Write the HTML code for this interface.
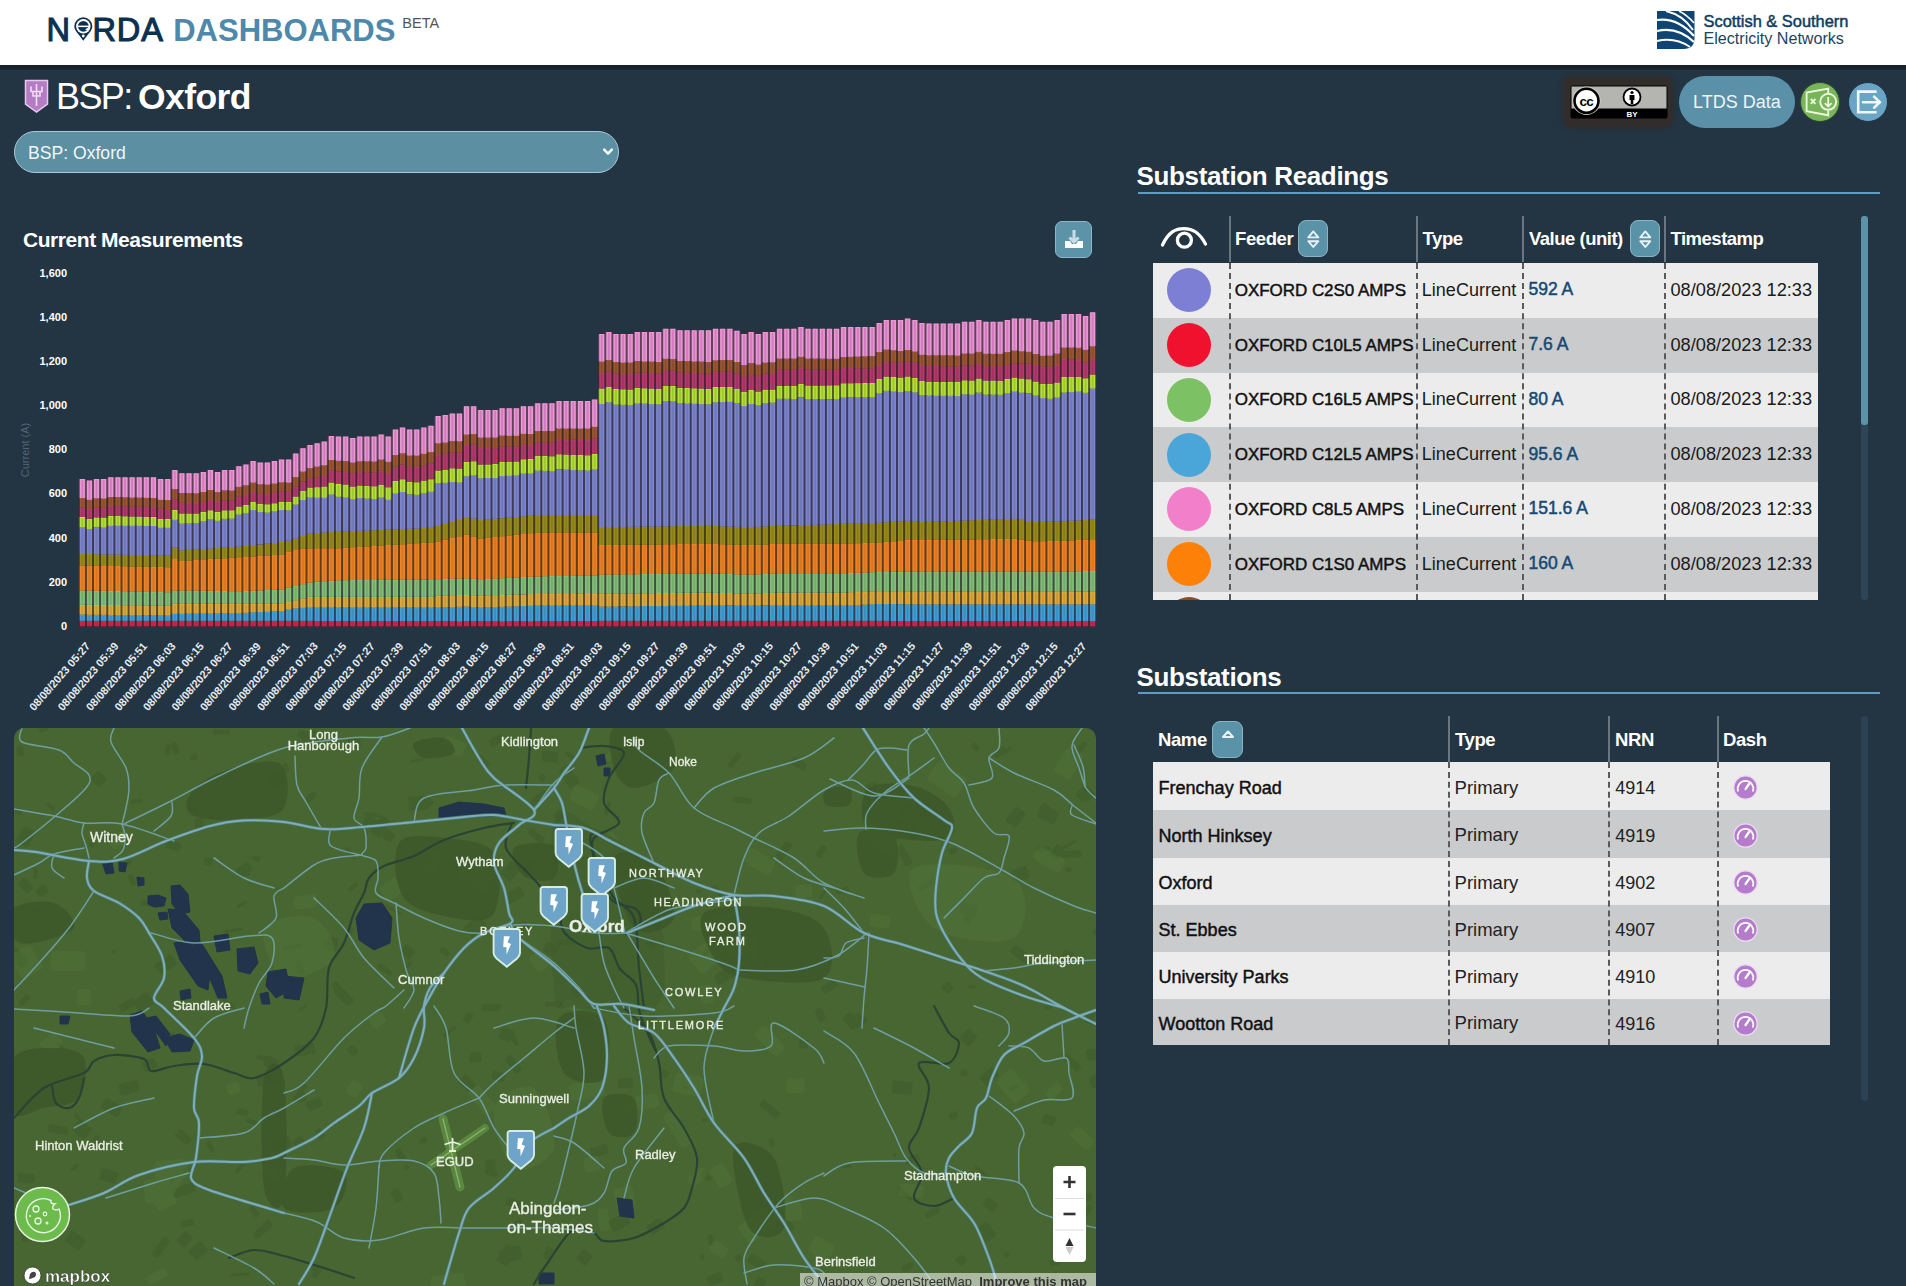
<!DOCTYPE html>
<html><head><meta charset="utf-8"><title>BSP: Oxford</title>
<style>
*{box-sizing:border-box;margin:0;padding:0}
html,body{width:1906px;height:1286px;overflow:hidden}
body{background:#233442;font-family:"Liberation Sans",sans-serif;position:relative;color:#fff}
.abs{position:absolute}
#hdr{left:0;top:0;width:1906px;height:65px;background:#fff}
#hdrline{left:0;top:65px;width:1906px;height:4px;background:#18222d}
#hdrline2{left:0;top:69px;width:1906px;height:1px;background:#1f2c3a}
.logo{left:47px;top:12px;font-size:32px;font-weight:bold;letter-spacing:0px;white-space:nowrap;line-height:36px}
.logo .n{color:#0f3a5c}.logo .d{color:#5190b3}
.beta{left:403px;top:14px;font-size:15px;color:#555;font-weight:normal;letter-spacing:0.5px}
.ssen{left:1703px;top:12px;line-height:17px;color:#0e3a5f;white-space:nowrap}
.ssen .a{font-size:16px;font-weight:bold;letter-spacing:-0.2px}
.ssen .b{font-size:16px;letter-spacing:-0.2px}
.title{left:58px;top:76px;font-size:38px;white-space:nowrap;line-height:42px;color:#fff}
.title b{font-weight:bold}
.select{left:14px;top:131px;width:605px;height:42px;border-radius:21px;background:#5b8fa1;border:1px solid #a6cad9}
.select span{position:absolute;left:13px;top:10.5px;font-size:17.6px;color:#f2f6f8}
.select i{position:absolute;right:9px;top:13px;width:8px;height:8px;border-right:2px solid #fff;border-bottom:2px solid #fff;transform:rotate(45deg)}
.ctitle{left:23px;top:228px;font-size:21px;font-weight:bold;white-space:nowrap;letter-spacing:-0.45px}
.dl{left:1055px;top:221px;width:37px;height:37px;border-radius:7px;background:#5c93a8;border:1px solid #8ab8ca}
.chart{position:absolute;left:0;top:0}
.yl{font:bold 11px "Liberation Sans",sans-serif;fill:#fff}
.xl{font:bold 11px "Liberation Sans",sans-serif;fill:#e4eaf0}
.yt{font:11px "Liberation Sans",sans-serif;fill:#566472}
.ml{font-family:"Liberation Sans",sans-serif;fill:#e9eee4;stroke:#e9eee4;stroke-width:0.35px}
.ml2{font-family:"Liberation Sans",sans-serif}
.map{left:14px;top:728px;width:1082px;height:558px;border-radius:10px 10px 0 0;overflow:hidden}
.sec{font-size:26px;font-weight:bold;white-space:nowrap;letter-spacing:-0.3px}
.uline{height:2px;background:#5b9ec2}
table{border-collapse:collapse;color:#111}
.rt{left:1153px;top:216px;width:665px}
.rt th{height:47px;color:#fff;font-size:18px;font-weight:bold;text-align:left;vertical-align:middle;padding-left:7px;border-left:2px solid #7d8a96;letter-spacing:-0.3px;white-space:nowrap}
.rt th:first-child{border-left:none}
.rt td{height:54.7px;font-size:17px;vertical-align:middle;white-space:nowrap;border-left:2px dashed #555;padding-left:6px}
.rt td:first-child{border-left:none}
.c0{width:76px;padding-left:14px!important}
.c1{width:188px;font-weight:bold;letter-spacing:-0.3px}
.c2{width:106px;letter-spacing:-0.1px}
.c3{width:142px;font-weight:bold;color:#1a4c72}
.c4{width:153px}
.dot{display:inline-block;width:44px;height:44px;border-radius:50%;vertical-align:middle}
.sort{display:inline-block;width:29px;height:37px;border-radius:7px;background:#5c93a8;border:1px solid #8ab8ca;vertical-align:middle;margin-left:5px;position:relative}
.clip{left:1153px;top:216px;width:670px;height:384px;overflow:hidden}
.st{left:1153px;top:716px;width:677px}
.st th{height:47px;color:#fff;font-size:18px;font-weight:bold;text-align:left;vertical-align:middle;padding-left:7px;border-left:2px solid #7d8a96;letter-spacing:-0.3px}
.st th:first-child{border-left:none;padding-left:5px}
.st td{height:47px;font-size:18px;vertical-align:middle;white-space:nowrap;border-left:2px dashed #555;padding-left:7px}
.st td:first-child{border-left:none;padding-left:5px}
.s1{width:295px;font-weight:bold;letter-spacing:-0.3px}
.s2{width:160px}
.s3{width:110px}
.s4{width:112px;padding-left:15px!important}
.gauge{display:inline-block;width:25px;height:25px;vertical-align:middle}
.gauge svg{display:block}
.scr{background:#2e4557;border-radius:3px}
.tx{white-space:nowrap}
.sbtn{border-radius:8px;background:#5a93a8;border:1px solid #88b6c7}
</style></head><body>
<div id="hdr" class="abs"></div>
<div id="hdrline" class="abs"></div>
<div id="hdrline2" class="abs"></div>
<svg class="abs" style="left:0;top:0" width="1906" height="65" viewBox="0 0 1906 65">
 <g font-family="Liberation Sans, sans-serif">
 <text x="46.6" y="40.6" font-size="32.5" fill="#0c3150" stroke="#0c3150" stroke-width="1.1">N</text>
 <path d="M74.3 26.3 A9 9 0 1 1 92.3 26.3 Q92.3 30 88 34.5 L83.3 40.8 L78.6 34.5 Q74.3 30 74.3 26.3 Z" fill="#0c3150"/>
 <circle cx="83.3" cy="26.3" r="7.2" fill="#fff"/>
 <circle cx="83.3" cy="26.3" r="5.4" fill="#0c3150"/>
 <rect x="77.5" y="25.6" width="11.6" height="1.5" fill="#fff"/>
 <path d="M88.9 27.1 L88.9 30.5 L85 29.5 Z" fill="#fff"/>
 <circle cx="83.3" cy="36" r="1.4" fill="#fff"/>
 <text x="92.6" y="40.6" font-size="32.5" fill="#0c3150" stroke="#0c3150" stroke-width="1.1" letter-spacing="0.8">RDA</text>
 <text x="173.2" y="40.6" font-size="31" font-weight="bold" fill="#4e88ab">DASHBOARDS</text>
 <text x="402.3" y="28.3" font-size="14.5" fill="#555">BETA</text>
 <text x="1703.5" y="27" font-size="16.4" fill="#0f3d5f" stroke="#0f3d5f" stroke-width="0.5">Scottish &amp; Southern</text>
 <text x="1703.5" y="43.6" font-size="16.1" fill="#1d4462">Electricity Networks</text>
 </g>
 <g transform="translate(1657 11)">
  <path d="M0 0 H37.5 V27 Q37.5 38 26.5 38 H0 Z" fill="#0f4572"/>
  <path d="M0 9 Q20 6 37 25" stroke="#fff" stroke-width="2.2" fill="none"/>
  <path d="M0 20 Q20 15 37 31" stroke="#fff" stroke-width="2.2" fill="none"/>
  <path d="M0 30 Q18 26 33 36" stroke="#fff" stroke-width="2" fill="none"/>
  <path d="M9 0 Q26 4 36 19" stroke="#fff" stroke-width="2" fill="none"/>
  <path d="M22 0 Q30 4 37 12" stroke="#fff" stroke-width="1.5" fill="none"/>
 </g>
</svg>
<svg class="abs" style="left:24px;top:79px" width="25" height="35" viewBox="0 0 25 35">
 <path d="M1.5 1.5 H23.5 V25 L12.5 33 L1.5 25 Z" fill="#b47cc2" stroke="#e8c8f0" stroke-width="1.5"/>
 <path d="M12.5 5 V27 M7 7.5 V12.5 H18 V7.5 M9 13 V17 H16 V13" stroke="#f3def7" stroke-width="1.6" fill="none"/>
</svg>
<div class="abs" style="left:56px;top:78.5px;font-size:36px;line-height:36px;white-space:nowrap;letter-spacing:-1.6px">BSP:</div>
<div class="abs" style="left:138px;top:78.5px;font-size:35.5px;line-height:36px;white-space:nowrap;font-weight:bold;letter-spacing:-0.6px">Oxford</div>

<div class="abs select"><span>BSP: Oxford</span></div>
<svg class="abs" style="left:601px;top:146px" width="14" height="12" viewBox="0 0 14 12"><path d="M3.2 3.6 L7 7.6 L10.8 3.6" fill="none" stroke="#f4fafc" stroke-width="2.6" stroke-linecap="round" stroke-linejoin="round"/></svg>

<div class="abs" style="left:1565px;top:78px;width:106px;height:48px;background:#322d2b;border-radius:6px;box-shadow:0 0 4px 2px #322d2b"></div>
<svg class="abs" style="left:1570px;top:85px" width="98" height="34" viewBox="0 0 98 34">
 <rect x="0.5" y="0.5" width="97" height="33" rx="2" fill="#000"/>
 <rect x="1.5" y="1.5" width="95" height="22" fill="#b4b5b0"/>
 <circle cx="16.5" cy="15.8" r="14.2" fill="#c9cac6"/>
 <circle cx="16.5" cy="15.8" r="12" fill="#fff" stroke="#000" stroke-width="2.6"/>
 <text x="16.3" y="20.6" text-anchor="middle" font-family="Liberation Sans" font-weight="bold" font-size="13.5" letter-spacing="-0.8" fill="#000">cc</text>
 <circle cx="62" cy="12" r="8.5" fill="#fff" stroke="#000" stroke-width="1.8"/>
 <circle cx="62" cy="7.5" r="1.6" fill="#000"/>
 <path d="M59.5 10 H64.5 V15 H63.3 V19 H60.7 V15 H59.5 Z" fill="#000"/>
 <text x="62" y="32" text-anchor="middle" font-family="Liberation Sans" font-weight="bold" font-size="8" fill="#fff">BY</text>
</svg>
<div class="abs" style="left:1679px;top:76px;width:116px;height:52px;border-radius:26px;background:#5b91a8"></div>
<div class="abs" style="left:1693px;top:92px;font-size:18px;color:#eef5f8;white-space:nowrap">LTDS Data</div>
<svg class="abs" style="left:1800px;top:82px" width="40" height="40" viewBox="0 0 40 40">
 <circle cx="20" cy="20" r="19.5" fill="#78b45a" stroke="#2c4a2e" stroke-width="1"/>
 <path d="M28.2 11.1 V6.6 L6.6 10.6 V29.2 L28.2 33.3 V28.7" fill="none" stroke="#ecf8dc" stroke-width="1.9" stroke-linejoin="miter"/>
 <path d="M10.8 16.8 L15.4 21.8 M15.4 16.8 L10.8 21.8" stroke="#ecf8dc" stroke-width="1.9"/>
 <circle cx="28.2" cy="19.8" r="8" fill="#78b45a" stroke="#ecf8dc" stroke-width="1.9"/>
 <path d="M28.2 15 V24.6 M24.8 21.2 L28.2 24.6 L31.6 21.2" fill="none" stroke="#ecf8dc" stroke-width="1.8"/>
</svg>
<svg class="abs" style="left:1848px;top:82px" width="40" height="40" viewBox="0 0 40 40">
 <circle cx="20" cy="20" r="19.5" fill="#6ba5c6" stroke="#1d3446" stroke-width="1"/>
 <path d="M28.6 9.6 H10.2 V30.3 H28.6" fill="none" stroke="#f0f8fc" stroke-width="2.6"/>
 <path d="M15 20.2 H32 M26.1 14.6 L31.8 20.2 L26.1 25.7" fill="none" stroke="#f0f8fc" stroke-width="2.6" stroke-linecap="round"/>
</svg>

<div class="abs ctitle">Current Measurements</div>
<div class="abs dl"><svg width="36" height="36" viewBox="0 0 36 36"><path d="M18 8 V20 M13.5 15.5 L18 20 L22.5 15.5" stroke="#c8dde6" stroke-width="3" fill="none"/><path d="M9 19 H14 L16 22 H20 L22 19 H27 V26 H9 Z" fill="#fff"/></svg></div>
<svg class="chart" width="1110" height="720" viewBox="0 0 1110 720"><text x="67" y="629.8" text-anchor="end" class="yl">0</text><text x="67" y="585.6" text-anchor="end" class="yl">200</text><text x="67" y="541.5" text-anchor="end" class="yl">400</text><text x="67" y="497.3" text-anchor="end" class="yl">600</text><text x="67" y="453.1" text-anchor="end" class="yl">800</text><text x="67" y="409.0" text-anchor="end" class="yl">1,000</text><text x="67" y="364.8" text-anchor="end" class="yl">1,200</text><text x="67" y="320.7" text-anchor="end" class="yl">1,400</text><text x="67" y="276.5" text-anchor="end" class="yl">1,600</text><path fill="#56192d" d="M78.8 620.8 L85.9 620.8 L85.9 620.8 L93.0 620.8 L93.0 620.8 L100.1 620.8 L100.1 620.8 L107.3 620.8 L107.3 620.8 L114.4 620.8 L114.4 620.8 L121.5 620.8 L121.5 620.8 L128.6 620.8 L128.6 620.8 L135.7 620.8 L135.7 620.8 L142.8 620.8 L142.8 620.8 L149.9 620.8 L149.9 620.8 L157.1 620.8 L157.1 620.8 L164.2 620.8 L164.2 620.8 L171.3 620.8 L171.3 620.8 L178.4 620.8 L178.4 620.8 L185.5 620.8 L185.5 620.8 L192.6 620.8 L192.6 620.8 L199.8 620.8 L199.8 620.8 L206.9 620.8 L206.9 620.8 L214.0 620.8 L214.0 620.8 L221.1 620.8 L221.1 620.8 L228.2 620.8 L228.2 620.8 L235.3 620.8 L235.3 620.8 L242.4 620.8 L242.4 620.8 L249.6 620.8 L249.6 620.8 L256.7 620.8 L256.7 620.8 L263.8 620.8 L263.8 620.8 L270.9 620.8 L270.9 620.8 L278.0 620.8 L278.0 620.8 L285.1 620.8 L285.1 620.8 L292.2 620.8 L292.2 620.8 L299.4 620.8 L299.4 620.8 L306.5 620.8 L306.5 620.8 L313.6 620.8 L313.6 620.9 L320.7 620.9 L320.7 621.0 L327.8 621.0 L327.8 621.0 L334.9 621.0 L334.9 621.1 L342.1 621.1 L342.1 621.1 L349.2 621.1 L349.2 621.1 L356.3 621.1 L356.3 621.1 L363.4 621.1 L363.4 621.1 L370.5 621.1 L370.5 621.1 L377.6 621.1 L377.6 621.1 L384.7 621.1 L384.7 621.1 L391.9 621.1 L391.9 621.1 L399.0 621.1 L399.0 621.1 L406.1 621.1 L406.1 621.1 L413.2 621.1 L413.2 621.1 L420.3 621.1 L420.3 621.1 L427.4 621.1 L427.4 621.1 L434.6 621.1 L434.6 621.1 L441.7 621.1 L441.7 621.1 L448.8 621.1 L448.8 621.1 L455.9 621.1 L455.9 621.1 L463.0 621.1 L463.0 621.1 L470.1 621.1 L470.1 621.1 L477.2 621.1 L477.2 621.1 L484.4 621.1 L484.4 621.1 L491.5 621.1 L491.5 621.1 L498.6 621.1 L498.6 621.1 L505.7 621.1 L505.7 621.1 L512.8 621.1 L512.8 621.1 L519.9 621.1 L519.9 621.1 L527.0 621.1 L527.0 621.1 L534.2 621.1 L534.2 621.1 L541.3 621.1 L541.3 621.1 L548.4 621.1 L548.4 621.1 L555.5 621.1 L555.5 621.1 L562.6 621.1 L562.6 621.1 L569.7 621.1 L569.7 621.1 L576.9 621.1 L576.9 621.1 L584.0 621.1 L584.0 621.1 L591.1 621.1 L591.1 621.1 L598.2 621.1 L598.2 620.8 L605.3 620.8 L605.3 620.8 L612.4 620.8 L612.4 620.8 L619.5 620.8 L619.5 620.8 L626.7 620.8 L626.7 620.8 L633.8 620.8 L633.8 620.8 L640.9 620.8 L640.9 620.8 L648.0 620.8 L648.0 620.8 L655.1 620.8 L655.1 620.8 L662.2 620.8 L662.2 620.8 L669.3 620.8 L669.3 620.8 L676.5 620.8 L676.5 620.8 L683.6 620.8 L683.6 620.8 L690.7 620.8 L690.7 620.8 L697.8 620.8 L697.8 620.8 L704.9 620.8 L704.9 620.8 L712.0 620.8 L712.0 620.8 L719.1 620.8 L719.1 620.8 L726.3 620.8 L726.3 620.8 L733.4 620.8 L733.4 620.8 L740.5 620.8 L740.5 620.8 L747.6 620.8 L747.6 620.8 L754.7 620.8 L754.7 620.8 L761.8 620.8 L761.8 620.8 L769.0 620.8 L769.0 620.8 L776.1 620.8 L776.1 620.8 L783.2 620.8 L783.2 620.8 L790.3 620.8 L790.3 620.8 L797.4 620.8 L797.4 620.8 L804.5 620.8 L804.5 620.8 L811.6 620.8 L811.6 620.8 L818.8 620.8 L818.8 620.8 L825.9 620.8 L825.9 620.8 L833.0 620.8 L833.0 620.8 L840.1 620.8 L840.1 620.8 L847.2 620.8 L847.2 620.8 L854.3 620.8 L854.3 620.8 L861.4 620.8 L861.4 620.8 L868.6 620.8 L868.6 620.8 L875.7 620.8 L875.7 620.8 L882.8 620.8 L882.8 620.8 L889.9 620.8 L889.9 620.9 L897.0 620.9 L897.0 621.0 L904.1 621.0 L904.1 621.0 L911.3 621.0 L911.3 621.0 L918.4 621.0 L918.4 621.0 L925.5 621.0 L925.5 621.0 L932.6 621.0 L932.6 621.0 L939.7 621.0 L939.7 621.0 L946.8 621.0 L946.8 621.0 L953.9 621.0 L953.9 621.0 L961.1 621.0 L961.1 621.0 L968.2 621.0 L968.2 621.0 L975.3 621.0 L975.3 621.0 L982.4 621.0 L982.4 621.0 L989.5 621.0 L989.5 621.0 L996.6 621.0 L996.6 621.0 L1003.8 621.0 L1003.8 621.0 L1010.9 621.0 L1010.9 621.0 L1018.0 621.0 L1018.0 621.0 L1025.1 621.0 L1025.1 621.0 L1032.2 621.0 L1032.2 621.0 L1039.3 621.0 L1039.3 621.0 L1046.4 621.0 L1046.4 621.0 L1053.6 621.0 L1053.6 621.0 L1060.7 621.0 L1060.7 621.0 L1067.8 621.0 L1067.8 621.0 L1074.9 621.0 L1074.9 621.0 L1082.0 621.0 L1082.0 620.9 L1089.1 620.9 L1089.1 620.9 L1096.2 620.9 L1096.2 626.3 L1089.1 626.3 L1089.1 626.3 L1082.0 626.3 L1082.0 626.3 L1074.9 626.3 L1074.9 626.3 L1067.8 626.3 L1067.8 626.3 L1060.7 626.3 L1060.7 626.3 L1053.6 626.3 L1053.6 626.3 L1046.4 626.3 L1046.4 626.3 L1039.3 626.3 L1039.3 626.3 L1032.2 626.3 L1032.2 626.3 L1025.1 626.3 L1025.1 626.3 L1018.0 626.3 L1018.0 626.3 L1010.9 626.3 L1010.9 626.3 L1003.8 626.3 L1003.8 626.3 L996.6 626.3 L996.6 626.3 L989.5 626.3 L989.5 626.3 L982.4 626.3 L982.4 626.3 L975.3 626.3 L975.3 626.3 L968.2 626.3 L968.2 626.3 L961.1 626.3 L961.1 626.3 L953.9 626.3 L953.9 626.3 L946.8 626.3 L946.8 626.3 L939.7 626.3 L939.7 626.3 L932.6 626.3 L932.6 626.3 L925.5 626.3 L925.5 626.3 L918.4 626.3 L918.4 626.3 L911.3 626.3 L911.3 626.3 L904.1 626.3 L904.1 626.3 L897.0 626.3 L897.0 626.3 L889.9 626.3 L889.9 626.3 L882.8 626.3 L882.8 626.3 L875.7 626.3 L875.7 626.3 L868.6 626.3 L868.6 626.3 L861.4 626.3 L861.4 626.3 L854.3 626.3 L854.3 626.3 L847.2 626.3 L847.2 626.3 L840.1 626.3 L840.1 626.3 L833.0 626.3 L833.0 626.3 L825.9 626.3 L825.9 626.3 L818.8 626.3 L818.8 626.3 L811.6 626.3 L811.6 626.3 L804.5 626.3 L804.5 626.3 L797.4 626.3 L797.4 626.3 L790.3 626.3 L790.3 626.3 L783.2 626.3 L783.2 626.3 L776.1 626.3 L776.1 626.3 L769.0 626.3 L769.0 626.3 L761.8 626.3 L761.8 626.3 L754.7 626.3 L754.7 626.3 L747.6 626.3 L747.6 626.3 L740.5 626.3 L740.5 626.3 L733.4 626.3 L733.4 626.3 L726.3 626.3 L726.3 626.3 L719.1 626.3 L719.1 626.3 L712.0 626.3 L712.0 626.3 L704.9 626.3 L704.9 626.3 L697.8 626.3 L697.8 626.3 L690.7 626.3 L690.7 626.3 L683.6 626.3 L683.6 626.3 L676.5 626.3 L676.5 626.3 L669.3 626.3 L669.3 626.3 L662.2 626.3 L662.2 626.3 L655.1 626.3 L655.1 626.3 L648.0 626.3 L648.0 626.3 L640.9 626.3 L640.9 626.3 L633.8 626.3 L633.8 626.3 L626.7 626.3 L626.7 626.3 L619.5 626.3 L619.5 626.3 L612.4 626.3 L612.4 626.3 L605.3 626.3 L605.3 626.3 L598.2 626.3 L598.2 626.3 L591.1 626.3 L591.1 626.3 L584.0 626.3 L584.0 626.3 L576.9 626.3 L576.9 626.3 L569.7 626.3 L569.7 626.3 L562.6 626.3 L562.6 626.3 L555.5 626.3 L555.5 626.3 L548.4 626.3 L548.4 626.3 L541.3 626.3 L541.3 626.3 L534.2 626.3 L534.2 626.3 L527.0 626.3 L527.0 626.3 L519.9 626.3 L519.9 626.3 L512.8 626.3 L512.8 626.3 L505.7 626.3 L505.7 626.3 L498.6 626.3 L498.6 626.3 L491.5 626.3 L491.5 626.3 L484.4 626.3 L484.4 626.3 L477.2 626.3 L477.2 626.3 L470.1 626.3 L470.1 626.3 L463.0 626.3 L463.0 626.3 L455.9 626.3 L455.9 626.3 L448.8 626.3 L448.8 626.3 L441.7 626.3 L441.7 626.3 L434.6 626.3 L434.6 626.3 L427.4 626.3 L427.4 626.3 L420.3 626.3 L420.3 626.3 L413.2 626.3 L413.2 626.3 L406.1 626.3 L406.1 626.3 L399.0 626.3 L399.0 626.3 L391.9 626.3 L391.9 626.3 L384.7 626.3 L384.7 626.3 L377.6 626.3 L377.6 626.3 L370.5 626.3 L370.5 626.3 L363.4 626.3 L363.4 626.3 L356.3 626.3 L356.3 626.3 L349.2 626.3 L349.2 626.3 L342.1 626.3 L342.1 626.3 L334.9 626.3 L334.9 626.3 L327.8 626.3 L327.8 626.3 L320.7 626.3 L320.7 626.3 L313.6 626.3 L313.6 626.3 L306.5 626.3 L306.5 626.3 L299.4 626.3 L299.4 626.3 L292.2 626.3 L292.2 626.3 L285.1 626.3 L285.1 626.3 L278.0 626.3 L278.0 626.3 L270.9 626.3 L270.9 626.3 L263.8 626.3 L263.8 626.3 L256.7 626.3 L256.7 626.3 L249.6 626.3 L249.6 626.3 L242.4 626.3 L242.4 626.3 L235.3 626.3 L235.3 626.3 L228.2 626.3 L228.2 626.3 L221.1 626.3 L221.1 626.3 L214.0 626.3 L214.0 626.3 L206.9 626.3 L206.9 626.3 L199.8 626.3 L199.8 626.3 L192.6 626.3 L192.6 626.3 L185.5 626.3 L185.5 626.3 L178.4 626.3 L178.4 626.3 L171.3 626.3 L171.3 626.3 L164.2 626.3 L164.2 626.3 L157.1 626.3 L157.1 626.3 L149.9 626.3 L149.9 626.3 L142.8 626.3 L142.8 626.3 L135.7 626.3 L135.7 626.3 L128.6 626.3 L128.6 626.3 L121.5 626.3 L121.5 626.3 L114.4 626.3 L114.4 626.3 L107.3 626.3 L107.3 626.3 L100.1 626.3 L100.1 626.3 L93.0 626.3 L93.0 626.3 L85.9 626.3 L85.9 626.3 L78.8 626.3Z"/><path fill="#27455c" d="M78.8 614.6 L85.9 614.6 L85.9 614.7 L93.0 614.7 L93.0 614.7 L100.1 614.7 L100.1 614.8 L107.3 614.8 L107.3 614.9 L114.4 614.9 L114.4 614.9 L121.5 614.9 L121.5 615.0 L128.6 615.0 L128.6 615.1 L135.7 615.1 L135.7 615.1 L142.8 615.1 L142.8 615.2 L149.9 615.2 L149.9 615.3 L157.1 615.3 L157.1 615.3 L164.2 615.3 L164.2 615.4 L171.3 615.4 L171.3 613.7 L178.4 613.7 L178.4 613.7 L185.5 613.7 L185.5 613.6 L192.6 613.6 L192.6 613.5 L199.8 613.5 L199.8 613.4 L206.9 613.4 L206.9 613.4 L214.0 613.4 L214.0 613.3 L221.1 613.3 L221.1 613.2 L228.2 613.2 L228.2 613.1 L235.3 613.1 L235.3 613.0 L242.4 613.0 L242.4 612.7 L249.6 612.7 L249.6 612.3 L256.7 612.3 L256.7 612.0 L263.8 612.0 L263.8 611.7 L270.9 611.7 L270.9 611.3 L278.0 611.3 L278.0 611.0 L285.1 611.0 L285.1 609.6 L292.2 609.6 L292.2 608.3 L299.4 608.3 L299.4 607.8 L306.5 607.8 L306.5 607.4 L313.6 607.4 L313.6 607.4 L320.7 607.4 L320.7 607.5 L327.8 607.5 L327.8 607.5 L334.9 607.5 L334.9 607.5 L342.1 607.5 L342.1 607.5 L349.2 607.5 L349.2 607.5 L356.3 607.5 L356.3 607.5 L363.4 607.5 L363.4 607.5 L370.5 607.5 L370.5 607.5 L377.6 607.5 L377.6 607.5 L384.7 607.5 L384.7 607.5 L391.9 607.5 L391.9 607.5 L399.0 607.5 L399.0 607.5 L406.1 607.5 L406.1 607.5 L413.2 607.5 L413.2 607.5 L420.3 607.5 L420.3 607.5 L427.4 607.5 L427.4 607.5 L434.6 607.5 L434.6 607.5 L441.7 607.5 L441.7 607.2 L448.8 607.2 L448.8 607.0 L455.9 607.0 L455.9 606.8 L463.0 606.8 L463.0 606.5 L470.1 606.5 L470.1 607.0 L477.2 607.0 L477.2 607.5 L484.4 607.5 L484.4 607.2 L491.5 607.2 L491.5 607.0 L498.6 607.0 L498.6 606.8 L505.7 606.8 L505.7 606.5 L512.8 606.5 L512.8 606.2 L519.9 606.2 L519.9 606.0 L527.0 606.0 L527.0 605.8 L534.2 605.8 L534.2 605.5 L541.3 605.5 L541.3 605.5 L548.4 605.5 L548.4 605.5 L555.5 605.5 L555.5 605.5 L562.6 605.5 L562.6 605.5 L569.7 605.5 L569.7 605.5 L576.9 605.5 L576.9 605.5 L584.0 605.5 L584.0 605.5 L591.1 605.5 L591.1 605.5 L598.2 605.5 L598.2 606.6 L605.3 606.6 L605.3 606.5 L612.4 606.5 L612.4 606.4 L619.5 606.4 L619.5 606.4 L626.7 606.4 L626.7 606.3 L633.8 606.3 L633.8 606.2 L640.9 606.2 L640.9 606.1 L648.0 606.1 L648.0 606.0 L655.1 606.0 L655.1 606.0 L662.2 606.0 L662.2 605.9 L669.3 605.9 L669.3 605.8 L676.5 605.8 L676.5 605.7 L683.6 605.7 L683.6 605.6 L690.7 605.6 L690.7 605.6 L697.8 605.6 L697.8 605.5 L704.9 605.5 L704.9 605.4 L712.0 605.4 L712.0 605.4 L719.1 605.4 L719.1 605.4 L726.3 605.4 L726.3 605.4 L733.4 605.4 L733.4 605.4 L740.5 605.4 L740.5 605.4 L747.6 605.4 L747.6 605.4 L754.7 605.4 L754.7 605.4 L761.8 605.4 L761.8 605.4 L769.0 605.4 L769.0 605.4 L776.1 605.4 L776.1 605.4 L783.2 605.4 L783.2 605.4 L790.3 605.4 L790.3 605.4 L797.4 605.4 L797.4 605.4 L804.5 605.4 L804.5 605.4 L811.6 605.4 L811.6 605.4 L818.8 605.4 L818.8 605.4 L825.9 605.4 L825.9 605.4 L833.0 605.4 L833.0 605.4 L840.1 605.4 L840.1 605.4 L847.2 605.4 L847.2 605.1 L854.3 605.1 L854.3 604.8 L861.4 604.8 L861.4 604.6 L868.6 604.6 L868.6 604.3 L875.7 604.3 L875.7 604.0 L882.8 604.0 L882.8 604.0 L889.9 604.0 L889.9 604.1 L897.0 604.1 L897.0 604.2 L904.1 604.2 L904.1 604.2 L911.3 604.2 L911.3 604.2 L918.4 604.2 L918.4 604.2 L925.5 604.2 L925.5 604.2 L932.6 604.2 L932.6 604.2 L939.7 604.2 L939.7 604.2 L946.8 604.2 L946.8 604.2 L953.9 604.2 L953.9 604.2 L961.1 604.2 L961.1 604.2 L968.2 604.2 L968.2 604.2 L975.3 604.2 L975.3 604.2 L982.4 604.2 L982.4 604.2 L989.5 604.2 L989.5 604.2 L996.6 604.2 L996.6 604.2 L1003.8 604.2 L1003.8 604.2 L1010.9 604.2 L1010.9 604.2 L1018.0 604.2 L1018.0 604.2 L1025.1 604.2 L1025.1 604.2 L1032.2 604.2 L1032.2 604.2 L1039.3 604.2 L1039.3 604.2 L1046.4 604.2 L1046.4 604.2 L1053.6 604.2 L1053.6 604.2 L1060.7 604.2 L1060.7 604.2 L1067.8 604.2 L1067.8 604.2 L1074.9 604.2 L1074.9 604.2 L1082.0 604.2 L1082.0 604.2 L1089.1 604.2 L1089.1 604.2 L1096.2 604.2 L1096.2 620.9 L1089.1 620.9 L1089.1 620.9 L1082.0 620.9 L1082.0 621.0 L1074.9 621.0 L1074.9 621.0 L1067.8 621.0 L1067.8 621.0 L1060.7 621.0 L1060.7 621.0 L1053.6 621.0 L1053.6 621.0 L1046.4 621.0 L1046.4 621.0 L1039.3 621.0 L1039.3 621.0 L1032.2 621.0 L1032.2 621.0 L1025.1 621.0 L1025.1 621.0 L1018.0 621.0 L1018.0 621.0 L1010.9 621.0 L1010.9 621.0 L1003.8 621.0 L1003.8 621.0 L996.6 621.0 L996.6 621.0 L989.5 621.0 L989.5 621.0 L982.4 621.0 L982.4 621.0 L975.3 621.0 L975.3 621.0 L968.2 621.0 L968.2 621.0 L961.1 621.0 L961.1 621.0 L953.9 621.0 L953.9 621.0 L946.8 621.0 L946.8 621.0 L939.7 621.0 L939.7 621.0 L932.6 621.0 L932.6 621.0 L925.5 621.0 L925.5 621.0 L918.4 621.0 L918.4 621.0 L911.3 621.0 L911.3 621.0 L904.1 621.0 L904.1 621.0 L897.0 621.0 L897.0 620.9 L889.9 620.9 L889.9 620.8 L882.8 620.8 L882.8 620.8 L875.7 620.8 L875.7 620.8 L868.6 620.8 L868.6 620.8 L861.4 620.8 L861.4 620.8 L854.3 620.8 L854.3 620.8 L847.2 620.8 L847.2 620.8 L840.1 620.8 L840.1 620.8 L833.0 620.8 L833.0 620.8 L825.9 620.8 L825.9 620.8 L818.8 620.8 L818.8 620.8 L811.6 620.8 L811.6 620.8 L804.5 620.8 L804.5 620.8 L797.4 620.8 L797.4 620.8 L790.3 620.8 L790.3 620.8 L783.2 620.8 L783.2 620.8 L776.1 620.8 L776.1 620.8 L769.0 620.8 L769.0 620.8 L761.8 620.8 L761.8 620.8 L754.7 620.8 L754.7 620.8 L747.6 620.8 L747.6 620.8 L740.5 620.8 L740.5 620.8 L733.4 620.8 L733.4 620.8 L726.3 620.8 L726.3 620.8 L719.1 620.8 L719.1 620.8 L712.0 620.8 L712.0 620.8 L704.9 620.8 L704.9 620.8 L697.8 620.8 L697.8 620.8 L690.7 620.8 L690.7 620.8 L683.6 620.8 L683.6 620.8 L676.5 620.8 L676.5 620.8 L669.3 620.8 L669.3 620.8 L662.2 620.8 L662.2 620.8 L655.1 620.8 L655.1 620.8 L648.0 620.8 L648.0 620.8 L640.9 620.8 L640.9 620.8 L633.8 620.8 L633.8 620.8 L626.7 620.8 L626.7 620.8 L619.5 620.8 L619.5 620.8 L612.4 620.8 L612.4 620.8 L605.3 620.8 L605.3 620.8 L598.2 620.8 L598.2 621.1 L591.1 621.1 L591.1 621.1 L584.0 621.1 L584.0 621.1 L576.9 621.1 L576.9 621.1 L569.7 621.1 L569.7 621.1 L562.6 621.1 L562.6 621.1 L555.5 621.1 L555.5 621.1 L548.4 621.1 L548.4 621.1 L541.3 621.1 L541.3 621.1 L534.2 621.1 L534.2 621.1 L527.0 621.1 L527.0 621.1 L519.9 621.1 L519.9 621.1 L512.8 621.1 L512.8 621.1 L505.7 621.1 L505.7 621.1 L498.6 621.1 L498.6 621.1 L491.5 621.1 L491.5 621.1 L484.4 621.1 L484.4 621.1 L477.2 621.1 L477.2 621.1 L470.1 621.1 L470.1 621.1 L463.0 621.1 L463.0 621.1 L455.9 621.1 L455.9 621.1 L448.8 621.1 L448.8 621.1 L441.7 621.1 L441.7 621.1 L434.6 621.1 L434.6 621.1 L427.4 621.1 L427.4 621.1 L420.3 621.1 L420.3 621.1 L413.2 621.1 L413.2 621.1 L406.1 621.1 L406.1 621.1 L399.0 621.1 L399.0 621.1 L391.9 621.1 L391.9 621.1 L384.7 621.1 L384.7 621.1 L377.6 621.1 L377.6 621.1 L370.5 621.1 L370.5 621.1 L363.4 621.1 L363.4 621.1 L356.3 621.1 L356.3 621.1 L349.2 621.1 L349.2 621.1 L342.1 621.1 L342.1 621.1 L334.9 621.1 L334.9 621.0 L327.8 621.0 L327.8 621.0 L320.7 621.0 L320.7 620.9 L313.6 620.9 L313.6 620.8 L306.5 620.8 L306.5 620.8 L299.4 620.8 L299.4 620.8 L292.2 620.8 L292.2 620.8 L285.1 620.8 L285.1 620.8 L278.0 620.8 L278.0 620.8 L270.9 620.8 L270.9 620.8 L263.8 620.8 L263.8 620.8 L256.7 620.8 L256.7 620.8 L249.6 620.8 L249.6 620.8 L242.4 620.8 L242.4 620.8 L235.3 620.8 L235.3 620.8 L228.2 620.8 L228.2 620.8 L221.1 620.8 L221.1 620.8 L214.0 620.8 L214.0 620.8 L206.9 620.8 L206.9 620.8 L199.8 620.8 L199.8 620.8 L192.6 620.8 L192.6 620.8 L185.5 620.8 L185.5 620.8 L178.4 620.8 L178.4 620.8 L171.3 620.8 L171.3 620.8 L164.2 620.8 L164.2 620.8 L157.1 620.8 L157.1 620.8 L149.9 620.8 L149.9 620.8 L142.8 620.8 L142.8 620.8 L135.7 620.8 L135.7 620.8 L128.6 620.8 L128.6 620.8 L121.5 620.8 L121.5 620.8 L114.4 620.8 L114.4 620.8 L107.3 620.8 L107.3 620.8 L100.1 620.8 L100.1 620.8 L93.0 620.8 L93.0 620.8 L85.9 620.8 L85.9 620.8 L78.8 620.8Z"/><path fill="#5e4926" d="M78.8 604.7 L85.9 604.7 L85.9 604.8 L93.0 604.8 L93.0 604.9 L100.1 604.9 L100.1 604.9 L107.3 604.9 L107.3 605.0 L114.4 605.0 L114.4 605.1 L121.5 605.1 L121.5 605.2 L128.6 605.2 L128.6 605.2 L135.7 605.2 L135.7 605.3 L142.8 605.3 L142.8 605.4 L149.9 605.4 L149.9 605.5 L157.1 605.5 L157.1 605.5 L164.2 605.5 L164.2 605.6 L171.3 605.6 L171.3 603.8 L178.4 603.8 L178.4 603.8 L185.5 603.8 L185.5 603.8 L192.6 603.8 L192.6 603.8 L199.8 603.8 L199.8 603.8 L206.9 603.8 L206.9 603.8 L214.0 603.8 L214.0 603.8 L221.1 603.8 L221.1 603.8 L228.2 603.8 L228.2 603.8 L235.3 603.8 L235.3 603.8 L242.4 603.8 L242.4 603.8 L249.6 603.8 L249.6 603.8 L256.7 603.8 L256.7 603.8 L263.8 603.8 L263.8 603.8 L270.9 603.8 L270.9 603.8 L278.0 603.8 L278.0 603.8 L285.1 603.8 L285.1 602.0 L292.2 602.0 L292.2 600.3 L299.4 600.3 L299.4 598.5 L306.5 598.5 L306.5 596.7 L313.6 596.7 L313.6 596.7 L320.7 596.7 L320.7 596.8 L327.8 596.8 L327.8 596.8 L334.9 596.8 L334.9 596.8 L342.1 596.8 L342.1 596.8 L349.2 596.8 L349.2 596.8 L356.3 596.8 L356.3 596.8 L363.4 596.8 L363.4 596.8 L370.5 596.8 L370.5 596.8 L377.6 596.8 L377.6 596.8 L384.7 596.8 L384.7 596.8 L391.9 596.8 L391.9 596.8 L399.0 596.8 L399.0 596.8 L406.1 596.8 L406.1 596.8 L413.2 596.8 L413.2 596.8 L420.3 596.8 L420.3 596.8 L427.4 596.8 L427.4 596.8 L434.6 596.8 L434.6 595.8 L441.7 595.8 L441.7 595.6 L448.8 595.6 L448.8 595.3 L455.9 595.3 L455.9 595.1 L463.0 595.1 L463.0 594.9 L470.1 594.9 L470.1 595.3 L477.2 595.3 L477.2 595.8 L484.4 595.8 L484.4 595.6 L491.5 595.6 L491.5 595.3 L498.6 595.3 L498.6 595.1 L505.7 595.1 L505.7 594.8 L512.8 594.8 L512.8 594.6 L519.9 594.6 L519.9 594.4 L527.0 594.4 L527.0 594.1 L534.2 594.1 L534.2 593.9 L541.3 593.9 L541.3 593.9 L548.4 593.9 L548.4 593.9 L555.5 593.9 L555.5 593.9 L562.6 593.9 L562.6 593.9 L569.7 593.9 L569.7 593.9 L576.9 593.9 L576.9 593.9 L584.0 593.9 L584.0 593.9 L591.1 593.9 L591.1 593.9 L598.2 593.9 L598.2 593.8 L605.3 593.8 L605.3 593.7 L612.4 593.7 L612.4 593.6 L619.5 593.6 L619.5 593.5 L626.7 593.5 L626.7 593.5 L633.8 593.5 L633.8 593.4 L640.9 593.4 L640.9 593.3 L648.0 593.3 L648.0 593.2 L655.1 593.2 L655.1 593.1 L662.2 593.1 L662.2 593.0 L669.3 593.0 L669.3 592.9 L676.5 592.9 L676.5 592.8 L683.6 592.8 L683.6 592.8 L690.7 592.8 L690.7 592.7 L697.8 592.7 L697.8 592.6 L704.9 592.6 L704.9 592.5 L712.0 592.5 L712.0 592.7 L719.1 592.7 L719.1 592.9 L726.3 592.9 L726.3 593.1 L733.4 593.1 L733.4 593.4 L740.5 593.4 L740.5 593.6 L747.6 593.6 L747.6 593.8 L754.7 593.8 L754.7 593.5 L761.8 593.5 L761.8 593.1 L769.0 593.1 L769.0 592.8 L776.1 592.8 L776.1 592.5 L783.2 592.5 L783.2 592.5 L790.3 592.5 L790.3 592.5 L797.4 592.5 L797.4 592.5 L804.5 592.5 L804.5 592.5 L811.6 592.5 L811.6 592.5 L818.8 592.5 L818.8 592.5 L825.9 592.5 L825.9 592.5 L833.0 592.5 L833.0 592.5 L840.1 592.5 L840.1 592.5 L847.2 592.5 L847.2 592.2 L854.3 592.2 L854.3 592.0 L861.4 592.0 L861.4 591.7 L868.6 591.7 L868.6 591.5 L875.7 591.5 L875.7 591.2 L882.8 591.2 L882.8 591.2 L889.9 591.2 L889.9 591.3 L897.0 591.3 L897.0 591.3 L904.1 591.3 L904.1 591.4 L911.3 591.4 L911.3 591.4 L918.4 591.4 L918.4 591.4 L925.5 591.4 L925.5 591.4 L932.6 591.4 L932.6 591.4 L939.7 591.4 L939.7 591.4 L946.8 591.4 L946.8 591.4 L953.9 591.4 L953.9 591.4 L961.1 591.4 L961.1 591.4 L968.2 591.4 L968.2 591.4 L975.3 591.4 L975.3 591.4 L982.4 591.4 L982.4 591.4 L989.5 591.4 L989.5 591.4 L996.6 591.4 L996.6 591.4 L1003.8 591.4 L1003.8 591.4 L1010.9 591.4 L1010.9 591.4 L1018.0 591.4 L1018.0 591.4 L1025.1 591.4 L1025.1 591.4 L1032.2 591.4 L1032.2 591.4 L1039.3 591.4 L1039.3 591.4 L1046.4 591.4 L1046.4 591.4 L1053.6 591.4 L1053.6 591.4 L1060.7 591.4 L1060.7 591.4 L1067.8 591.4 L1067.8 591.4 L1074.9 591.4 L1074.9 591.4 L1082.0 591.4 L1082.0 591.4 L1089.1 591.4 L1089.1 591.4 L1096.2 591.4 L1096.2 604.2 L1089.1 604.2 L1089.1 604.2 L1082.0 604.2 L1082.0 604.2 L1074.9 604.2 L1074.9 604.2 L1067.8 604.2 L1067.8 604.2 L1060.7 604.2 L1060.7 604.2 L1053.6 604.2 L1053.6 604.2 L1046.4 604.2 L1046.4 604.2 L1039.3 604.2 L1039.3 604.2 L1032.2 604.2 L1032.2 604.2 L1025.1 604.2 L1025.1 604.2 L1018.0 604.2 L1018.0 604.2 L1010.9 604.2 L1010.9 604.2 L1003.8 604.2 L1003.8 604.2 L996.6 604.2 L996.6 604.2 L989.5 604.2 L989.5 604.2 L982.4 604.2 L982.4 604.2 L975.3 604.2 L975.3 604.2 L968.2 604.2 L968.2 604.2 L961.1 604.2 L961.1 604.2 L953.9 604.2 L953.9 604.2 L946.8 604.2 L946.8 604.2 L939.7 604.2 L939.7 604.2 L932.6 604.2 L932.6 604.2 L925.5 604.2 L925.5 604.2 L918.4 604.2 L918.4 604.2 L911.3 604.2 L911.3 604.2 L904.1 604.2 L904.1 604.2 L897.0 604.2 L897.0 604.1 L889.9 604.1 L889.9 604.0 L882.8 604.0 L882.8 604.0 L875.7 604.0 L875.7 604.3 L868.6 604.3 L868.6 604.6 L861.4 604.6 L861.4 604.8 L854.3 604.8 L854.3 605.1 L847.2 605.1 L847.2 605.4 L840.1 605.4 L840.1 605.4 L833.0 605.4 L833.0 605.4 L825.9 605.4 L825.9 605.4 L818.8 605.4 L818.8 605.4 L811.6 605.4 L811.6 605.4 L804.5 605.4 L804.5 605.4 L797.4 605.4 L797.4 605.4 L790.3 605.4 L790.3 605.4 L783.2 605.4 L783.2 605.4 L776.1 605.4 L776.1 605.4 L769.0 605.4 L769.0 605.4 L761.8 605.4 L761.8 605.4 L754.7 605.4 L754.7 605.4 L747.6 605.4 L747.6 605.4 L740.5 605.4 L740.5 605.4 L733.4 605.4 L733.4 605.4 L726.3 605.4 L726.3 605.4 L719.1 605.4 L719.1 605.4 L712.0 605.4 L712.0 605.4 L704.9 605.4 L704.9 605.5 L697.8 605.5 L697.8 605.6 L690.7 605.6 L690.7 605.6 L683.6 605.6 L683.6 605.7 L676.5 605.7 L676.5 605.8 L669.3 605.8 L669.3 605.9 L662.2 605.9 L662.2 606.0 L655.1 606.0 L655.1 606.0 L648.0 606.0 L648.0 606.1 L640.9 606.1 L640.9 606.2 L633.8 606.2 L633.8 606.3 L626.7 606.3 L626.7 606.4 L619.5 606.4 L619.5 606.4 L612.4 606.4 L612.4 606.5 L605.3 606.5 L605.3 606.6 L598.2 606.6 L598.2 605.5 L591.1 605.5 L591.1 605.5 L584.0 605.5 L584.0 605.5 L576.9 605.5 L576.9 605.5 L569.7 605.5 L569.7 605.5 L562.6 605.5 L562.6 605.5 L555.5 605.5 L555.5 605.5 L548.4 605.5 L548.4 605.5 L541.3 605.5 L541.3 605.5 L534.2 605.5 L534.2 605.8 L527.0 605.8 L527.0 606.0 L519.9 606.0 L519.9 606.2 L512.8 606.2 L512.8 606.5 L505.7 606.5 L505.7 606.8 L498.6 606.8 L498.6 607.0 L491.5 607.0 L491.5 607.2 L484.4 607.2 L484.4 607.5 L477.2 607.5 L477.2 607.0 L470.1 607.0 L470.1 606.5 L463.0 606.5 L463.0 606.8 L455.9 606.8 L455.9 607.0 L448.8 607.0 L448.8 607.2 L441.7 607.2 L441.7 607.5 L434.6 607.5 L434.6 607.5 L427.4 607.5 L427.4 607.5 L420.3 607.5 L420.3 607.5 L413.2 607.5 L413.2 607.5 L406.1 607.5 L406.1 607.5 L399.0 607.5 L399.0 607.5 L391.9 607.5 L391.9 607.5 L384.7 607.5 L384.7 607.5 L377.6 607.5 L377.6 607.5 L370.5 607.5 L370.5 607.5 L363.4 607.5 L363.4 607.5 L356.3 607.5 L356.3 607.5 L349.2 607.5 L349.2 607.5 L342.1 607.5 L342.1 607.5 L334.9 607.5 L334.9 607.5 L327.8 607.5 L327.8 607.5 L320.7 607.5 L320.7 607.4 L313.6 607.4 L313.6 607.4 L306.5 607.4 L306.5 607.8 L299.4 607.8 L299.4 608.3 L292.2 608.3 L292.2 609.6 L285.1 609.6 L285.1 611.0 L278.0 611.0 L278.0 611.3 L270.9 611.3 L270.9 611.7 L263.8 611.7 L263.8 612.0 L256.7 612.0 L256.7 612.3 L249.6 612.3 L249.6 612.7 L242.4 612.7 L242.4 613.0 L235.3 613.0 L235.3 613.1 L228.2 613.1 L228.2 613.2 L221.1 613.2 L221.1 613.3 L214.0 613.3 L214.0 613.4 L206.9 613.4 L206.9 613.4 L199.8 613.4 L199.8 613.5 L192.6 613.5 L192.6 613.6 L185.5 613.6 L185.5 613.7 L178.4 613.7 L178.4 613.7 L171.3 613.7 L171.3 615.4 L164.2 615.4 L164.2 615.3 L157.1 615.3 L157.1 615.3 L149.9 615.3 L149.9 615.2 L142.8 615.2 L142.8 615.1 L135.7 615.1 L135.7 615.1 L128.6 615.1 L128.6 615.0 L121.5 615.0 L121.5 614.9 L114.4 614.9 L114.4 614.9 L107.3 614.9 L107.3 614.8 L100.1 614.8 L100.1 614.7 L93.0 614.7 L93.0 614.7 L85.9 614.7 L85.9 614.6 L78.8 614.6Z"/><path fill="#3e503d" d="M78.8 590.4 L85.9 590.4 L85.9 590.5 L93.0 590.5 L93.0 590.7 L100.1 590.7 L100.1 590.8 L107.3 590.8 L107.3 591.0 L114.4 591.0 L114.4 591.1 L121.5 591.1 L121.5 591.3 L128.6 591.3 L128.6 591.5 L135.7 591.5 L135.7 591.6 L142.8 591.6 L142.8 591.8 L149.9 591.8 L149.9 591.9 L157.1 591.9 L157.1 592.1 L164.2 592.1 L164.2 592.2 L171.3 592.2 L171.3 590.4 L178.4 590.4 L178.4 590.4 L185.5 590.4 L185.5 590.5 L192.6 590.5 L192.6 590.6 L199.8 590.6 L199.8 590.7 L206.9 590.7 L206.9 590.8 L214.0 590.8 L214.0 591.0 L221.1 591.0 L221.1 591.1 L228.2 591.1 L228.2 591.2 L235.3 591.2 L235.3 591.3 L242.4 591.3 L242.4 591.0 L249.6 591.0 L249.6 590.7 L256.7 590.7 L256.7 590.4 L263.8 590.4 L263.8 590.1 L270.9 590.1 L270.9 589.8 L278.0 589.8 L278.0 589.5 L285.1 589.5 L285.1 587.8 L292.2 587.8 L292.2 586.0 L299.4 586.0 L299.4 584.2 L306.5 584.2 L306.5 582.4 L313.6 582.4 L313.6 581.9 L320.7 581.9 L320.7 581.3 L327.8 581.3 L327.8 580.8 L334.9 580.8 L334.9 580.3 L342.1 580.3 L342.1 580.2 L349.2 580.2 L349.2 580.1 L356.3 580.1 L356.3 580.1 L363.4 580.1 L363.4 580.0 L370.5 580.0 L370.5 579.9 L377.6 579.9 L377.6 579.8 L384.7 579.8 L384.7 579.8 L391.9 579.8 L391.9 579.7 L399.0 579.7 L399.0 579.6 L406.1 579.6 L406.1 579.5 L413.2 579.5 L413.2 579.5 L420.3 579.5 L420.3 579.4 L427.4 579.4 L427.4 579.3 L434.6 579.3 L434.6 579.3 L441.7 579.3 L441.7 579.0 L448.8 579.0 L448.8 578.8 L455.9 578.8 L455.9 578.5 L463.0 578.5 L463.0 578.3 L470.1 578.3 L470.1 578.8 L477.2 578.8 L477.2 579.3 L484.4 579.3 L484.4 578.9 L491.5 578.9 L491.5 578.6 L498.6 578.6 L498.6 578.2 L505.7 578.2 L505.7 577.8 L512.8 577.8 L512.8 577.5 L519.9 577.5 L519.9 577.1 L527.0 577.1 L527.0 576.8 L534.2 576.8 L534.2 576.4 L541.3 576.4 L541.3 576.3 L548.4 576.3 L548.4 576.1 L555.5 576.1 L555.5 576.0 L562.6 576.0 L562.6 575.9 L569.7 575.9 L569.7 575.8 L576.9 575.8 L576.9 575.6 L584.0 575.6 L584.0 575.5 L591.1 575.5 L591.1 575.4 L598.2 575.4 L598.2 574.6 L605.3 574.6 L605.3 574.5 L612.4 574.5 L612.4 574.4 L619.5 574.4 L619.5 574.3 L626.7 574.3 L626.7 574.3 L633.8 574.3 L633.8 574.2 L640.9 574.2 L640.9 574.1 L648.0 574.1 L648.0 574.0 L655.1 574.0 L655.1 573.9 L662.2 573.9 L662.2 573.8 L669.3 573.8 L669.3 573.7 L676.5 573.7 L676.5 573.6 L683.6 573.6 L683.6 573.6 L690.7 573.6 L690.7 573.5 L697.8 573.5 L697.8 573.4 L704.9 573.4 L704.9 573.3 L712.0 573.3 L712.0 573.5 L719.1 573.5 L719.1 573.7 L726.3 573.7 L726.3 574.0 L733.4 574.0 L733.4 574.2 L740.5 574.2 L740.5 574.4 L747.6 574.4 L747.6 574.6 L754.7 574.6 L754.7 574.3 L761.8 574.3 L761.8 574.0 L769.0 574.0 L769.0 573.6 L776.1 573.6 L776.1 573.3 L783.2 573.3 L783.2 573.3 L790.3 573.3 L790.3 573.3 L797.4 573.3 L797.4 573.3 L804.5 573.3 L804.5 573.3 L811.6 573.3 L811.6 573.3 L818.8 573.3 L818.8 573.3 L825.9 573.3 L825.9 573.3 L833.0 573.3 L833.0 573.3 L840.1 573.3 L840.1 573.3 L847.2 573.3 L847.2 573.0 L854.3 573.0 L854.3 572.8 L861.4 572.8 L861.4 572.5 L868.6 572.5 L868.6 572.3 L875.7 572.3 L875.7 572.0 L882.8 572.0 L882.8 571.9 L889.9 571.9 L889.9 571.8 L897.0 571.8 L897.0 571.7 L904.1 571.7 L904.1 571.6 L911.3 571.6 L911.3 571.6 L918.4 571.6 L918.4 571.6 L925.5 571.6 L925.5 571.6 L932.6 571.6 L932.6 571.6 L939.7 571.6 L939.7 571.6 L946.8 571.6 L946.8 571.6 L953.9 571.6 L953.9 571.6 L961.1 571.6 L961.1 571.6 L968.2 571.6 L968.2 571.6 L975.3 571.6 L975.3 571.6 L982.4 571.6 L982.4 571.6 L989.5 571.6 L989.5 571.6 L996.6 571.6 L996.6 571.6 L1003.8 571.6 L1003.8 571.6 L1010.9 571.6 L1010.9 571.6 L1018.0 571.6 L1018.0 571.6 L1025.1 571.6 L1025.1 571.6 L1032.2 571.6 L1032.2 571.6 L1039.3 571.6 L1039.3 571.6 L1046.4 571.6 L1046.4 571.6 L1053.6 571.6 L1053.6 571.6 L1060.7 571.6 L1060.7 571.6 L1067.8 571.6 L1067.8 571.4 L1074.9 571.4 L1074.9 571.2 L1082.0 571.2 L1082.0 571.1 L1089.1 571.1 L1089.1 570.9 L1096.2 570.9 L1096.2 591.4 L1089.1 591.4 L1089.1 591.4 L1082.0 591.4 L1082.0 591.4 L1074.9 591.4 L1074.9 591.4 L1067.8 591.4 L1067.8 591.4 L1060.7 591.4 L1060.7 591.4 L1053.6 591.4 L1053.6 591.4 L1046.4 591.4 L1046.4 591.4 L1039.3 591.4 L1039.3 591.4 L1032.2 591.4 L1032.2 591.4 L1025.1 591.4 L1025.1 591.4 L1018.0 591.4 L1018.0 591.4 L1010.9 591.4 L1010.9 591.4 L1003.8 591.4 L1003.8 591.4 L996.6 591.4 L996.6 591.4 L989.5 591.4 L989.5 591.4 L982.4 591.4 L982.4 591.4 L975.3 591.4 L975.3 591.4 L968.2 591.4 L968.2 591.4 L961.1 591.4 L961.1 591.4 L953.9 591.4 L953.9 591.4 L946.8 591.4 L946.8 591.4 L939.7 591.4 L939.7 591.4 L932.6 591.4 L932.6 591.4 L925.5 591.4 L925.5 591.4 L918.4 591.4 L918.4 591.4 L911.3 591.4 L911.3 591.4 L904.1 591.4 L904.1 591.3 L897.0 591.3 L897.0 591.3 L889.9 591.3 L889.9 591.2 L882.8 591.2 L882.8 591.2 L875.7 591.2 L875.7 591.5 L868.6 591.5 L868.6 591.7 L861.4 591.7 L861.4 592.0 L854.3 592.0 L854.3 592.2 L847.2 592.2 L847.2 592.5 L840.1 592.5 L840.1 592.5 L833.0 592.5 L833.0 592.5 L825.9 592.5 L825.9 592.5 L818.8 592.5 L818.8 592.5 L811.6 592.5 L811.6 592.5 L804.5 592.5 L804.5 592.5 L797.4 592.5 L797.4 592.5 L790.3 592.5 L790.3 592.5 L783.2 592.5 L783.2 592.5 L776.1 592.5 L776.1 592.8 L769.0 592.8 L769.0 593.1 L761.8 593.1 L761.8 593.5 L754.7 593.5 L754.7 593.8 L747.6 593.8 L747.6 593.6 L740.5 593.6 L740.5 593.4 L733.4 593.4 L733.4 593.1 L726.3 593.1 L726.3 592.9 L719.1 592.9 L719.1 592.7 L712.0 592.7 L712.0 592.5 L704.9 592.5 L704.9 592.6 L697.8 592.6 L697.8 592.7 L690.7 592.7 L690.7 592.8 L683.6 592.8 L683.6 592.8 L676.5 592.8 L676.5 592.9 L669.3 592.9 L669.3 593.0 L662.2 593.0 L662.2 593.1 L655.1 593.1 L655.1 593.2 L648.0 593.2 L648.0 593.3 L640.9 593.3 L640.9 593.4 L633.8 593.4 L633.8 593.5 L626.7 593.5 L626.7 593.5 L619.5 593.5 L619.5 593.6 L612.4 593.6 L612.4 593.7 L605.3 593.7 L605.3 593.8 L598.2 593.8 L598.2 593.9 L591.1 593.9 L591.1 593.9 L584.0 593.9 L584.0 593.9 L576.9 593.9 L576.9 593.9 L569.7 593.9 L569.7 593.9 L562.6 593.9 L562.6 593.9 L555.5 593.9 L555.5 593.9 L548.4 593.9 L548.4 593.9 L541.3 593.9 L541.3 593.9 L534.2 593.9 L534.2 594.1 L527.0 594.1 L527.0 594.4 L519.9 594.4 L519.9 594.6 L512.8 594.6 L512.8 594.8 L505.7 594.8 L505.7 595.1 L498.6 595.1 L498.6 595.3 L491.5 595.3 L491.5 595.6 L484.4 595.6 L484.4 595.8 L477.2 595.8 L477.2 595.3 L470.1 595.3 L470.1 594.9 L463.0 594.9 L463.0 595.1 L455.9 595.1 L455.9 595.3 L448.8 595.3 L448.8 595.6 L441.7 595.6 L441.7 595.8 L434.6 595.8 L434.6 596.8 L427.4 596.8 L427.4 596.8 L420.3 596.8 L420.3 596.8 L413.2 596.8 L413.2 596.8 L406.1 596.8 L406.1 596.8 L399.0 596.8 L399.0 596.8 L391.9 596.8 L391.9 596.8 L384.7 596.8 L384.7 596.8 L377.6 596.8 L377.6 596.8 L370.5 596.8 L370.5 596.8 L363.4 596.8 L363.4 596.8 L356.3 596.8 L356.3 596.8 L349.2 596.8 L349.2 596.8 L342.1 596.8 L342.1 596.8 L334.9 596.8 L334.9 596.8 L327.8 596.8 L327.8 596.8 L320.7 596.8 L320.7 596.7 L313.6 596.7 L313.6 596.7 L306.5 596.7 L306.5 598.5 L299.4 598.5 L299.4 600.3 L292.2 600.3 L292.2 602.0 L285.1 602.0 L285.1 603.8 L278.0 603.8 L278.0 603.8 L270.9 603.8 L270.9 603.8 L263.8 603.8 L263.8 603.8 L256.7 603.8 L256.7 603.8 L249.6 603.8 L249.6 603.8 L242.4 603.8 L242.4 603.8 L235.3 603.8 L235.3 603.8 L228.2 603.8 L228.2 603.8 L221.1 603.8 L221.1 603.8 L214.0 603.8 L214.0 603.8 L206.9 603.8 L206.9 603.8 L199.8 603.8 L199.8 603.8 L192.6 603.8 L192.6 603.8 L185.5 603.8 L185.5 603.8 L178.4 603.8 L178.4 603.8 L171.3 603.8 L171.3 605.6 L164.2 605.6 L164.2 605.5 L157.1 605.5 L157.1 605.5 L149.9 605.5 L149.9 605.4 L142.8 605.4 L142.8 605.3 L135.7 605.3 L135.7 605.2 L128.6 605.2 L128.6 605.2 L121.5 605.2 L121.5 605.1 L114.4 605.1 L114.4 605.0 L107.3 605.0 L107.3 604.9 L100.1 604.9 L100.1 604.9 L93.0 604.9 L93.0 604.8 L85.9 604.8 L85.9 604.7 L78.8 604.7Z"/><path fill="#633b1d" d="M78.8 565.4 L85.9 565.4 L85.9 565.5 L93.0 565.5 L93.0 565.7 L100.1 565.7 L100.1 565.8 L107.3 565.8 L107.3 566.0 L114.4 566.0 L114.4 566.1 L121.5 566.1 L121.5 566.3 L128.6 566.3 L128.6 566.5 L135.7 566.5 L135.7 566.6 L142.8 566.6 L142.8 566.8 L149.9 566.8 L149.9 566.9 L157.1 566.9 L157.1 567.1 L164.2 567.1 L164.2 567.2 L171.3 567.2 L171.3 558.2 L178.4 558.2 L178.4 561.0 L185.5 561.0 L185.5 560.5 L192.6 560.5 L192.6 560.1 L199.8 560.1 L199.8 559.6 L206.9 559.6 L206.9 559.1 L214.0 559.1 L214.0 558.7 L221.1 558.7 L221.1 558.2 L228.2 558.2 L228.2 557.8 L235.3 557.8 L235.3 557.3 L242.4 557.3 L242.4 556.9 L249.6 556.9 L249.6 556.4 L256.7 556.4 L256.7 556.0 L263.8 556.0 L263.8 555.6 L270.9 555.6 L270.9 555.1 L278.0 555.1 L278.0 554.7 L285.1 554.7 L285.1 552.0 L292.2 552.0 L292.2 549.3 L299.4 549.3 L299.4 548.8 L306.5 548.8 L306.5 548.4 L313.6 548.4 L313.6 548.3 L320.7 548.3 L320.7 548.3 L327.8 548.3 L327.8 548.2 L334.9 548.2 L334.9 548.2 L342.1 548.2 L342.1 547.8 L349.2 547.8 L349.2 547.3 L356.3 547.3 L356.3 546.9 L363.4 546.9 L363.4 546.4 L370.5 546.4 L370.5 546.0 L377.6 546.0 L377.6 545.5 L384.7 545.5 L384.7 545.1 L391.9 545.1 L391.9 544.6 L399.0 544.6 L399.0 544.2 L406.1 544.2 L406.1 543.7 L413.2 543.7 L413.2 543.3 L420.3 543.3 L420.3 542.8 L427.4 542.8 L427.4 542.4 L434.6 542.4 L434.6 541.4 L441.7 541.4 L441.7 539.7 L448.8 539.7 L448.8 538.0 L455.9 538.0 L455.9 536.3 L463.0 536.3 L463.0 534.6 L470.1 534.6 L470.1 536.5 L477.2 536.5 L477.2 538.5 L484.4 538.5 L484.4 537.8 L491.5 537.8 L491.5 537.0 L498.6 537.0 L498.6 536.3 L505.7 536.3 L505.7 535.5 L512.8 535.5 L512.8 534.8 L519.9 534.8 L519.9 534.1 L527.0 534.1 L527.0 533.3 L534.2 533.3 L534.2 532.6 L541.3 532.6 L541.3 532.6 L548.4 532.6 L548.4 532.6 L555.5 532.6 L555.5 532.6 L562.6 532.6 L562.6 532.6 L569.7 532.6 L569.7 532.6 L576.9 532.6 L576.9 532.6 L584.0 532.6 L584.0 532.6 L591.1 532.6 L591.1 532.6 L598.2 532.6 L598.2 545.1 L605.3 545.1 L605.3 545.0 L612.4 545.0 L612.4 544.9 L619.5 544.9 L619.5 544.8 L626.7 544.8 L626.7 544.8 L633.8 544.8 L633.8 544.7 L640.9 544.7 L640.9 544.6 L648.0 544.6 L648.0 544.5 L655.1 544.5 L655.1 544.4 L662.2 544.4 L662.2 544.3 L669.3 544.3 L669.3 544.2 L676.5 544.2 L676.5 544.1 L683.6 544.1 L683.6 544.1 L690.7 544.1 L690.7 544.0 L697.8 544.0 L697.8 543.9 L704.9 543.9 L704.9 543.8 L712.0 543.8 L712.0 544.0 L719.1 544.0 L719.1 544.2 L726.3 544.2 L726.3 544.5 L733.4 544.5 L733.4 544.7 L740.5 544.7 L740.5 544.9 L747.6 544.9 L747.6 545.1 L754.7 545.1 L754.7 544.8 L761.8 544.8 L761.8 544.5 L769.0 544.5 L769.0 544.1 L776.1 544.1 L776.1 543.8 L783.2 543.8 L783.2 543.8 L790.3 543.8 L790.3 543.8 L797.4 543.8 L797.4 543.8 L804.5 543.8 L804.5 543.8 L811.6 543.8 L811.6 543.8 L818.8 543.8 L818.8 543.8 L825.9 543.8 L825.9 543.8 L833.0 543.8 L833.0 543.8 L840.1 543.8 L840.1 543.8 L847.2 543.8 L847.2 543.5 L854.3 543.5 L854.3 543.3 L861.4 543.3 L861.4 543.0 L868.6 543.0 L868.6 542.8 L875.7 542.8 L875.7 542.5 L882.8 542.5 L882.8 541.9 L889.9 541.9 L889.9 541.2 L897.0 541.2 L897.0 540.6 L904.1 540.6 L904.1 540.0 L911.3 540.0 L911.3 540.0 L918.4 540.0 L918.4 540.0 L925.5 540.0 L925.5 539.9 L932.6 539.9 L932.6 539.8 L939.7 539.8 L939.7 539.7 L946.8 539.7 L946.8 539.6 L953.9 539.6 L953.9 539.5 L961.1 539.5 L961.1 539.4 L968.2 539.4 L968.2 539.4 L975.3 539.4 L975.3 539.3 L982.4 539.3 L982.4 539.2 L989.5 539.2 L989.5 539.1 L996.6 539.1 L996.6 539.0 L1003.8 539.0 L1003.8 538.9 L1010.9 538.9 L1010.9 538.8 L1018.0 538.8 L1018.0 539.6 L1025.1 539.6 L1025.1 540.5 L1032.2 540.5 L1032.2 541.3 L1039.3 541.3 L1039.3 541.2 L1046.4 541.2 L1046.4 541.0 L1053.6 541.0 L1053.6 540.9 L1060.7 540.9 L1060.7 540.8 L1067.8 540.8 L1067.8 540.4 L1074.9 540.4 L1074.9 540.0 L1082.0 540.0 L1082.0 539.7 L1089.1 539.7 L1089.1 539.3 L1096.2 539.3 L1096.2 570.9 L1089.1 570.9 L1089.1 571.1 L1082.0 571.1 L1082.0 571.2 L1074.9 571.2 L1074.9 571.4 L1067.8 571.4 L1067.8 571.6 L1060.7 571.6 L1060.7 571.6 L1053.6 571.6 L1053.6 571.6 L1046.4 571.6 L1046.4 571.6 L1039.3 571.6 L1039.3 571.6 L1032.2 571.6 L1032.2 571.6 L1025.1 571.6 L1025.1 571.6 L1018.0 571.6 L1018.0 571.6 L1010.9 571.6 L1010.9 571.6 L1003.8 571.6 L1003.8 571.6 L996.6 571.6 L996.6 571.6 L989.5 571.6 L989.5 571.6 L982.4 571.6 L982.4 571.6 L975.3 571.6 L975.3 571.6 L968.2 571.6 L968.2 571.6 L961.1 571.6 L961.1 571.6 L953.9 571.6 L953.9 571.6 L946.8 571.6 L946.8 571.6 L939.7 571.6 L939.7 571.6 L932.6 571.6 L932.6 571.6 L925.5 571.6 L925.5 571.6 L918.4 571.6 L918.4 571.6 L911.3 571.6 L911.3 571.6 L904.1 571.6 L904.1 571.7 L897.0 571.7 L897.0 571.8 L889.9 571.8 L889.9 571.9 L882.8 571.9 L882.8 572.0 L875.7 572.0 L875.7 572.3 L868.6 572.3 L868.6 572.5 L861.4 572.5 L861.4 572.8 L854.3 572.8 L854.3 573.0 L847.2 573.0 L847.2 573.3 L840.1 573.3 L840.1 573.3 L833.0 573.3 L833.0 573.3 L825.9 573.3 L825.9 573.3 L818.8 573.3 L818.8 573.3 L811.6 573.3 L811.6 573.3 L804.5 573.3 L804.5 573.3 L797.4 573.3 L797.4 573.3 L790.3 573.3 L790.3 573.3 L783.2 573.3 L783.2 573.3 L776.1 573.3 L776.1 573.6 L769.0 573.6 L769.0 574.0 L761.8 574.0 L761.8 574.3 L754.7 574.3 L754.7 574.6 L747.6 574.6 L747.6 574.4 L740.5 574.4 L740.5 574.2 L733.4 574.2 L733.4 574.0 L726.3 574.0 L726.3 573.7 L719.1 573.7 L719.1 573.5 L712.0 573.5 L712.0 573.3 L704.9 573.3 L704.9 573.4 L697.8 573.4 L697.8 573.5 L690.7 573.5 L690.7 573.6 L683.6 573.6 L683.6 573.6 L676.5 573.6 L676.5 573.7 L669.3 573.7 L669.3 573.8 L662.2 573.8 L662.2 573.9 L655.1 573.9 L655.1 574.0 L648.0 574.0 L648.0 574.1 L640.9 574.1 L640.9 574.2 L633.8 574.2 L633.8 574.3 L626.7 574.3 L626.7 574.3 L619.5 574.3 L619.5 574.4 L612.4 574.4 L612.4 574.5 L605.3 574.5 L605.3 574.6 L598.2 574.6 L598.2 575.4 L591.1 575.4 L591.1 575.5 L584.0 575.5 L584.0 575.6 L576.9 575.6 L576.9 575.8 L569.7 575.8 L569.7 575.9 L562.6 575.9 L562.6 576.0 L555.5 576.0 L555.5 576.1 L548.4 576.1 L548.4 576.3 L541.3 576.3 L541.3 576.4 L534.2 576.4 L534.2 576.8 L527.0 576.8 L527.0 577.1 L519.9 577.1 L519.9 577.5 L512.8 577.5 L512.8 577.8 L505.7 577.8 L505.7 578.2 L498.6 578.2 L498.6 578.6 L491.5 578.6 L491.5 578.9 L484.4 578.9 L484.4 579.3 L477.2 579.3 L477.2 578.8 L470.1 578.8 L470.1 578.3 L463.0 578.3 L463.0 578.5 L455.9 578.5 L455.9 578.8 L448.8 578.8 L448.8 579.0 L441.7 579.0 L441.7 579.3 L434.6 579.3 L434.6 579.3 L427.4 579.3 L427.4 579.4 L420.3 579.4 L420.3 579.5 L413.2 579.5 L413.2 579.5 L406.1 579.5 L406.1 579.6 L399.0 579.6 L399.0 579.7 L391.9 579.7 L391.9 579.8 L384.7 579.8 L384.7 579.8 L377.6 579.8 L377.6 579.9 L370.5 579.9 L370.5 580.0 L363.4 580.0 L363.4 580.1 L356.3 580.1 L356.3 580.1 L349.2 580.1 L349.2 580.2 L342.1 580.2 L342.1 580.3 L334.9 580.3 L334.9 580.8 L327.8 580.8 L327.8 581.3 L320.7 581.3 L320.7 581.9 L313.6 581.9 L313.6 582.4 L306.5 582.4 L306.5 584.2 L299.4 584.2 L299.4 586.0 L292.2 586.0 L292.2 587.8 L285.1 587.8 L285.1 589.5 L278.0 589.5 L278.0 589.8 L270.9 589.8 L270.9 590.1 L263.8 590.1 L263.8 590.4 L256.7 590.4 L256.7 590.7 L249.6 590.7 L249.6 591.0 L242.4 591.0 L242.4 591.3 L235.3 591.3 L235.3 591.2 L228.2 591.2 L228.2 591.1 L221.1 591.1 L221.1 591.0 L214.0 591.0 L214.0 590.8 L206.9 590.8 L206.9 590.7 L199.8 590.7 L199.8 590.6 L192.6 590.6 L192.6 590.5 L185.5 590.5 L185.5 590.4 L178.4 590.4 L178.4 590.4 L171.3 590.4 L171.3 592.2 L164.2 592.2 L164.2 592.1 L157.1 592.1 L157.1 591.9 L149.9 591.9 L149.9 591.8 L142.8 591.8 L142.8 591.6 L135.7 591.6 L135.7 591.5 L128.6 591.5 L128.6 591.3 L121.5 591.3 L121.5 591.1 L114.4 591.1 L114.4 591.0 L107.3 591.0 L107.3 590.8 L100.1 590.8 L100.1 590.7 L93.0 590.7 L93.0 590.5 L85.9 590.5 L85.9 590.4 L78.8 590.4Z"/><path fill="#453d1a" d="M78.8 554.0 L85.9 554.0 L85.9 554.1 L93.0 554.1 L93.0 554.2 L100.1 554.2 L100.1 554.4 L107.3 554.4 L107.3 554.5 L114.4 554.5 L114.4 554.6 L121.5 554.6 L121.5 554.8 L128.6 554.8 L128.6 554.9 L135.7 554.9 L135.7 555.0 L142.8 555.0 L142.8 555.1 L149.9 555.1 L149.9 555.2 L157.1 555.2 L157.1 555.4 L164.2 555.4 L164.2 555.5 L171.3 555.5 L171.3 547.5 L178.4 547.5 L178.4 550.2 L185.5 550.2 L185.5 549.8 L192.6 549.8 L192.6 549.3 L199.8 549.3 L199.8 548.9 L206.9 548.9 L206.9 548.4 L214.0 548.4 L214.0 548.0 L221.1 548.0 L221.1 547.5 L228.2 547.5 L228.2 547.1 L235.3 547.1 L235.3 546.6 L242.4 546.6 L242.4 545.9 L249.6 545.9 L249.6 545.1 L256.7 545.1 L256.7 544.4 L263.8 544.4 L263.8 543.6 L270.9 543.6 L270.9 542.9 L278.0 542.9 L278.0 542.1 L285.1 542.1 L285.1 540.4 L292.2 540.4 L292.2 538.6 L299.4 538.6 L299.4 535.9 L306.5 535.9 L306.5 533.2 L313.6 533.2 L313.6 532.8 L320.7 532.8 L320.7 532.5 L327.8 532.5 L327.8 532.1 L334.9 532.1 L334.9 531.7 L342.1 531.7 L342.1 531.4 L349.2 531.4 L349.2 531.1 L356.3 531.1 L356.3 530.8 L363.4 530.8 L363.4 530.5 L370.5 530.5 L370.5 530.2 L377.6 530.2 L377.6 529.9 L384.7 529.9 L384.7 529.6 L391.9 529.6 L391.9 529.3 L399.0 529.3 L399.0 529.0 L406.1 529.0 L406.1 528.7 L413.2 528.7 L413.2 528.4 L420.3 528.4 L420.3 528.1 L427.4 528.1 L427.4 527.8 L434.6 527.8 L434.6 524.9 L441.7 524.9 L441.7 522.9 L448.8 522.9 L448.8 521.0 L455.9 521.0 L455.9 519.1 L463.0 519.1 L463.0 517.1 L470.1 517.1 L470.1 518.5 L477.2 518.5 L477.2 520.0 L484.4 520.0 L484.4 519.4 L491.5 519.4 L491.5 518.8 L498.6 518.8 L498.6 518.2 L505.7 518.2 L505.7 517.5 L512.8 517.5 L512.8 516.9 L519.9 516.9 L519.9 516.3 L527.0 516.3 L527.0 515.7 L534.2 515.7 L534.2 515.1 L541.3 515.1 L541.3 515.1 L548.4 515.1 L548.4 515.1 L555.5 515.1 L555.5 515.1 L562.6 515.1 L562.6 515.1 L569.7 515.1 L569.7 515.1 L576.9 515.1 L576.9 515.1 L584.0 515.1 L584.0 515.1 L591.1 515.1 L591.1 515.1 L598.2 515.1 L598.2 527.1 L605.3 527.1 L605.3 527.0 L612.4 527.0 L612.4 526.9 L619.5 526.9 L619.5 526.8 L626.7 526.8 L626.7 526.8 L633.8 526.8 L633.8 526.7 L640.9 526.7 L640.9 526.6 L648.0 526.6 L648.0 526.5 L655.1 526.5 L655.1 526.4 L662.2 526.4 L662.2 526.3 L669.3 526.3 L669.3 526.2 L676.5 526.2 L676.5 526.1 L683.6 526.1 L683.6 526.1 L690.7 526.1 L690.7 526.0 L697.8 526.0 L697.8 525.9 L704.9 525.9 L704.9 525.8 L712.0 525.8 L712.0 526.0 L719.1 526.0 L719.1 526.2 L726.3 526.2 L726.3 526.5 L733.4 526.5 L733.4 526.7 L740.5 526.7 L740.5 526.9 L747.6 526.9 L747.6 527.1 L754.7 527.1 L754.7 526.8 L761.8 526.8 L761.8 526.5 L769.0 526.5 L769.0 526.1 L776.1 526.1 L776.1 525.8 L783.2 525.8 L783.2 525.6 L790.3 525.6 L790.3 525.4 L797.4 525.4 L797.4 525.1 L804.5 525.1 L804.5 524.9 L811.6 524.9 L811.6 524.7 L818.8 524.7 L818.8 524.5 L825.9 524.5 L825.9 524.2 L833.0 524.2 L833.0 524.0 L840.1 524.0 L840.1 523.8 L847.2 523.8 L847.2 523.6 L854.3 523.6 L854.3 523.4 L861.4 523.4 L861.4 523.1 L868.6 523.1 L868.6 522.9 L875.7 522.9 L875.7 522.7 L882.8 522.7 L882.8 522.2 L889.9 522.2 L889.9 521.8 L897.0 521.8 L897.0 521.3 L904.1 521.3 L904.1 520.8 L911.3 520.8 L911.3 521.4 L918.4 521.4 L918.4 522.0 L925.5 522.0 L925.5 521.7 L932.6 521.7 L932.6 521.5 L939.7 521.5 L939.7 521.2 L946.8 521.2 L946.8 521.0 L953.9 521.0 L953.9 520.7 L961.1 520.7 L961.1 520.5 L968.2 520.5 L968.2 520.2 L975.3 520.2 L975.3 520.0 L982.4 520.0 L982.4 519.7 L989.5 519.7 L989.5 519.5 L996.6 519.5 L996.6 519.2 L1003.8 519.2 L1003.8 519.0 L1010.9 519.0 L1010.9 518.7 L1018.0 518.7 L1018.0 519.8 L1025.1 519.8 L1025.1 520.9 L1032.2 520.9 L1032.2 522.0 L1039.3 522.0 L1039.3 521.8 L1046.4 521.8 L1046.4 521.6 L1053.6 521.6 L1053.6 521.5 L1060.7 521.5 L1060.7 521.3 L1067.8 521.3 L1067.8 520.8 L1074.9 520.8 L1074.9 520.4 L1082.0 520.4 L1082.0 520.0 L1089.1 520.0 L1089.1 519.5 L1096.2 519.5 L1096.2 539.3 L1089.1 539.3 L1089.1 539.7 L1082.0 539.7 L1082.0 540.0 L1074.9 540.0 L1074.9 540.4 L1067.8 540.4 L1067.8 540.8 L1060.7 540.8 L1060.7 540.9 L1053.6 540.9 L1053.6 541.0 L1046.4 541.0 L1046.4 541.2 L1039.3 541.2 L1039.3 541.3 L1032.2 541.3 L1032.2 540.5 L1025.1 540.5 L1025.1 539.6 L1018.0 539.6 L1018.0 538.8 L1010.9 538.8 L1010.9 538.9 L1003.8 538.9 L1003.8 539.0 L996.6 539.0 L996.6 539.1 L989.5 539.1 L989.5 539.2 L982.4 539.2 L982.4 539.3 L975.3 539.3 L975.3 539.4 L968.2 539.4 L968.2 539.4 L961.1 539.4 L961.1 539.5 L953.9 539.5 L953.9 539.6 L946.8 539.6 L946.8 539.7 L939.7 539.7 L939.7 539.8 L932.6 539.8 L932.6 539.9 L925.5 539.9 L925.5 540.0 L918.4 540.0 L918.4 540.0 L911.3 540.0 L911.3 540.0 L904.1 540.0 L904.1 540.6 L897.0 540.6 L897.0 541.2 L889.9 541.2 L889.9 541.9 L882.8 541.9 L882.8 542.5 L875.7 542.5 L875.7 542.8 L868.6 542.8 L868.6 543.0 L861.4 543.0 L861.4 543.3 L854.3 543.3 L854.3 543.5 L847.2 543.5 L847.2 543.8 L840.1 543.8 L840.1 543.8 L833.0 543.8 L833.0 543.8 L825.9 543.8 L825.9 543.8 L818.8 543.8 L818.8 543.8 L811.6 543.8 L811.6 543.8 L804.5 543.8 L804.5 543.8 L797.4 543.8 L797.4 543.8 L790.3 543.8 L790.3 543.8 L783.2 543.8 L783.2 543.8 L776.1 543.8 L776.1 544.1 L769.0 544.1 L769.0 544.5 L761.8 544.5 L761.8 544.8 L754.7 544.8 L754.7 545.1 L747.6 545.1 L747.6 544.9 L740.5 544.9 L740.5 544.7 L733.4 544.7 L733.4 544.5 L726.3 544.5 L726.3 544.2 L719.1 544.2 L719.1 544.0 L712.0 544.0 L712.0 543.8 L704.9 543.8 L704.9 543.9 L697.8 543.9 L697.8 544.0 L690.7 544.0 L690.7 544.1 L683.6 544.1 L683.6 544.1 L676.5 544.1 L676.5 544.2 L669.3 544.2 L669.3 544.3 L662.2 544.3 L662.2 544.4 L655.1 544.4 L655.1 544.5 L648.0 544.5 L648.0 544.6 L640.9 544.6 L640.9 544.7 L633.8 544.7 L633.8 544.8 L626.7 544.8 L626.7 544.8 L619.5 544.8 L619.5 544.9 L612.4 544.9 L612.4 545.0 L605.3 545.0 L605.3 545.1 L598.2 545.1 L598.2 532.6 L591.1 532.6 L591.1 532.6 L584.0 532.6 L584.0 532.6 L576.9 532.6 L576.9 532.6 L569.7 532.6 L569.7 532.6 L562.6 532.6 L562.6 532.6 L555.5 532.6 L555.5 532.6 L548.4 532.6 L548.4 532.6 L541.3 532.6 L541.3 532.6 L534.2 532.6 L534.2 533.3 L527.0 533.3 L527.0 534.1 L519.9 534.1 L519.9 534.8 L512.8 534.8 L512.8 535.5 L505.7 535.5 L505.7 536.3 L498.6 536.3 L498.6 537.0 L491.5 537.0 L491.5 537.8 L484.4 537.8 L484.4 538.5 L477.2 538.5 L477.2 536.5 L470.1 536.5 L470.1 534.6 L463.0 534.6 L463.0 536.3 L455.9 536.3 L455.9 538.0 L448.8 538.0 L448.8 539.7 L441.7 539.7 L441.7 541.4 L434.6 541.4 L434.6 542.4 L427.4 542.4 L427.4 542.8 L420.3 542.8 L420.3 543.3 L413.2 543.3 L413.2 543.7 L406.1 543.7 L406.1 544.2 L399.0 544.2 L399.0 544.6 L391.9 544.6 L391.9 545.1 L384.7 545.1 L384.7 545.5 L377.6 545.5 L377.6 546.0 L370.5 546.0 L370.5 546.4 L363.4 546.4 L363.4 546.9 L356.3 546.9 L356.3 547.3 L349.2 547.3 L349.2 547.8 L342.1 547.8 L342.1 548.2 L334.9 548.2 L334.9 548.2 L327.8 548.2 L327.8 548.3 L320.7 548.3 L320.7 548.3 L313.6 548.3 L313.6 548.4 L306.5 548.4 L306.5 548.8 L299.4 548.8 L299.4 549.3 L292.2 549.3 L292.2 552.0 L285.1 552.0 L285.1 554.7 L278.0 554.7 L278.0 555.1 L270.9 555.1 L270.9 555.6 L263.8 555.6 L263.8 556.0 L256.7 556.0 L256.7 556.4 L249.6 556.4 L249.6 556.9 L242.4 556.9 L242.4 557.3 L235.3 557.3 L235.3 557.8 L228.2 557.8 L228.2 558.2 L221.1 558.2 L221.1 558.7 L214.0 558.7 L214.0 559.1 L206.9 559.1 L206.9 559.6 L199.8 559.6 L199.8 560.1 L192.6 560.1 L192.6 560.5 L185.5 560.5 L185.5 561.0 L178.4 561.0 L178.4 558.2 L171.3 558.2 L171.3 567.2 L164.2 567.2 L164.2 567.1 L157.1 567.1 L157.1 566.9 L149.9 566.9 L149.9 566.8 L142.8 566.8 L142.8 566.6 L135.7 566.6 L135.7 566.5 L128.6 566.5 L128.6 566.3 L121.5 566.3 L121.5 566.1 L114.4 566.1 L114.4 566.0 L107.3 566.0 L107.3 565.8 L100.1 565.8 L100.1 565.7 L93.0 565.7 L93.0 565.5 L85.9 565.5 L85.9 565.4 L78.8 565.4Z"/><path fill="#3b3b5a" d="M78.8 527.3 L85.9 527.3 L85.9 528.8 L93.0 528.8 L93.0 527.4 L100.1 527.4 L100.1 527.4 L107.3 527.4 L107.3 525.7 L114.4 525.7 L114.4 525.7 L121.5 525.7 L121.5 525.8 L128.6 525.8 L128.6 525.8 L135.7 525.8 L135.7 525.8 L142.8 525.8 L142.8 525.9 L149.9 525.9 L149.9 525.9 L157.1 525.9 L157.1 527.8 L164.2 527.8 L164.2 527.8 L171.3 527.8 L171.3 519.8 L178.4 519.8 L178.4 523.4 L185.5 523.4 L185.5 523.2 L192.6 523.2 L192.6 522.9 L199.8 522.9 L199.8 521.3 L206.9 521.3 L206.9 519.1 L214.0 519.1 L214.0 520.8 L221.1 520.8 L221.1 518.7 L228.2 518.7 L228.2 518.4 L235.3 518.4 L235.3 514.4 L242.4 514.4 L242.4 513.0 L249.6 513.0 L249.6 510.1 L256.7 510.1 L256.7 512.0 L263.8 512.0 L263.8 512.4 L270.9 512.4 L270.9 511.3 L278.0 511.3 L278.0 510.0 L285.1 510.0 L285.1 510.2 L292.2 510.2 L292.2 504.6 L299.4 504.6 L299.4 500.0 L306.5 500.0 L306.5 497.4 L313.6 497.4 L313.6 497.7 L320.7 497.7 L320.7 497.8 L327.8 497.8 L327.8 494.4 L334.9 494.4 L334.9 496.7 L342.1 496.7 L342.1 497.1 L349.2 497.1 L349.2 499.2 L356.3 499.2 L356.3 498.0 L363.4 498.0 L363.4 498.5 L370.5 498.5 L370.5 498.9 L377.6 498.9 L377.6 497.4 L384.7 497.4 L384.7 499.8 L391.9 499.8 L391.9 493.5 L399.0 493.5 L399.0 491.9 L406.1 491.9 L406.1 494.4 L413.2 494.4 L413.2 494.8 L420.3 494.8 L420.3 493.3 L427.4 493.3 L427.4 491.8 L434.6 491.8 L434.6 483.0 L441.7 483.0 L441.7 482.8 L448.8 482.8 L448.8 481.9 L455.9 481.9 L455.9 482.6 L463.0 482.6 L463.0 476.2 L470.1 476.2 L470.1 475.2 L477.2 475.2 L477.2 478.2 L484.4 478.2 L484.4 478.1 L491.5 478.1 L491.5 477.9 L498.6 477.9 L498.6 475.9 L505.7 475.9 L505.7 475.8 L512.8 475.8 L512.8 475.7 L519.9 475.7 L519.9 473.5 L527.0 473.5 L527.0 473.4 L534.2 473.4 L534.2 470.4 L541.3 470.4 L541.3 470.8 L548.4 470.8 L548.4 471.1 L555.5 471.1 L555.5 469.2 L562.6 469.2 L562.6 469.5 L569.7 469.5 L569.7 469.9 L576.9 469.9 L576.9 470.3 L584.0 470.3 L584.0 470.6 L591.1 470.6 L591.1 469.4 L598.2 469.4 L598.2 403.9 L605.3 403.9 L605.3 402.3 L612.4 402.3 L612.4 404.4 L619.5 404.4 L619.5 404.7 L626.7 404.7 L626.7 404.9 L633.8 404.9 L633.8 403.4 L640.9 403.4 L640.9 403.6 L648.0 403.6 L648.0 403.9 L655.1 403.9 L655.1 404.2 L662.2 404.2 L662.2 401.1 L669.3 401.1 L669.3 401.3 L676.5 401.3 L676.5 403.1 L683.6 403.1 L683.6 403.4 L690.7 403.4 L690.7 403.7 L697.8 403.7 L697.8 403.9 L704.9 403.9 L704.9 404.2 L712.0 404.2 L712.0 402.3 L719.1 402.3 L719.1 402.0 L726.3 402.0 L726.3 401.6 L733.4 401.6 L733.4 403.4 L740.5 403.4 L740.5 406.1 L747.6 406.1 L747.6 404.0 L754.7 404.0 L754.7 405.3 L761.8 405.3 L761.8 403.1 L769.0 403.1 L769.0 402.6 L776.1 402.6 L776.1 398.8 L783.2 398.8 L783.2 398.9 L790.3 398.9 L790.3 398.9 L797.4 398.9 L797.4 397.2 L804.5 397.2 L804.5 399.0 L811.6 399.0 L811.6 399.1 L818.8 399.1 L818.8 399.1 L825.9 399.1 L825.9 399.2 L833.0 399.2 L833.0 399.2 L840.1 399.2 L840.1 397.4 L847.2 397.4 L847.2 397.4 L854.3 397.4 L854.3 397.3 L861.4 397.3 L861.4 397.2 L868.6 397.2 L868.6 397.1 L875.7 397.1 L875.7 393.2 L882.8 393.2 L882.8 390.7 L889.9 390.7 L889.9 391.4 L897.0 391.4 L897.0 392.0 L904.1 392.0 L904.1 391.1 L911.3 391.1 L911.3 392.3 L918.4 392.3 L918.4 395.0 L925.5 395.0 L925.5 395.6 L932.6 395.6 L932.6 395.7 L939.7 395.7 L939.7 395.8 L946.8 395.8 L946.8 395.9 L953.9 395.9 L953.9 395.9 L961.1 395.9 L961.1 394.2 L968.2 394.2 L968.2 394.3 L975.3 394.3 L975.3 392.6 L982.4 392.6 L982.4 394.5 L989.5 394.5 L989.5 394.6 L996.6 394.6 L996.6 394.7 L1003.8 394.7 L1003.8 392.9 L1010.9 392.9 L1010.9 391.5 L1018.0 391.5 L1018.0 392.3 L1025.1 392.3 L1025.1 393.2 L1032.2 393.2 L1032.2 395.5 L1039.3 395.5 L1039.3 398.0 L1046.4 398.0 L1046.4 398.7 L1053.6 398.7 L1053.6 397.6 L1060.7 397.6 L1060.7 392.4 L1067.8 392.4 L1067.8 391.9 L1074.9 391.9 L1074.9 391.4 L1082.0 391.4 L1082.0 392.7 L1089.1 392.7 L1089.1 388.6 L1096.2 388.6 L1096.2 519.5 L1089.1 519.5 L1089.1 520.0 L1082.0 520.0 L1082.0 520.4 L1074.9 520.4 L1074.9 520.8 L1067.8 520.8 L1067.8 521.3 L1060.7 521.3 L1060.7 521.5 L1053.6 521.5 L1053.6 521.6 L1046.4 521.6 L1046.4 521.8 L1039.3 521.8 L1039.3 522.0 L1032.2 522.0 L1032.2 520.9 L1025.1 520.9 L1025.1 519.8 L1018.0 519.8 L1018.0 518.7 L1010.9 518.7 L1010.9 519.0 L1003.8 519.0 L1003.8 519.2 L996.6 519.2 L996.6 519.5 L989.5 519.5 L989.5 519.7 L982.4 519.7 L982.4 520.0 L975.3 520.0 L975.3 520.2 L968.2 520.2 L968.2 520.5 L961.1 520.5 L961.1 520.7 L953.9 520.7 L953.9 521.0 L946.8 521.0 L946.8 521.2 L939.7 521.2 L939.7 521.5 L932.6 521.5 L932.6 521.7 L925.5 521.7 L925.5 522.0 L918.4 522.0 L918.4 521.4 L911.3 521.4 L911.3 520.8 L904.1 520.8 L904.1 521.3 L897.0 521.3 L897.0 521.8 L889.9 521.8 L889.9 522.2 L882.8 522.2 L882.8 522.7 L875.7 522.7 L875.7 522.9 L868.6 522.9 L868.6 523.1 L861.4 523.1 L861.4 523.4 L854.3 523.4 L854.3 523.6 L847.2 523.6 L847.2 523.8 L840.1 523.8 L840.1 524.0 L833.0 524.0 L833.0 524.2 L825.9 524.2 L825.9 524.5 L818.8 524.5 L818.8 524.7 L811.6 524.7 L811.6 524.9 L804.5 524.9 L804.5 525.1 L797.4 525.1 L797.4 525.4 L790.3 525.4 L790.3 525.6 L783.2 525.6 L783.2 525.8 L776.1 525.8 L776.1 526.1 L769.0 526.1 L769.0 526.5 L761.8 526.5 L761.8 526.8 L754.7 526.8 L754.7 527.1 L747.6 527.1 L747.6 526.9 L740.5 526.9 L740.5 526.7 L733.4 526.7 L733.4 526.5 L726.3 526.5 L726.3 526.2 L719.1 526.2 L719.1 526.0 L712.0 526.0 L712.0 525.8 L704.9 525.8 L704.9 525.9 L697.8 525.9 L697.8 526.0 L690.7 526.0 L690.7 526.1 L683.6 526.1 L683.6 526.1 L676.5 526.1 L676.5 526.2 L669.3 526.2 L669.3 526.3 L662.2 526.3 L662.2 526.4 L655.1 526.4 L655.1 526.5 L648.0 526.5 L648.0 526.6 L640.9 526.6 L640.9 526.7 L633.8 526.7 L633.8 526.8 L626.7 526.8 L626.7 526.8 L619.5 526.8 L619.5 526.9 L612.4 526.9 L612.4 527.0 L605.3 527.0 L605.3 527.1 L598.2 527.1 L598.2 515.1 L591.1 515.1 L591.1 515.1 L584.0 515.1 L584.0 515.1 L576.9 515.1 L576.9 515.1 L569.7 515.1 L569.7 515.1 L562.6 515.1 L562.6 515.1 L555.5 515.1 L555.5 515.1 L548.4 515.1 L548.4 515.1 L541.3 515.1 L541.3 515.1 L534.2 515.1 L534.2 515.7 L527.0 515.7 L527.0 516.3 L519.9 516.3 L519.9 516.9 L512.8 516.9 L512.8 517.5 L505.7 517.5 L505.7 518.2 L498.6 518.2 L498.6 518.8 L491.5 518.8 L491.5 519.4 L484.4 519.4 L484.4 520.0 L477.2 520.0 L477.2 518.5 L470.1 518.5 L470.1 517.1 L463.0 517.1 L463.0 519.1 L455.9 519.1 L455.9 521.0 L448.8 521.0 L448.8 522.9 L441.7 522.9 L441.7 524.9 L434.6 524.9 L434.6 527.8 L427.4 527.8 L427.4 528.1 L420.3 528.1 L420.3 528.4 L413.2 528.4 L413.2 528.7 L406.1 528.7 L406.1 529.0 L399.0 529.0 L399.0 529.3 L391.9 529.3 L391.9 529.6 L384.7 529.6 L384.7 529.9 L377.6 529.9 L377.6 530.2 L370.5 530.2 L370.5 530.5 L363.4 530.5 L363.4 530.8 L356.3 530.8 L356.3 531.1 L349.2 531.1 L349.2 531.4 L342.1 531.4 L342.1 531.7 L334.9 531.7 L334.9 532.1 L327.8 532.1 L327.8 532.5 L320.7 532.5 L320.7 532.8 L313.6 532.8 L313.6 533.2 L306.5 533.2 L306.5 535.9 L299.4 535.9 L299.4 538.6 L292.2 538.6 L292.2 540.4 L285.1 540.4 L285.1 542.1 L278.0 542.1 L278.0 542.9 L270.9 542.9 L270.9 543.6 L263.8 543.6 L263.8 544.4 L256.7 544.4 L256.7 545.1 L249.6 545.1 L249.6 545.9 L242.4 545.9 L242.4 546.6 L235.3 546.6 L235.3 547.1 L228.2 547.1 L228.2 547.5 L221.1 547.5 L221.1 548.0 L214.0 548.0 L214.0 548.4 L206.9 548.4 L206.9 548.9 L199.8 548.9 L199.8 549.3 L192.6 549.3 L192.6 549.8 L185.5 549.8 L185.5 550.2 L178.4 550.2 L178.4 547.5 L171.3 547.5 L171.3 555.5 L164.2 555.5 L164.2 555.4 L157.1 555.4 L157.1 555.2 L149.9 555.2 L149.9 555.1 L142.8 555.1 L142.8 555.0 L135.7 555.0 L135.7 554.9 L128.6 554.9 L128.6 554.8 L121.5 554.8 L121.5 554.6 L114.4 554.6 L114.4 554.5 L107.3 554.5 L107.3 554.4 L100.1 554.4 L100.1 554.2 L93.0 554.2 L93.0 554.1 L85.9 554.1 L85.9 554.0 L78.8 554.0Z"/><path fill="#505c25" d="M78.8 517.0 L85.9 517.0 L85.9 518.7 L93.0 518.7 L93.0 517.3 L100.1 517.3 L100.1 517.5 L107.3 517.5 L107.3 515.9 L114.4 515.9 L114.4 516.0 L121.5 516.0 L121.5 516.2 L128.6 516.2 L128.6 516.4 L135.7 516.4 L135.7 516.5 L142.8 516.5 L142.8 516.7 L149.9 516.7 L149.9 516.9 L157.1 516.9 L157.1 518.8 L164.2 518.8 L164.2 519.0 L171.3 519.0 L171.3 510.0 L178.4 510.0 L178.4 513.5 L185.5 513.5 L185.5 513.5 L192.6 513.5 L192.6 513.5 L199.8 513.5 L199.8 512.1 L206.9 512.1 L206.9 510.2 L214.0 510.2 L214.0 512.1 L221.1 512.1 L221.1 510.2 L228.2 510.2 L228.2 510.2 L235.3 510.2 L235.3 506.4 L242.4 506.4 L242.4 505.0 L249.6 505.0 L249.6 502.1 L256.7 502.1 L256.7 504.0 L263.8 504.0 L263.8 504.3 L270.9 504.3 L270.9 503.2 L278.0 503.2 L278.0 501.9 L285.1 501.9 L285.1 502.1 L292.2 502.1 L292.2 496.6 L299.4 496.6 L299.4 491.1 L306.5 491.1 L306.5 487.6 L313.6 487.6 L313.6 487.2 L320.7 487.2 L320.7 486.6 L327.8 486.6 L327.8 482.5 L334.9 482.5 L334.9 484.0 L342.1 484.0 L342.1 484.5 L349.2 484.5 L349.2 486.5 L356.3 486.5 L356.3 485.4 L363.4 485.4 L363.4 485.8 L370.5 485.8 L370.5 486.3 L377.6 486.3 L377.6 484.7 L384.7 484.7 L384.7 487.2 L391.9 487.2 L391.9 480.8 L399.0 480.8 L399.0 479.3 L406.1 479.3 L406.1 481.7 L413.2 481.7 L413.2 482.2 L420.3 482.2 L420.3 480.6 L427.4 480.6 L427.4 479.2 L434.6 479.2 L434.6 470.4 L441.7 470.4 L441.7 469.7 L448.8 469.7 L448.8 468.3 L455.9 468.3 L455.9 468.6 L463.0 468.6 L463.0 461.7 L470.1 461.7 L470.1 461.2 L477.2 461.2 L477.2 464.6 L484.4 464.6 L484.4 464.4 L491.5 464.4 L491.5 464.1 L498.6 464.1 L498.6 461.9 L505.7 461.9 L505.7 461.7 L512.8 461.7 L512.8 461.4 L519.9 461.4 L519.9 459.2 L527.0 459.2 L527.0 458.9 L534.2 458.9 L534.2 455.8 L541.3 455.8 L541.3 456.1 L548.4 456.1 L548.4 456.3 L555.5 456.3 L555.5 454.2 L562.6 454.2 L562.6 454.5 L569.7 454.5 L569.7 454.8 L576.9 454.8 L576.9 455.0 L584.0 455.0 L584.0 455.2 L591.1 455.2 L591.1 453.9 L598.2 453.9 L598.2 388.5 L605.3 388.5 L605.3 386.9 L612.4 386.9 L612.4 389.0 L619.5 389.0 L619.5 389.3 L626.7 389.3 L626.7 389.5 L633.8 389.5 L633.8 388.0 L640.9 388.0 L640.9 388.2 L648.0 388.2 L648.0 388.5 L655.1 388.5 L655.1 388.8 L662.2 388.8 L662.2 385.7 L669.3 385.7 L669.3 385.9 L676.5 385.9 L676.5 387.7 L683.6 387.7 L683.6 388.0 L690.7 388.0 L690.7 388.3 L697.8 388.3 L697.8 388.5 L704.9 388.5 L704.9 388.8 L712.0 388.8 L712.0 387.1 L719.1 387.1 L719.1 387.0 L726.3 387.0 L726.3 386.9 L733.4 386.9 L733.4 388.8 L740.5 388.8 L740.5 391.8 L747.6 391.8 L747.6 389.9 L754.7 389.9 L754.7 391.5 L761.8 391.5 L761.8 389.6 L769.0 389.6 L769.0 389.5 L776.1 389.5 L776.1 386.0 L783.2 386.0 L783.2 385.9 L790.3 385.9 L790.3 385.8 L797.4 385.8 L797.4 383.9 L804.5 383.9 L804.5 385.6 L811.6 385.6 L811.6 385.5 L818.8 385.5 L818.8 385.4 L825.9 385.4 L825.9 385.3 L833.0 385.3 L833.0 385.2 L840.1 385.2 L840.1 383.3 L847.2 383.3 L847.2 383.2 L854.3 383.2 L854.3 383.1 L861.4 383.1 L861.4 383.0 L868.6 383.0 L868.6 382.9 L875.7 382.9 L875.7 379.0 L882.8 379.0 L882.8 376.4 L889.9 376.4 L889.9 377.0 L897.0 377.0 L897.0 377.5 L904.1 377.5 L904.1 376.5 L911.3 376.5 L911.3 378.0 L918.4 378.0 L918.4 381.1 L925.5 381.1 L925.5 381.7 L932.6 381.7 L932.6 381.8 L939.7 381.8 L939.7 381.9 L946.8 381.9 L946.8 381.9 L953.9 381.9 L953.9 382.0 L961.1 382.0 L961.1 380.3 L968.2 380.3 L968.2 380.4 L975.3 380.4 L975.3 378.6 L982.4 378.6 L982.4 380.5 L989.5 380.5 L989.5 380.6 L996.6 380.6 L996.6 380.7 L1003.8 380.7 L1003.8 378.9 L1010.9 378.9 L1010.9 377.5 L1018.0 377.5 L1018.0 378.4 L1025.1 378.4 L1025.1 379.2 L1032.2 379.2 L1032.2 381.6 L1039.3 381.6 L1039.3 383.7 L1046.4 383.7 L1046.4 384.1 L1053.6 384.1 L1053.6 382.6 L1060.7 382.6 L1060.7 377.0 L1067.8 377.0 L1067.8 376.8 L1074.9 376.8 L1074.9 376.7 L1082.0 376.7 L1082.0 378.3 L1089.1 378.3 L1089.1 374.5 L1096.2 374.5 L1096.2 388.6 L1089.1 388.6 L1089.1 392.7 L1082.0 392.7 L1082.0 391.4 L1074.9 391.4 L1074.9 391.9 L1067.8 391.9 L1067.8 392.4 L1060.7 392.4 L1060.7 397.6 L1053.6 397.6 L1053.6 398.7 L1046.4 398.7 L1046.4 398.0 L1039.3 398.0 L1039.3 395.5 L1032.2 395.5 L1032.2 393.2 L1025.1 393.2 L1025.1 392.3 L1018.0 392.3 L1018.0 391.5 L1010.9 391.5 L1010.9 392.9 L1003.8 392.9 L1003.8 394.7 L996.6 394.7 L996.6 394.6 L989.5 394.6 L989.5 394.5 L982.4 394.5 L982.4 392.6 L975.3 392.6 L975.3 394.3 L968.2 394.3 L968.2 394.2 L961.1 394.2 L961.1 395.9 L953.9 395.9 L953.9 395.9 L946.8 395.9 L946.8 395.8 L939.7 395.8 L939.7 395.7 L932.6 395.7 L932.6 395.6 L925.5 395.6 L925.5 395.0 L918.4 395.0 L918.4 392.3 L911.3 392.3 L911.3 391.1 L904.1 391.1 L904.1 392.0 L897.0 392.0 L897.0 391.4 L889.9 391.4 L889.9 390.7 L882.8 390.7 L882.8 393.2 L875.7 393.2 L875.7 397.1 L868.6 397.1 L868.6 397.2 L861.4 397.2 L861.4 397.3 L854.3 397.3 L854.3 397.4 L847.2 397.4 L847.2 397.4 L840.1 397.4 L840.1 399.2 L833.0 399.2 L833.0 399.2 L825.9 399.2 L825.9 399.1 L818.8 399.1 L818.8 399.1 L811.6 399.1 L811.6 399.0 L804.5 399.0 L804.5 397.2 L797.4 397.2 L797.4 398.9 L790.3 398.9 L790.3 398.9 L783.2 398.9 L783.2 398.8 L776.1 398.8 L776.1 402.6 L769.0 402.6 L769.0 403.1 L761.8 403.1 L761.8 405.3 L754.7 405.3 L754.7 404.0 L747.6 404.0 L747.6 406.1 L740.5 406.1 L740.5 403.4 L733.4 403.4 L733.4 401.6 L726.3 401.6 L726.3 402.0 L719.1 402.0 L719.1 402.3 L712.0 402.3 L712.0 404.2 L704.9 404.2 L704.9 403.9 L697.8 403.9 L697.8 403.7 L690.7 403.7 L690.7 403.4 L683.6 403.4 L683.6 403.1 L676.5 403.1 L676.5 401.3 L669.3 401.3 L669.3 401.1 L662.2 401.1 L662.2 404.2 L655.1 404.2 L655.1 403.9 L648.0 403.9 L648.0 403.6 L640.9 403.6 L640.9 403.4 L633.8 403.4 L633.8 404.9 L626.7 404.9 L626.7 404.7 L619.5 404.7 L619.5 404.4 L612.4 404.4 L612.4 402.3 L605.3 402.3 L605.3 403.9 L598.2 403.9 L598.2 469.4 L591.1 469.4 L591.1 470.6 L584.0 470.6 L584.0 470.3 L576.9 470.3 L576.9 469.9 L569.7 469.9 L569.7 469.5 L562.6 469.5 L562.6 469.2 L555.5 469.2 L555.5 471.1 L548.4 471.1 L548.4 470.8 L541.3 470.8 L541.3 470.4 L534.2 470.4 L534.2 473.4 L527.0 473.4 L527.0 473.5 L519.9 473.5 L519.9 475.7 L512.8 475.7 L512.8 475.8 L505.7 475.8 L505.7 475.9 L498.6 475.9 L498.6 477.9 L491.5 477.9 L491.5 478.1 L484.4 478.1 L484.4 478.2 L477.2 478.2 L477.2 475.2 L470.1 475.2 L470.1 476.2 L463.0 476.2 L463.0 482.6 L455.9 482.6 L455.9 481.9 L448.8 481.9 L448.8 482.8 L441.7 482.8 L441.7 483.0 L434.6 483.0 L434.6 491.8 L427.4 491.8 L427.4 493.3 L420.3 493.3 L420.3 494.8 L413.2 494.8 L413.2 494.4 L406.1 494.4 L406.1 491.9 L399.0 491.9 L399.0 493.5 L391.9 493.5 L391.9 499.8 L384.7 499.8 L384.7 497.4 L377.6 497.4 L377.6 498.9 L370.5 498.9 L370.5 498.5 L363.4 498.5 L363.4 498.0 L356.3 498.0 L356.3 499.2 L349.2 499.2 L349.2 497.1 L342.1 497.1 L342.1 496.7 L334.9 496.7 L334.9 494.4 L327.8 494.4 L327.8 497.8 L320.7 497.8 L320.7 497.7 L313.6 497.7 L313.6 497.4 L306.5 497.4 L306.5 500.0 L299.4 500.0 L299.4 504.6 L292.2 504.6 L292.2 510.2 L285.1 510.2 L285.1 510.0 L278.0 510.0 L278.0 511.3 L270.9 511.3 L270.9 512.4 L263.8 512.4 L263.8 512.0 L256.7 512.0 L256.7 510.1 L249.6 510.1 L249.6 513.0 L242.4 513.0 L242.4 514.4 L235.3 514.4 L235.3 518.4 L228.2 518.4 L228.2 518.7 L221.1 518.7 L221.1 520.8 L214.0 520.8 L214.0 519.1 L206.9 519.1 L206.9 521.3 L199.8 521.3 L199.8 522.9 L192.6 522.9 L192.6 523.2 L185.5 523.2 L185.5 523.4 L178.4 523.4 L178.4 519.8 L171.3 519.8 L171.3 527.8 L164.2 527.8 L164.2 527.8 L157.1 527.8 L157.1 525.9 L149.9 525.9 L149.9 525.9 L142.8 525.9 L142.8 525.8 L135.7 525.8 L135.7 525.8 L128.6 525.8 L128.6 525.8 L121.5 525.8 L121.5 525.7 L114.4 525.7 L114.4 525.7 L107.3 525.7 L107.3 527.4 L100.1 527.4 L100.1 527.4 L93.0 527.4 L93.0 528.8 L85.9 528.8 L85.9 527.3 L78.8 527.3Z"/><path fill="#4e2137" d="M78.8 507.3 L85.9 507.3 L85.9 508.9 L93.0 508.9 L93.0 507.6 L100.1 507.6 L100.1 507.7 L107.3 507.7 L107.3 506.1 L114.4 506.1 L114.4 506.2 L121.5 506.2 L121.5 506.3 L128.6 506.3 L128.6 506.5 L135.7 506.5 L135.7 506.6 L142.8 506.6 L142.8 506.8 L149.9 506.8 L149.9 506.9 L157.1 506.9 L157.1 508.9 L164.2 508.9 L164.2 509.0 L171.3 509.0 L171.3 499.2 L178.4 499.2 L178.4 502.8 L185.5 502.8 L185.5 502.9 L192.6 502.9 L192.6 503.0 L199.8 503.0 L199.8 501.7 L206.9 501.7 L206.9 500.0 L214.0 500.0 L214.0 502.0 L221.1 502.0 L221.1 500.2 L228.2 500.2 L228.2 500.3 L235.3 500.3 L235.3 496.6 L242.4 496.6 L242.4 495.0 L249.6 495.0 L249.6 492.0 L256.7 492.0 L256.7 493.7 L263.8 493.7 L263.8 493.9 L270.9 493.9 L270.9 492.7 L278.0 492.7 L278.0 491.2 L285.1 491.2 L285.1 491.8 L292.2 491.8 L292.2 486.7 L299.4 486.7 L299.4 481.7 L306.5 481.7 L306.5 478.7 L313.6 478.7 L313.6 477.3 L320.7 477.3 L320.7 475.8 L327.8 475.8 L327.8 470.8 L334.9 470.8 L334.9 471.4 L342.1 471.4 L342.1 471.6 L349.2 471.6 L349.2 473.4 L356.3 473.4 L356.3 472.1 L363.4 472.1 L363.4 472.3 L370.5 472.3 L370.5 472.5 L377.6 472.5 L377.6 470.7 L384.7 470.7 L384.7 473.0 L391.9 473.0 L391.9 466.4 L399.0 466.4 L399.0 464.6 L406.1 464.6 L406.1 466.8 L413.2 466.8 L413.2 467.1 L420.3 467.1 L420.3 465.3 L427.4 465.3 L427.4 463.6 L434.6 463.6 L434.6 454.9 L441.7 454.9 L441.7 453.9 L448.8 453.9 L448.8 452.3 L455.9 452.3 L455.9 452.3 L463.0 452.3 L463.0 445.1 L470.1 445.1 L470.1 444.6 L477.2 444.6 L477.2 448.0 L484.4 448.0 L484.4 448.1 L491.5 448.1 L491.5 448.2 L498.6 448.2 L498.6 446.5 L505.7 446.5 L505.7 446.6 L512.8 446.6 L512.8 446.7 L519.9 446.7 L519.9 444.8 L527.0 444.8 L527.0 445.0 L534.2 445.0 L534.2 442.2 L541.3 442.2 L541.3 442.2 L548.4 442.2 L548.4 442.2 L555.5 442.2 L555.5 439.9 L562.6 439.9 L562.6 439.9 L569.7 439.9 L569.7 439.9 L576.9 439.9 L576.9 439.9 L584.0 439.9 L584.0 439.9 L591.1 439.9 L591.1 438.3 L598.2 438.3 L598.2 373.1 L605.3 373.1 L605.3 371.5 L612.4 371.5 L612.4 373.6 L619.5 373.6 L619.5 373.9 L626.7 373.9 L626.7 374.1 L633.8 374.1 L633.8 372.6 L640.9 372.6 L640.9 372.9 L648.0 372.9 L648.0 373.1 L655.1 373.1 L655.1 373.4 L662.2 373.4 L662.2 370.3 L669.3 370.3 L669.3 370.6 L676.5 370.6 L676.5 372.4 L683.6 372.4 L683.6 372.7 L690.7 372.7 L690.7 372.9 L697.8 372.9 L697.8 373.2 L704.9 373.2 L704.9 373.5 L712.0 373.5 L712.0 371.8 L719.1 371.8 L719.1 371.7 L726.3 371.7 L726.3 371.5 L733.4 371.5 L733.4 373.5 L740.5 373.5 L740.5 376.4 L747.6 376.4 L747.6 374.5 L754.7 374.5 L754.7 375.8 L761.8 375.8 L761.8 373.6 L769.0 373.6 L769.0 373.1 L776.1 373.1 L776.1 369.3 L783.2 369.3 L783.2 369.4 L790.3 369.4 L790.3 369.4 L797.4 369.4 L797.4 367.7 L804.5 367.7 L804.5 369.5 L811.6 369.5 L811.6 369.6 L818.8 369.6 L818.8 369.6 L825.9 369.6 L825.9 369.7 L833.0 369.7 L833.0 369.7 L840.1 369.7 L840.1 367.9 L847.2 367.9 L847.2 368.1 L854.3 368.1 L854.3 368.3 L861.4 368.3 L861.4 368.4 L868.6 368.4 L868.6 368.6 L875.7 368.6 L875.7 364.9 L882.8 364.9 L882.8 362.1 L889.9 362.1 L889.9 362.5 L897.0 362.5 L897.0 362.8 L904.1 362.8 L904.1 361.6 L911.3 361.6 L911.3 362.5 L918.4 362.5 L918.4 365.0 L925.5 365.0 L925.5 365.8 L932.6 365.8 L932.6 366.0 L939.7 366.0 L939.7 366.2 L946.8 366.2 L946.8 366.5 L953.9 366.5 L953.9 366.7 L961.1 366.7 L961.1 365.2 L968.2 365.2 L968.2 365.4 L975.3 365.4 L975.3 363.8 L982.4 363.8 L982.4 365.9 L989.5 365.9 L989.5 366.1 L996.6 366.1 L996.6 366.3 L1003.8 366.3 L1003.8 364.8 L1010.9 364.8 L1010.9 363.5 L1018.0 363.5 L1018.0 363.5 L1025.1 363.5 L1025.1 363.5 L1032.2 363.5 L1032.2 365.0 L1039.3 365.0 L1039.3 366.8 L1046.4 366.8 L1046.4 366.8 L1053.6 366.8 L1053.6 365.0 L1060.7 365.0 L1060.7 359.0 L1067.8 359.0 L1067.8 359.5 L1074.9 359.5 L1074.9 359.9 L1082.0 359.9 L1082.0 362.2 L1089.1 362.2 L1089.1 359.0 L1096.2 359.0 L1096.2 374.5 L1089.1 374.5 L1089.1 378.3 L1082.0 378.3 L1082.0 376.7 L1074.9 376.7 L1074.9 376.8 L1067.8 376.8 L1067.8 377.0 L1060.7 377.0 L1060.7 382.6 L1053.6 382.6 L1053.6 384.1 L1046.4 384.1 L1046.4 383.7 L1039.3 383.7 L1039.3 381.6 L1032.2 381.6 L1032.2 379.2 L1025.1 379.2 L1025.1 378.4 L1018.0 378.4 L1018.0 377.5 L1010.9 377.5 L1010.9 378.9 L1003.8 378.9 L1003.8 380.7 L996.6 380.7 L996.6 380.6 L989.5 380.6 L989.5 380.5 L982.4 380.5 L982.4 378.6 L975.3 378.6 L975.3 380.4 L968.2 380.4 L968.2 380.3 L961.1 380.3 L961.1 382.0 L953.9 382.0 L953.9 381.9 L946.8 381.9 L946.8 381.9 L939.7 381.9 L939.7 381.8 L932.6 381.8 L932.6 381.7 L925.5 381.7 L925.5 381.1 L918.4 381.1 L918.4 378.0 L911.3 378.0 L911.3 376.5 L904.1 376.5 L904.1 377.5 L897.0 377.5 L897.0 377.0 L889.9 377.0 L889.9 376.4 L882.8 376.4 L882.8 379.0 L875.7 379.0 L875.7 382.9 L868.6 382.9 L868.6 383.0 L861.4 383.0 L861.4 383.1 L854.3 383.1 L854.3 383.2 L847.2 383.2 L847.2 383.3 L840.1 383.3 L840.1 385.2 L833.0 385.2 L833.0 385.3 L825.9 385.3 L825.9 385.4 L818.8 385.4 L818.8 385.5 L811.6 385.5 L811.6 385.6 L804.5 385.6 L804.5 383.9 L797.4 383.9 L797.4 385.8 L790.3 385.8 L790.3 385.9 L783.2 385.9 L783.2 386.0 L776.1 386.0 L776.1 389.5 L769.0 389.5 L769.0 389.6 L761.8 389.6 L761.8 391.5 L754.7 391.5 L754.7 389.9 L747.6 389.9 L747.6 391.8 L740.5 391.8 L740.5 388.8 L733.4 388.8 L733.4 386.9 L726.3 386.9 L726.3 387.0 L719.1 387.0 L719.1 387.1 L712.0 387.1 L712.0 388.8 L704.9 388.8 L704.9 388.5 L697.8 388.5 L697.8 388.3 L690.7 388.3 L690.7 388.0 L683.6 388.0 L683.6 387.7 L676.5 387.7 L676.5 385.9 L669.3 385.9 L669.3 385.7 L662.2 385.7 L662.2 388.8 L655.1 388.8 L655.1 388.5 L648.0 388.5 L648.0 388.2 L640.9 388.2 L640.9 388.0 L633.8 388.0 L633.8 389.5 L626.7 389.5 L626.7 389.3 L619.5 389.3 L619.5 389.0 L612.4 389.0 L612.4 386.9 L605.3 386.9 L605.3 388.5 L598.2 388.5 L598.2 453.9 L591.1 453.9 L591.1 455.2 L584.0 455.2 L584.0 455.0 L576.9 455.0 L576.9 454.8 L569.7 454.8 L569.7 454.5 L562.6 454.5 L562.6 454.2 L555.5 454.2 L555.5 456.3 L548.4 456.3 L548.4 456.1 L541.3 456.1 L541.3 455.8 L534.2 455.8 L534.2 458.9 L527.0 458.9 L527.0 459.2 L519.9 459.2 L519.9 461.4 L512.8 461.4 L512.8 461.7 L505.7 461.7 L505.7 461.9 L498.6 461.9 L498.6 464.1 L491.5 464.1 L491.5 464.4 L484.4 464.4 L484.4 464.6 L477.2 464.6 L477.2 461.2 L470.1 461.2 L470.1 461.7 L463.0 461.7 L463.0 468.6 L455.9 468.6 L455.9 468.3 L448.8 468.3 L448.8 469.7 L441.7 469.7 L441.7 470.4 L434.6 470.4 L434.6 479.2 L427.4 479.2 L427.4 480.6 L420.3 480.6 L420.3 482.2 L413.2 482.2 L413.2 481.7 L406.1 481.7 L406.1 479.3 L399.0 479.3 L399.0 480.8 L391.9 480.8 L391.9 487.2 L384.7 487.2 L384.7 484.7 L377.6 484.7 L377.6 486.3 L370.5 486.3 L370.5 485.8 L363.4 485.8 L363.4 485.4 L356.3 485.4 L356.3 486.5 L349.2 486.5 L349.2 484.5 L342.1 484.5 L342.1 484.0 L334.9 484.0 L334.9 482.5 L327.8 482.5 L327.8 486.6 L320.7 486.6 L320.7 487.2 L313.6 487.2 L313.6 487.6 L306.5 487.6 L306.5 491.1 L299.4 491.1 L299.4 496.6 L292.2 496.6 L292.2 502.1 L285.1 502.1 L285.1 501.9 L278.0 501.9 L278.0 503.2 L270.9 503.2 L270.9 504.3 L263.8 504.3 L263.8 504.0 L256.7 504.0 L256.7 502.1 L249.6 502.1 L249.6 505.0 L242.4 505.0 L242.4 506.4 L235.3 506.4 L235.3 510.2 L228.2 510.2 L228.2 510.2 L221.1 510.2 L221.1 512.1 L214.0 512.1 L214.0 510.2 L206.9 510.2 L206.9 512.1 L199.8 512.1 L199.8 513.5 L192.6 513.5 L192.6 513.5 L185.5 513.5 L185.5 513.5 L178.4 513.5 L178.4 510.0 L171.3 510.0 L171.3 519.0 L164.2 519.0 L164.2 518.8 L157.1 518.8 L157.1 516.9 L149.9 516.9 L149.9 516.7 L142.8 516.7 L142.8 516.5 L135.7 516.5 L135.7 516.4 L128.6 516.4 L128.6 516.2 L121.5 516.2 L121.5 516.0 L114.4 516.0 L114.4 515.9 L107.3 515.9 L107.3 517.5 L100.1 517.5 L100.1 517.3 L93.0 517.3 L93.0 518.7 L85.9 518.7 L85.9 517.0 L78.8 517.0Z"/><path fill="#462b23" d="M78.8 498.0 L85.9 498.0 L85.9 499.7 L93.0 499.7 L93.0 498.3 L100.1 498.3 L100.1 498.5 L107.3 498.5 L107.3 496.9 L114.4 496.9 L114.4 497.0 L121.5 497.0 L121.5 497.2 L128.6 497.2 L128.6 497.4 L135.7 497.4 L135.7 497.5 L142.8 497.5 L142.8 497.7 L149.9 497.7 L149.9 497.9 L157.1 497.9 L157.1 499.8 L164.2 499.8 L164.2 500.0 L171.3 500.0 L171.3 489.0 L178.4 489.0 L178.4 493.0 L185.5 493.0 L185.5 493.1 L192.6 493.1 L192.6 493.2 L199.8 493.2 L199.8 491.9 L206.9 491.9 L206.9 490.1 L214.0 490.1 L214.0 492.1 L221.1 492.1 L221.1 490.3 L228.2 490.3 L228.2 490.4 L235.3 490.4 L235.3 486.7 L242.4 486.7 L242.4 485.3 L249.6 485.3 L249.6 482.4 L256.7 482.4 L256.7 484.3 L263.8 484.3 L263.8 484.6 L270.9 484.6 L270.9 483.5 L278.0 483.5 L278.0 482.2 L285.1 482.2 L285.1 482.4 L292.2 482.4 L292.2 476.9 L299.4 476.9 L299.4 471.4 L306.5 471.4 L306.5 468.0 L313.6 468.0 L313.6 466.6 L320.7 466.6 L320.7 465.2 L327.8 465.2 L327.8 460.1 L334.9 460.1 L334.9 460.7 L342.1 460.7 L342.1 460.9 L349.2 460.9 L349.2 462.6 L356.3 462.6 L356.3 461.2 L363.4 461.2 L363.4 461.3 L370.5 461.3 L370.5 461.5 L377.6 461.5 L377.6 459.6 L384.7 459.6 L384.7 461.8 L391.9 461.8 L391.9 455.1 L399.0 455.1 L399.0 453.3 L406.1 453.3 L406.1 455.4 L413.2 455.4 L413.2 455.6 L420.3 455.6 L420.3 453.7 L427.4 453.7 L427.4 452.0 L434.6 452.0 L434.6 443.2 L441.7 443.2 L441.7 442.4 L448.8 442.4 L448.8 441.1 L455.9 441.1 L455.9 441.3 L463.0 441.3 L463.0 434.4 L470.1 434.4 L470.1 433.9 L477.2 433.9 L477.2 437.4 L484.4 437.4 L484.4 437.4 L491.5 437.4 L491.5 437.5 L498.6 437.5 L498.6 435.6 L505.7 435.6 L505.7 435.7 L512.8 435.7 L512.8 435.7 L519.9 435.7 L519.9 433.8 L527.0 433.8 L527.0 433.9 L534.2 433.9 L534.2 431.0 L541.3 431.0 L541.3 430.9 L548.4 430.9 L548.4 430.9 L555.5 430.9 L555.5 428.6 L562.6 428.6 L562.6 428.5 L569.7 428.5 L569.7 428.4 L576.9 428.4 L576.9 428.4 L584.0 428.4 L584.0 428.4 L591.1 428.4 L591.1 426.7 L598.2 426.7 L598.2 361.6 L605.3 361.6 L605.3 360.0 L612.4 360.0 L612.4 362.1 L619.5 362.1 L619.5 362.4 L626.7 362.4 L626.7 362.6 L633.8 362.6 L633.8 361.1 L640.9 361.1 L640.9 361.3 L648.0 361.3 L648.0 361.6 L655.1 361.6 L655.1 361.9 L662.2 361.9 L662.2 358.8 L669.3 358.8 L669.3 359.0 L676.5 359.0 L676.5 360.8 L683.6 360.8 L683.6 361.1 L690.7 361.1 L690.7 361.4 L697.8 361.4 L697.8 361.6 L704.9 361.6 L704.9 361.9 L712.0 361.9 L712.0 360.2 L719.1 360.2 L719.1 360.1 L726.3 360.1 L726.3 360.0 L733.4 360.0 L733.4 361.9 L740.5 361.9 L740.5 364.9 L747.6 364.9 L747.6 363.0 L754.7 363.0 L754.7 364.5 L761.8 364.5 L761.8 362.4 L769.0 362.4 L769.0 362.2 L776.1 362.2 L776.1 358.5 L783.2 358.5 L783.2 358.6 L790.3 358.6 L790.3 358.6 L797.4 358.6 L797.4 356.8 L804.5 356.8 L804.5 358.6 L811.6 358.6 L811.6 358.7 L818.8 358.7 L818.8 358.7 L825.9 358.7 L825.9 358.7 L833.0 358.7 L833.0 358.7 L840.1 358.7 L840.1 356.9 L847.2 356.9 L847.2 356.7 L854.3 356.7 L854.3 356.5 L861.4 356.5 L861.4 356.3 L868.6 356.3 L868.6 356.1 L875.7 356.1 L875.7 352.1 L882.8 352.1 L882.8 349.6 L889.9 349.6 L889.9 350.3 L897.0 350.3 L897.0 350.9 L904.1 350.9 L904.1 350.0 L911.3 350.0 L911.3 351.6 L918.4 351.6 L918.4 354.7 L925.5 354.7 L925.5 355.3 L932.6 355.3 L932.6 355.3 L939.7 355.3 L939.7 355.3 L946.8 355.3 L946.8 355.3 L953.9 355.3 L953.9 355.4 L961.1 355.4 L961.1 353.6 L968.2 353.6 L968.2 353.6 L975.3 353.6 L975.3 351.9 L982.4 351.9 L982.4 353.7 L989.5 353.7 L989.5 353.7 L996.6 353.7 L996.6 353.8 L1003.8 353.8 L1003.8 352.0 L1010.9 352.0 L1010.9 350.5 L1018.0 350.5 L1018.0 351.2 L1025.1 351.2 L1025.1 351.8 L1032.2 351.8 L1032.2 354.0 L1039.3 354.0 L1039.3 355.7 L1046.4 355.7 L1046.4 355.5 L1053.6 355.5 L1053.6 353.6 L1060.7 353.6 L1060.7 347.5 L1067.8 347.5 L1067.8 347.6 L1074.9 347.6 L1074.9 347.8 L1082.0 347.8 L1082.0 349.7 L1089.1 349.7 L1089.1 346.2 L1096.2 346.2 L1096.2 359.0 L1089.1 359.0 L1089.1 362.2 L1082.0 362.2 L1082.0 359.9 L1074.9 359.9 L1074.9 359.5 L1067.8 359.5 L1067.8 359.0 L1060.7 359.0 L1060.7 365.0 L1053.6 365.0 L1053.6 366.8 L1046.4 366.8 L1046.4 366.8 L1039.3 366.8 L1039.3 365.0 L1032.2 365.0 L1032.2 363.5 L1025.1 363.5 L1025.1 363.5 L1018.0 363.5 L1018.0 363.5 L1010.9 363.5 L1010.9 364.8 L1003.8 364.8 L1003.8 366.3 L996.6 366.3 L996.6 366.1 L989.5 366.1 L989.5 365.9 L982.4 365.9 L982.4 363.8 L975.3 363.8 L975.3 365.4 L968.2 365.4 L968.2 365.2 L961.1 365.2 L961.1 366.7 L953.9 366.7 L953.9 366.5 L946.8 366.5 L946.8 366.2 L939.7 366.2 L939.7 366.0 L932.6 366.0 L932.6 365.8 L925.5 365.8 L925.5 365.0 L918.4 365.0 L918.4 362.5 L911.3 362.5 L911.3 361.6 L904.1 361.6 L904.1 362.8 L897.0 362.8 L897.0 362.5 L889.9 362.5 L889.9 362.1 L882.8 362.1 L882.8 364.9 L875.7 364.9 L875.7 368.6 L868.6 368.6 L868.6 368.4 L861.4 368.4 L861.4 368.3 L854.3 368.3 L854.3 368.1 L847.2 368.1 L847.2 367.9 L840.1 367.9 L840.1 369.7 L833.0 369.7 L833.0 369.7 L825.9 369.7 L825.9 369.6 L818.8 369.6 L818.8 369.6 L811.6 369.6 L811.6 369.5 L804.5 369.5 L804.5 367.7 L797.4 367.7 L797.4 369.4 L790.3 369.4 L790.3 369.4 L783.2 369.4 L783.2 369.3 L776.1 369.3 L776.1 373.1 L769.0 373.1 L769.0 373.6 L761.8 373.6 L761.8 375.8 L754.7 375.8 L754.7 374.5 L747.6 374.5 L747.6 376.4 L740.5 376.4 L740.5 373.5 L733.4 373.5 L733.4 371.5 L726.3 371.5 L726.3 371.7 L719.1 371.7 L719.1 371.8 L712.0 371.8 L712.0 373.5 L704.9 373.5 L704.9 373.2 L697.8 373.2 L697.8 372.9 L690.7 372.9 L690.7 372.7 L683.6 372.7 L683.6 372.4 L676.5 372.4 L676.5 370.6 L669.3 370.6 L669.3 370.3 L662.2 370.3 L662.2 373.4 L655.1 373.4 L655.1 373.1 L648.0 373.1 L648.0 372.9 L640.9 372.9 L640.9 372.6 L633.8 372.6 L633.8 374.1 L626.7 374.1 L626.7 373.9 L619.5 373.9 L619.5 373.6 L612.4 373.6 L612.4 371.5 L605.3 371.5 L605.3 373.1 L598.2 373.1 L598.2 438.3 L591.1 438.3 L591.1 439.9 L584.0 439.9 L584.0 439.9 L576.9 439.9 L576.9 439.9 L569.7 439.9 L569.7 439.9 L562.6 439.9 L562.6 439.9 L555.5 439.9 L555.5 442.2 L548.4 442.2 L548.4 442.2 L541.3 442.2 L541.3 442.2 L534.2 442.2 L534.2 445.0 L527.0 445.0 L527.0 444.8 L519.9 444.8 L519.9 446.7 L512.8 446.7 L512.8 446.6 L505.7 446.6 L505.7 446.5 L498.6 446.5 L498.6 448.2 L491.5 448.2 L491.5 448.1 L484.4 448.1 L484.4 448.0 L477.2 448.0 L477.2 444.6 L470.1 444.6 L470.1 445.1 L463.0 445.1 L463.0 452.3 L455.9 452.3 L455.9 452.3 L448.8 452.3 L448.8 453.9 L441.7 453.9 L441.7 454.9 L434.6 454.9 L434.6 463.6 L427.4 463.6 L427.4 465.3 L420.3 465.3 L420.3 467.1 L413.2 467.1 L413.2 466.8 L406.1 466.8 L406.1 464.6 L399.0 464.6 L399.0 466.4 L391.9 466.4 L391.9 473.0 L384.7 473.0 L384.7 470.7 L377.6 470.7 L377.6 472.5 L370.5 472.5 L370.5 472.3 L363.4 472.3 L363.4 472.1 L356.3 472.1 L356.3 473.4 L349.2 473.4 L349.2 471.6 L342.1 471.6 L342.1 471.4 L334.9 471.4 L334.9 470.8 L327.8 470.8 L327.8 475.8 L320.7 475.8 L320.7 477.3 L313.6 477.3 L313.6 478.7 L306.5 478.7 L306.5 481.7 L299.4 481.7 L299.4 486.7 L292.2 486.7 L292.2 491.8 L285.1 491.8 L285.1 491.2 L278.0 491.2 L278.0 492.7 L270.9 492.7 L270.9 493.9 L263.8 493.9 L263.8 493.7 L256.7 493.7 L256.7 492.0 L249.6 492.0 L249.6 495.0 L242.4 495.0 L242.4 496.6 L235.3 496.6 L235.3 500.3 L228.2 500.3 L228.2 500.2 L221.1 500.2 L221.1 502.0 L214.0 502.0 L214.0 500.0 L206.9 500.0 L206.9 501.7 L199.8 501.7 L199.8 503.0 L192.6 503.0 L192.6 502.9 L185.5 502.9 L185.5 502.8 L178.4 502.8 L178.4 499.2 L171.3 499.2 L171.3 509.0 L164.2 509.0 L164.2 508.9 L157.1 508.9 L157.1 506.9 L149.9 506.9 L149.9 506.8 L142.8 506.8 L142.8 506.6 L135.7 506.6 L135.7 506.5 L128.6 506.5 L128.6 506.3 L121.5 506.3 L121.5 506.2 L114.4 506.2 L114.4 506.1 L107.3 506.1 L107.3 507.7 L100.1 507.7 L100.1 507.6 L93.0 507.6 L93.0 508.9 L85.9 508.9 L85.9 507.3 L78.8 507.3Z"/><path fill="#61425c" d="M78.8 479.0 L85.9 479.0 L85.9 480.5 L93.0 480.5 L93.0 479.0 L100.1 479.0 L100.1 479.0 L107.3 479.0 L107.3 477.2 L114.4 477.2 L114.4 477.2 L121.5 477.2 L121.5 477.2 L128.6 477.2 L128.6 477.2 L135.7 477.2 L135.7 477.2 L142.8 477.2 L142.8 477.2 L149.9 477.2 L149.9 477.2 L157.1 477.2 L157.1 479.0 L164.2 479.0 L164.2 479.0 L171.3 479.0 L171.3 470.0 L178.4 470.0 L178.4 473.3 L185.5 473.3 L185.5 473.3 L192.6 473.3 L192.6 473.3 L199.8 473.3 L199.8 471.9 L206.9 471.9 L206.9 470.0 L214.0 470.0 L214.0 471.9 L221.1 471.9 L221.1 470.0 L228.2 470.0 L228.2 470.0 L235.3 470.0 L235.3 466.2 L242.4 466.2 L242.4 464.4 L249.6 464.4 L249.6 461.1 L256.7 461.1 L256.7 462.6 L263.8 462.6 L263.8 462.6 L270.9 462.6 L270.9 461.1 L278.0 461.1 L278.0 459.4 L285.1 459.4 L285.1 459.4 L292.2 459.4 L292.2 453.6 L299.4 453.6 L299.4 448.3 L306.5 448.3 L306.5 445.0 L313.6 445.0 L313.6 443.3 L320.7 443.3 L320.7 441.5 L327.8 441.5 L327.8 436.1 L334.9 436.1 L334.9 436.4 L342.1 436.4 L342.1 436.4 L349.2 436.4 L349.2 438.0 L356.3 438.0 L356.3 436.4 L363.4 436.4 L363.4 436.4 L370.5 436.4 L370.5 436.4 L377.6 436.4 L377.6 434.4 L384.7 434.4 L384.7 436.4 L391.9 436.4 L391.9 429.6 L399.0 429.6 L399.0 427.6 L406.1 427.6 L406.1 429.6 L413.2 429.6 L413.2 429.6 L420.3 429.6 L420.3 427.6 L427.4 427.6 L427.4 425.7 L434.6 425.7 L434.6 416.0 L441.7 416.0 L441.7 415.0 L448.8 415.0 L448.8 413.4 L455.9 413.4 L455.9 413.4 L463.0 413.4 L463.0 406.2 L470.1 406.2 L470.1 406.2 L477.2 406.2 L477.2 410.1 L484.4 410.1 L484.4 410.1 L491.5 410.1 L491.5 410.1 L498.6 410.1 L498.6 408.2 L505.7 408.2 L505.7 408.2 L512.8 408.2 L512.8 408.2 L519.9 408.2 L519.9 406.2 L527.0 406.2 L527.0 406.2 L534.2 406.2 L534.2 403.3 L541.3 403.3 L541.3 403.3 L548.4 403.3 L548.4 403.3 L555.5 403.3 L555.5 401.0 L562.6 401.0 L562.6 401.0 L569.7 401.0 L569.7 401.0 L576.9 401.0 L576.9 401.0 L584.0 401.0 L584.0 401.0 L591.1 401.0 L591.1 399.4 L598.2 399.4 L598.2 333.9 L605.3 333.9 L605.3 332.1 L612.4 332.1 L612.4 333.9 L619.5 333.9 L619.5 333.9 L626.7 333.9 L626.7 333.9 L633.8 333.9 L633.8 332.1 L640.9 332.1 L640.9 332.1 L648.0 332.1 L648.0 332.1 L655.1 332.1 L655.1 332.1 L662.2 332.1 L662.2 328.7 L669.3 328.7 L669.3 328.7 L676.5 328.7 L676.5 330.3 L683.6 330.3 L683.6 330.3 L690.7 330.3 L690.7 330.3 L697.8 330.3 L697.8 330.3 L704.9 330.3 L704.9 330.3 L712.0 330.3 L712.0 328.7 L719.1 328.7 L719.1 328.7 L726.3 328.7 L726.3 328.7 L733.4 328.7 L733.4 330.8 L740.5 330.8 L740.5 333.9 L747.6 333.9 L747.6 332.1 L754.7 332.1 L754.7 333.9 L761.8 333.9 L761.8 332.1 L769.0 332.1 L769.0 332.1 L776.1 332.1 L776.1 328.7 L783.2 328.7 L783.2 328.7 L790.3 328.7 L790.3 328.7 L797.4 328.7 L797.4 326.9 L804.5 326.9 L804.5 328.7 L811.6 328.7 L811.6 328.7 L818.8 328.7 L818.8 328.7 L825.9 328.7 L825.9 328.7 L833.0 328.7 L833.0 328.7 L840.1 328.7 L840.1 326.9 L847.2 326.9 L847.2 326.9 L854.3 326.9 L854.3 326.9 L861.4 326.9 L861.4 326.9 L868.6 326.9 L868.6 326.9 L875.7 326.9 L875.7 323.1 L882.8 323.1 L882.8 320.0 L889.9 320.0 L889.9 320.0 L897.0 320.0 L897.0 320.0 L904.1 320.0 L904.1 318.5 L911.3 318.5 L911.3 320.0 L918.4 320.0 L918.4 323.1 L925.5 323.1 L925.5 323.6 L932.6 323.6 L932.6 323.6 L939.7 323.6 L939.7 323.6 L946.8 323.6 L946.8 323.6 L953.9 323.6 L953.9 323.6 L961.1 323.6 L961.1 321.8 L968.2 321.8 L968.2 321.8 L975.3 321.8 L975.3 320.0 L982.4 320.0 L982.4 321.8 L989.5 321.8 L989.5 321.8 L996.6 321.8 L996.6 321.8 L1003.8 321.8 L1003.8 320.0 L1010.9 320.0 L1010.9 318.5 L1018.0 318.5 L1018.0 318.5 L1025.1 318.5 L1025.1 318.5 L1032.2 318.5 L1032.2 320.0 L1039.3 320.0 L1039.3 321.8 L1046.4 321.8 L1046.4 321.8 L1053.6 321.8 L1053.6 320.0 L1060.7 320.0 L1060.7 314.1 L1067.8 314.1 L1067.8 314.1 L1074.9 314.1 L1074.9 314.1 L1082.0 314.1 L1082.0 315.9 L1089.1 315.9 L1089.1 312.3 L1096.2 312.3 L1096.2 346.2 L1089.1 346.2 L1089.1 349.7 L1082.0 349.7 L1082.0 347.8 L1074.9 347.8 L1074.9 347.6 L1067.8 347.6 L1067.8 347.5 L1060.7 347.5 L1060.7 353.6 L1053.6 353.6 L1053.6 355.5 L1046.4 355.5 L1046.4 355.7 L1039.3 355.7 L1039.3 354.0 L1032.2 354.0 L1032.2 351.8 L1025.1 351.8 L1025.1 351.2 L1018.0 351.2 L1018.0 350.5 L1010.9 350.5 L1010.9 352.0 L1003.8 352.0 L1003.8 353.8 L996.6 353.8 L996.6 353.7 L989.5 353.7 L989.5 353.7 L982.4 353.7 L982.4 351.9 L975.3 351.9 L975.3 353.6 L968.2 353.6 L968.2 353.6 L961.1 353.6 L961.1 355.4 L953.9 355.4 L953.9 355.3 L946.8 355.3 L946.8 355.3 L939.7 355.3 L939.7 355.3 L932.6 355.3 L932.6 355.3 L925.5 355.3 L925.5 354.7 L918.4 354.7 L918.4 351.6 L911.3 351.6 L911.3 350.0 L904.1 350.0 L904.1 350.9 L897.0 350.9 L897.0 350.3 L889.9 350.3 L889.9 349.6 L882.8 349.6 L882.8 352.1 L875.7 352.1 L875.7 356.1 L868.6 356.1 L868.6 356.3 L861.4 356.3 L861.4 356.5 L854.3 356.5 L854.3 356.7 L847.2 356.7 L847.2 356.9 L840.1 356.9 L840.1 358.7 L833.0 358.7 L833.0 358.7 L825.9 358.7 L825.9 358.7 L818.8 358.7 L818.8 358.7 L811.6 358.7 L811.6 358.6 L804.5 358.6 L804.5 356.8 L797.4 356.8 L797.4 358.6 L790.3 358.6 L790.3 358.6 L783.2 358.6 L783.2 358.5 L776.1 358.5 L776.1 362.2 L769.0 362.2 L769.0 362.4 L761.8 362.4 L761.8 364.5 L754.7 364.5 L754.7 363.0 L747.6 363.0 L747.6 364.9 L740.5 364.9 L740.5 361.9 L733.4 361.9 L733.4 360.0 L726.3 360.0 L726.3 360.1 L719.1 360.1 L719.1 360.2 L712.0 360.2 L712.0 361.9 L704.9 361.9 L704.9 361.6 L697.8 361.6 L697.8 361.4 L690.7 361.4 L690.7 361.1 L683.6 361.1 L683.6 360.8 L676.5 360.8 L676.5 359.0 L669.3 359.0 L669.3 358.8 L662.2 358.8 L662.2 361.9 L655.1 361.9 L655.1 361.6 L648.0 361.6 L648.0 361.3 L640.9 361.3 L640.9 361.1 L633.8 361.1 L633.8 362.6 L626.7 362.6 L626.7 362.4 L619.5 362.4 L619.5 362.1 L612.4 362.1 L612.4 360.0 L605.3 360.0 L605.3 361.6 L598.2 361.6 L598.2 426.7 L591.1 426.7 L591.1 428.4 L584.0 428.4 L584.0 428.4 L576.9 428.4 L576.9 428.4 L569.7 428.4 L569.7 428.5 L562.6 428.5 L562.6 428.6 L555.5 428.6 L555.5 430.9 L548.4 430.9 L548.4 430.9 L541.3 430.9 L541.3 431.0 L534.2 431.0 L534.2 433.9 L527.0 433.9 L527.0 433.8 L519.9 433.8 L519.9 435.7 L512.8 435.7 L512.8 435.7 L505.7 435.7 L505.7 435.6 L498.6 435.6 L498.6 437.5 L491.5 437.5 L491.5 437.4 L484.4 437.4 L484.4 437.4 L477.2 437.4 L477.2 433.9 L470.1 433.9 L470.1 434.4 L463.0 434.4 L463.0 441.3 L455.9 441.3 L455.9 441.1 L448.8 441.1 L448.8 442.4 L441.7 442.4 L441.7 443.2 L434.6 443.2 L434.6 452.0 L427.4 452.0 L427.4 453.7 L420.3 453.7 L420.3 455.6 L413.2 455.6 L413.2 455.4 L406.1 455.4 L406.1 453.3 L399.0 453.3 L399.0 455.1 L391.9 455.1 L391.9 461.8 L384.7 461.8 L384.7 459.6 L377.6 459.6 L377.6 461.5 L370.5 461.5 L370.5 461.3 L363.4 461.3 L363.4 461.2 L356.3 461.2 L356.3 462.6 L349.2 462.6 L349.2 460.9 L342.1 460.9 L342.1 460.7 L334.9 460.7 L334.9 460.1 L327.8 460.1 L327.8 465.2 L320.7 465.2 L320.7 466.6 L313.6 466.6 L313.6 468.0 L306.5 468.0 L306.5 471.4 L299.4 471.4 L299.4 476.9 L292.2 476.9 L292.2 482.4 L285.1 482.4 L285.1 482.2 L278.0 482.2 L278.0 483.5 L270.9 483.5 L270.9 484.6 L263.8 484.6 L263.8 484.3 L256.7 484.3 L256.7 482.4 L249.6 482.4 L249.6 485.3 L242.4 485.3 L242.4 486.7 L235.3 486.7 L235.3 490.4 L228.2 490.4 L228.2 490.3 L221.1 490.3 L221.1 492.1 L214.0 492.1 L214.0 490.1 L206.9 490.1 L206.9 491.9 L199.8 491.9 L199.8 493.2 L192.6 493.2 L192.6 493.1 L185.5 493.1 L185.5 493.0 L178.4 493.0 L178.4 489.0 L171.3 489.0 L171.3 500.0 L164.2 500.0 L164.2 499.8 L157.1 499.8 L157.1 497.9 L149.9 497.9 L149.9 497.7 L142.8 497.7 L142.8 497.5 L135.7 497.5 L135.7 497.4 L128.6 497.4 L128.6 497.2 L121.5 497.2 L121.5 497.0 L114.4 497.0 L114.4 496.9 L107.3 496.9 L107.3 498.5 L100.1 498.5 L100.1 498.3 L93.0 498.3 L93.0 499.7 L85.9 499.7 L85.9 498.0 L78.8 498.0Z"/><path fill="#c8284f" d="M79.8 620.8h5.1v5.5h-5.1zM86.9 620.8h5.1v5.5h-5.1zM94.0 620.8h5.1v5.5h-5.1zM101.1 620.8h5.1v5.5h-5.1zM108.3 620.8h5.1v5.5h-5.1zM115.4 620.8h5.1v5.5h-5.1zM122.5 620.8h5.1v5.5h-5.1zM129.6 620.8h5.1v5.5h-5.1zM136.7 620.8h5.1v5.5h-5.1zM143.8 620.8h5.1v5.5h-5.1zM150.9 620.8h5.1v5.5h-5.1zM158.1 620.8h5.1v5.5h-5.1zM165.2 620.8h5.1v5.5h-5.1zM172.3 620.8h5.1v5.5h-5.1zM179.4 620.8h5.1v5.5h-5.1zM186.5 620.8h5.1v5.5h-5.1zM193.6 620.8h5.1v5.5h-5.1zM200.8 620.8h5.1v5.5h-5.1zM207.9 620.8h5.1v5.5h-5.1zM215.0 620.8h5.1v5.5h-5.1zM222.1 620.8h5.1v5.5h-5.1zM229.2 620.8h5.1v5.5h-5.1zM236.3 620.8h5.1v5.5h-5.1zM243.4 620.8h5.1v5.5h-5.1zM250.6 620.8h5.1v5.5h-5.1zM257.7 620.8h5.1v5.5h-5.1zM264.8 620.8h5.1v5.5h-5.1zM271.9 620.8h5.1v5.5h-5.1zM279.0 620.8h5.1v5.5h-5.1zM286.1 620.8h5.1v5.5h-5.1zM293.2 620.8h5.1v5.5h-5.1zM300.4 620.8h5.1v5.5h-5.1zM307.5 620.8h5.1v5.5h-5.1zM314.6 620.9h5.1v5.4h-5.1zM321.7 621.0h5.1v5.3h-5.1zM328.8 621.0h5.1v5.3h-5.1zM335.9 621.1h5.1v5.2h-5.1zM343.1 621.1h5.1v5.2h-5.1zM350.2 621.1h5.1v5.2h-5.1zM357.3 621.1h5.1v5.2h-5.1zM364.4 621.1h5.1v5.2h-5.1zM371.5 621.1h5.1v5.2h-5.1zM378.6 621.1h5.1v5.2h-5.1zM385.7 621.1h5.1v5.2h-5.1zM392.9 621.1h5.1v5.2h-5.1zM400.0 621.1h5.1v5.2h-5.1zM407.1 621.1h5.1v5.2h-5.1zM414.2 621.1h5.1v5.2h-5.1zM421.3 621.1h5.1v5.2h-5.1zM428.4 621.1h5.1v5.2h-5.1zM435.6 621.1h5.1v5.2h-5.1zM442.7 621.1h5.1v5.2h-5.1zM449.8 621.1h5.1v5.2h-5.1zM456.9 621.1h5.1v5.2h-5.1zM464.0 621.1h5.1v5.2h-5.1zM471.1 621.1h5.1v5.2h-5.1zM478.2 621.1h5.1v5.2h-5.1zM485.4 621.1h5.1v5.2h-5.1zM492.5 621.1h5.1v5.2h-5.1zM499.6 621.1h5.1v5.2h-5.1zM506.7 621.1h5.1v5.2h-5.1zM513.8 621.1h5.1v5.2h-5.1zM520.9 621.1h5.1v5.2h-5.1zM528.0 621.1h5.1v5.2h-5.1zM535.2 621.1h5.1v5.2h-5.1zM542.3 621.1h5.1v5.2h-5.1zM549.4 621.1h5.1v5.2h-5.1zM556.5 621.1h5.1v5.2h-5.1zM563.6 621.1h5.1v5.2h-5.1zM570.7 621.1h5.1v5.2h-5.1zM577.9 621.1h5.1v5.2h-5.1zM585.0 621.1h5.1v5.2h-5.1zM592.1 621.1h5.1v5.2h-5.1zM599.2 620.8h5.1v5.5h-5.1zM606.3 620.8h5.1v5.5h-5.1zM613.4 620.8h5.1v5.5h-5.1zM620.5 620.8h5.1v5.5h-5.1zM627.7 620.8h5.1v5.5h-5.1zM634.8 620.8h5.1v5.5h-5.1zM641.9 620.8h5.1v5.5h-5.1zM649.0 620.8h5.1v5.5h-5.1zM656.1 620.8h5.1v5.5h-5.1zM663.2 620.8h5.1v5.5h-5.1zM670.3 620.8h5.1v5.5h-5.1zM677.5 620.8h5.1v5.5h-5.1zM684.6 620.8h5.1v5.5h-5.1zM691.7 620.8h5.1v5.5h-5.1zM698.8 620.8h5.1v5.5h-5.1zM705.9 620.8h5.1v5.5h-5.1zM713.0 620.8h5.1v5.5h-5.1zM720.1 620.8h5.1v5.5h-5.1zM727.3 620.8h5.1v5.5h-5.1zM734.4 620.8h5.1v5.5h-5.1zM741.5 620.8h5.1v5.5h-5.1zM748.6 620.8h5.1v5.5h-5.1zM755.7 620.8h5.1v5.5h-5.1zM762.8 620.8h5.1v5.5h-5.1zM770.0 620.8h5.1v5.5h-5.1zM777.1 620.8h5.1v5.5h-5.1zM784.2 620.8h5.1v5.5h-5.1zM791.3 620.8h5.1v5.5h-5.1zM798.4 620.8h5.1v5.5h-5.1zM805.5 620.8h5.1v5.5h-5.1zM812.6 620.8h5.1v5.5h-5.1zM819.8 620.8h5.1v5.5h-5.1zM826.9 620.8h5.1v5.5h-5.1zM834.0 620.8h5.1v5.5h-5.1zM841.1 620.8h5.1v5.5h-5.1zM848.2 620.8h5.1v5.5h-5.1zM855.3 620.8h5.1v5.5h-5.1zM862.4 620.8h5.1v5.5h-5.1zM869.6 620.8h5.1v5.5h-5.1zM876.7 620.8h5.1v5.5h-5.1zM883.8 620.8h5.1v5.5h-5.1zM890.9 620.9h5.1v5.4h-5.1zM898.0 621.0h5.1v5.3h-5.1zM905.1 621.0h5.1v5.3h-5.1zM912.3 621.0h5.1v5.3h-5.1zM919.4 621.0h5.1v5.3h-5.1zM926.5 621.0h5.1v5.3h-5.1zM933.6 621.0h5.1v5.3h-5.1zM940.7 621.0h5.1v5.3h-5.1zM947.8 621.0h5.1v5.3h-5.1zM954.9 621.0h5.1v5.3h-5.1zM962.1 621.0h5.1v5.3h-5.1zM969.2 621.0h5.1v5.3h-5.1zM976.3 621.0h5.1v5.3h-5.1zM983.4 621.0h5.1v5.3h-5.1zM990.5 621.0h5.1v5.3h-5.1zM997.6 621.0h5.1v5.3h-5.1zM1004.8 621.0h5.1v5.3h-5.1zM1011.9 621.0h5.1v5.3h-5.1zM1019.0 621.0h5.1v5.3h-5.1zM1026.1 621.0h5.1v5.3h-5.1zM1033.2 621.0h5.1v5.3h-5.1zM1040.3 621.0h5.1v5.3h-5.1zM1047.4 621.0h5.1v5.3h-5.1zM1054.6 621.0h5.1v5.3h-5.1zM1061.7 621.0h5.1v5.3h-5.1zM1068.8 621.0h5.1v5.3h-5.1zM1075.9 621.0h5.1v5.3h-5.1zM1083.0 620.9h5.1v5.4h-5.1zM1090.1 620.9h5.1v5.4h-5.1z"/><path fill="#b82548" d="M81.4 621.8h1.9v4.5h-1.9zM88.5 621.8h1.9v4.5h-1.9zM95.6 621.8h1.9v4.5h-1.9zM102.7 621.8h1.9v4.5h-1.9zM109.9 621.8h1.9v4.5h-1.9zM117.0 621.8h1.9v4.5h-1.9zM124.1 621.8h1.9v4.5h-1.9zM131.2 621.8h1.9v4.5h-1.9zM138.3 621.8h1.9v4.5h-1.9zM145.4 621.8h1.9v4.5h-1.9zM152.5 621.8h1.9v4.5h-1.9zM159.7 621.8h1.9v4.5h-1.9zM166.8 621.8h1.9v4.5h-1.9zM173.9 621.8h1.9v4.5h-1.9zM181.0 621.8h1.9v4.5h-1.9zM188.1 621.8h1.9v4.5h-1.9zM195.2 621.8h1.9v4.5h-1.9zM202.4 621.8h1.9v4.5h-1.9zM209.5 621.8h1.9v4.5h-1.9zM216.6 621.8h1.9v4.5h-1.9zM223.7 621.8h1.9v4.5h-1.9zM230.8 621.8h1.9v4.5h-1.9zM237.9 621.8h1.9v4.5h-1.9zM245.0 621.8h1.9v4.5h-1.9zM252.2 621.8h1.9v4.5h-1.9zM259.3 621.8h1.9v4.5h-1.9zM266.4 621.8h1.9v4.5h-1.9zM273.5 621.8h1.9v4.5h-1.9zM280.6 621.8h1.9v4.5h-1.9zM287.7 621.8h1.9v4.5h-1.9zM294.9 621.8h1.9v4.5h-1.9zM302.0 621.8h1.9v4.5h-1.9zM309.1 621.8h1.9v4.5h-1.9zM316.2 621.9h1.9v4.4h-1.9zM323.3 622.0h1.9v4.3h-1.9zM330.4 622.0h1.9v4.3h-1.9zM337.5 622.1h1.9v4.2h-1.9zM344.7 622.1h1.9v4.2h-1.9zM351.8 622.1h1.9v4.2h-1.9zM358.9 622.1h1.9v4.2h-1.9zM366.0 622.1h1.9v4.2h-1.9zM373.1 622.1h1.9v4.2h-1.9zM380.2 622.1h1.9v4.2h-1.9zM387.3 622.1h1.9v4.2h-1.9zM394.5 622.1h1.9v4.2h-1.9zM401.6 622.1h1.9v4.2h-1.9zM408.7 622.1h1.9v4.2h-1.9zM415.8 622.1h1.9v4.2h-1.9zM422.9 622.1h1.9v4.2h-1.9zM430.0 622.1h1.9v4.2h-1.9zM437.2 622.1h1.9v4.2h-1.9zM444.3 622.1h1.9v4.2h-1.9zM451.4 622.1h1.9v4.2h-1.9zM458.5 622.1h1.9v4.2h-1.9zM465.6 622.1h1.9v4.2h-1.9zM472.7 622.1h1.9v4.2h-1.9zM479.8 622.1h1.9v4.2h-1.9zM487.0 622.1h1.9v4.2h-1.9zM494.1 622.1h1.9v4.2h-1.9zM501.2 622.1h1.9v4.2h-1.9zM508.3 622.1h1.9v4.2h-1.9zM515.4 622.1h1.9v4.2h-1.9zM522.5 622.1h1.9v4.2h-1.9zM529.6 622.1h1.9v4.2h-1.9zM536.8 622.1h1.9v4.2h-1.9zM543.9 622.1h1.9v4.2h-1.9zM551.0 622.1h1.9v4.2h-1.9zM558.1 622.1h1.9v4.2h-1.9zM565.2 622.1h1.9v4.2h-1.9zM572.3 622.1h1.9v4.2h-1.9zM579.5 622.1h1.9v4.2h-1.9zM586.6 622.1h1.9v4.2h-1.9zM593.7 622.1h1.9v4.2h-1.9zM600.8 621.8h1.9v4.5h-1.9zM607.9 621.8h1.9v4.5h-1.9zM615.0 621.8h1.9v4.5h-1.9zM622.1 621.8h1.9v4.5h-1.9zM629.3 621.8h1.9v4.5h-1.9zM636.4 621.8h1.9v4.5h-1.9zM643.5 621.8h1.9v4.5h-1.9zM650.6 621.8h1.9v4.5h-1.9zM657.7 621.8h1.9v4.5h-1.9zM664.8 621.8h1.9v4.5h-1.9zM671.9 621.8h1.9v4.5h-1.9zM679.1 621.8h1.9v4.5h-1.9zM686.2 621.8h1.9v4.5h-1.9zM693.3 621.8h1.9v4.5h-1.9zM700.4 621.8h1.9v4.5h-1.9zM707.5 621.8h1.9v4.5h-1.9zM714.6 621.8h1.9v4.5h-1.9zM721.8 621.8h1.9v4.5h-1.9zM728.9 621.8h1.9v4.5h-1.9zM736.0 621.8h1.9v4.5h-1.9zM743.1 621.8h1.9v4.5h-1.9zM750.2 621.8h1.9v4.5h-1.9zM757.3 621.8h1.9v4.5h-1.9zM764.4 621.8h1.9v4.5h-1.9zM771.6 621.8h1.9v4.5h-1.9zM778.7 621.8h1.9v4.5h-1.9zM785.8 621.8h1.9v4.5h-1.9zM792.9 621.8h1.9v4.5h-1.9zM800.0 621.8h1.9v4.5h-1.9zM807.1 621.8h1.9v4.5h-1.9zM814.2 621.8h1.9v4.5h-1.9zM821.4 621.8h1.9v4.5h-1.9zM828.5 621.8h1.9v4.5h-1.9zM835.6 621.8h1.9v4.5h-1.9zM842.7 621.8h1.9v4.5h-1.9zM849.8 621.8h1.9v4.5h-1.9zM856.9 621.8h1.9v4.5h-1.9zM864.0 621.8h1.9v4.5h-1.9zM871.2 621.8h1.9v4.5h-1.9zM878.3 621.8h1.9v4.5h-1.9zM885.4 621.8h1.9v4.5h-1.9zM892.5 621.9h1.9v4.4h-1.9zM899.6 622.0h1.9v4.3h-1.9zM906.7 622.0h1.9v4.3h-1.9zM913.9 622.0h1.9v4.3h-1.9zM921.0 622.0h1.9v4.3h-1.9zM928.1 622.0h1.9v4.3h-1.9zM935.2 622.0h1.9v4.3h-1.9zM942.3 622.0h1.9v4.3h-1.9zM949.4 622.0h1.9v4.3h-1.9zM956.5 622.0h1.9v4.3h-1.9zM963.7 622.0h1.9v4.3h-1.9zM970.8 622.0h1.9v4.3h-1.9zM977.9 622.0h1.9v4.3h-1.9zM985.0 622.0h1.9v4.3h-1.9zM992.1 622.0h1.9v4.3h-1.9zM999.2 622.0h1.9v4.3h-1.9zM1006.4 622.0h1.9v4.3h-1.9zM1013.5 622.0h1.9v4.3h-1.9zM1020.6 622.0h1.9v4.3h-1.9zM1027.7 622.0h1.9v4.3h-1.9zM1034.8 622.0h1.9v4.3h-1.9zM1041.9 622.0h1.9v4.3h-1.9zM1049.0 622.0h1.9v4.3h-1.9zM1056.2 622.0h1.9v4.3h-1.9zM1063.3 622.0h1.9v4.3h-1.9zM1070.4 622.0h1.9v4.3h-1.9zM1077.5 622.0h1.9v4.3h-1.9zM1084.6 621.9h1.9v4.4h-1.9zM1091.7 621.9h1.9v4.4h-1.9z"/><path fill="#46a0d4" d="M79.8 614.6h5.1v6.2h-5.1zM86.9 614.7h5.1v6.1h-5.1zM94.0 614.7h5.1v6.1h-5.1zM101.1 614.8h5.1v6.0h-5.1zM108.3 614.9h5.1v5.9h-5.1zM115.4 614.9h5.1v5.9h-5.1zM122.5 615.0h5.1v5.8h-5.1zM129.6 615.1h5.1v5.7h-5.1zM136.7 615.1h5.1v5.7h-5.1zM143.8 615.2h5.1v5.6h-5.1zM150.9 615.3h5.1v5.5h-5.1zM158.1 615.3h5.1v5.5h-5.1zM165.2 615.4h5.1v5.4h-5.1zM172.3 613.7h5.1v7.1h-5.1zM179.4 613.7h5.1v7.1h-5.1zM186.5 613.6h5.1v7.2h-5.1zM193.6 613.5h5.1v7.3h-5.1zM200.8 613.4h5.1v7.4h-5.1zM207.9 613.4h5.1v7.4h-5.1zM215.0 613.3h5.1v7.5h-5.1zM222.1 613.2h5.1v7.6h-5.1zM229.2 613.1h5.1v7.7h-5.1zM236.3 613.0h5.1v7.8h-5.1zM243.4 612.7h5.1v8.1h-5.1zM250.6 612.3h5.1v8.5h-5.1zM257.7 612.0h5.1v8.8h-5.1zM264.8 611.7h5.1v9.1h-5.1zM271.9 611.3h5.1v9.5h-5.1zM279.0 611.0h5.1v9.8h-5.1zM286.1 609.6h5.1v11.1h-5.1zM293.2 608.3h5.1v12.5h-5.1zM300.4 607.8h5.1v13.0h-5.1zM307.5 607.4h5.1v13.4h-5.1zM314.6 607.4h5.1v13.5h-5.1zM321.7 607.5h5.1v13.5h-5.1zM328.8 607.5h5.1v13.6h-5.1zM335.9 607.5h5.1v13.6h-5.1zM343.1 607.5h5.1v13.6h-5.1zM350.2 607.5h5.1v13.6h-5.1zM357.3 607.5h5.1v13.6h-5.1zM364.4 607.5h5.1v13.6h-5.1zM371.5 607.5h5.1v13.6h-5.1zM378.6 607.5h5.1v13.6h-5.1zM385.7 607.5h5.1v13.6h-5.1zM392.9 607.5h5.1v13.6h-5.1zM400.0 607.5h5.1v13.6h-5.1zM407.1 607.5h5.1v13.6h-5.1zM414.2 607.5h5.1v13.6h-5.1zM421.3 607.5h5.1v13.6h-5.1zM428.4 607.5h5.1v13.6h-5.1zM435.6 607.5h5.1v13.6h-5.1zM442.7 607.2h5.1v13.9h-5.1zM449.8 607.0h5.1v14.1h-5.1zM456.9 606.8h5.1v14.4h-5.1zM464.0 606.5h5.1v14.6h-5.1zM471.1 607.0h5.1v14.1h-5.1zM478.2 607.5h5.1v13.6h-5.1zM485.4 607.2h5.1v13.9h-5.1zM492.5 607.0h5.1v14.1h-5.1zM499.6 606.8h5.1v14.4h-5.1zM506.7 606.5h5.1v14.6h-5.1zM513.8 606.2h5.1v14.9h-5.1zM520.9 606.0h5.1v15.1h-5.1zM528.0 605.8h5.1v15.4h-5.1zM535.2 605.5h5.1v15.6h-5.1zM542.3 605.5h5.1v15.6h-5.1zM549.4 605.5h5.1v15.6h-5.1zM556.5 605.5h5.1v15.6h-5.1zM563.6 605.5h5.1v15.6h-5.1zM570.7 605.5h5.1v15.6h-5.1zM577.9 605.5h5.1v15.6h-5.1zM585.0 605.5h5.1v15.6h-5.1zM592.1 605.5h5.1v15.6h-5.1zM599.2 606.6h5.1v14.2h-5.1zM606.3 606.5h5.1v14.3h-5.1zM613.4 606.4h5.1v14.4h-5.1zM620.5 606.4h5.1v14.4h-5.1zM627.7 606.3h5.1v14.5h-5.1zM634.8 606.2h5.1v14.6h-5.1zM641.9 606.1h5.1v14.7h-5.1zM649.0 606.0h5.1v14.8h-5.1zM656.1 606.0h5.1v14.8h-5.1zM663.2 605.9h5.1v14.9h-5.1zM670.3 605.8h5.1v15.0h-5.1zM677.5 605.7h5.1v15.1h-5.1zM684.6 605.6h5.1v15.2h-5.1zM691.7 605.6h5.1v15.2h-5.1zM698.8 605.5h5.1v15.3h-5.1zM705.9 605.4h5.1v15.4h-5.1zM713.0 605.4h5.1v15.4h-5.1zM720.1 605.4h5.1v15.4h-5.1zM727.3 605.4h5.1v15.4h-5.1zM734.4 605.4h5.1v15.4h-5.1zM741.5 605.4h5.1v15.4h-5.1zM748.6 605.4h5.1v15.4h-5.1zM755.7 605.4h5.1v15.4h-5.1zM762.8 605.4h5.1v15.4h-5.1zM770.0 605.4h5.1v15.4h-5.1zM777.1 605.4h5.1v15.4h-5.1zM784.2 605.4h5.1v15.4h-5.1zM791.3 605.4h5.1v15.4h-5.1zM798.4 605.4h5.1v15.4h-5.1zM805.5 605.4h5.1v15.4h-5.1zM812.6 605.4h5.1v15.4h-5.1zM819.8 605.4h5.1v15.4h-5.1zM826.9 605.4h5.1v15.4h-5.1zM834.0 605.4h5.1v15.4h-5.1zM841.1 605.4h5.1v15.4h-5.1zM848.2 605.1h5.1v15.7h-5.1zM855.3 604.8h5.1v16.0h-5.1zM862.4 604.6h5.1v16.2h-5.1zM869.6 604.3h5.1v16.5h-5.1zM876.7 604.0h5.1v16.8h-5.1zM883.8 604.0h5.1v16.8h-5.1zM890.9 604.1h5.1v16.8h-5.1zM898.0 604.2h5.1v16.8h-5.1zM905.1 604.2h5.1v16.8h-5.1zM912.3 604.2h5.1v16.8h-5.1zM919.4 604.2h5.1v16.8h-5.1zM926.5 604.2h5.1v16.8h-5.1zM933.6 604.2h5.1v16.8h-5.1zM940.7 604.2h5.1v16.8h-5.1zM947.8 604.2h5.1v16.8h-5.1zM954.9 604.2h5.1v16.8h-5.1zM962.1 604.2h5.1v16.8h-5.1zM969.2 604.2h5.1v16.8h-5.1zM976.3 604.2h5.1v16.8h-5.1zM983.4 604.2h5.1v16.8h-5.1zM990.5 604.2h5.1v16.8h-5.1zM997.6 604.2h5.1v16.8h-5.1zM1004.8 604.2h5.1v16.8h-5.1zM1011.9 604.2h5.1v16.8h-5.1zM1019.0 604.2h5.1v16.8h-5.1zM1026.1 604.2h5.1v16.8h-5.1zM1033.2 604.2h5.1v16.8h-5.1zM1040.3 604.2h5.1v16.8h-5.1zM1047.4 604.2h5.1v16.8h-5.1zM1054.6 604.2h5.1v16.8h-5.1zM1061.7 604.2h5.1v16.8h-5.1zM1068.8 604.2h5.1v16.8h-5.1zM1075.9 604.2h5.1v16.8h-5.1zM1083.0 604.2h5.1v16.7h-5.1zM1090.1 604.2h5.1v16.7h-5.1z"/><path fill="#3a8fc0" d="M81.4 615.6h1.9v5.2h-1.9zM88.5 615.7h1.9v5.1h-1.9zM95.6 615.7h1.9v5.1h-1.9zM102.7 615.8h1.9v5.0h-1.9zM109.9 615.9h1.9v4.9h-1.9zM117.0 615.9h1.9v4.9h-1.9zM124.1 616.0h1.9v4.8h-1.9zM131.2 616.1h1.9v4.7h-1.9zM138.3 616.1h1.9v4.7h-1.9zM145.4 616.2h1.9v4.6h-1.9zM152.5 616.3h1.9v4.5h-1.9zM159.7 616.3h1.9v4.5h-1.9zM166.8 616.4h1.9v4.4h-1.9zM173.9 614.7h1.9v6.1h-1.9zM181.0 614.7h1.9v6.1h-1.9zM188.1 614.6h1.9v6.2h-1.9zM195.2 614.5h1.9v6.3h-1.9zM202.4 614.4h1.9v6.4h-1.9zM209.5 614.4h1.9v6.4h-1.9zM216.6 614.3h1.9v6.5h-1.9zM223.7 614.2h1.9v6.6h-1.9zM230.8 614.1h1.9v6.7h-1.9zM237.9 614.0h1.9v6.8h-1.9zM245.0 613.7h1.9v7.1h-1.9zM252.2 613.3h1.9v7.5h-1.9zM259.3 613.0h1.9v7.8h-1.9zM266.4 612.7h1.9v8.1h-1.9zM273.5 612.3h1.9v8.5h-1.9zM280.6 612.0h1.9v8.8h-1.9zM287.7 610.6h1.9v10.1h-1.9zM294.9 609.3h1.9v11.5h-1.9zM302.0 608.8h1.9v12.0h-1.9zM309.1 608.4h1.9v12.4h-1.9zM316.2 608.4h1.9v12.5h-1.9zM323.3 608.5h1.9v12.5h-1.9zM330.4 608.5h1.9v12.6h-1.9zM337.5 608.5h1.9v12.6h-1.9zM344.7 608.5h1.9v12.6h-1.9zM351.8 608.5h1.9v12.6h-1.9zM358.9 608.5h1.9v12.6h-1.9zM366.0 608.5h1.9v12.6h-1.9zM373.1 608.5h1.9v12.6h-1.9zM380.2 608.5h1.9v12.6h-1.9zM387.3 608.5h1.9v12.6h-1.9zM394.5 608.5h1.9v12.6h-1.9zM401.6 608.5h1.9v12.6h-1.9zM408.7 608.5h1.9v12.6h-1.9zM415.8 608.5h1.9v12.6h-1.9zM422.9 608.5h1.9v12.6h-1.9zM430.0 608.5h1.9v12.6h-1.9zM437.2 608.5h1.9v12.6h-1.9zM444.3 608.2h1.9v12.9h-1.9zM451.4 608.0h1.9v13.1h-1.9zM458.5 607.8h1.9v13.4h-1.9zM465.6 607.5h1.9v13.6h-1.9zM472.7 608.0h1.9v13.1h-1.9zM479.8 608.5h1.9v12.6h-1.9zM487.0 608.2h1.9v12.9h-1.9zM494.1 608.0h1.9v13.1h-1.9zM501.2 607.8h1.9v13.4h-1.9zM508.3 607.5h1.9v13.6h-1.9zM515.4 607.2h1.9v13.9h-1.9zM522.5 607.0h1.9v14.1h-1.9zM529.6 606.8h1.9v14.4h-1.9zM536.8 606.5h1.9v14.6h-1.9zM543.9 606.5h1.9v14.6h-1.9zM551.0 606.5h1.9v14.6h-1.9zM558.1 606.5h1.9v14.6h-1.9zM565.2 606.5h1.9v14.6h-1.9zM572.3 606.5h1.9v14.6h-1.9zM579.5 606.5h1.9v14.6h-1.9zM586.6 606.5h1.9v14.6h-1.9zM593.7 606.5h1.9v14.6h-1.9zM600.8 607.6h1.9v13.2h-1.9zM607.9 607.5h1.9v13.3h-1.9zM615.0 607.4h1.9v13.4h-1.9zM622.1 607.4h1.9v13.4h-1.9zM629.3 607.3h1.9v13.5h-1.9zM636.4 607.2h1.9v13.6h-1.9zM643.5 607.1h1.9v13.7h-1.9zM650.6 607.0h1.9v13.8h-1.9zM657.7 607.0h1.9v13.8h-1.9zM664.8 606.9h1.9v13.9h-1.9zM671.9 606.8h1.9v14.0h-1.9zM679.1 606.7h1.9v14.1h-1.9zM686.2 606.6h1.9v14.2h-1.9zM693.3 606.6h1.9v14.2h-1.9zM700.4 606.5h1.9v14.3h-1.9zM707.5 606.4h1.9v14.4h-1.9zM714.6 606.4h1.9v14.4h-1.9zM721.8 606.4h1.9v14.4h-1.9zM728.9 606.4h1.9v14.4h-1.9zM736.0 606.4h1.9v14.4h-1.9zM743.1 606.4h1.9v14.4h-1.9zM750.2 606.4h1.9v14.4h-1.9zM757.3 606.4h1.9v14.4h-1.9zM764.4 606.4h1.9v14.4h-1.9zM771.6 606.4h1.9v14.4h-1.9zM778.7 606.4h1.9v14.4h-1.9zM785.8 606.4h1.9v14.4h-1.9zM792.9 606.4h1.9v14.4h-1.9zM800.0 606.4h1.9v14.4h-1.9zM807.1 606.4h1.9v14.4h-1.9zM814.2 606.4h1.9v14.4h-1.9zM821.4 606.4h1.9v14.4h-1.9zM828.5 606.4h1.9v14.4h-1.9zM835.6 606.4h1.9v14.4h-1.9zM842.7 606.4h1.9v14.4h-1.9zM849.8 606.1h1.9v14.7h-1.9zM856.9 605.8h1.9v15.0h-1.9zM864.0 605.6h1.9v15.2h-1.9zM871.2 605.3h1.9v15.5h-1.9zM878.3 605.0h1.9v15.8h-1.9zM885.4 605.0h1.9v15.8h-1.9zM892.5 605.1h1.9v15.8h-1.9zM899.6 605.2h1.9v15.8h-1.9zM906.7 605.2h1.9v15.8h-1.9zM913.9 605.2h1.9v15.8h-1.9zM921.0 605.2h1.9v15.8h-1.9zM928.1 605.2h1.9v15.8h-1.9zM935.2 605.2h1.9v15.8h-1.9zM942.3 605.2h1.9v15.8h-1.9zM949.4 605.2h1.9v15.8h-1.9zM956.5 605.2h1.9v15.8h-1.9zM963.7 605.2h1.9v15.8h-1.9zM970.8 605.2h1.9v15.8h-1.9zM977.9 605.2h1.9v15.8h-1.9zM985.0 605.2h1.9v15.8h-1.9zM992.1 605.2h1.9v15.8h-1.9zM999.2 605.2h1.9v15.8h-1.9zM1006.4 605.2h1.9v15.8h-1.9zM1013.5 605.2h1.9v15.8h-1.9zM1020.6 605.2h1.9v15.8h-1.9zM1027.7 605.2h1.9v15.8h-1.9zM1034.8 605.2h1.9v15.8h-1.9zM1041.9 605.2h1.9v15.8h-1.9zM1049.0 605.2h1.9v15.8h-1.9zM1056.2 605.2h1.9v15.8h-1.9zM1063.3 605.2h1.9v15.8h-1.9zM1070.4 605.2h1.9v15.8h-1.9zM1077.5 605.2h1.9v15.8h-1.9zM1084.6 605.2h1.9v15.7h-1.9zM1091.7 605.2h1.9v15.7h-1.9z"/><path fill="#deac3e" d="M79.8 604.7h5.1v9.9h-5.1zM86.9 604.8h5.1v9.9h-5.1zM94.0 604.9h5.1v9.9h-5.1zM101.1 604.9h5.1v9.9h-5.1zM108.3 605.0h5.1v9.9h-5.1zM115.4 605.1h5.1v9.9h-5.1zM122.5 605.2h5.1v9.8h-5.1zM129.6 605.2h5.1v9.8h-5.1zM136.7 605.3h5.1v9.8h-5.1zM143.8 605.4h5.1v9.8h-5.1zM150.9 605.5h5.1v9.8h-5.1zM158.1 605.5h5.1v9.8h-5.1zM165.2 605.6h5.1v9.8h-5.1zM172.3 603.8h5.1v9.9h-5.1zM179.4 603.8h5.1v9.9h-5.1zM186.5 603.8h5.1v9.8h-5.1zM193.6 603.8h5.1v9.7h-5.1zM200.8 603.8h5.1v9.6h-5.1zM207.9 603.8h5.1v9.6h-5.1zM215.0 603.8h5.1v9.5h-5.1zM222.1 603.8h5.1v9.4h-5.1zM229.2 603.8h5.1v9.3h-5.1zM236.3 603.8h5.1v9.2h-5.1zM243.4 603.8h5.1v8.9h-5.1zM250.6 603.8h5.1v8.5h-5.1zM257.7 603.8h5.1v8.2h-5.1zM264.8 603.8h5.1v7.9h-5.1zM271.9 603.8h5.1v7.5h-5.1zM279.0 603.8h5.1v7.2h-5.1zM286.1 602.0h5.1v7.6h-5.1zM293.2 600.3h5.1v8.0h-5.1zM300.4 598.5h5.1v9.3h-5.1zM307.5 596.7h5.1v10.7h-5.1zM314.6 596.7h5.1v10.7h-5.1zM321.7 596.8h5.1v10.7h-5.1zM328.8 596.8h5.1v10.7h-5.1zM335.9 596.8h5.1v10.7h-5.1zM343.1 596.8h5.1v10.7h-5.1zM350.2 596.8h5.1v10.7h-5.1zM357.3 596.8h5.1v10.7h-5.1zM364.4 596.8h5.1v10.7h-5.1zM371.5 596.8h5.1v10.7h-5.1zM378.6 596.8h5.1v10.7h-5.1zM385.7 596.8h5.1v10.7h-5.1zM392.9 596.8h5.1v10.7h-5.1zM400.0 596.8h5.1v10.7h-5.1zM407.1 596.8h5.1v10.7h-5.1zM414.2 596.8h5.1v10.7h-5.1zM421.3 596.8h5.1v10.7h-5.1zM428.4 596.8h5.1v10.7h-5.1zM435.6 595.8h5.1v11.7h-5.1zM442.7 595.6h5.1v11.7h-5.1zM449.8 595.3h5.1v11.7h-5.1zM456.9 595.1h5.1v11.6h-5.1zM464.0 594.9h5.1v11.6h-5.1zM471.1 595.3h5.1v11.7h-5.1zM478.2 595.8h5.1v11.7h-5.1zM485.4 595.6h5.1v11.7h-5.1zM492.5 595.3h5.1v11.7h-5.1zM499.6 595.1h5.1v11.7h-5.1zM506.7 594.8h5.1v11.7h-5.1zM513.8 594.6h5.1v11.6h-5.1zM520.9 594.4h5.1v11.6h-5.1zM528.0 594.1h5.1v11.6h-5.1zM535.2 593.9h5.1v11.6h-5.1zM542.3 593.9h5.1v11.6h-5.1zM549.4 593.9h5.1v11.6h-5.1zM556.5 593.9h5.1v11.6h-5.1zM563.6 593.9h5.1v11.6h-5.1zM570.7 593.9h5.1v11.6h-5.1zM577.9 593.9h5.1v11.6h-5.1zM585.0 593.9h5.1v11.6h-5.1zM592.1 593.9h5.1v11.6h-5.1zM599.2 593.8h5.1v12.8h-5.1zM606.3 593.7h5.1v12.8h-5.1zM613.4 593.6h5.1v12.8h-5.1zM620.5 593.5h5.1v12.8h-5.1zM627.7 593.5h5.1v12.8h-5.1zM634.8 593.4h5.1v12.8h-5.1zM641.9 593.3h5.1v12.8h-5.1zM649.0 593.2h5.1v12.8h-5.1zM656.1 593.1h5.1v12.9h-5.1zM663.2 593.0h5.1v12.9h-5.1zM670.3 592.9h5.1v12.9h-5.1zM677.5 592.8h5.1v12.9h-5.1zM684.6 592.8h5.1v12.9h-5.1zM691.7 592.7h5.1v12.9h-5.1zM698.8 592.6h5.1v12.9h-5.1zM705.9 592.5h5.1v12.9h-5.1zM713.0 592.7h5.1v12.7h-5.1zM720.1 592.9h5.1v12.5h-5.1zM727.3 593.1h5.1v12.2h-5.1zM734.4 593.4h5.1v12.0h-5.1zM741.5 593.6h5.1v11.8h-5.1zM748.6 593.8h5.1v11.6h-5.1zM755.7 593.5h5.1v11.9h-5.1zM762.8 593.1h5.1v12.2h-5.1zM770.0 592.8h5.1v12.6h-5.1zM777.1 592.5h5.1v12.9h-5.1zM784.2 592.5h5.1v12.9h-5.1zM791.3 592.5h5.1v12.9h-5.1zM798.4 592.5h5.1v12.9h-5.1zM805.5 592.5h5.1v12.9h-5.1zM812.6 592.5h5.1v12.9h-5.1zM819.8 592.5h5.1v12.9h-5.1zM826.9 592.5h5.1v12.9h-5.1zM834.0 592.5h5.1v12.9h-5.1zM841.1 592.5h5.1v12.9h-5.1zM848.2 592.2h5.1v12.9h-5.1zM855.3 592.0h5.1v12.9h-5.1zM862.4 591.7h5.1v12.8h-5.1zM869.6 591.5h5.1v12.8h-5.1zM876.7 591.2h5.1v12.8h-5.1zM883.8 591.2h5.1v12.8h-5.1zM890.9 591.3h5.1v12.8h-5.1zM898.0 591.3h5.1v12.8h-5.1zM905.1 591.4h5.1v12.8h-5.1zM912.3 591.4h5.1v12.8h-5.1zM919.4 591.4h5.1v12.8h-5.1zM926.5 591.4h5.1v12.8h-5.1zM933.6 591.4h5.1v12.8h-5.1zM940.7 591.4h5.1v12.8h-5.1zM947.8 591.4h5.1v12.8h-5.1zM954.9 591.4h5.1v12.8h-5.1zM962.1 591.4h5.1v12.8h-5.1zM969.2 591.4h5.1v12.8h-5.1zM976.3 591.4h5.1v12.8h-5.1zM983.4 591.4h5.1v12.8h-5.1zM990.5 591.4h5.1v12.8h-5.1zM997.6 591.4h5.1v12.8h-5.1zM1004.8 591.4h5.1v12.8h-5.1zM1011.9 591.4h5.1v12.8h-5.1zM1019.0 591.4h5.1v12.8h-5.1zM1026.1 591.4h5.1v12.8h-5.1zM1033.2 591.4h5.1v12.8h-5.1zM1040.3 591.4h5.1v12.8h-5.1zM1047.4 591.4h5.1v12.8h-5.1zM1054.6 591.4h5.1v12.8h-5.1zM1061.7 591.4h5.1v12.8h-5.1zM1068.8 591.4h5.1v12.8h-5.1zM1075.9 591.4h5.1v12.8h-5.1zM1083.0 591.4h5.1v12.8h-5.1zM1090.1 591.4h5.1v12.8h-5.1z"/><path fill="#c99a35" d="M81.4 605.7h1.9v8.9h-1.9zM88.5 605.8h1.9v8.9h-1.9zM95.6 605.9h1.9v8.9h-1.9zM102.7 605.9h1.9v8.9h-1.9zM109.9 606.0h1.9v8.9h-1.9zM117.0 606.1h1.9v8.9h-1.9zM124.1 606.2h1.9v8.8h-1.9zM131.2 606.2h1.9v8.8h-1.9zM138.3 606.3h1.9v8.8h-1.9zM145.4 606.4h1.9v8.8h-1.9zM152.5 606.5h1.9v8.8h-1.9zM159.7 606.5h1.9v8.8h-1.9zM166.8 606.6h1.9v8.8h-1.9zM173.9 604.8h1.9v8.9h-1.9zM181.0 604.8h1.9v8.9h-1.9zM188.1 604.8h1.9v8.8h-1.9zM195.2 604.8h1.9v8.7h-1.9zM202.4 604.8h1.9v8.6h-1.9zM209.5 604.8h1.9v8.6h-1.9zM216.6 604.8h1.9v8.5h-1.9zM223.7 604.8h1.9v8.4h-1.9zM230.8 604.8h1.9v8.3h-1.9zM237.9 604.8h1.9v8.2h-1.9zM245.0 604.8h1.9v7.9h-1.9zM252.2 604.8h1.9v7.5h-1.9zM259.3 604.8h1.9v7.2h-1.9zM266.4 604.8h1.9v6.9h-1.9zM273.5 604.8h1.9v6.5h-1.9zM280.6 604.8h1.9v6.2h-1.9zM287.7 603.0h1.9v6.6h-1.9zM294.9 601.3h1.9v7.0h-1.9zM302.0 599.5h1.9v8.3h-1.9zM309.1 597.7h1.9v9.7h-1.9zM316.2 597.7h1.9v9.7h-1.9zM323.3 597.8h1.9v9.7h-1.9zM330.4 597.8h1.9v9.7h-1.9zM337.5 597.8h1.9v9.7h-1.9zM344.7 597.8h1.9v9.7h-1.9zM351.8 597.8h1.9v9.7h-1.9zM358.9 597.8h1.9v9.7h-1.9zM366.0 597.8h1.9v9.7h-1.9zM373.1 597.8h1.9v9.7h-1.9zM380.2 597.8h1.9v9.7h-1.9zM387.3 597.8h1.9v9.7h-1.9zM394.5 597.8h1.9v9.7h-1.9zM401.6 597.8h1.9v9.7h-1.9zM408.7 597.8h1.9v9.7h-1.9zM415.8 597.8h1.9v9.7h-1.9zM422.9 597.8h1.9v9.7h-1.9zM430.0 597.8h1.9v9.7h-1.9zM437.2 596.8h1.9v10.7h-1.9zM444.3 596.6h1.9v10.7h-1.9zM451.4 596.3h1.9v10.7h-1.9zM458.5 596.1h1.9v10.6h-1.9zM465.6 595.9h1.9v10.6h-1.9zM472.7 596.3h1.9v10.7h-1.9zM479.8 596.8h1.9v10.7h-1.9zM487.0 596.6h1.9v10.7h-1.9zM494.1 596.3h1.9v10.7h-1.9zM501.2 596.1h1.9v10.7h-1.9zM508.3 595.8h1.9v10.7h-1.9zM515.4 595.6h1.9v10.6h-1.9zM522.5 595.4h1.9v10.6h-1.9zM529.6 595.1h1.9v10.6h-1.9zM536.8 594.9h1.9v10.6h-1.9zM543.9 594.9h1.9v10.6h-1.9zM551.0 594.9h1.9v10.6h-1.9zM558.1 594.9h1.9v10.6h-1.9zM565.2 594.9h1.9v10.6h-1.9zM572.3 594.9h1.9v10.6h-1.9zM579.5 594.9h1.9v10.6h-1.9zM586.6 594.9h1.9v10.6h-1.9zM593.7 594.9h1.9v10.6h-1.9zM600.8 594.8h1.9v11.8h-1.9zM607.9 594.7h1.9v11.8h-1.9zM615.0 594.6h1.9v11.8h-1.9zM622.1 594.5h1.9v11.8h-1.9zM629.3 594.5h1.9v11.8h-1.9zM636.4 594.4h1.9v11.8h-1.9zM643.5 594.3h1.9v11.8h-1.9zM650.6 594.2h1.9v11.8h-1.9zM657.7 594.1h1.9v11.9h-1.9zM664.8 594.0h1.9v11.9h-1.9zM671.9 593.9h1.9v11.9h-1.9zM679.1 593.8h1.9v11.9h-1.9zM686.2 593.8h1.9v11.9h-1.9zM693.3 593.7h1.9v11.9h-1.9zM700.4 593.6h1.9v11.9h-1.9zM707.5 593.5h1.9v11.9h-1.9zM714.6 593.7h1.9v11.7h-1.9zM721.8 593.9h1.9v11.5h-1.9zM728.9 594.1h1.9v11.2h-1.9zM736.0 594.4h1.9v11.0h-1.9zM743.1 594.6h1.9v10.8h-1.9zM750.2 594.8h1.9v10.6h-1.9zM757.3 594.5h1.9v10.9h-1.9zM764.4 594.1h1.9v11.2h-1.9zM771.6 593.8h1.9v11.6h-1.9zM778.7 593.5h1.9v11.9h-1.9zM785.8 593.5h1.9v11.9h-1.9zM792.9 593.5h1.9v11.9h-1.9zM800.0 593.5h1.9v11.9h-1.9zM807.1 593.5h1.9v11.9h-1.9zM814.2 593.5h1.9v11.9h-1.9zM821.4 593.5h1.9v11.9h-1.9zM828.5 593.5h1.9v11.9h-1.9zM835.6 593.5h1.9v11.9h-1.9zM842.7 593.5h1.9v11.9h-1.9zM849.8 593.2h1.9v11.9h-1.9zM856.9 593.0h1.9v11.9h-1.9zM864.0 592.7h1.9v11.8h-1.9zM871.2 592.5h1.9v11.8h-1.9zM878.3 592.2h1.9v11.8h-1.9zM885.4 592.2h1.9v11.8h-1.9zM892.5 592.3h1.9v11.8h-1.9zM899.6 592.3h1.9v11.8h-1.9zM906.7 592.4h1.9v11.8h-1.9zM913.9 592.4h1.9v11.8h-1.9zM921.0 592.4h1.9v11.8h-1.9zM928.1 592.4h1.9v11.8h-1.9zM935.2 592.4h1.9v11.8h-1.9zM942.3 592.4h1.9v11.8h-1.9zM949.4 592.4h1.9v11.8h-1.9zM956.5 592.4h1.9v11.8h-1.9zM963.7 592.4h1.9v11.8h-1.9zM970.8 592.4h1.9v11.8h-1.9zM977.9 592.4h1.9v11.8h-1.9zM985.0 592.4h1.9v11.8h-1.9zM992.1 592.4h1.9v11.8h-1.9zM999.2 592.4h1.9v11.8h-1.9zM1006.4 592.4h1.9v11.8h-1.9zM1013.5 592.4h1.9v11.8h-1.9zM1020.6 592.4h1.9v11.8h-1.9zM1027.7 592.4h1.9v11.8h-1.9zM1034.8 592.4h1.9v11.8h-1.9zM1041.9 592.4h1.9v11.8h-1.9zM1049.0 592.4h1.9v11.8h-1.9zM1056.2 592.4h1.9v11.8h-1.9zM1063.3 592.4h1.9v11.8h-1.9zM1070.4 592.4h1.9v11.8h-1.9zM1077.5 592.4h1.9v11.8h-1.9zM1084.6 592.4h1.9v11.8h-1.9zM1091.7 592.4h1.9v11.8h-1.9z"/><path fill="#86c07c" d="M79.8 590.4h5.1v14.3h-5.1zM86.9 590.5h5.1v14.2h-5.1zM94.0 590.7h5.1v14.2h-5.1zM101.1 590.8h5.1v14.1h-5.1zM108.3 591.0h5.1v14.0h-5.1zM115.4 591.1h5.1v13.9h-5.1zM122.5 591.3h5.1v13.9h-5.1zM129.6 591.5h5.1v13.8h-5.1zM136.7 591.6h5.1v13.7h-5.1zM143.8 591.8h5.1v13.6h-5.1zM150.9 591.9h5.1v13.5h-5.1zM158.1 592.1h5.1v13.5h-5.1zM165.2 592.2h5.1v13.4h-5.1zM172.3 590.4h5.1v13.4h-5.1zM179.4 590.4h5.1v13.4h-5.1zM186.5 590.5h5.1v13.3h-5.1zM193.6 590.6h5.1v13.2h-5.1zM200.8 590.7h5.1v13.1h-5.1zM207.9 590.8h5.1v13.0h-5.1zM215.0 591.0h5.1v12.8h-5.1zM222.1 591.1h5.1v12.7h-5.1zM229.2 591.2h5.1v12.6h-5.1zM236.3 591.3h5.1v12.5h-5.1zM243.4 591.0h5.1v12.8h-5.1zM250.6 590.7h5.1v13.1h-5.1zM257.7 590.4h5.1v13.4h-5.1zM264.8 590.1h5.1v13.7h-5.1zM271.9 589.8h5.1v14.0h-5.1zM279.0 589.5h5.1v14.3h-5.1zM286.1 587.8h5.1v14.3h-5.1zM293.2 586.0h5.1v14.3h-5.1zM300.4 584.2h5.1v14.3h-5.1zM307.5 582.4h5.1v14.3h-5.1zM314.6 581.9h5.1v14.9h-5.1zM321.7 581.3h5.1v15.4h-5.1zM328.8 580.8h5.1v16.0h-5.1zM335.9 580.3h5.1v16.5h-5.1zM343.1 580.2h5.1v16.6h-5.1zM350.2 580.1h5.1v16.7h-5.1zM357.3 580.1h5.1v16.7h-5.1zM364.4 580.0h5.1v16.8h-5.1zM371.5 579.9h5.1v16.9h-5.1zM378.6 579.8h5.1v17.0h-5.1zM385.7 579.8h5.1v17.0h-5.1zM392.9 579.7h5.1v17.1h-5.1zM400.0 579.6h5.1v17.2h-5.1zM407.1 579.5h5.1v17.3h-5.1zM414.2 579.5h5.1v17.3h-5.1zM421.3 579.4h5.1v17.4h-5.1zM428.4 579.3h5.1v17.5h-5.1zM435.6 579.3h5.1v16.5h-5.1zM442.7 579.0h5.1v16.5h-5.1zM449.8 578.8h5.1v16.5h-5.1zM456.9 578.5h5.1v16.6h-5.1zM464.0 578.3h5.1v16.6h-5.1zM471.1 578.8h5.1v16.5h-5.1zM478.2 579.3h5.1v16.5h-5.1zM485.4 578.9h5.1v16.6h-5.1zM492.5 578.6h5.1v16.8h-5.1zM499.6 578.2h5.1v16.9h-5.1zM506.7 577.8h5.1v17.0h-5.1zM513.8 577.5h5.1v17.1h-5.1zM520.9 577.1h5.1v17.2h-5.1zM528.0 576.8h5.1v17.4h-5.1zM535.2 576.4h5.1v17.5h-5.1zM542.3 576.3h5.1v17.6h-5.1zM549.4 576.1h5.1v17.8h-5.1zM556.5 576.0h5.1v17.9h-5.1zM563.6 575.9h5.1v18.0h-5.1zM570.7 575.8h5.1v18.1h-5.1zM577.9 575.6h5.1v18.2h-5.1zM585.0 575.5h5.1v18.4h-5.1zM592.1 575.4h5.1v18.5h-5.1zM599.2 574.6h5.1v19.2h-5.1zM606.3 574.5h5.1v19.2h-5.1zM613.4 574.4h5.1v19.2h-5.1zM620.5 574.3h5.1v19.2h-5.1zM627.7 574.3h5.1v19.2h-5.1zM634.8 574.2h5.1v19.2h-5.1zM641.9 574.1h5.1v19.2h-5.1zM649.0 574.0h5.1v19.2h-5.1zM656.1 573.9h5.1v19.2h-5.1zM663.2 573.8h5.1v19.2h-5.1zM670.3 573.7h5.1v19.2h-5.1zM677.5 573.6h5.1v19.2h-5.1zM684.6 573.6h5.1v19.2h-5.1zM691.7 573.5h5.1v19.2h-5.1zM698.8 573.4h5.1v19.2h-5.1zM705.9 573.3h5.1v19.2h-5.1zM713.0 573.5h5.1v19.2h-5.1zM720.1 573.7h5.1v19.2h-5.1zM727.3 574.0h5.1v19.2h-5.1zM734.4 574.2h5.1v19.2h-5.1zM741.5 574.4h5.1v19.2h-5.1zM748.6 574.6h5.1v19.2h-5.1zM755.7 574.3h5.1v19.2h-5.1zM762.8 574.0h5.1v19.2h-5.1zM770.0 573.6h5.1v19.2h-5.1zM777.1 573.3h5.1v19.2h-5.1zM784.2 573.3h5.1v19.2h-5.1zM791.3 573.3h5.1v19.2h-5.1zM798.4 573.3h5.1v19.2h-5.1zM805.5 573.3h5.1v19.2h-5.1zM812.6 573.3h5.1v19.2h-5.1zM819.8 573.3h5.1v19.2h-5.1zM826.9 573.3h5.1v19.2h-5.1zM834.0 573.3h5.1v19.2h-5.1zM841.1 573.3h5.1v19.2h-5.1zM848.2 573.0h5.1v19.2h-5.1zM855.3 572.8h5.1v19.2h-5.1zM862.4 572.5h5.1v19.2h-5.1zM869.6 572.3h5.1v19.2h-5.1zM876.7 572.0h5.1v19.2h-5.1zM883.8 571.9h5.1v19.4h-5.1zM890.9 571.8h5.1v19.5h-5.1zM898.0 571.7h5.1v19.6h-5.1zM905.1 571.6h5.1v19.8h-5.1zM912.3 571.6h5.1v19.8h-5.1zM919.4 571.6h5.1v19.8h-5.1zM926.5 571.6h5.1v19.8h-5.1zM933.6 571.6h5.1v19.8h-5.1zM940.7 571.6h5.1v19.8h-5.1zM947.8 571.6h5.1v19.8h-5.1zM954.9 571.6h5.1v19.8h-5.1zM962.1 571.6h5.1v19.8h-5.1zM969.2 571.6h5.1v19.8h-5.1zM976.3 571.6h5.1v19.8h-5.1zM983.4 571.6h5.1v19.8h-5.1zM990.5 571.6h5.1v19.8h-5.1zM997.6 571.6h5.1v19.8h-5.1zM1004.8 571.6h5.1v19.8h-5.1zM1011.9 571.6h5.1v19.8h-5.1zM1019.0 571.6h5.1v19.8h-5.1zM1026.1 571.6h5.1v19.8h-5.1zM1033.2 571.6h5.1v19.8h-5.1zM1040.3 571.6h5.1v19.8h-5.1zM1047.4 571.6h5.1v19.8h-5.1zM1054.6 571.6h5.1v19.8h-5.1zM1061.7 571.6h5.1v19.8h-5.1zM1068.8 571.4h5.1v20.0h-5.1zM1075.9 571.2h5.1v20.1h-5.1zM1083.0 571.1h5.1v20.3h-5.1zM1090.1 570.9h5.1v20.5h-5.1z"/><path fill="#74ad6a" d="M81.4 591.4h1.9v13.3h-1.9zM88.5 591.5h1.9v13.2h-1.9zM95.6 591.7h1.9v13.2h-1.9zM102.7 591.8h1.9v13.1h-1.9zM109.9 592.0h1.9v13.0h-1.9zM117.0 592.1h1.9v12.9h-1.9zM124.1 592.3h1.9v12.9h-1.9zM131.2 592.5h1.9v12.8h-1.9zM138.3 592.6h1.9v12.7h-1.9zM145.4 592.8h1.9v12.6h-1.9zM152.5 592.9h1.9v12.5h-1.9zM159.7 593.1h1.9v12.5h-1.9zM166.8 593.2h1.9v12.4h-1.9zM173.9 591.4h1.9v12.4h-1.9zM181.0 591.4h1.9v12.4h-1.9zM188.1 591.5h1.9v12.3h-1.9zM195.2 591.6h1.9v12.2h-1.9zM202.4 591.7h1.9v12.1h-1.9zM209.5 591.8h1.9v12.0h-1.9zM216.6 592.0h1.9v11.8h-1.9zM223.7 592.1h1.9v11.7h-1.9zM230.8 592.2h1.9v11.6h-1.9zM237.9 592.3h1.9v11.5h-1.9zM245.0 592.0h1.9v11.8h-1.9zM252.2 591.7h1.9v12.1h-1.9zM259.3 591.4h1.9v12.4h-1.9zM266.4 591.1h1.9v12.7h-1.9zM273.5 590.8h1.9v13.0h-1.9zM280.6 590.5h1.9v13.3h-1.9zM287.7 588.8h1.9v13.3h-1.9zM294.9 587.0h1.9v13.3h-1.9zM302.0 585.2h1.9v13.3h-1.9zM309.1 583.4h1.9v13.3h-1.9zM316.2 582.9h1.9v13.9h-1.9zM323.3 582.3h1.9v14.4h-1.9zM330.4 581.8h1.9v15.0h-1.9zM337.5 581.3h1.9v15.5h-1.9zM344.7 581.2h1.9v15.6h-1.9zM351.8 581.1h1.9v15.7h-1.9zM358.9 581.1h1.9v15.7h-1.9zM366.0 581.0h1.9v15.8h-1.9zM373.1 580.9h1.9v15.9h-1.9zM380.2 580.8h1.9v16.0h-1.9zM387.3 580.8h1.9v16.0h-1.9zM394.5 580.7h1.9v16.1h-1.9zM401.6 580.6h1.9v16.2h-1.9zM408.7 580.5h1.9v16.3h-1.9zM415.8 580.5h1.9v16.3h-1.9zM422.9 580.4h1.9v16.4h-1.9zM430.0 580.3h1.9v16.5h-1.9zM437.2 580.3h1.9v15.5h-1.9zM444.3 580.0h1.9v15.5h-1.9zM451.4 579.8h1.9v15.5h-1.9zM458.5 579.5h1.9v15.6h-1.9zM465.6 579.3h1.9v15.6h-1.9zM472.7 579.8h1.9v15.5h-1.9zM479.8 580.3h1.9v15.5h-1.9zM487.0 579.9h1.9v15.6h-1.9zM494.1 579.6h1.9v15.8h-1.9zM501.2 579.2h1.9v15.9h-1.9zM508.3 578.8h1.9v16.0h-1.9zM515.4 578.5h1.9v16.1h-1.9zM522.5 578.1h1.9v16.2h-1.9zM529.6 577.8h1.9v16.4h-1.9zM536.8 577.4h1.9v16.5h-1.9zM543.9 577.3h1.9v16.6h-1.9zM551.0 577.1h1.9v16.8h-1.9zM558.1 577.0h1.9v16.9h-1.9zM565.2 576.9h1.9v17.0h-1.9zM572.3 576.8h1.9v17.1h-1.9zM579.5 576.6h1.9v17.2h-1.9zM586.6 576.5h1.9v17.4h-1.9zM593.7 576.4h1.9v17.5h-1.9zM600.8 575.6h1.9v18.2h-1.9zM607.9 575.5h1.9v18.2h-1.9zM615.0 575.4h1.9v18.2h-1.9zM622.1 575.3h1.9v18.2h-1.9zM629.3 575.3h1.9v18.2h-1.9zM636.4 575.2h1.9v18.2h-1.9zM643.5 575.1h1.9v18.2h-1.9zM650.6 575.0h1.9v18.2h-1.9zM657.7 574.9h1.9v18.2h-1.9zM664.8 574.8h1.9v18.2h-1.9zM671.9 574.7h1.9v18.2h-1.9zM679.1 574.6h1.9v18.2h-1.9zM686.2 574.6h1.9v18.2h-1.9zM693.3 574.5h1.9v18.2h-1.9zM700.4 574.4h1.9v18.2h-1.9zM707.5 574.3h1.9v18.2h-1.9zM714.6 574.5h1.9v18.2h-1.9zM721.8 574.7h1.9v18.2h-1.9zM728.9 575.0h1.9v18.2h-1.9zM736.0 575.2h1.9v18.2h-1.9zM743.1 575.4h1.9v18.2h-1.9zM750.2 575.6h1.9v18.2h-1.9zM757.3 575.3h1.9v18.2h-1.9zM764.4 575.0h1.9v18.2h-1.9zM771.6 574.6h1.9v18.2h-1.9zM778.7 574.3h1.9v18.2h-1.9zM785.8 574.3h1.9v18.2h-1.9zM792.9 574.3h1.9v18.2h-1.9zM800.0 574.3h1.9v18.2h-1.9zM807.1 574.3h1.9v18.2h-1.9zM814.2 574.3h1.9v18.2h-1.9zM821.4 574.3h1.9v18.2h-1.9zM828.5 574.3h1.9v18.2h-1.9zM835.6 574.3h1.9v18.2h-1.9zM842.7 574.3h1.9v18.2h-1.9zM849.8 574.0h1.9v18.2h-1.9zM856.9 573.8h1.9v18.2h-1.9zM864.0 573.5h1.9v18.2h-1.9zM871.2 573.3h1.9v18.2h-1.9zM878.3 573.0h1.9v18.2h-1.9zM885.4 572.9h1.9v18.4h-1.9zM892.5 572.8h1.9v18.5h-1.9zM899.6 572.7h1.9v18.6h-1.9zM906.7 572.6h1.9v18.8h-1.9zM913.9 572.6h1.9v18.8h-1.9zM921.0 572.6h1.9v18.8h-1.9zM928.1 572.6h1.9v18.8h-1.9zM935.2 572.6h1.9v18.8h-1.9zM942.3 572.6h1.9v18.8h-1.9zM949.4 572.6h1.9v18.8h-1.9zM956.5 572.6h1.9v18.8h-1.9zM963.7 572.6h1.9v18.8h-1.9zM970.8 572.6h1.9v18.8h-1.9zM977.9 572.6h1.9v18.8h-1.9zM985.0 572.6h1.9v18.8h-1.9zM992.1 572.6h1.9v18.8h-1.9zM999.2 572.6h1.9v18.8h-1.9zM1006.4 572.6h1.9v18.8h-1.9zM1013.5 572.6h1.9v18.8h-1.9zM1020.6 572.6h1.9v18.8h-1.9zM1027.7 572.6h1.9v18.8h-1.9zM1034.8 572.6h1.9v18.8h-1.9zM1041.9 572.6h1.9v18.8h-1.9zM1049.0 572.6h1.9v18.8h-1.9zM1056.2 572.6h1.9v18.8h-1.9zM1063.3 572.6h1.9v18.8h-1.9zM1070.4 572.4h1.9v19.0h-1.9zM1077.5 572.2h1.9v19.1h-1.9zM1084.6 572.1h1.9v19.3h-1.9zM1091.7 571.9h1.9v19.5h-1.9z"/><path fill="#ec8424" d="M79.8 565.4h5.1v25.0h-5.1zM86.9 565.5h5.1v25.0h-5.1zM94.0 565.7h5.1v25.0h-5.1zM101.1 565.8h5.1v25.0h-5.1zM108.3 566.0h5.1v25.0h-5.1zM115.4 566.1h5.1v25.0h-5.1zM122.5 566.3h5.1v25.0h-5.1zM129.6 566.5h5.1v25.0h-5.1zM136.7 566.6h5.1v25.0h-5.1zM143.8 566.8h5.1v25.0h-5.1zM150.9 566.9h5.1v25.0h-5.1zM158.1 567.1h5.1v25.0h-5.1zM165.2 567.2h5.1v25.0h-5.1zM172.3 558.2h5.1v32.2h-5.1zM179.4 561.0h5.1v29.4h-5.1zM186.5 560.5h5.1v30.0h-5.1zM193.6 560.1h5.1v30.5h-5.1zM200.8 559.6h5.1v31.1h-5.1zM207.9 559.1h5.1v31.7h-5.1zM215.0 558.7h5.1v32.3h-5.1zM222.1 558.2h5.1v32.9h-5.1zM229.2 557.8h5.1v33.4h-5.1zM236.3 557.3h5.1v34.0h-5.1zM243.4 556.9h5.1v34.1h-5.1zM250.6 556.4h5.1v34.3h-5.1zM257.7 556.0h5.1v34.4h-5.1zM264.8 555.6h5.1v34.5h-5.1zM271.9 555.1h5.1v34.7h-5.1zM279.0 554.7h5.1v34.8h-5.1zM286.1 552.0h5.1v35.8h-5.1zM293.2 549.3h5.1v36.7h-5.1zM300.4 548.8h5.1v35.4h-5.1zM307.5 548.4h5.1v34.0h-5.1zM314.6 548.3h5.1v33.5h-5.1zM321.7 548.3h5.1v33.0h-5.1zM328.8 548.2h5.1v32.6h-5.1zM335.9 548.2h5.1v32.1h-5.1zM343.1 547.8h5.1v32.5h-5.1zM350.2 547.3h5.1v32.8h-5.1zM357.3 546.9h5.1v33.2h-5.1zM364.4 546.4h5.1v33.6h-5.1zM371.5 546.0h5.1v33.9h-5.1zM378.6 545.5h5.1v34.3h-5.1zM385.7 545.1h5.1v34.7h-5.1zM392.9 544.6h5.1v35.1h-5.1zM400.0 544.2h5.1v35.4h-5.1zM407.1 543.7h5.1v35.8h-5.1zM414.2 543.3h5.1v36.2h-5.1zM421.3 542.8h5.1v36.5h-5.1zM428.4 542.4h5.1v36.9h-5.1zM435.6 541.4h5.1v37.9h-5.1zM442.7 539.7h5.1v39.4h-5.1zM449.8 538.0h5.1v40.8h-5.1zM456.9 536.3h5.1v42.2h-5.1zM464.0 534.6h5.1v43.7h-5.1zM471.1 536.5h5.1v42.2h-5.1zM478.2 538.5h5.1v40.8h-5.1zM485.4 537.8h5.1v41.2h-5.1zM492.5 537.0h5.1v41.5h-5.1zM499.6 536.3h5.1v41.9h-5.1zM506.7 535.5h5.1v42.3h-5.1zM513.8 534.8h5.1v42.7h-5.1zM520.9 534.1h5.1v43.0h-5.1zM528.0 533.3h5.1v43.4h-5.1zM535.2 532.6h5.1v43.8h-5.1zM542.3 532.6h5.1v43.7h-5.1zM549.4 532.6h5.1v43.5h-5.1zM556.5 532.6h5.1v43.4h-5.1zM563.6 532.6h5.1v43.3h-5.1zM570.7 532.6h5.1v43.2h-5.1zM577.9 532.6h5.1v43.0h-5.1zM585.0 532.6h5.1v42.9h-5.1zM592.1 532.6h5.1v42.8h-5.1zM599.2 545.1h5.1v29.5h-5.1zM606.3 545.0h5.1v29.5h-5.1zM613.4 544.9h5.1v29.5h-5.1zM620.5 544.8h5.1v29.5h-5.1zM627.7 544.8h5.1v29.5h-5.1zM634.8 544.7h5.1v29.5h-5.1zM641.9 544.6h5.1v29.5h-5.1zM649.0 544.5h5.1v29.5h-5.1zM656.1 544.4h5.1v29.5h-5.1zM663.2 544.3h5.1v29.5h-5.1zM670.3 544.2h5.1v29.5h-5.1zM677.5 544.1h5.1v29.5h-5.1zM684.6 544.1h5.1v29.5h-5.1zM691.7 544.0h5.1v29.5h-5.1zM698.8 543.9h5.1v29.5h-5.1zM705.9 543.8h5.1v29.5h-5.1zM713.0 544.0h5.1v29.5h-5.1zM720.1 544.2h5.1v29.5h-5.1zM727.3 544.5h5.1v29.5h-5.1zM734.4 544.7h5.1v29.5h-5.1zM741.5 544.9h5.1v29.5h-5.1zM748.6 545.1h5.1v29.5h-5.1zM755.7 544.8h5.1v29.5h-5.1zM762.8 544.5h5.1v29.5h-5.1zM770.0 544.1h5.1v29.5h-5.1zM777.1 543.8h5.1v29.5h-5.1zM784.2 543.8h5.1v29.5h-5.1zM791.3 543.8h5.1v29.5h-5.1zM798.4 543.8h5.1v29.5h-5.1zM805.5 543.8h5.1v29.5h-5.1zM812.6 543.8h5.1v29.5h-5.1zM819.8 543.8h5.1v29.5h-5.1zM826.9 543.8h5.1v29.5h-5.1zM834.0 543.8h5.1v29.5h-5.1zM841.1 543.8h5.1v29.5h-5.1zM848.2 543.5h5.1v29.5h-5.1zM855.3 543.3h5.1v29.5h-5.1zM862.4 543.0h5.1v29.5h-5.1zM869.6 542.8h5.1v29.5h-5.1zM876.7 542.5h5.1v29.5h-5.1zM883.8 541.9h5.1v30.0h-5.1zM890.9 541.2h5.1v30.5h-5.1zM898.0 540.6h5.1v31.1h-5.1zM905.1 540.0h5.1v31.6h-5.1zM912.3 540.0h5.1v31.6h-5.1zM919.4 540.0h5.1v31.6h-5.1zM926.5 539.9h5.1v31.7h-5.1zM933.6 539.8h5.1v31.8h-5.1zM940.7 539.7h5.1v31.9h-5.1zM947.8 539.6h5.1v32.0h-5.1zM954.9 539.5h5.1v32.1h-5.1zM962.1 539.4h5.1v32.2h-5.1zM969.2 539.4h5.1v32.2h-5.1zM976.3 539.3h5.1v32.3h-5.1zM983.4 539.2h5.1v32.4h-5.1zM990.5 539.1h5.1v32.5h-5.1zM997.6 539.0h5.1v32.6h-5.1zM1004.8 538.9h5.1v32.7h-5.1zM1011.9 538.8h5.1v32.8h-5.1zM1019.0 539.6h5.1v32.0h-5.1zM1026.1 540.5h5.1v31.1h-5.1zM1033.2 541.3h5.1v30.3h-5.1zM1040.3 541.2h5.1v30.4h-5.1zM1047.4 541.0h5.1v30.6h-5.1zM1054.6 540.9h5.1v30.7h-5.1zM1061.7 540.8h5.1v30.8h-5.1zM1068.8 540.4h5.1v31.0h-5.1zM1075.9 540.0h5.1v31.2h-5.1zM1083.0 539.7h5.1v31.4h-5.1zM1090.1 539.3h5.1v31.6h-5.1z"/><path fill="#dc7620" d="M81.4 566.4h1.9v24.0h-1.9zM88.5 566.5h1.9v24.0h-1.9zM95.6 566.7h1.9v24.0h-1.9zM102.7 566.8h1.9v24.0h-1.9zM109.9 567.0h1.9v24.0h-1.9zM117.0 567.1h1.9v24.0h-1.9zM124.1 567.3h1.9v24.0h-1.9zM131.2 567.5h1.9v24.0h-1.9zM138.3 567.6h1.9v24.0h-1.9zM145.4 567.8h1.9v24.0h-1.9zM152.5 567.9h1.9v24.0h-1.9zM159.7 568.1h1.9v24.0h-1.9zM166.8 568.2h1.9v24.0h-1.9zM173.9 559.2h1.9v31.2h-1.9zM181.0 562.0h1.9v28.4h-1.9zM188.1 561.5h1.9v29.0h-1.9zM195.2 561.1h1.9v29.5h-1.9zM202.4 560.6h1.9v30.1h-1.9zM209.5 560.1h1.9v30.7h-1.9zM216.6 559.7h1.9v31.3h-1.9zM223.7 559.2h1.9v31.9h-1.9zM230.8 558.8h1.9v32.4h-1.9zM237.9 558.3h1.9v33.0h-1.9zM245.0 557.9h1.9v33.1h-1.9zM252.2 557.4h1.9v33.3h-1.9zM259.3 557.0h1.9v33.4h-1.9zM266.4 556.6h1.9v33.5h-1.9zM273.5 556.1h1.9v33.7h-1.9zM280.6 555.7h1.9v33.8h-1.9zM287.7 553.0h1.9v34.8h-1.9zM294.9 550.3h1.9v35.7h-1.9zM302.0 549.8h1.9v34.4h-1.9zM309.1 549.4h1.9v33.0h-1.9zM316.2 549.3h1.9v32.5h-1.9zM323.3 549.3h1.9v32.0h-1.9zM330.4 549.2h1.9v31.6h-1.9zM337.5 549.2h1.9v31.1h-1.9zM344.7 548.8h1.9v31.5h-1.9zM351.8 548.3h1.9v31.8h-1.9zM358.9 547.9h1.9v32.2h-1.9zM366.0 547.4h1.9v32.6h-1.9zM373.1 547.0h1.9v32.9h-1.9zM380.2 546.5h1.9v33.3h-1.9zM387.3 546.1h1.9v33.7h-1.9zM394.5 545.6h1.9v34.1h-1.9zM401.6 545.2h1.9v34.4h-1.9zM408.7 544.7h1.9v34.8h-1.9zM415.8 544.3h1.9v35.2h-1.9zM422.9 543.8h1.9v35.5h-1.9zM430.0 543.4h1.9v35.9h-1.9zM437.2 542.4h1.9v36.9h-1.9zM444.3 540.7h1.9v38.4h-1.9zM451.4 539.0h1.9v39.8h-1.9zM458.5 537.3h1.9v41.2h-1.9zM465.6 535.6h1.9v42.7h-1.9zM472.7 537.5h1.9v41.2h-1.9zM479.8 539.5h1.9v39.8h-1.9zM487.0 538.8h1.9v40.2h-1.9zM494.1 538.0h1.9v40.5h-1.9zM501.2 537.3h1.9v40.9h-1.9zM508.3 536.5h1.9v41.3h-1.9zM515.4 535.8h1.9v41.7h-1.9zM522.5 535.1h1.9v42.0h-1.9zM529.6 534.3h1.9v42.4h-1.9zM536.8 533.6h1.9v42.8h-1.9zM543.9 533.6h1.9v42.7h-1.9zM551.0 533.6h1.9v42.5h-1.9zM558.1 533.6h1.9v42.4h-1.9zM565.2 533.6h1.9v42.3h-1.9zM572.3 533.6h1.9v42.2h-1.9zM579.5 533.6h1.9v42.0h-1.9zM586.6 533.6h1.9v41.9h-1.9zM593.7 533.6h1.9v41.8h-1.9zM600.8 546.1h1.9v28.5h-1.9zM607.9 546.0h1.9v28.5h-1.9zM615.0 545.9h1.9v28.5h-1.9zM622.1 545.8h1.9v28.5h-1.9zM629.3 545.8h1.9v28.5h-1.9zM636.4 545.7h1.9v28.5h-1.9zM643.5 545.6h1.9v28.5h-1.9zM650.6 545.5h1.9v28.5h-1.9zM657.7 545.4h1.9v28.5h-1.9zM664.8 545.3h1.9v28.5h-1.9zM671.9 545.2h1.9v28.5h-1.9zM679.1 545.1h1.9v28.5h-1.9zM686.2 545.1h1.9v28.5h-1.9zM693.3 545.0h1.9v28.5h-1.9zM700.4 544.9h1.9v28.5h-1.9zM707.5 544.8h1.9v28.5h-1.9zM714.6 545.0h1.9v28.5h-1.9zM721.8 545.2h1.9v28.5h-1.9zM728.9 545.5h1.9v28.5h-1.9zM736.0 545.7h1.9v28.5h-1.9zM743.1 545.9h1.9v28.5h-1.9zM750.2 546.1h1.9v28.5h-1.9zM757.3 545.8h1.9v28.5h-1.9zM764.4 545.5h1.9v28.5h-1.9zM771.6 545.1h1.9v28.5h-1.9zM778.7 544.8h1.9v28.5h-1.9zM785.8 544.8h1.9v28.5h-1.9zM792.9 544.8h1.9v28.5h-1.9zM800.0 544.8h1.9v28.5h-1.9zM807.1 544.8h1.9v28.5h-1.9zM814.2 544.8h1.9v28.5h-1.9zM821.4 544.8h1.9v28.5h-1.9zM828.5 544.8h1.9v28.5h-1.9zM835.6 544.8h1.9v28.5h-1.9zM842.7 544.8h1.9v28.5h-1.9zM849.8 544.5h1.9v28.5h-1.9zM856.9 544.3h1.9v28.5h-1.9zM864.0 544.0h1.9v28.5h-1.9zM871.2 543.8h1.9v28.5h-1.9zM878.3 543.5h1.9v28.5h-1.9zM885.4 542.9h1.9v29.0h-1.9zM892.5 542.2h1.9v29.5h-1.9zM899.6 541.6h1.9v30.1h-1.9zM906.7 541.0h1.9v30.6h-1.9zM913.9 541.0h1.9v30.6h-1.9zM921.0 541.0h1.9v30.6h-1.9zM928.1 540.9h1.9v30.7h-1.9zM935.2 540.8h1.9v30.8h-1.9zM942.3 540.7h1.9v30.9h-1.9zM949.4 540.6h1.9v31.0h-1.9zM956.5 540.5h1.9v31.1h-1.9zM963.7 540.4h1.9v31.2h-1.9zM970.8 540.4h1.9v31.2h-1.9zM977.9 540.3h1.9v31.3h-1.9zM985.0 540.2h1.9v31.4h-1.9zM992.1 540.1h1.9v31.5h-1.9zM999.2 540.0h1.9v31.6h-1.9zM1006.4 539.9h1.9v31.7h-1.9zM1013.5 539.8h1.9v31.8h-1.9zM1020.6 540.6h1.9v31.0h-1.9zM1027.7 541.5h1.9v30.1h-1.9zM1034.8 542.3h1.9v29.3h-1.9zM1041.9 542.2h1.9v29.4h-1.9zM1049.0 542.0h1.9v29.6h-1.9zM1056.2 541.9h1.9v29.7h-1.9zM1063.3 541.8h1.9v29.8h-1.9zM1070.4 541.4h1.9v30.0h-1.9zM1077.5 541.0h1.9v30.2h-1.9zM1084.6 540.7h1.9v30.4h-1.9zM1091.7 540.3h1.9v30.6h-1.9z"/><path fill="#9a8c1c" d="M79.8 554.0h5.1v11.4h-5.1zM86.9 554.1h5.1v11.4h-5.1zM94.0 554.2h5.1v11.5h-5.1zM101.1 554.4h5.1v11.5h-5.1zM108.3 554.5h5.1v11.5h-5.1zM115.4 554.6h5.1v11.5h-5.1zM122.5 554.8h5.1v11.5h-5.1zM129.6 554.9h5.1v11.6h-5.1zM136.7 555.0h5.1v11.6h-5.1zM143.8 555.1h5.1v11.6h-5.1zM150.9 555.2h5.1v11.7h-5.1zM158.1 555.4h5.1v11.7h-5.1zM165.2 555.5h5.1v11.7h-5.1zM172.3 547.5h5.1v10.7h-5.1zM179.4 550.2h5.1v10.8h-5.1zM186.5 549.8h5.1v10.8h-5.1zM193.6 549.3h5.1v10.8h-5.1zM200.8 548.9h5.1v10.8h-5.1zM207.9 548.4h5.1v10.7h-5.1zM215.0 548.0h5.1v10.7h-5.1zM222.1 547.5h5.1v10.7h-5.1zM229.2 547.1h5.1v10.7h-5.1zM236.3 546.6h5.1v10.7h-5.1zM243.4 545.9h5.1v11.0h-5.1zM250.6 545.1h5.1v11.3h-5.1zM257.7 544.4h5.1v11.6h-5.1zM264.8 543.6h5.1v12.0h-5.1zM271.9 542.9h5.1v12.3h-5.1zM279.0 542.1h5.1v12.6h-5.1zM286.1 540.4h5.1v11.6h-5.1zM293.2 538.6h5.1v10.7h-5.1zM300.4 535.9h5.1v12.9h-5.1zM307.5 533.2h5.1v15.2h-5.1zM314.6 532.8h5.1v15.5h-5.1zM321.7 532.5h5.1v15.8h-5.1zM328.8 532.1h5.1v16.2h-5.1zM335.9 531.7h5.1v16.5h-5.1zM343.1 531.4h5.1v16.4h-5.1zM350.2 531.1h5.1v16.2h-5.1zM357.3 530.8h5.1v16.1h-5.1zM364.4 530.5h5.1v15.9h-5.1zM371.5 530.2h5.1v15.8h-5.1zM378.6 529.9h5.1v15.6h-5.1zM385.7 529.6h5.1v15.5h-5.1zM392.9 529.3h5.1v15.3h-5.1zM400.0 529.0h5.1v15.2h-5.1zM407.1 528.7h5.1v15.0h-5.1zM414.2 528.4h5.1v14.9h-5.1zM421.3 528.1h5.1v14.7h-5.1zM428.4 527.8h5.1v14.6h-5.1zM435.6 524.9h5.1v16.5h-5.1zM442.7 522.9h5.1v16.8h-5.1zM449.8 521.0h5.1v17.0h-5.1zM456.9 519.1h5.1v17.2h-5.1zM464.0 517.1h5.1v17.5h-5.1zM471.1 518.5h5.1v18.0h-5.1zM478.2 520.0h5.1v18.5h-5.1zM485.4 519.4h5.1v18.4h-5.1zM492.5 518.8h5.1v18.2h-5.1zM499.6 518.2h5.1v18.1h-5.1zM506.7 517.5h5.1v18.0h-5.1zM513.8 516.9h5.1v17.9h-5.1zM520.9 516.3h5.1v17.8h-5.1zM528.0 515.7h5.1v17.6h-5.1zM535.2 515.1h5.1v17.5h-5.1zM542.3 515.1h5.1v17.5h-5.1zM549.4 515.1h5.1v17.5h-5.1zM556.5 515.1h5.1v17.5h-5.1zM563.6 515.1h5.1v17.5h-5.1zM570.7 515.1h5.1v17.5h-5.1zM577.9 515.1h5.1v17.5h-5.1zM585.0 515.1h5.1v17.5h-5.1zM592.1 515.1h5.1v17.5h-5.1zM599.2 527.1h5.1v18.0h-5.1zM606.3 527.0h5.1v18.0h-5.1zM613.4 526.9h5.1v18.0h-5.1zM620.5 526.8h5.1v18.0h-5.1zM627.7 526.8h5.1v18.0h-5.1zM634.8 526.7h5.1v18.0h-5.1zM641.9 526.6h5.1v18.0h-5.1zM649.0 526.5h5.1v18.0h-5.1zM656.1 526.4h5.1v18.0h-5.1zM663.2 526.3h5.1v18.0h-5.1zM670.3 526.2h5.1v18.0h-5.1zM677.5 526.1h5.1v18.0h-5.1zM684.6 526.1h5.1v18.0h-5.1zM691.7 526.0h5.1v18.0h-5.1zM698.8 525.9h5.1v18.0h-5.1zM705.9 525.8h5.1v18.0h-5.1zM713.0 526.0h5.1v18.0h-5.1zM720.1 526.2h5.1v18.0h-5.1zM727.3 526.5h5.1v18.0h-5.1zM734.4 526.7h5.1v18.0h-5.1zM741.5 526.9h5.1v18.0h-5.1zM748.6 527.1h5.1v18.0h-5.1zM755.7 526.8h5.1v18.0h-5.1zM762.8 526.5h5.1v18.0h-5.1zM770.0 526.1h5.1v18.0h-5.1zM777.1 525.8h5.1v18.0h-5.1zM784.2 525.6h5.1v18.2h-5.1zM791.3 525.4h5.1v18.4h-5.1zM798.4 525.1h5.1v18.7h-5.1zM805.5 524.9h5.1v18.9h-5.1zM812.6 524.7h5.1v19.1h-5.1zM819.8 524.5h5.1v19.3h-5.1zM826.9 524.2h5.1v19.6h-5.1zM834.0 524.0h5.1v19.8h-5.1zM841.1 523.8h5.1v20.0h-5.1zM848.2 523.6h5.1v20.0h-5.1zM855.3 523.4h5.1v19.9h-5.1zM862.4 523.1h5.1v19.9h-5.1zM869.6 522.9h5.1v19.8h-5.1zM876.7 522.7h5.1v19.8h-5.1zM883.8 522.2h5.1v19.6h-5.1zM890.9 521.8h5.1v19.5h-5.1zM898.0 521.3h5.1v19.4h-5.1zM905.1 520.8h5.1v19.2h-5.1zM912.3 521.4h5.1v18.6h-5.1zM919.4 522.0h5.1v18.0h-5.1zM926.5 521.7h5.1v18.2h-5.1zM933.6 521.5h5.1v18.3h-5.1zM940.7 521.2h5.1v18.5h-5.1zM947.8 521.0h5.1v18.6h-5.1zM954.9 520.7h5.1v18.8h-5.1zM962.1 520.5h5.1v19.0h-5.1zM969.2 520.2h5.1v19.1h-5.1zM976.3 520.0h5.1v19.3h-5.1zM983.4 519.7h5.1v19.5h-5.1zM990.5 519.5h5.1v19.6h-5.1zM997.6 519.2h5.1v19.8h-5.1zM1004.8 519.0h5.1v19.9h-5.1zM1011.9 518.7h5.1v20.1h-5.1zM1019.0 519.8h5.1v19.8h-5.1zM1026.1 520.9h5.1v19.6h-5.1zM1033.2 522.0h5.1v19.3h-5.1zM1040.3 521.8h5.1v19.3h-5.1zM1047.4 521.6h5.1v19.4h-5.1zM1054.6 521.5h5.1v19.5h-5.1zM1061.7 521.3h5.1v19.5h-5.1zM1068.8 520.8h5.1v19.6h-5.1zM1075.9 520.4h5.1v19.6h-5.1zM1083.0 520.0h5.1v19.7h-5.1zM1090.1 519.5h5.1v19.8h-5.1z"/><path fill="#8a7e18" d="M81.4 555.0h1.9v10.4h-1.9zM88.5 555.1h1.9v10.4h-1.9zM95.6 555.2h1.9v10.5h-1.9zM102.7 555.4h1.9v10.5h-1.9zM109.9 555.5h1.9v10.5h-1.9zM117.0 555.6h1.9v10.5h-1.9zM124.1 555.8h1.9v10.5h-1.9zM131.2 555.9h1.9v10.6h-1.9zM138.3 556.0h1.9v10.6h-1.9zM145.4 556.1h1.9v10.6h-1.9zM152.5 556.2h1.9v10.7h-1.9zM159.7 556.4h1.9v10.7h-1.9zM166.8 556.5h1.9v10.7h-1.9zM173.9 548.5h1.9v9.7h-1.9zM181.0 551.2h1.9v9.8h-1.9zM188.1 550.8h1.9v9.8h-1.9zM195.2 550.3h1.9v9.8h-1.9zM202.4 549.9h1.9v9.8h-1.9zM209.5 549.4h1.9v9.7h-1.9zM216.6 549.0h1.9v9.7h-1.9zM223.7 548.5h1.9v9.7h-1.9zM230.8 548.1h1.9v9.7h-1.9zM237.9 547.6h1.9v9.7h-1.9zM245.0 546.9h1.9v10.0h-1.9zM252.2 546.1h1.9v10.3h-1.9zM259.3 545.4h1.9v10.6h-1.9zM266.4 544.6h1.9v11.0h-1.9zM273.5 543.9h1.9v11.3h-1.9zM280.6 543.1h1.9v11.6h-1.9zM287.7 541.4h1.9v10.6h-1.9zM294.9 539.6h1.9v9.7h-1.9zM302.0 536.9h1.9v11.9h-1.9zM309.1 534.2h1.9v14.2h-1.9zM316.2 533.8h1.9v14.5h-1.9zM323.3 533.5h1.9v14.8h-1.9zM330.4 533.1h1.9v15.2h-1.9zM337.5 532.7h1.9v15.5h-1.9zM344.7 532.4h1.9v15.4h-1.9zM351.8 532.1h1.9v15.2h-1.9zM358.9 531.8h1.9v15.1h-1.9zM366.0 531.5h1.9v14.9h-1.9zM373.1 531.2h1.9v14.8h-1.9zM380.2 530.9h1.9v14.6h-1.9zM387.3 530.6h1.9v14.5h-1.9zM394.5 530.3h1.9v14.3h-1.9zM401.6 530.0h1.9v14.2h-1.9zM408.7 529.7h1.9v14.0h-1.9zM415.8 529.4h1.9v13.9h-1.9zM422.9 529.1h1.9v13.7h-1.9zM430.0 528.8h1.9v13.6h-1.9zM437.2 525.9h1.9v15.5h-1.9zM444.3 523.9h1.9v15.8h-1.9zM451.4 522.0h1.9v16.0h-1.9zM458.5 520.1h1.9v16.2h-1.9zM465.6 518.1h1.9v16.5h-1.9zM472.7 519.5h1.9v17.0h-1.9zM479.8 521.0h1.9v17.5h-1.9zM487.0 520.4h1.9v17.4h-1.9zM494.1 519.8h1.9v17.2h-1.9zM501.2 519.2h1.9v17.1h-1.9zM508.3 518.5h1.9v17.0h-1.9zM515.4 517.9h1.9v16.9h-1.9zM522.5 517.3h1.9v16.8h-1.9zM529.6 516.7h1.9v16.6h-1.9zM536.8 516.1h1.9v16.5h-1.9zM543.9 516.1h1.9v16.5h-1.9zM551.0 516.1h1.9v16.5h-1.9zM558.1 516.1h1.9v16.5h-1.9zM565.2 516.1h1.9v16.5h-1.9zM572.3 516.1h1.9v16.5h-1.9zM579.5 516.1h1.9v16.5h-1.9zM586.6 516.1h1.9v16.5h-1.9zM593.7 516.1h1.9v16.5h-1.9zM600.8 528.1h1.9v17.0h-1.9zM607.9 528.0h1.9v17.0h-1.9zM615.0 527.9h1.9v17.0h-1.9zM622.1 527.8h1.9v17.0h-1.9zM629.3 527.8h1.9v17.0h-1.9zM636.4 527.7h1.9v17.0h-1.9zM643.5 527.6h1.9v17.0h-1.9zM650.6 527.5h1.9v17.0h-1.9zM657.7 527.4h1.9v17.0h-1.9zM664.8 527.3h1.9v17.0h-1.9zM671.9 527.2h1.9v17.0h-1.9zM679.1 527.1h1.9v17.0h-1.9zM686.2 527.1h1.9v17.0h-1.9zM693.3 527.0h1.9v17.0h-1.9zM700.4 526.9h1.9v17.0h-1.9zM707.5 526.8h1.9v17.0h-1.9zM714.6 527.0h1.9v17.0h-1.9zM721.8 527.2h1.9v17.0h-1.9zM728.9 527.5h1.9v17.0h-1.9zM736.0 527.7h1.9v17.0h-1.9zM743.1 527.9h1.9v17.0h-1.9zM750.2 528.1h1.9v17.0h-1.9zM757.3 527.8h1.9v17.0h-1.9zM764.4 527.5h1.9v17.0h-1.9zM771.6 527.1h1.9v17.0h-1.9zM778.7 526.8h1.9v17.0h-1.9zM785.8 526.6h1.9v17.2h-1.9zM792.9 526.4h1.9v17.4h-1.9zM800.0 526.1h1.9v17.7h-1.9zM807.1 525.9h1.9v17.9h-1.9zM814.2 525.7h1.9v18.1h-1.9zM821.4 525.5h1.9v18.3h-1.9zM828.5 525.2h1.9v18.6h-1.9zM835.6 525.0h1.9v18.8h-1.9zM842.7 524.8h1.9v19.0h-1.9zM849.8 524.6h1.9v19.0h-1.9zM856.9 524.4h1.9v18.9h-1.9zM864.0 524.1h1.9v18.9h-1.9zM871.2 523.9h1.9v18.8h-1.9zM878.3 523.7h1.9v18.8h-1.9zM885.4 523.2h1.9v18.6h-1.9zM892.5 522.8h1.9v18.5h-1.9zM899.6 522.3h1.9v18.4h-1.9zM906.7 521.8h1.9v18.2h-1.9zM913.9 522.4h1.9v17.6h-1.9zM921.0 523.0h1.9v17.0h-1.9zM928.1 522.7h1.9v17.2h-1.9zM935.2 522.5h1.9v17.3h-1.9zM942.3 522.2h1.9v17.5h-1.9zM949.4 522.0h1.9v17.6h-1.9zM956.5 521.7h1.9v17.8h-1.9zM963.7 521.5h1.9v18.0h-1.9zM970.8 521.2h1.9v18.1h-1.9zM977.9 521.0h1.9v18.3h-1.9zM985.0 520.7h1.9v18.5h-1.9zM992.1 520.5h1.9v18.6h-1.9zM999.2 520.2h1.9v18.8h-1.9zM1006.4 520.0h1.9v18.9h-1.9zM1013.5 519.7h1.9v19.1h-1.9zM1020.6 520.8h1.9v18.8h-1.9zM1027.7 521.9h1.9v18.6h-1.9zM1034.8 523.0h1.9v18.3h-1.9zM1041.9 522.8h1.9v18.3h-1.9zM1049.0 522.6h1.9v18.4h-1.9zM1056.2 522.5h1.9v18.5h-1.9zM1063.3 522.3h1.9v18.5h-1.9zM1070.4 521.8h1.9v18.6h-1.9zM1077.5 521.4h1.9v18.6h-1.9zM1084.6 521.0h1.9v18.7h-1.9zM1091.7 520.5h1.9v18.8h-1.9z"/><path fill="#7f86cc" d="M79.8 527.3h5.1v26.7h-5.1zM86.9 528.8h5.1v25.3h-5.1zM94.0 527.4h5.1v26.9h-5.1zM101.1 527.4h5.1v27.0h-5.1zM108.3 525.7h5.1v28.8h-5.1zM115.4 525.7h5.1v28.9h-5.1zM122.5 525.8h5.1v29.0h-5.1zM129.6 525.8h5.1v29.1h-5.1zM136.7 525.8h5.1v29.2h-5.1zM143.8 525.9h5.1v29.2h-5.1zM150.9 525.9h5.1v29.3h-5.1zM158.1 527.8h5.1v27.6h-5.1zM165.2 527.8h5.1v27.7h-5.1zM172.3 519.8h5.1v27.7h-5.1zM179.4 523.4h5.1v26.8h-5.1zM186.5 523.2h5.1v26.6h-5.1zM193.6 522.9h5.1v26.4h-5.1zM200.8 521.3h5.1v27.6h-5.1zM207.9 519.1h5.1v29.3h-5.1zM215.0 520.8h5.1v27.1h-5.1zM222.1 518.7h5.1v28.8h-5.1zM229.2 518.4h5.1v28.6h-5.1zM236.3 514.4h5.1v32.2h-5.1zM243.4 513.0h5.1v32.9h-5.1zM250.6 510.1h5.1v35.0h-5.1zM257.7 512.0h5.1v32.3h-5.1zM264.8 512.4h5.1v31.2h-5.1zM271.9 511.3h5.1v31.6h-5.1zM279.0 510.0h5.1v32.1h-5.1zM286.1 510.2h5.1v30.2h-5.1zM293.2 504.6h5.1v34.0h-5.1zM300.4 500.0h5.1v35.9h-5.1zM307.5 497.4h5.1v35.8h-5.1zM314.6 497.7h5.1v35.2h-5.1zM321.7 497.8h5.1v34.6h-5.1zM328.8 494.4h5.1v37.6h-5.1zM335.9 496.7h5.1v35.0h-5.1zM343.1 497.1h5.1v34.3h-5.1zM350.2 499.2h5.1v31.9h-5.1zM357.3 498.0h5.1v32.8h-5.1zM364.4 498.5h5.1v32.0h-5.1zM371.5 498.9h5.1v31.3h-5.1zM378.6 497.4h5.1v32.5h-5.1zM385.7 499.8h5.1v29.8h-5.1zM392.9 493.5h5.1v35.8h-5.1zM400.0 491.9h5.1v37.1h-5.1zM407.1 494.4h5.1v34.3h-5.1zM414.2 494.8h5.1v33.6h-5.1zM421.3 493.3h5.1v34.8h-5.1zM428.4 491.8h5.1v36.0h-5.1zM435.6 483.0h5.1v41.9h-5.1zM442.7 482.8h5.1v40.2h-5.1zM449.8 481.9h5.1v39.1h-5.1zM456.9 482.6h5.1v36.4h-5.1zM464.0 476.2h5.1v40.9h-5.1zM471.1 475.2h5.1v43.3h-5.1zM478.2 478.2h5.1v41.8h-5.1zM485.4 478.1h5.1v41.3h-5.1zM492.5 477.9h5.1v40.8h-5.1zM499.6 475.9h5.1v42.2h-5.1zM506.7 475.8h5.1v41.8h-5.1zM513.8 475.7h5.1v41.3h-5.1zM520.9 473.5h5.1v42.8h-5.1zM528.0 473.4h5.1v42.3h-5.1zM535.2 470.4h5.1v44.7h-5.1zM542.3 470.8h5.1v44.3h-5.1zM549.4 471.1h5.1v44.0h-5.1zM556.5 469.2h5.1v45.9h-5.1zM563.6 469.5h5.1v45.6h-5.1zM570.7 469.9h5.1v45.2h-5.1zM577.9 470.3h5.1v44.8h-5.1zM585.0 470.6h5.1v44.5h-5.1zM592.1 469.4h5.1v45.7h-5.1zM599.2 403.9h5.1v123.2h-5.1zM606.3 402.3h5.1v124.7h-5.1zM613.4 404.4h5.1v122.5h-5.1zM620.5 404.7h5.1v122.2h-5.1zM627.7 404.9h5.1v121.8h-5.1zM634.8 403.4h5.1v123.3h-5.1zM641.9 403.6h5.1v122.9h-5.1zM649.0 403.9h5.1v122.6h-5.1zM656.1 404.2h5.1v122.3h-5.1zM663.2 401.1h5.1v125.2h-5.1zM670.3 401.3h5.1v124.9h-5.1zM677.5 403.1h5.1v123.0h-5.1zM684.6 403.4h5.1v122.7h-5.1zM691.7 403.7h5.1v122.3h-5.1zM698.8 403.9h5.1v122.0h-5.1zM705.9 404.2h5.1v121.6h-5.1zM713.0 402.3h5.1v123.7h-5.1zM720.1 402.0h5.1v124.3h-5.1zM727.3 401.6h5.1v124.8h-5.1zM734.4 403.4h5.1v123.3h-5.1zM741.5 406.1h5.1v120.8h-5.1zM748.6 404.0h5.1v123.1h-5.1zM755.7 405.3h5.1v121.5h-5.1zM762.8 403.1h5.1v123.4h-5.1zM770.0 402.6h5.1v123.5h-5.1zM777.1 398.8h5.1v127.0h-5.1zM784.2 398.9h5.1v126.7h-5.1zM791.3 398.9h5.1v126.4h-5.1zM798.4 397.2h5.1v128.0h-5.1zM805.5 399.0h5.1v125.9h-5.1zM812.6 399.1h5.1v125.6h-5.1zM819.8 399.1h5.1v125.4h-5.1zM826.9 399.2h5.1v125.1h-5.1zM834.0 399.2h5.1v124.8h-5.1zM841.1 397.4h5.1v126.4h-5.1zM848.2 397.4h5.1v126.2h-5.1zM855.3 397.3h5.1v126.1h-5.1zM862.4 397.2h5.1v125.9h-5.1zM869.6 397.1h5.1v125.8h-5.1zM876.7 393.2h5.1v129.5h-5.1zM883.8 390.7h5.1v131.5h-5.1zM890.9 391.4h5.1v130.4h-5.1zM898.0 392.0h5.1v129.3h-5.1zM905.1 391.1h5.1v129.7h-5.1zM912.3 392.3h5.1v129.1h-5.1zM919.4 395.0h5.1v127.0h-5.1zM926.5 395.6h5.1v126.1h-5.1zM933.6 395.7h5.1v125.8h-5.1zM940.7 395.8h5.1v125.5h-5.1zM947.8 395.9h5.1v125.1h-5.1zM954.9 395.9h5.1v124.8h-5.1zM962.1 394.2h5.1v126.2h-5.1zM969.2 394.3h5.1v125.9h-5.1zM976.3 392.6h5.1v127.4h-5.1zM983.4 394.5h5.1v125.2h-5.1zM990.5 394.6h5.1v124.9h-5.1zM997.6 394.7h5.1v124.6h-5.1zM1004.8 392.9h5.1v126.0h-5.1zM1011.9 391.5h5.1v127.2h-5.1zM1019.0 392.3h5.1v127.5h-5.1zM1026.1 393.2h5.1v127.7h-5.1zM1033.2 395.5h5.1v126.5h-5.1zM1040.3 398.0h5.1v123.8h-5.1zM1047.4 398.7h5.1v122.9h-5.1zM1054.6 397.6h5.1v123.8h-5.1zM1061.7 392.4h5.1v128.9h-5.1zM1068.8 391.9h5.1v128.9h-5.1zM1075.9 391.4h5.1v129.0h-5.1zM1083.0 392.7h5.1v127.2h-5.1zM1090.1 388.6h5.1v130.9h-5.1z"/><path fill="#6f77bd" d="M81.4 528.3h1.9v25.7h-1.9zM88.5 529.8h1.9v24.3h-1.9zM95.6 528.4h1.9v25.9h-1.9zM102.7 528.4h1.9v26.0h-1.9zM109.9 526.7h1.9v27.8h-1.9zM117.0 526.7h1.9v27.9h-1.9zM124.1 526.8h1.9v28.0h-1.9zM131.2 526.8h1.9v28.1h-1.9zM138.3 526.8h1.9v28.2h-1.9zM145.4 526.9h1.9v28.2h-1.9zM152.5 526.9h1.9v28.3h-1.9zM159.7 528.8h1.9v26.6h-1.9zM166.8 528.8h1.9v26.7h-1.9zM173.9 520.8h1.9v26.7h-1.9zM181.0 524.4h1.9v25.8h-1.9zM188.1 524.2h1.9v25.6h-1.9zM195.2 523.9h1.9v25.4h-1.9zM202.4 522.3h1.9v26.6h-1.9zM209.5 520.1h1.9v28.3h-1.9zM216.6 521.8h1.9v26.1h-1.9zM223.7 519.7h1.9v27.8h-1.9zM230.8 519.4h1.9v27.6h-1.9zM237.9 515.4h1.9v31.2h-1.9zM245.0 514.0h1.9v31.9h-1.9zM252.2 511.1h1.9v34.0h-1.9zM259.3 513.0h1.9v31.3h-1.9zM266.4 513.4h1.9v30.2h-1.9zM273.5 512.3h1.9v30.6h-1.9zM280.6 511.0h1.9v31.1h-1.9zM287.7 511.2h1.9v29.2h-1.9zM294.9 505.6h1.9v33.0h-1.9zM302.0 501.0h1.9v34.9h-1.9zM309.1 498.4h1.9v34.8h-1.9zM316.2 498.7h1.9v34.2h-1.9zM323.3 498.8h1.9v33.6h-1.9zM330.4 495.4h1.9v36.6h-1.9zM337.5 497.7h1.9v34.0h-1.9zM344.7 498.1h1.9v33.3h-1.9zM351.8 500.2h1.9v30.9h-1.9zM358.9 499.0h1.9v31.8h-1.9zM366.0 499.5h1.9v31.0h-1.9zM373.1 499.9h1.9v30.3h-1.9zM380.2 498.4h1.9v31.5h-1.9zM387.3 500.8h1.9v28.8h-1.9zM394.5 494.5h1.9v34.8h-1.9zM401.6 492.9h1.9v36.1h-1.9zM408.7 495.4h1.9v33.3h-1.9zM415.8 495.8h1.9v32.6h-1.9zM422.9 494.3h1.9v33.8h-1.9zM430.0 492.8h1.9v35.0h-1.9zM437.2 484.0h1.9v40.9h-1.9zM444.3 483.8h1.9v39.2h-1.9zM451.4 482.9h1.9v38.1h-1.9zM458.5 483.6h1.9v35.4h-1.9zM465.6 477.2h1.9v39.9h-1.9zM472.7 476.2h1.9v42.3h-1.9zM479.8 479.2h1.9v40.8h-1.9zM487.0 479.1h1.9v40.3h-1.9zM494.1 478.9h1.9v39.8h-1.9zM501.2 476.9h1.9v41.2h-1.9zM508.3 476.8h1.9v40.8h-1.9zM515.4 476.7h1.9v40.3h-1.9zM522.5 474.5h1.9v41.8h-1.9zM529.6 474.4h1.9v41.3h-1.9zM536.8 471.4h1.9v43.7h-1.9zM543.9 471.8h1.9v43.3h-1.9zM551.0 472.1h1.9v43.0h-1.9zM558.1 470.2h1.9v44.9h-1.9zM565.2 470.5h1.9v44.6h-1.9zM572.3 470.9h1.9v44.2h-1.9zM579.5 471.3h1.9v43.8h-1.9zM586.6 471.6h1.9v43.5h-1.9zM593.7 470.4h1.9v44.7h-1.9zM600.8 404.9h1.9v122.2h-1.9zM607.9 403.3h1.9v123.7h-1.9zM615.0 405.4h1.9v121.5h-1.9zM622.1 405.7h1.9v121.2h-1.9zM629.3 405.9h1.9v120.8h-1.9zM636.4 404.4h1.9v122.3h-1.9zM643.5 404.6h1.9v121.9h-1.9zM650.6 404.9h1.9v121.6h-1.9zM657.7 405.2h1.9v121.3h-1.9zM664.8 402.1h1.9v124.2h-1.9zM671.9 402.3h1.9v123.9h-1.9zM679.1 404.1h1.9v122.0h-1.9zM686.2 404.4h1.9v121.7h-1.9zM693.3 404.7h1.9v121.3h-1.9zM700.4 404.9h1.9v121.0h-1.9zM707.5 405.2h1.9v120.6h-1.9zM714.6 403.3h1.9v122.7h-1.9zM721.8 403.0h1.9v123.3h-1.9zM728.9 402.6h1.9v123.8h-1.9zM736.0 404.4h1.9v122.3h-1.9zM743.1 407.1h1.9v119.8h-1.9zM750.2 405.0h1.9v122.1h-1.9zM757.3 406.3h1.9v120.5h-1.9zM764.4 404.1h1.9v122.4h-1.9zM771.6 403.6h1.9v122.5h-1.9zM778.7 399.8h1.9v126.0h-1.9zM785.8 399.9h1.9v125.7h-1.9zM792.9 399.9h1.9v125.4h-1.9zM800.0 398.2h1.9v127.0h-1.9zM807.1 400.0h1.9v124.9h-1.9zM814.2 400.1h1.9v124.6h-1.9zM821.4 400.1h1.9v124.4h-1.9zM828.5 400.2h1.9v124.1h-1.9zM835.6 400.2h1.9v123.8h-1.9zM842.7 398.4h1.9v125.4h-1.9zM849.8 398.4h1.9v125.2h-1.9zM856.9 398.3h1.9v125.1h-1.9zM864.0 398.2h1.9v124.9h-1.9zM871.2 398.1h1.9v124.8h-1.9zM878.3 394.2h1.9v128.5h-1.9zM885.4 391.7h1.9v130.5h-1.9zM892.5 392.4h1.9v129.4h-1.9zM899.6 393.0h1.9v128.3h-1.9zM906.7 392.1h1.9v128.7h-1.9zM913.9 393.3h1.9v128.1h-1.9zM921.0 396.0h1.9v126.0h-1.9zM928.1 396.6h1.9v125.1h-1.9zM935.2 396.7h1.9v124.8h-1.9zM942.3 396.8h1.9v124.5h-1.9zM949.4 396.9h1.9v124.1h-1.9zM956.5 396.9h1.9v123.8h-1.9zM963.7 395.2h1.9v125.2h-1.9zM970.8 395.3h1.9v124.9h-1.9zM977.9 393.6h1.9v126.4h-1.9zM985.0 395.5h1.9v124.2h-1.9zM992.1 395.6h1.9v123.9h-1.9zM999.2 395.7h1.9v123.6h-1.9zM1006.4 393.9h1.9v125.0h-1.9zM1013.5 392.5h1.9v126.2h-1.9zM1020.6 393.3h1.9v126.5h-1.9zM1027.7 394.2h1.9v126.7h-1.9zM1034.8 396.5h1.9v125.5h-1.9zM1041.9 399.0h1.9v122.8h-1.9zM1049.0 399.7h1.9v121.9h-1.9zM1056.2 398.6h1.9v122.8h-1.9zM1063.3 393.4h1.9v127.9h-1.9zM1070.4 392.9h1.9v127.9h-1.9zM1077.5 392.4h1.9v128.0h-1.9zM1084.6 393.7h1.9v126.2h-1.9zM1091.7 389.6h1.9v129.9h-1.9z"/><path fill="#b9e23a" d="M79.8 517.0h5.1v10.3h-5.1zM86.9 518.7h5.1v10.2h-5.1zM94.0 517.3h5.1v10.0h-5.1zM101.1 517.5h5.1v9.9h-5.1zM108.3 515.9h5.1v9.8h-5.1zM115.4 516.0h5.1v9.7h-5.1zM122.5 516.2h5.1v9.5h-5.1zM129.6 516.4h5.1v9.4h-5.1zM136.7 516.5h5.1v9.3h-5.1zM143.8 516.7h5.1v9.2h-5.1zM150.9 516.9h5.1v9.0h-5.1zM158.1 518.8h5.1v8.9h-5.1zM165.2 519.0h5.1v8.8h-5.1zM172.3 510.0h5.1v9.8h-5.1zM179.4 513.5h5.1v9.9h-5.1zM186.5 513.5h5.1v9.7h-5.1zM193.6 513.5h5.1v9.4h-5.1zM200.8 512.1h5.1v9.2h-5.1zM207.9 510.2h5.1v8.9h-5.1zM215.0 512.1h5.1v8.7h-5.1zM222.1 510.2h5.1v8.5h-5.1zM229.2 510.2h5.1v8.2h-5.1zM236.3 506.4h5.1v8.0h-5.1zM243.4 505.0h5.1v8.0h-5.1zM250.6 502.1h5.1v8.0h-5.1zM257.7 504.0h5.1v8.1h-5.1zM264.8 504.3h5.1v8.1h-5.1zM271.9 503.2h5.1v8.1h-5.1zM279.0 501.9h5.1v8.1h-5.1zM286.1 502.1h5.1v8.1h-5.1zM293.2 496.6h5.1v8.0h-5.1zM300.4 491.1h5.1v8.9h-5.1zM307.5 487.6h5.1v9.8h-5.1zM314.6 487.2h5.1v10.5h-5.1zM321.7 486.6h5.1v11.2h-5.1zM328.8 482.5h5.1v12.0h-5.1zM335.9 484.0h5.1v12.7h-5.1zM343.1 484.5h5.1v12.7h-5.1zM350.2 486.5h5.1v12.7h-5.1zM357.3 485.4h5.1v12.7h-5.1zM364.4 485.8h5.1v12.7h-5.1zM371.5 486.3h5.1v12.7h-5.1zM378.6 484.7h5.1v12.7h-5.1zM385.7 487.2h5.1v12.6h-5.1zM392.9 480.8h5.1v12.6h-5.1zM400.0 479.3h5.1v12.6h-5.1zM407.1 481.7h5.1v12.6h-5.1zM414.2 482.2h5.1v12.6h-5.1zM421.3 480.6h5.1v12.6h-5.1zM428.4 479.2h5.1v12.6h-5.1zM435.6 470.4h5.1v12.6h-5.1zM442.7 469.7h5.1v13.1h-5.1zM449.8 468.3h5.1v13.6h-5.1zM456.9 468.6h5.1v14.0h-5.1zM464.0 461.7h5.1v14.5h-5.1zM471.1 461.2h5.1v14.1h-5.1zM478.2 464.6h5.1v13.6h-5.1zM485.4 464.4h5.1v13.7h-5.1zM492.5 464.1h5.1v13.8h-5.1zM499.6 461.9h5.1v14.0h-5.1zM506.7 461.7h5.1v14.1h-5.1zM513.8 461.4h5.1v14.2h-5.1zM520.9 459.2h5.1v14.3h-5.1zM528.0 458.9h5.1v14.5h-5.1zM535.2 455.8h5.1v14.6h-5.1zM542.3 456.1h5.1v14.7h-5.1zM549.4 456.3h5.1v14.8h-5.1zM556.5 454.2h5.1v14.9h-5.1zM563.6 454.5h5.1v15.0h-5.1zM570.7 454.8h5.1v15.2h-5.1zM577.9 455.0h5.1v15.3h-5.1zM585.0 455.2h5.1v15.4h-5.1zM592.1 453.9h5.1v15.5h-5.1zM599.2 388.5h5.1v15.4h-5.1zM606.3 386.9h5.1v15.4h-5.1zM613.4 389.0h5.1v15.4h-5.1zM620.5 389.3h5.1v15.4h-5.1zM627.7 389.5h5.1v15.4h-5.1zM634.8 388.0h5.1v15.4h-5.1zM641.9 388.2h5.1v15.4h-5.1zM649.0 388.5h5.1v15.4h-5.1zM656.1 388.8h5.1v15.4h-5.1zM663.2 385.7h5.1v15.4h-5.1zM670.3 385.9h5.1v15.4h-5.1zM677.5 387.7h5.1v15.4h-5.1zM684.6 388.0h5.1v15.4h-5.1zM691.7 388.3h5.1v15.4h-5.1zM698.8 388.5h5.1v15.4h-5.1zM705.9 388.8h5.1v15.4h-5.1zM713.0 387.1h5.1v15.2h-5.1zM720.1 387.0h5.1v15.0h-5.1zM727.3 386.9h5.1v14.8h-5.1zM734.4 388.8h5.1v14.5h-5.1zM741.5 391.8h5.1v14.3h-5.1zM748.6 389.9h5.1v14.1h-5.1zM755.7 391.5h5.1v13.8h-5.1zM762.8 389.6h5.1v13.5h-5.1zM770.0 389.5h5.1v13.1h-5.1zM777.1 386.0h5.1v12.8h-5.1zM784.2 385.9h5.1v12.9h-5.1zM791.3 385.8h5.1v13.1h-5.1zM798.4 383.9h5.1v13.2h-5.1zM805.5 385.6h5.1v13.4h-5.1zM812.6 385.5h5.1v13.5h-5.1zM819.8 385.4h5.1v13.7h-5.1zM826.9 385.3h5.1v13.8h-5.1zM834.0 385.2h5.1v14.0h-5.1zM841.1 383.3h5.1v14.1h-5.1zM848.2 383.2h5.1v14.1h-5.1zM855.3 383.1h5.1v14.1h-5.1zM862.4 383.0h5.1v14.2h-5.1zM869.6 382.9h5.1v14.2h-5.1zM876.7 379.0h5.1v14.2h-5.1zM883.8 376.4h5.1v14.3h-5.1zM890.9 377.0h5.1v14.4h-5.1zM898.0 377.5h5.1v14.5h-5.1zM905.1 376.5h5.1v14.6h-5.1zM912.3 378.0h5.1v14.2h-5.1zM919.4 381.1h5.1v13.9h-5.1zM926.5 381.7h5.1v13.9h-5.1zM933.6 381.8h5.1v13.9h-5.1zM940.7 381.9h5.1v13.9h-5.1zM947.8 381.9h5.1v13.9h-5.1zM954.9 382.0h5.1v13.9h-5.1zM962.1 380.3h5.1v13.9h-5.1zM969.2 380.4h5.1v14.0h-5.1zM976.3 378.6h5.1v14.0h-5.1zM983.4 380.5h5.1v14.0h-5.1zM990.5 380.6h5.1v14.0h-5.1zM997.6 380.7h5.1v14.0h-5.1zM1004.8 378.9h5.1v14.0h-5.1zM1011.9 377.5h5.1v14.0h-5.1zM1019.0 378.4h5.1v14.0h-5.1zM1026.1 379.2h5.1v13.9h-5.1zM1033.2 381.6h5.1v13.9h-5.1zM1040.3 383.7h5.1v14.3h-5.1zM1047.4 384.1h5.1v14.6h-5.1zM1054.6 382.6h5.1v15.0h-5.1zM1061.7 377.0h5.1v15.4h-5.1zM1068.8 376.8h5.1v15.1h-5.1zM1075.9 376.7h5.1v14.8h-5.1zM1083.0 378.3h5.1v14.4h-5.1zM1090.1 374.5h5.1v14.1h-5.1z"/><path fill="#9ec82c" d="M81.4 518.0h1.9v9.3h-1.9zM88.5 519.7h1.9v9.2h-1.9zM95.6 518.3h1.9v9.0h-1.9zM102.7 518.5h1.9v8.9h-1.9zM109.9 516.9h1.9v8.8h-1.9zM117.0 517.0h1.9v8.7h-1.9zM124.1 517.2h1.9v8.5h-1.9zM131.2 517.4h1.9v8.4h-1.9zM138.3 517.5h1.9v8.3h-1.9zM145.4 517.7h1.9v8.2h-1.9zM152.5 517.9h1.9v8.0h-1.9zM159.7 519.8h1.9v7.9h-1.9zM166.8 520.0h1.9v7.8h-1.9zM173.9 511.0h1.9v8.8h-1.9zM181.0 514.5h1.9v8.9h-1.9zM188.1 514.5h1.9v8.7h-1.9zM195.2 514.5h1.9v8.4h-1.9zM202.4 513.1h1.9v8.2h-1.9zM209.5 511.2h1.9v7.9h-1.9zM216.6 513.1h1.9v7.7h-1.9zM223.7 511.2h1.9v7.5h-1.9zM230.8 511.2h1.9v7.2h-1.9zM237.9 507.4h1.9v7.0h-1.9zM245.0 506.0h1.9v7.0h-1.9zM252.2 503.1h1.9v7.0h-1.9zM259.3 505.0h1.9v7.1h-1.9zM266.4 505.3h1.9v7.1h-1.9zM273.5 504.2h1.9v7.1h-1.9zM280.6 502.9h1.9v7.1h-1.9zM287.7 503.1h1.9v7.1h-1.9zM294.9 497.6h1.9v7.0h-1.9zM302.0 492.1h1.9v7.9h-1.9zM309.1 488.6h1.9v8.8h-1.9zM316.2 488.2h1.9v9.5h-1.9zM323.3 487.6h1.9v10.2h-1.9zM330.4 483.5h1.9v11.0h-1.9zM337.5 485.0h1.9v11.7h-1.9zM344.7 485.5h1.9v11.7h-1.9zM351.8 487.5h1.9v11.7h-1.9zM358.9 486.4h1.9v11.7h-1.9zM366.0 486.8h1.9v11.7h-1.9zM373.1 487.3h1.9v11.7h-1.9zM380.2 485.7h1.9v11.7h-1.9zM387.3 488.2h1.9v11.6h-1.9zM394.5 481.8h1.9v11.6h-1.9zM401.6 480.3h1.9v11.6h-1.9zM408.7 482.7h1.9v11.6h-1.9zM415.8 483.2h1.9v11.6h-1.9zM422.9 481.6h1.9v11.6h-1.9zM430.0 480.2h1.9v11.6h-1.9zM437.2 471.4h1.9v11.6h-1.9zM444.3 470.7h1.9v12.1h-1.9zM451.4 469.3h1.9v12.6h-1.9zM458.5 469.6h1.9v13.0h-1.9zM465.6 462.7h1.9v13.5h-1.9zM472.7 462.2h1.9v13.1h-1.9zM479.8 465.6h1.9v12.6h-1.9zM487.0 465.4h1.9v12.7h-1.9zM494.1 465.1h1.9v12.8h-1.9zM501.2 462.9h1.9v13.0h-1.9zM508.3 462.7h1.9v13.1h-1.9zM515.4 462.4h1.9v13.2h-1.9zM522.5 460.2h1.9v13.3h-1.9zM529.6 459.9h1.9v13.5h-1.9zM536.8 456.8h1.9v13.6h-1.9zM543.9 457.1h1.9v13.7h-1.9zM551.0 457.3h1.9v13.8h-1.9zM558.1 455.2h1.9v13.9h-1.9zM565.2 455.5h1.9v14.0h-1.9zM572.3 455.8h1.9v14.2h-1.9zM579.5 456.0h1.9v14.3h-1.9zM586.6 456.2h1.9v14.4h-1.9zM593.7 454.9h1.9v14.5h-1.9zM600.8 389.5h1.9v14.4h-1.9zM607.9 387.9h1.9v14.4h-1.9zM615.0 390.0h1.9v14.4h-1.9zM622.1 390.3h1.9v14.4h-1.9zM629.3 390.5h1.9v14.4h-1.9zM636.4 389.0h1.9v14.4h-1.9zM643.5 389.2h1.9v14.4h-1.9zM650.6 389.5h1.9v14.4h-1.9zM657.7 389.8h1.9v14.4h-1.9zM664.8 386.7h1.9v14.4h-1.9zM671.9 386.9h1.9v14.4h-1.9zM679.1 388.7h1.9v14.4h-1.9zM686.2 389.0h1.9v14.4h-1.9zM693.3 389.3h1.9v14.4h-1.9zM700.4 389.5h1.9v14.4h-1.9zM707.5 389.8h1.9v14.4h-1.9zM714.6 388.1h1.9v14.2h-1.9zM721.8 388.0h1.9v14.0h-1.9zM728.9 387.9h1.9v13.8h-1.9zM736.0 389.8h1.9v13.5h-1.9zM743.1 392.8h1.9v13.3h-1.9zM750.2 390.9h1.9v13.1h-1.9zM757.3 392.5h1.9v12.8h-1.9zM764.4 390.6h1.9v12.5h-1.9zM771.6 390.5h1.9v12.1h-1.9zM778.7 387.0h1.9v11.8h-1.9zM785.8 386.9h1.9v11.9h-1.9zM792.9 386.8h1.9v12.1h-1.9zM800.0 384.9h1.9v12.2h-1.9zM807.1 386.6h1.9v12.4h-1.9zM814.2 386.5h1.9v12.5h-1.9zM821.4 386.4h1.9v12.7h-1.9zM828.5 386.3h1.9v12.8h-1.9zM835.6 386.2h1.9v13.0h-1.9zM842.7 384.3h1.9v13.1h-1.9zM849.8 384.2h1.9v13.1h-1.9zM856.9 384.1h1.9v13.1h-1.9zM864.0 384.0h1.9v13.2h-1.9zM871.2 383.9h1.9v13.2h-1.9zM878.3 380.0h1.9v13.2h-1.9zM885.4 377.4h1.9v13.3h-1.9zM892.5 378.0h1.9v13.4h-1.9zM899.6 378.5h1.9v13.5h-1.9zM906.7 377.5h1.9v13.6h-1.9zM913.9 379.0h1.9v13.2h-1.9zM921.0 382.1h1.9v12.9h-1.9zM928.1 382.7h1.9v12.9h-1.9zM935.2 382.8h1.9v12.9h-1.9zM942.3 382.9h1.9v12.9h-1.9zM949.4 382.9h1.9v12.9h-1.9zM956.5 383.0h1.9v12.9h-1.9zM963.7 381.3h1.9v12.9h-1.9zM970.8 381.4h1.9v13.0h-1.9zM977.9 379.6h1.9v13.0h-1.9zM985.0 381.5h1.9v13.0h-1.9zM992.1 381.6h1.9v13.0h-1.9zM999.2 381.7h1.9v13.0h-1.9zM1006.4 379.9h1.9v13.0h-1.9zM1013.5 378.5h1.9v13.0h-1.9zM1020.6 379.4h1.9v13.0h-1.9zM1027.7 380.2h1.9v12.9h-1.9zM1034.8 382.6h1.9v12.9h-1.9zM1041.9 384.7h1.9v13.3h-1.9zM1049.0 385.1h1.9v13.6h-1.9zM1056.2 383.6h1.9v14.0h-1.9zM1063.3 378.0h1.9v14.4h-1.9zM1070.4 377.8h1.9v14.1h-1.9zM1077.5 377.7h1.9v13.8h-1.9zM1084.6 379.3h1.9v13.4h-1.9zM1091.7 375.5h1.9v13.1h-1.9z"/><path fill="#b43c6c" d="M79.8 507.3h5.1v9.7h-5.1zM86.9 508.9h5.1v9.7h-5.1zM94.0 507.6h5.1v9.8h-5.1zM101.1 507.7h5.1v9.8h-5.1zM108.3 506.1h5.1v9.8h-5.1zM115.4 506.2h5.1v9.8h-5.1zM122.5 506.3h5.1v9.9h-5.1zM129.6 506.5h5.1v9.9h-5.1zM136.7 506.6h5.1v9.9h-5.1zM143.8 506.8h5.1v9.9h-5.1zM150.9 506.9h5.1v9.9h-5.1zM158.1 508.9h5.1v10.0h-5.1zM165.2 509.0h5.1v10.0h-5.1zM172.3 499.2h5.1v10.8h-5.1zM179.4 502.8h5.1v10.7h-5.1zM186.5 502.9h5.1v10.6h-5.1zM193.6 503.0h5.1v10.5h-5.1zM200.8 501.7h5.1v10.4h-5.1zM207.9 500.0h5.1v10.2h-5.1zM215.0 502.0h5.1v10.1h-5.1zM222.1 500.2h5.1v10.0h-5.1zM229.2 500.3h5.1v9.9h-5.1zM236.3 496.6h5.1v9.8h-5.1zM243.4 495.0h5.1v9.9h-5.1zM250.6 492.0h5.1v10.1h-5.1zM257.7 493.7h5.1v10.2h-5.1zM264.8 493.9h5.1v10.4h-5.1zM271.9 492.7h5.1v10.6h-5.1zM279.0 491.2h5.1v10.7h-5.1zM286.1 491.8h5.1v10.3h-5.1zM293.2 486.7h5.1v9.9h-5.1zM300.4 481.7h5.1v9.4h-5.1zM307.5 478.7h5.1v8.9h-5.1zM314.6 477.3h5.1v9.8h-5.1zM321.7 475.8h5.1v10.8h-5.1zM328.8 470.8h5.1v11.7h-5.1zM335.9 471.4h5.1v12.6h-5.1zM343.1 471.6h5.1v12.8h-5.1zM350.2 473.4h5.1v13.1h-5.1zM357.3 472.1h5.1v13.3h-5.1zM364.4 472.3h5.1v13.5h-5.1zM371.5 472.5h5.1v13.8h-5.1zM378.6 470.7h5.1v14.0h-5.1zM385.7 473.0h5.1v14.2h-5.1zM392.9 466.4h5.1v14.4h-5.1zM400.0 464.6h5.1v14.7h-5.1zM407.1 466.8h5.1v14.9h-5.1zM414.2 467.1h5.1v15.1h-5.1zM421.3 465.3h5.1v15.4h-5.1zM428.4 463.6h5.1v15.6h-5.1zM435.6 454.9h5.1v15.5h-5.1zM442.7 453.9h5.1v15.8h-5.1zM449.8 452.3h5.1v16.0h-5.1zM456.9 452.3h5.1v16.3h-5.1zM464.0 445.1h5.1v16.6h-5.1zM471.1 444.6h5.1v16.6h-5.1zM478.2 448.0h5.1v16.6h-5.1zM485.4 448.1h5.1v16.2h-5.1zM492.5 448.2h5.1v15.9h-5.1zM499.6 446.5h5.1v15.5h-5.1zM506.7 446.6h5.1v15.1h-5.1zM513.8 446.7h5.1v14.7h-5.1zM520.9 444.8h5.1v14.4h-5.1zM528.0 445.0h5.1v14.0h-5.1zM535.2 442.2h5.1v13.6h-5.1zM542.3 442.2h5.1v13.8h-5.1zM549.4 442.2h5.1v14.1h-5.1zM556.5 439.9h5.1v14.3h-5.1zM563.6 439.9h5.1v14.6h-5.1zM570.7 439.9h5.1v14.9h-5.1zM577.9 439.9h5.1v15.1h-5.1zM585.0 439.9h5.1v15.4h-5.1zM592.1 438.3h5.1v15.6h-5.1zM599.2 373.1h5.1v15.4h-5.1zM606.3 371.5h5.1v15.4h-5.1zM613.4 373.6h5.1v15.4h-5.1zM620.5 373.9h5.1v15.4h-5.1zM627.7 374.1h5.1v15.4h-5.1zM634.8 372.6h5.1v15.4h-5.1zM641.9 372.9h5.1v15.4h-5.1zM649.0 373.1h5.1v15.4h-5.1zM656.1 373.4h5.1v15.3h-5.1zM663.2 370.3h5.1v15.3h-5.1zM670.3 370.6h5.1v15.3h-5.1zM677.5 372.4h5.1v15.3h-5.1zM684.6 372.7h5.1v15.3h-5.1zM691.7 372.9h5.1v15.3h-5.1zM698.8 373.2h5.1v15.3h-5.1zM705.9 373.5h5.1v15.3h-5.1zM713.0 371.8h5.1v15.3h-5.1zM720.1 371.7h5.1v15.3h-5.1zM727.3 371.5h5.1v15.4h-5.1zM734.4 373.5h5.1v15.4h-5.1zM741.5 376.4h5.1v15.4h-5.1zM748.6 374.5h5.1v15.4h-5.1zM755.7 375.8h5.1v15.7h-5.1zM762.8 373.6h5.1v16.0h-5.1zM770.0 373.1h5.1v16.4h-5.1zM777.1 369.3h5.1v16.7h-5.1zM784.2 369.4h5.1v16.6h-5.1zM791.3 369.4h5.1v16.4h-5.1zM798.4 367.7h5.1v16.3h-5.1zM805.5 369.5h5.1v16.1h-5.1zM812.6 369.6h5.1v16.0h-5.1zM819.8 369.6h5.1v15.8h-5.1zM826.9 369.7h5.1v15.7h-5.1zM834.0 369.7h5.1v15.5h-5.1zM841.1 367.9h5.1v15.4h-5.1zM848.2 368.1h5.1v15.1h-5.1zM855.3 368.3h5.1v14.9h-5.1zM862.4 368.4h5.1v14.6h-5.1zM869.6 368.6h5.1v14.4h-5.1zM876.7 364.9h5.1v14.1h-5.1zM883.8 362.1h5.1v14.3h-5.1zM890.9 362.5h5.1v14.5h-5.1zM898.0 362.8h5.1v14.7h-5.1zM905.1 361.6h5.1v14.9h-5.1zM912.3 362.5h5.1v15.5h-5.1zM919.4 365.0h5.1v16.1h-5.1zM926.5 365.8h5.1v15.9h-5.1zM933.6 366.0h5.1v15.8h-5.1zM940.7 366.2h5.1v15.6h-5.1zM947.8 366.5h5.1v15.5h-5.1zM954.9 366.7h5.1v15.3h-5.1zM962.1 365.2h5.1v15.1h-5.1zM969.2 365.4h5.1v15.0h-5.1zM976.3 363.8h5.1v14.8h-5.1zM983.4 365.9h5.1v14.6h-5.1zM990.5 366.1h5.1v14.5h-5.1zM997.6 366.3h5.1v14.3h-5.1zM1004.8 364.8h5.1v14.2h-5.1zM1011.9 363.5h5.1v14.0h-5.1zM1019.0 363.5h5.1v14.9h-5.1zM1026.1 363.5h5.1v15.7h-5.1zM1033.2 365.0h5.1v16.6h-5.1zM1040.3 366.8h5.1v17.0h-5.1zM1047.4 366.8h5.1v17.3h-5.1zM1054.6 365.0h5.1v17.6h-5.1zM1061.7 359.0h5.1v18.0h-5.1zM1068.8 359.5h5.1v17.4h-5.1zM1075.9 359.9h5.1v16.8h-5.1zM1083.0 362.2h5.1v16.1h-5.1zM1090.1 359.0h5.1v15.5h-5.1z"/><path fill="#a33360" d="M81.4 508.3h1.9v8.7h-1.9zM88.5 509.9h1.9v8.7h-1.9zM95.6 508.6h1.9v8.8h-1.9zM102.7 508.7h1.9v8.8h-1.9zM109.9 507.1h1.9v8.8h-1.9zM117.0 507.2h1.9v8.8h-1.9zM124.1 507.3h1.9v8.9h-1.9zM131.2 507.5h1.9v8.9h-1.9zM138.3 507.6h1.9v8.9h-1.9zM145.4 507.8h1.9v8.9h-1.9zM152.5 507.9h1.9v8.9h-1.9zM159.7 509.9h1.9v9.0h-1.9zM166.8 510.0h1.9v9.0h-1.9zM173.9 500.2h1.9v9.8h-1.9zM181.0 503.8h1.9v9.7h-1.9zM188.1 503.9h1.9v9.6h-1.9zM195.2 504.0h1.9v9.5h-1.9zM202.4 502.7h1.9v9.4h-1.9zM209.5 501.0h1.9v9.2h-1.9zM216.6 503.0h1.9v9.1h-1.9zM223.7 501.2h1.9v9.0h-1.9zM230.8 501.3h1.9v8.9h-1.9zM237.9 497.6h1.9v8.8h-1.9zM245.0 496.0h1.9v8.9h-1.9zM252.2 493.0h1.9v9.1h-1.9zM259.3 494.7h1.9v9.2h-1.9zM266.4 494.9h1.9v9.4h-1.9zM273.5 493.7h1.9v9.6h-1.9zM280.6 492.2h1.9v9.7h-1.9zM287.7 492.8h1.9v9.3h-1.9zM294.9 487.7h1.9v8.9h-1.9zM302.0 482.7h1.9v8.4h-1.9zM309.1 479.7h1.9v7.9h-1.9zM316.2 478.3h1.9v8.8h-1.9zM323.3 476.8h1.9v9.8h-1.9zM330.4 471.8h1.9v10.7h-1.9zM337.5 472.4h1.9v11.6h-1.9zM344.7 472.6h1.9v11.8h-1.9zM351.8 474.4h1.9v12.1h-1.9zM358.9 473.1h1.9v12.3h-1.9zM366.0 473.3h1.9v12.5h-1.9zM373.1 473.5h1.9v12.8h-1.9zM380.2 471.7h1.9v13.0h-1.9zM387.3 474.0h1.9v13.2h-1.9zM394.5 467.4h1.9v13.4h-1.9zM401.6 465.6h1.9v13.7h-1.9zM408.7 467.8h1.9v13.9h-1.9zM415.8 468.1h1.9v14.1h-1.9zM422.9 466.3h1.9v14.4h-1.9zM430.0 464.6h1.9v14.6h-1.9zM437.2 455.9h1.9v14.5h-1.9zM444.3 454.9h1.9v14.8h-1.9zM451.4 453.3h1.9v15.0h-1.9zM458.5 453.3h1.9v15.3h-1.9zM465.6 446.1h1.9v15.6h-1.9zM472.7 445.6h1.9v15.6h-1.9zM479.8 449.0h1.9v15.6h-1.9zM487.0 449.1h1.9v15.2h-1.9zM494.1 449.2h1.9v14.9h-1.9zM501.2 447.5h1.9v14.5h-1.9zM508.3 447.6h1.9v14.1h-1.9zM515.4 447.7h1.9v13.7h-1.9zM522.5 445.8h1.9v13.4h-1.9zM529.6 446.0h1.9v13.0h-1.9zM536.8 443.2h1.9v12.6h-1.9zM543.9 443.2h1.9v12.8h-1.9zM551.0 443.2h1.9v13.1h-1.9zM558.1 440.9h1.9v13.3h-1.9zM565.2 440.9h1.9v13.6h-1.9zM572.3 440.9h1.9v13.9h-1.9zM579.5 440.9h1.9v14.1h-1.9zM586.6 440.9h1.9v14.4h-1.9zM593.7 439.3h1.9v14.6h-1.9zM600.8 374.1h1.9v14.4h-1.9zM607.9 372.5h1.9v14.4h-1.9zM615.0 374.6h1.9v14.4h-1.9zM622.1 374.9h1.9v14.4h-1.9zM629.3 375.1h1.9v14.4h-1.9zM636.4 373.6h1.9v14.4h-1.9zM643.5 373.9h1.9v14.4h-1.9zM650.6 374.1h1.9v14.4h-1.9zM657.7 374.4h1.9v14.3h-1.9zM664.8 371.3h1.9v14.3h-1.9zM671.9 371.6h1.9v14.3h-1.9zM679.1 373.4h1.9v14.3h-1.9zM686.2 373.7h1.9v14.3h-1.9zM693.3 373.9h1.9v14.3h-1.9zM700.4 374.2h1.9v14.3h-1.9zM707.5 374.5h1.9v14.3h-1.9zM714.6 372.8h1.9v14.3h-1.9zM721.8 372.7h1.9v14.3h-1.9zM728.9 372.5h1.9v14.4h-1.9zM736.0 374.5h1.9v14.4h-1.9zM743.1 377.4h1.9v14.4h-1.9zM750.2 375.5h1.9v14.4h-1.9zM757.3 376.8h1.9v14.7h-1.9zM764.4 374.6h1.9v15.0h-1.9zM771.6 374.1h1.9v15.4h-1.9zM778.7 370.3h1.9v15.7h-1.9zM785.8 370.4h1.9v15.6h-1.9zM792.9 370.4h1.9v15.4h-1.9zM800.0 368.7h1.9v15.3h-1.9zM807.1 370.5h1.9v15.1h-1.9zM814.2 370.6h1.9v15.0h-1.9zM821.4 370.6h1.9v14.8h-1.9zM828.5 370.7h1.9v14.7h-1.9zM835.6 370.7h1.9v14.5h-1.9zM842.7 368.9h1.9v14.4h-1.9zM849.8 369.1h1.9v14.1h-1.9zM856.9 369.3h1.9v13.9h-1.9zM864.0 369.4h1.9v13.6h-1.9zM871.2 369.6h1.9v13.4h-1.9zM878.3 365.9h1.9v13.1h-1.9zM885.4 363.1h1.9v13.3h-1.9zM892.5 363.5h1.9v13.5h-1.9zM899.6 363.8h1.9v13.7h-1.9zM906.7 362.6h1.9v13.9h-1.9zM913.9 363.5h1.9v14.5h-1.9zM921.0 366.0h1.9v15.1h-1.9zM928.1 366.8h1.9v14.9h-1.9zM935.2 367.0h1.9v14.8h-1.9zM942.3 367.2h1.9v14.6h-1.9zM949.4 367.5h1.9v14.5h-1.9zM956.5 367.7h1.9v14.3h-1.9zM963.7 366.2h1.9v14.1h-1.9zM970.8 366.4h1.9v14.0h-1.9zM977.9 364.8h1.9v13.8h-1.9zM985.0 366.9h1.9v13.6h-1.9zM992.1 367.1h1.9v13.5h-1.9zM999.2 367.3h1.9v13.3h-1.9zM1006.4 365.8h1.9v13.2h-1.9zM1013.5 364.5h1.9v13.0h-1.9zM1020.6 364.5h1.9v13.9h-1.9zM1027.7 364.5h1.9v14.7h-1.9zM1034.8 366.0h1.9v15.6h-1.9zM1041.9 367.8h1.9v16.0h-1.9zM1049.0 367.8h1.9v16.3h-1.9zM1056.2 366.0h1.9v16.6h-1.9zM1063.3 360.0h1.9v17.0h-1.9zM1070.4 360.5h1.9v16.4h-1.9zM1077.5 360.9h1.9v15.8h-1.9zM1084.6 363.2h1.9v15.1h-1.9zM1091.7 360.0h1.9v14.5h-1.9z"/><path fill="#9c5834" d="M79.8 498.0h5.1v9.3h-5.1zM86.9 499.7h5.1v9.3h-5.1zM94.0 498.3h5.1v9.2h-5.1zM101.1 498.5h5.1v9.2h-5.1zM108.3 496.9h5.1v9.2h-5.1zM115.4 497.0h5.1v9.2h-5.1zM122.5 497.2h5.1v9.1h-5.1zM129.6 497.4h5.1v9.1h-5.1zM136.7 497.5h5.1v9.1h-5.1zM143.8 497.7h5.1v9.1h-5.1zM150.9 497.9h5.1v9.1h-5.1zM158.1 499.8h5.1v9.0h-5.1zM165.2 500.0h5.1v9.0h-5.1zM172.3 489.0h5.1v10.2h-5.1zM179.4 493.0h5.1v9.8h-5.1zM186.5 493.1h5.1v9.8h-5.1zM193.6 493.2h5.1v9.8h-5.1zM200.8 491.9h5.1v9.8h-5.1zM207.9 490.1h5.1v9.9h-5.1zM215.0 492.1h5.1v9.9h-5.1zM222.1 490.3h5.1v9.9h-5.1zM229.2 490.4h5.1v9.9h-5.1zM236.3 486.7h5.1v9.9h-5.1zM243.4 485.3h5.1v9.8h-5.1zM250.6 482.4h5.1v9.6h-5.1zM257.7 484.3h5.1v9.4h-5.1zM264.8 484.6h5.1v9.3h-5.1zM271.9 483.5h5.1v9.2h-5.1zM279.0 482.2h5.1v9.0h-5.1zM286.1 482.4h5.1v9.4h-5.1zM293.2 476.9h5.1v9.8h-5.1zM300.4 471.4h5.1v10.2h-5.1zM307.5 468.0h5.1v10.7h-5.1zM314.6 466.6h5.1v10.7h-5.1zM321.7 465.2h5.1v10.7h-5.1zM328.8 460.1h5.1v10.7h-5.1zM335.9 460.7h5.1v10.7h-5.1zM343.1 460.9h5.1v10.8h-5.1zM350.2 462.6h5.1v10.8h-5.1zM357.3 461.2h5.1v10.9h-5.1zM364.4 461.3h5.1v11.0h-5.1zM371.5 461.5h5.1v11.0h-5.1zM378.6 459.6h5.1v11.1h-5.1zM385.7 461.8h5.1v11.2h-5.1zM392.9 455.1h5.1v11.3h-5.1zM400.0 453.3h5.1v11.3h-5.1zM407.1 455.4h5.1v11.4h-5.1zM414.2 455.6h5.1v11.5h-5.1zM421.3 453.7h5.1v11.5h-5.1zM428.4 452.0h5.1v11.6h-5.1zM435.6 443.2h5.1v11.7h-5.1zM442.7 442.4h5.1v11.4h-5.1zM449.8 441.1h5.1v11.2h-5.1zM456.9 441.3h5.1v11.0h-5.1zM464.0 434.4h5.1v10.7h-5.1zM471.1 433.9h5.1v10.7h-5.1zM478.2 437.4h5.1v10.6h-5.1zM485.4 437.4h5.1v10.7h-5.1zM492.5 437.5h5.1v10.8h-5.1zM499.6 435.6h5.1v10.8h-5.1zM506.7 435.7h5.1v10.9h-5.1zM513.8 435.7h5.1v11.0h-5.1zM520.9 433.8h5.1v11.0h-5.1zM528.0 433.9h5.1v11.1h-5.1zM535.2 431.0h5.1v11.2h-5.1zM542.3 430.9h5.1v11.3h-5.1zM549.4 430.9h5.1v11.3h-5.1zM556.5 428.6h5.1v11.4h-5.1zM563.6 428.5h5.1v11.4h-5.1zM570.7 428.4h5.1v11.4h-5.1zM577.9 428.4h5.1v11.5h-5.1zM585.0 428.4h5.1v11.5h-5.1zM592.1 426.7h5.1v11.6h-5.1zM599.2 361.6h5.1v11.5h-5.1zM606.3 360.0h5.1v11.5h-5.1zM613.4 362.1h5.1v11.5h-5.1zM620.5 362.4h5.1v11.5h-5.1zM627.7 362.6h5.1v11.5h-5.1zM634.8 361.1h5.1v11.5h-5.1zM641.9 361.3h5.1v11.5h-5.1zM649.0 361.6h5.1v11.5h-5.1zM656.1 361.9h5.1v11.6h-5.1zM663.2 358.8h5.1v11.6h-5.1zM670.3 359.0h5.1v11.6h-5.1zM677.5 360.8h5.1v11.6h-5.1zM684.6 361.1h5.1v11.6h-5.1zM691.7 361.4h5.1v11.6h-5.1zM698.8 361.6h5.1v11.6h-5.1zM705.9 361.9h5.1v11.6h-5.1zM713.0 360.2h5.1v11.6h-5.1zM720.1 360.1h5.1v11.6h-5.1zM727.3 360.0h5.1v11.5h-5.1zM734.4 361.9h5.1v11.5h-5.1zM741.5 364.9h5.1v11.5h-5.1zM748.6 363.0h5.1v11.5h-5.1zM755.7 364.5h5.1v11.3h-5.1zM762.8 362.4h5.1v11.2h-5.1zM770.0 362.2h5.1v11.0h-5.1zM777.1 358.5h5.1v10.8h-5.1zM784.2 358.6h5.1v10.8h-5.1zM791.3 358.6h5.1v10.8h-5.1zM798.4 356.8h5.1v10.9h-5.1zM805.5 358.6h5.1v10.9h-5.1zM812.6 358.7h5.1v10.9h-5.1zM819.8 358.7h5.1v10.9h-5.1zM826.9 358.7h5.1v11.0h-5.1zM834.0 358.7h5.1v11.0h-5.1zM841.1 356.9h5.1v11.0h-5.1zM848.2 356.7h5.1v11.4h-5.1zM855.3 356.5h5.1v11.7h-5.1zM862.4 356.3h5.1v12.1h-5.1zM869.6 356.1h5.1v12.4h-5.1zM876.7 352.1h5.1v12.8h-5.1zM883.8 349.6h5.1v12.5h-5.1zM890.9 350.3h5.1v12.2h-5.1zM898.0 350.9h5.1v11.9h-5.1zM905.1 350.0h5.1v11.6h-5.1zM912.3 351.6h5.1v10.9h-5.1zM919.4 354.7h5.1v10.3h-5.1zM926.5 355.3h5.1v10.5h-5.1zM933.6 355.3h5.1v10.7h-5.1zM940.7 355.3h5.1v10.9h-5.1zM947.8 355.3h5.1v11.1h-5.1zM954.9 355.4h5.1v11.3h-5.1zM962.1 353.6h5.1v11.5h-5.1zM969.2 353.6h5.1v11.8h-5.1zM976.3 351.9h5.1v12.0h-5.1zM983.4 353.7h5.1v12.2h-5.1zM990.5 353.7h5.1v12.4h-5.1zM997.6 353.8h5.1v12.6h-5.1zM1004.8 352.0h5.1v12.8h-5.1zM1011.9 350.5h5.1v13.0h-5.1zM1019.0 351.2h5.1v12.3h-5.1zM1026.1 351.8h5.1v11.7h-5.1zM1033.2 354.0h5.1v11.0h-5.1zM1040.3 355.7h5.1v11.1h-5.1zM1047.4 355.5h5.1v11.2h-5.1zM1054.6 353.6h5.1v11.4h-5.1zM1061.7 347.5h5.1v11.5h-5.1zM1068.8 347.6h5.1v11.8h-5.1zM1075.9 347.8h5.1v12.1h-5.1zM1083.0 349.7h5.1v12.5h-5.1zM1090.1 346.2h5.1v12.8h-5.1z"/><path fill="#8c4c2d" d="M81.4 499.0h1.9v8.3h-1.9zM88.5 500.7h1.9v8.3h-1.9zM95.6 499.3h1.9v8.2h-1.9zM102.7 499.5h1.9v8.2h-1.9zM109.9 497.9h1.9v8.2h-1.9zM117.0 498.0h1.9v8.2h-1.9zM124.1 498.2h1.9v8.1h-1.9zM131.2 498.4h1.9v8.1h-1.9zM138.3 498.5h1.9v8.1h-1.9zM145.4 498.7h1.9v8.1h-1.9zM152.5 498.9h1.9v8.1h-1.9zM159.7 500.8h1.9v8.0h-1.9zM166.8 501.0h1.9v8.0h-1.9zM173.9 490.0h1.9v9.2h-1.9zM181.0 494.0h1.9v8.8h-1.9zM188.1 494.1h1.9v8.8h-1.9zM195.2 494.2h1.9v8.8h-1.9zM202.4 492.9h1.9v8.8h-1.9zM209.5 491.1h1.9v8.9h-1.9zM216.6 493.1h1.9v8.9h-1.9zM223.7 491.3h1.9v8.9h-1.9zM230.8 491.4h1.9v8.9h-1.9zM237.9 487.7h1.9v8.9h-1.9zM245.0 486.3h1.9v8.8h-1.9zM252.2 483.4h1.9v8.6h-1.9zM259.3 485.3h1.9v8.4h-1.9zM266.4 485.6h1.9v8.3h-1.9zM273.5 484.5h1.9v8.2h-1.9zM280.6 483.2h1.9v8.0h-1.9zM287.7 483.4h1.9v8.4h-1.9zM294.9 477.9h1.9v8.8h-1.9zM302.0 472.4h1.9v9.2h-1.9zM309.1 469.0h1.9v9.7h-1.9zM316.2 467.6h1.9v9.7h-1.9zM323.3 466.2h1.9v9.7h-1.9zM330.4 461.1h1.9v9.7h-1.9zM337.5 461.7h1.9v9.7h-1.9zM344.7 461.9h1.9v9.8h-1.9zM351.8 463.6h1.9v9.8h-1.9zM358.9 462.2h1.9v9.9h-1.9zM366.0 462.3h1.9v10.0h-1.9zM373.1 462.5h1.9v10.0h-1.9zM380.2 460.6h1.9v10.1h-1.9zM387.3 462.8h1.9v10.2h-1.9zM394.5 456.1h1.9v10.3h-1.9zM401.6 454.3h1.9v10.3h-1.9zM408.7 456.4h1.9v10.4h-1.9zM415.8 456.6h1.9v10.5h-1.9zM422.9 454.7h1.9v10.5h-1.9zM430.0 453.0h1.9v10.6h-1.9zM437.2 444.2h1.9v10.7h-1.9zM444.3 443.4h1.9v10.4h-1.9zM451.4 442.1h1.9v10.2h-1.9zM458.5 442.3h1.9v10.0h-1.9zM465.6 435.4h1.9v9.7h-1.9zM472.7 434.9h1.9v9.7h-1.9zM479.8 438.4h1.9v9.6h-1.9zM487.0 438.4h1.9v9.7h-1.9zM494.1 438.5h1.9v9.8h-1.9zM501.2 436.6h1.9v9.8h-1.9zM508.3 436.7h1.9v9.9h-1.9zM515.4 436.7h1.9v10.0h-1.9zM522.5 434.8h1.9v10.0h-1.9zM529.6 434.9h1.9v10.1h-1.9zM536.8 432.0h1.9v10.2h-1.9zM543.9 431.9h1.9v10.3h-1.9zM551.0 431.9h1.9v10.3h-1.9zM558.1 429.6h1.9v10.4h-1.9zM565.2 429.5h1.9v10.4h-1.9zM572.3 429.4h1.9v10.4h-1.9zM579.5 429.4h1.9v10.5h-1.9zM586.6 429.4h1.9v10.5h-1.9zM593.7 427.7h1.9v10.6h-1.9zM600.8 362.6h1.9v10.5h-1.9zM607.9 361.0h1.9v10.5h-1.9zM615.0 363.1h1.9v10.5h-1.9zM622.1 363.4h1.9v10.5h-1.9zM629.3 363.6h1.9v10.5h-1.9zM636.4 362.1h1.9v10.5h-1.9zM643.5 362.3h1.9v10.5h-1.9zM650.6 362.6h1.9v10.5h-1.9zM657.7 362.9h1.9v10.6h-1.9zM664.8 359.8h1.9v10.6h-1.9zM671.9 360.0h1.9v10.6h-1.9zM679.1 361.8h1.9v10.6h-1.9zM686.2 362.1h1.9v10.6h-1.9zM693.3 362.4h1.9v10.6h-1.9zM700.4 362.6h1.9v10.6h-1.9zM707.5 362.9h1.9v10.6h-1.9zM714.6 361.2h1.9v10.6h-1.9zM721.8 361.1h1.9v10.6h-1.9zM728.9 361.0h1.9v10.5h-1.9zM736.0 362.9h1.9v10.5h-1.9zM743.1 365.9h1.9v10.5h-1.9zM750.2 364.0h1.9v10.5h-1.9zM757.3 365.5h1.9v10.3h-1.9zM764.4 363.4h1.9v10.2h-1.9zM771.6 363.2h1.9v10.0h-1.9zM778.7 359.5h1.9v9.8h-1.9zM785.8 359.6h1.9v9.8h-1.9zM792.9 359.6h1.9v9.8h-1.9zM800.0 357.8h1.9v9.9h-1.9zM807.1 359.6h1.9v9.9h-1.9zM814.2 359.7h1.9v9.9h-1.9zM821.4 359.7h1.9v9.9h-1.9zM828.5 359.7h1.9v10.0h-1.9zM835.6 359.7h1.9v10.0h-1.9zM842.7 357.9h1.9v10.0h-1.9zM849.8 357.7h1.9v10.4h-1.9zM856.9 357.5h1.9v10.7h-1.9zM864.0 357.3h1.9v11.1h-1.9zM871.2 357.1h1.9v11.4h-1.9zM878.3 353.1h1.9v11.8h-1.9zM885.4 350.6h1.9v11.5h-1.9zM892.5 351.3h1.9v11.2h-1.9zM899.6 351.9h1.9v10.9h-1.9zM906.7 351.0h1.9v10.6h-1.9zM913.9 352.6h1.9v9.9h-1.9zM921.0 355.7h1.9v9.3h-1.9zM928.1 356.3h1.9v9.5h-1.9zM935.2 356.3h1.9v9.7h-1.9zM942.3 356.3h1.9v9.9h-1.9zM949.4 356.3h1.9v10.1h-1.9zM956.5 356.4h1.9v10.3h-1.9zM963.7 354.6h1.9v10.5h-1.9zM970.8 354.6h1.9v10.8h-1.9zM977.9 352.9h1.9v11.0h-1.9zM985.0 354.7h1.9v11.2h-1.9zM992.1 354.7h1.9v11.4h-1.9zM999.2 354.8h1.9v11.6h-1.9zM1006.4 353.0h1.9v11.8h-1.9zM1013.5 351.5h1.9v12.0h-1.9zM1020.6 352.2h1.9v11.3h-1.9zM1027.7 352.8h1.9v10.7h-1.9zM1034.8 355.0h1.9v10.0h-1.9zM1041.9 356.7h1.9v10.1h-1.9zM1049.0 356.5h1.9v10.2h-1.9zM1056.2 354.6h1.9v10.4h-1.9zM1063.3 348.5h1.9v10.5h-1.9zM1070.4 348.6h1.9v10.8h-1.9zM1077.5 348.8h1.9v11.1h-1.9zM1084.6 350.7h1.9v11.5h-1.9zM1091.7 347.2h1.9v11.8h-1.9z"/><path fill="#e99ad3" d="M79.8 479.0h5.1v19.0h-5.1zM86.9 480.5h5.1v19.2h-5.1zM94.0 479.0h5.1v19.3h-5.1zM101.1 479.0h5.1v19.5h-5.1zM108.3 477.2h5.1v19.7h-5.1zM115.4 477.2h5.1v19.8h-5.1zM122.5 477.2h5.1v20.0h-5.1zM129.6 477.2h5.1v20.2h-5.1zM136.7 477.2h5.1v20.3h-5.1zM143.8 477.2h5.1v20.5h-5.1zM150.9 477.2h5.1v20.7h-5.1zM158.1 479.0h5.1v20.8h-5.1zM165.2 479.0h5.1v21.0h-5.1zM172.3 470.0h5.1v19.0h-5.1zM179.4 473.3h5.1v19.7h-5.1zM186.5 473.3h5.1v19.8h-5.1zM193.6 473.3h5.1v19.9h-5.1zM200.8 471.9h5.1v20.0h-5.1zM207.9 470.0h5.1v20.1h-5.1zM215.0 471.9h5.1v20.2h-5.1zM222.1 470.0h5.1v20.3h-5.1zM229.2 470.0h5.1v20.4h-5.1zM236.3 466.2h5.1v20.5h-5.1zM243.4 464.4h5.1v20.9h-5.1zM250.6 461.1h5.1v21.3h-5.1zM257.7 462.6h5.1v21.7h-5.1zM264.8 462.6h5.1v22.0h-5.1zM271.9 461.1h5.1v22.4h-5.1zM279.0 459.4h5.1v22.8h-5.1zM286.1 459.4h5.1v23.0h-5.1zM293.2 453.6h5.1v23.3h-5.1zM300.4 448.3h5.1v23.1h-5.1zM307.5 445.0h5.1v23.0h-5.1zM314.6 443.3h5.1v23.3h-5.1zM321.7 441.5h5.1v23.7h-5.1zM328.8 436.1h5.1v24.0h-5.1zM335.9 436.4h5.1v24.3h-5.1zM343.1 436.4h5.1v24.5h-5.1zM350.2 438.0h5.1v24.6h-5.1zM357.3 436.4h5.1v24.8h-5.1zM364.4 436.4h5.1v24.9h-5.1zM371.5 436.4h5.1v25.1h-5.1zM378.6 434.4h5.1v25.2h-5.1zM385.7 436.4h5.1v25.4h-5.1zM392.9 429.6h5.1v25.5h-5.1zM400.0 427.6h5.1v25.7h-5.1zM407.1 429.6h5.1v25.8h-5.1zM414.2 429.6h5.1v26.0h-5.1zM421.3 427.6h5.1v26.1h-5.1zM428.4 425.7h5.1v26.3h-5.1zM435.6 416.0h5.1v27.2h-5.1zM442.7 415.0h5.1v27.4h-5.1zM449.8 413.4h5.1v27.7h-5.1zM456.9 413.4h5.1v27.9h-5.1zM464.0 406.2h5.1v28.2h-5.1zM471.1 406.2h5.1v27.8h-5.1zM478.2 410.1h5.1v27.3h-5.1zM485.4 410.1h5.1v27.3h-5.1zM492.5 410.1h5.1v27.4h-5.1zM499.6 408.2h5.1v27.4h-5.1zM506.7 408.2h5.1v27.5h-5.1zM513.8 408.2h5.1v27.5h-5.1zM520.9 406.2h5.1v27.6h-5.1zM528.0 406.2h5.1v27.7h-5.1zM535.2 403.3h5.1v27.7h-5.1zM542.3 403.3h5.1v27.6h-5.1zM549.4 403.3h5.1v27.6h-5.1zM556.5 401.0h5.1v27.6h-5.1zM563.6 401.0h5.1v27.5h-5.1zM570.7 401.0h5.1v27.4h-5.1zM577.9 401.0h5.1v27.4h-5.1zM585.0 401.0h5.1v27.4h-5.1zM592.1 399.4h5.1v27.3h-5.1zM599.2 333.9h5.1v27.7h-5.1zM606.3 332.1h5.1v28.0h-5.1zM613.4 333.9h5.1v28.2h-5.1zM620.5 333.9h5.1v28.5h-5.1zM627.7 333.9h5.1v28.7h-5.1zM634.8 332.1h5.1v29.0h-5.1zM641.9 332.1h5.1v29.3h-5.1zM649.0 332.1h5.1v29.5h-5.1zM656.1 332.1h5.1v29.8h-5.1zM663.2 328.7h5.1v30.0h-5.1zM670.3 328.7h5.1v30.3h-5.1zM677.5 330.3h5.1v30.6h-5.1zM684.6 330.3h5.1v30.8h-5.1zM691.7 330.3h5.1v31.1h-5.1zM698.8 330.3h5.1v31.3h-5.1zM705.9 330.3h5.1v31.6h-5.1zM713.0 328.7h5.1v31.5h-5.1zM720.1 328.7h5.1v31.4h-5.1zM727.3 328.7h5.1v31.2h-5.1zM734.4 330.8h5.1v31.1h-5.1zM741.5 333.9h5.1v31.0h-5.1zM748.6 332.1h5.1v30.9h-5.1zM755.7 333.9h5.1v30.6h-5.1zM762.8 332.1h5.1v30.3h-5.1zM770.0 332.1h5.1v30.1h-5.1zM777.1 328.7h5.1v29.8h-5.1zM784.2 328.7h5.1v29.8h-5.1zM791.3 328.7h5.1v29.8h-5.1zM798.4 326.9h5.1v29.9h-5.1zM805.5 328.7h5.1v29.9h-5.1zM812.6 328.7h5.1v29.9h-5.1zM819.8 328.7h5.1v29.9h-5.1zM826.9 328.7h5.1v30.0h-5.1zM834.0 328.7h5.1v30.0h-5.1zM841.1 326.9h5.1v30.0h-5.1zM848.2 326.9h5.1v29.8h-5.1zM855.3 326.9h5.1v29.6h-5.1zM862.4 326.9h5.1v29.4h-5.1zM869.6 326.9h5.1v29.2h-5.1zM876.7 323.1h5.1v29.0h-5.1zM883.8 320.0h5.1v29.6h-5.1zM890.9 320.0h5.1v30.2h-5.1zM898.0 320.0h5.1v30.9h-5.1zM905.1 318.5h5.1v31.5h-5.1zM912.3 320.0h5.1v31.6h-5.1zM919.4 323.1h5.1v31.6h-5.1zM926.5 323.6h5.1v31.6h-5.1zM933.6 323.6h5.1v31.7h-5.1zM940.7 323.6h5.1v31.7h-5.1zM947.8 323.6h5.1v31.7h-5.1zM954.9 323.6h5.1v31.8h-5.1zM962.1 321.8h5.1v31.8h-5.1zM969.2 321.8h5.1v31.8h-5.1zM976.3 320.0h5.1v31.8h-5.1zM983.4 321.8h5.1v31.9h-5.1zM990.5 321.8h5.1v31.9h-5.1zM997.6 321.8h5.1v31.9h-5.1zM1004.8 320.0h5.1v32.0h-5.1zM1011.9 318.5h5.1v32.0h-5.1zM1019.0 318.5h5.1v32.7h-5.1zM1026.1 318.5h5.1v33.3h-5.1zM1033.2 320.0h5.1v34.0h-5.1zM1040.3 321.8h5.1v33.9h-5.1zM1047.4 321.8h5.1v33.7h-5.1zM1054.6 320.0h5.1v33.5h-5.1zM1061.7 314.1h5.1v33.4h-5.1zM1068.8 314.1h5.1v33.5h-5.1zM1075.9 314.1h5.1v33.6h-5.1zM1083.0 315.9h5.1v33.8h-5.1zM1090.1 312.3h5.1v33.9h-5.1z"/><path fill="#d47ac0" d="M81.4 480.0h1.9v18.0h-1.9zM88.5 481.5h1.9v18.2h-1.9zM95.6 480.0h1.9v18.3h-1.9zM102.7 480.0h1.9v18.5h-1.9zM109.9 478.2h1.9v18.7h-1.9zM117.0 478.2h1.9v18.8h-1.9zM124.1 478.2h1.9v19.0h-1.9zM131.2 478.2h1.9v19.2h-1.9zM138.3 478.2h1.9v19.3h-1.9zM145.4 478.2h1.9v19.5h-1.9zM152.5 478.2h1.9v19.7h-1.9zM159.7 480.0h1.9v19.8h-1.9zM166.8 480.0h1.9v20.0h-1.9zM173.9 471.0h1.9v18.0h-1.9zM181.0 474.3h1.9v18.7h-1.9zM188.1 474.3h1.9v18.8h-1.9zM195.2 474.3h1.9v18.9h-1.9zM202.4 472.9h1.9v19.0h-1.9zM209.5 471.0h1.9v19.1h-1.9zM216.6 472.9h1.9v19.2h-1.9zM223.7 471.0h1.9v19.3h-1.9zM230.8 471.0h1.9v19.4h-1.9zM237.9 467.2h1.9v19.5h-1.9zM245.0 465.4h1.9v19.9h-1.9zM252.2 462.1h1.9v20.3h-1.9zM259.3 463.6h1.9v20.7h-1.9zM266.4 463.6h1.9v21.0h-1.9zM273.5 462.1h1.9v21.4h-1.9zM280.6 460.4h1.9v21.8h-1.9zM287.7 460.4h1.9v22.0h-1.9zM294.9 454.6h1.9v22.3h-1.9zM302.0 449.3h1.9v22.1h-1.9zM309.1 446.0h1.9v22.0h-1.9zM316.2 444.3h1.9v22.3h-1.9zM323.3 442.5h1.9v22.7h-1.9zM330.4 437.1h1.9v23.0h-1.9zM337.5 437.4h1.9v23.3h-1.9zM344.7 437.4h1.9v23.5h-1.9zM351.8 439.0h1.9v23.6h-1.9zM358.9 437.4h1.9v23.8h-1.9zM366.0 437.4h1.9v23.9h-1.9zM373.1 437.4h1.9v24.1h-1.9zM380.2 435.4h1.9v24.2h-1.9zM387.3 437.4h1.9v24.4h-1.9zM394.5 430.6h1.9v24.5h-1.9zM401.6 428.6h1.9v24.7h-1.9zM408.7 430.6h1.9v24.8h-1.9zM415.8 430.6h1.9v25.0h-1.9zM422.9 428.6h1.9v25.1h-1.9zM430.0 426.7h1.9v25.3h-1.9zM437.2 417.0h1.9v26.2h-1.9zM444.3 416.0h1.9v26.4h-1.9zM451.4 414.4h1.9v26.7h-1.9zM458.5 414.4h1.9v26.9h-1.9zM465.6 407.2h1.9v27.2h-1.9zM472.7 407.2h1.9v26.8h-1.9zM479.8 411.1h1.9v26.3h-1.9zM487.0 411.1h1.9v26.3h-1.9zM494.1 411.1h1.9v26.4h-1.9zM501.2 409.2h1.9v26.4h-1.9zM508.3 409.2h1.9v26.5h-1.9zM515.4 409.2h1.9v26.5h-1.9zM522.5 407.2h1.9v26.6h-1.9zM529.6 407.2h1.9v26.7h-1.9zM536.8 404.3h1.9v26.7h-1.9zM543.9 404.3h1.9v26.6h-1.9zM551.0 404.3h1.9v26.6h-1.9zM558.1 402.0h1.9v26.6h-1.9zM565.2 402.0h1.9v26.5h-1.9zM572.3 402.0h1.9v26.4h-1.9zM579.5 402.0h1.9v26.4h-1.9zM586.6 402.0h1.9v26.4h-1.9zM593.7 400.4h1.9v26.3h-1.9zM600.8 334.9h1.9v26.7h-1.9zM607.9 333.1h1.9v27.0h-1.9zM615.0 334.9h1.9v27.2h-1.9zM622.1 334.9h1.9v27.5h-1.9zM629.3 334.9h1.9v27.7h-1.9zM636.4 333.1h1.9v28.0h-1.9zM643.5 333.1h1.9v28.3h-1.9zM650.6 333.1h1.9v28.5h-1.9zM657.7 333.1h1.9v28.8h-1.9zM664.8 329.7h1.9v29.0h-1.9zM671.9 329.7h1.9v29.3h-1.9zM679.1 331.3h1.9v29.6h-1.9zM686.2 331.3h1.9v29.8h-1.9zM693.3 331.3h1.9v30.1h-1.9zM700.4 331.3h1.9v30.3h-1.9zM707.5 331.3h1.9v30.6h-1.9zM714.6 329.7h1.9v30.5h-1.9zM721.8 329.7h1.9v30.4h-1.9zM728.9 329.7h1.9v30.2h-1.9zM736.0 331.8h1.9v30.1h-1.9zM743.1 334.9h1.9v30.0h-1.9zM750.2 333.1h1.9v29.9h-1.9zM757.3 334.9h1.9v29.6h-1.9zM764.4 333.1h1.9v29.3h-1.9zM771.6 333.1h1.9v29.1h-1.9zM778.7 329.7h1.9v28.8h-1.9zM785.8 329.7h1.9v28.8h-1.9zM792.9 329.7h1.9v28.8h-1.9zM800.0 327.9h1.9v28.9h-1.9zM807.1 329.7h1.9v28.9h-1.9zM814.2 329.7h1.9v28.9h-1.9zM821.4 329.7h1.9v28.9h-1.9zM828.5 329.7h1.9v29.0h-1.9zM835.6 329.7h1.9v29.0h-1.9zM842.7 327.9h1.9v29.0h-1.9zM849.8 327.9h1.9v28.8h-1.9zM856.9 327.9h1.9v28.6h-1.9zM864.0 327.9h1.9v28.4h-1.9zM871.2 327.9h1.9v28.2h-1.9zM878.3 324.1h1.9v28.0h-1.9zM885.4 321.0h1.9v28.6h-1.9zM892.5 321.0h1.9v29.2h-1.9zM899.6 321.0h1.9v29.9h-1.9zM906.7 319.5h1.9v30.5h-1.9zM913.9 321.0h1.9v30.6h-1.9zM921.0 324.1h1.9v30.6h-1.9zM928.1 324.6h1.9v30.6h-1.9zM935.2 324.6h1.9v30.7h-1.9zM942.3 324.6h1.9v30.7h-1.9zM949.4 324.6h1.9v30.7h-1.9zM956.5 324.6h1.9v30.8h-1.9zM963.7 322.8h1.9v30.8h-1.9zM970.8 322.8h1.9v30.8h-1.9zM977.9 321.0h1.9v30.8h-1.9zM985.0 322.8h1.9v30.9h-1.9zM992.1 322.8h1.9v30.9h-1.9zM999.2 322.8h1.9v30.9h-1.9zM1006.4 321.0h1.9v31.0h-1.9zM1013.5 319.5h1.9v31.0h-1.9zM1020.6 319.5h1.9v31.7h-1.9zM1027.7 319.5h1.9v32.3h-1.9zM1034.8 321.0h1.9v33.0h-1.9zM1041.9 322.8h1.9v32.9h-1.9zM1049.0 322.8h1.9v32.7h-1.9zM1056.2 321.0h1.9v32.5h-1.9zM1063.3 315.1h1.9v32.4h-1.9zM1070.4 315.1h1.9v32.5h-1.9zM1077.5 315.1h1.9v32.6h-1.9zM1084.6 316.9h1.9v32.8h-1.9zM1091.7 313.3h1.9v32.9h-1.9z"/><text x="90.8" y="646.5" text-anchor="end" class="xl" transform="rotate(-49 90.8 646.5)">08/08/2023 05:27</text><text x="119.3" y="646.5" text-anchor="end" class="xl" transform="rotate(-49 119.3 646.5)">08/08/2023 05:39</text><text x="147.7" y="646.5" text-anchor="end" class="xl" transform="rotate(-49 147.7 646.5)">08/08/2023 05:51</text><text x="176.2" y="646.5" text-anchor="end" class="xl" transform="rotate(-49 176.2 646.5)">08/08/2023 06:03</text><text x="204.6" y="646.5" text-anchor="end" class="xl" transform="rotate(-49 204.6 646.5)">08/08/2023 06:15</text><text x="233.1" y="646.5" text-anchor="end" class="xl" transform="rotate(-49 233.1 646.5)">08/08/2023 06:27</text><text x="261.6" y="646.5" text-anchor="end" class="xl" transform="rotate(-49 261.6 646.5)">08/08/2023 06:39</text><text x="290.0" y="646.5" text-anchor="end" class="xl" transform="rotate(-49 290.0 646.5)">08/08/2023 06:51</text><text x="318.5" y="646.5" text-anchor="end" class="xl" transform="rotate(-49 318.5 646.5)">08/08/2023 07:03</text><text x="346.9" y="646.5" text-anchor="end" class="xl" transform="rotate(-49 346.9 646.5)">08/08/2023 07:15</text><text x="375.4" y="646.5" text-anchor="end" class="xl" transform="rotate(-49 375.4 646.5)">08/08/2023 07:27</text><text x="403.9" y="646.5" text-anchor="end" class="xl" transform="rotate(-49 403.9 646.5)">08/08/2023 07:39</text><text x="432.3" y="646.5" text-anchor="end" class="xl" transform="rotate(-49 432.3 646.5)">08/08/2023 07:51</text><text x="460.8" y="646.5" text-anchor="end" class="xl" transform="rotate(-49 460.8 646.5)">08/08/2023 08:03</text><text x="489.2" y="646.5" text-anchor="end" class="xl" transform="rotate(-49 489.2 646.5)">08/08/2023 08:15</text><text x="517.7" y="646.5" text-anchor="end" class="xl" transform="rotate(-49 517.7 646.5)">08/08/2023 08:27</text><text x="546.2" y="646.5" text-anchor="end" class="xl" transform="rotate(-49 546.2 646.5)">08/08/2023 08:39</text><text x="574.6" y="646.5" text-anchor="end" class="xl" transform="rotate(-49 574.6 646.5)">08/08/2023 08:51</text><text x="603.1" y="646.5" text-anchor="end" class="xl" transform="rotate(-49 603.1 646.5)">08/08/2023 09:03</text><text x="631.5" y="646.5" text-anchor="end" class="xl" transform="rotate(-49 631.5 646.5)">08/08/2023 09:15</text><text x="660.0" y="646.5" text-anchor="end" class="xl" transform="rotate(-49 660.0 646.5)">08/08/2023 09:27</text><text x="688.5" y="646.5" text-anchor="end" class="xl" transform="rotate(-49 688.5 646.5)">08/08/2023 09:39</text><text x="716.9" y="646.5" text-anchor="end" class="xl" transform="rotate(-49 716.9 646.5)">08/08/2023 09:51</text><text x="745.4" y="646.5" text-anchor="end" class="xl" transform="rotate(-49 745.4 646.5)">08/08/2023 10:03</text><text x="773.8" y="646.5" text-anchor="end" class="xl" transform="rotate(-49 773.8 646.5)">08/08/2023 10:15</text><text x="802.3" y="646.5" text-anchor="end" class="xl" transform="rotate(-49 802.3 646.5)">08/08/2023 10:27</text><text x="830.8" y="646.5" text-anchor="end" class="xl" transform="rotate(-49 830.8 646.5)">08/08/2023 10:39</text><text x="859.2" y="646.5" text-anchor="end" class="xl" transform="rotate(-49 859.2 646.5)">08/08/2023 10:51</text><text x="887.7" y="646.5" text-anchor="end" class="xl" transform="rotate(-49 887.7 646.5)">08/08/2023 11:03</text><text x="916.1" y="646.5" text-anchor="end" class="xl" transform="rotate(-49 916.1 646.5)">08/08/2023 11:15</text><text x="944.6" y="646.5" text-anchor="end" class="xl" transform="rotate(-49 944.6 646.5)">08/08/2023 11:27</text><text x="973.1" y="646.5" text-anchor="end" class="xl" transform="rotate(-49 973.1 646.5)">08/08/2023 11:39</text><text x="1001.5" y="646.5" text-anchor="end" class="xl" transform="rotate(-49 1001.5 646.5)">08/08/2023 11:51</text><text x="1030.0" y="646.5" text-anchor="end" class="xl" transform="rotate(-49 1030.0 646.5)">08/08/2023 12:03</text><text x="1058.4" y="646.5" text-anchor="end" class="xl" transform="rotate(-49 1058.4 646.5)">08/08/2023 12:15</text><text x="1086.9" y="646.5" text-anchor="end" class="xl" transform="rotate(-49 1086.9 646.5)">08/08/2023 12:27</text><text class="yt" transform="translate(28.6 450) rotate(-90)" text-anchor="middle">Current (A)</text></svg>

<div class="abs map"><svg width="1082" height="558" viewBox="0 0 1082 558" style="display:block"><rect width="1082" height="558" fill="#486632"/><g fill="#3f5c2b" opacity="0.55"><rect x="350" y="84" width="16" height="4" rx="2" transform="rotate(4 350 84)"/><rect x="396" y="32" width="13" height="3" rx="2" transform="rotate(-8 396 32)"/><rect x="76" y="51" width="12" height="12" rx="2" transform="rotate(-45 76 51)"/><rect x="242" y="350" width="21" height="9" rx="2" transform="rotate(-12 242 350)"/><rect x="1056" y="26" width="19" height="6" rx="2" transform="rotate(-43 1056 26)"/><rect x="127" y="172" width="19" height="5" rx="2" transform="rotate(10 127 172)"/><rect x="691" y="208" width="14" height="4" rx="2" transform="rotate(-53 691 208)"/><rect x="223" y="380" width="12" height="6" rx="2" transform="rotate(10 223 380)"/><rect x="490" y="167" width="18" height="11" rx="2" transform="rotate(-31 490 167)"/><rect x="622" y="293" width="20" height="11" rx="2" transform="rotate(-25 622 293)"/><rect x="1061" y="66" width="12" height="11" rx="2" transform="rotate(-42 1061 66)"/><rect x="529" y="22" width="16" height="11" rx="2" transform="rotate(9 529 22)"/><rect x="947" y="175" width="17" height="10" rx="2" transform="rotate(10 947 175)"/><rect x="494" y="469" width="21" height="8" rx="2" transform="rotate(20 494 469)"/><rect x="66" y="391" width="16" height="14" rx="2" transform="rotate(39 66 391)"/><rect x="308" y="215" width="16" height="3" rx="2" transform="rotate(-5 308 215)"/><rect x="182" y="65" width="5" height="11" rx="2" transform="rotate(-44 182 65)"/><rect x="268" y="218" width="20" height="4" rx="2" transform="rotate(-6 268 218)"/><rect x="594" y="493" width="19" height="13" rx="2" transform="rotate(-27 594 493)"/><rect x="449" y="200" width="20" height="14" rx="2" transform="rotate(-42 449 200)"/><rect x="191" y="129" width="8" height="8" rx="2" transform="rotate(11 191 129)"/><rect x="284" y="2" width="12" height="7" rx="2" transform="rotate(8 284 2)"/><rect x="1031" y="385" width="13" height="10" rx="2" transform="rotate(21 1031 385)"/><rect x="58" y="502" width="18" height="13" rx="2" transform="rotate(36 58 502)"/><rect x="425" y="223" width="6" height="10" rx="2" transform="rotate(-53 425 223)"/><rect x="73" y="116" width="7" height="7" rx="2" transform="rotate(-54 73 116)"/><rect x="0" y="84" width="6" height="7" rx="2" transform="rotate(-57 0 84)"/><rect x="946" y="343" width="7" height="6" rx="2" transform="rotate(-18 946 343)"/><rect x="394" y="69" width="19" height="14" rx="2" transform="rotate(-4 394 69)"/><rect x="524" y="48" width="6" height="7" rx="2" transform="rotate(-28 524 48)"/><rect x="897" y="90" width="4" height="13" rx="2" transform="rotate(3 897 90)"/><rect x="159" y="303" width="4" height="9" rx="2" transform="rotate(57 159 303)"/><rect x="934" y="388" width="9" height="7" rx="2" transform="rotate(-40 934 388)"/><rect x="835" y="297" width="18" height="7" rx="2" transform="rotate(-33 835 297)"/><rect x="878" y="550" width="19" height="12" rx="2" transform="rotate(38 878 550)"/><rect x="801" y="127" width="13" height="7" rx="2" transform="rotate(-57 801 127)"/><rect x="30" y="156" width="9" height="11" rx="2" transform="rotate(55 30 156)"/><rect x="484" y="523" width="22" height="14" rx="2" transform="rotate(-16 484 523)"/><rect x="239" y="127" width="8" height="5" rx="2" transform="rotate(15 239 127)"/><rect x="974" y="469" width="13" height="10" rx="2" transform="rotate(36 974 469)"/><rect x="92" y="369" width="20" height="12" rx="2" transform="rotate(30 92 369)"/><rect x="517" y="100" width="18" height="7" rx="2" transform="rotate(36 517 100)"/><rect x="1051" y="221" width="11" height="13" rx="2" transform="rotate(27 1051 221)"/><rect x="184" y="71" width="7" height="13" rx="2" transform="rotate(37 184 71)"/><rect x="158" y="461" width="22" height="10" rx="2" transform="rotate(-18 158 461)"/><rect x="594" y="73" width="4" height="14" rx="2" transform="rotate(18 594 73)"/><rect x="570" y="521" width="12" height="13" rx="2" transform="rotate(39 570 521)"/><rect x="228" y="141" width="9" height="6" rx="2" transform="rotate(10 228 141)"/><rect x="281" y="234" width="6" height="13" rx="2" transform="rotate(-18 281 234)"/><rect x="496" y="326" width="20" height="8" rx="2" transform="rotate(50 496 326)"/><rect x="543" y="297" width="13" height="3" rx="2" transform="rotate(-7 543 297)"/><rect x="198" y="2" width="18" height="5" rx="2" transform="rotate(-3 198 2)"/><rect x="785" y="311" width="10" height="9" rx="2" transform="rotate(7 785 311)"/><rect x="849" y="59" width="14" height="6" rx="2" transform="rotate(-27 849 59)"/><rect x="836" y="283" width="14" height="11" rx="2" transform="rotate(49 836 283)"/><rect x="480" y="342" width="13" height="9" rx="2" transform="rotate(23 480 342)"/><rect x="489" y="298" width="13" height="13" rx="2" transform="rotate(24 489 298)"/><rect x="948" y="526" width="9" height="9" rx="2" transform="rotate(53 948 526)"/><rect x="909" y="77" width="6" height="8" rx="2" transform="rotate(-51 909 77)"/><rect x="260" y="41" width="16" height="12" rx="2" transform="rotate(48 260 41)"/><rect x="167" y="400" width="16" height="5" rx="2" transform="rotate(46 167 400)"/><rect x="1047" y="123" width="21" height="7" rx="2" transform="rotate(-2 1047 123)"/><rect x="1071" y="465" width="7" height="8" rx="2" transform="rotate(2 1071 465)"/><rect x="367" y="109" width="10" height="11" rx="2" transform="rotate(-58 367 109)"/><rect x="599" y="246" width="4" height="7" rx="2" transform="rotate(15 599 246)"/><rect x="554" y="36" width="22" height="12" rx="2" transform="rotate(57 554 36)"/><rect x="113" y="148" width="5" height="12" rx="2" transform="rotate(-28 113 148)"/><rect x="140" y="236" width="20" height="12" rx="2" transform="rotate(-29 140 236)"/><rect x="162" y="513" width="14" height="11" rx="2" transform="rotate(-49 162 513)"/><rect x="62" y="384" width="12" height="4" rx="2" transform="rotate(53 62 384)"/><rect x="686" y="447" width="6" height="12" rx="2" transform="rotate(-52 686 447)"/><rect x="934" y="253" width="10" height="9" rx="2" transform="rotate(51 934 253)"/><rect x="290" y="72" width="13" height="6" rx="2" transform="rotate(-47 290 72)"/><rect x="175" y="28" width="8" height="6" rx="2" transform="rotate(-23 175 28)"/><rect x="822" y="162" width="13" height="5" rx="2" transform="rotate(-18 822 162)"/><rect x="20" y="140" width="4" height="11" rx="2" transform="rotate(6 20 140)"/><rect x="205" y="265" width="21" height="4" rx="2" transform="rotate(38 205 265)"/><rect x="468" y="276" width="19" height="7" rx="2" transform="rotate(1 468 276)"/><rect x="744" y="548" width="10" height="12" rx="2" transform="rotate(25 744 548)"/><rect x="688" y="226" width="10" height="4" rx="2" transform="rotate(-44 688 226)"/><rect x="77" y="413" width="9" height="5" rx="2" transform="rotate(-50 77 413)"/><rect x="910" y="486" width="16" height="6" rx="2" transform="rotate(-31 910 486)"/><rect x="317" y="256" width="7" height="8" rx="2" transform="rotate(-28 317 256)"/><rect x="1041" y="543" width="14" height="6" rx="2" transform="rotate(56 1041 543)"/><rect x="335" y="199" width="4" height="7" rx="2" transform="rotate(-3 335 199)"/><rect x="544" y="112" width="13" height="3" rx="2" transform="rotate(-28 544 112)"/><rect x="97" y="223" width="5" height="3" rx="2" transform="rotate(-23 97 223)"/><rect x="252" y="327" width="14" height="11" rx="2" transform="rotate(19 252 327)"/><rect x="775" y="491" width="11" height="7" rx="2" transform="rotate(58 775 491)"/><rect x="162" y="404" width="16" height="3" rx="2" transform="rotate(40 162 404)"/><rect x="965" y="350" width="17" height="12" rx="2" transform="rotate(-43 965 350)"/><rect x="567" y="281" width="19" height="12" rx="2" transform="rotate(39 567 281)"/><rect x="632" y="498" width="16" height="11" rx="2" transform="rotate(-32 632 498)"/><rect x="34" y="74" width="10" height="4" rx="2" transform="rotate(40 34 74)"/><rect x="604" y="350" width="15" height="10" rx="2" transform="rotate(-1 604 350)"/><rect x="4" y="445" width="17" height="9" rx="2" transform="rotate(4 4 445)"/><rect x="713" y="37" width="17" height="6" rx="2" transform="rotate(-51 713 37)"/><rect x="287" y="407" width="8" height="11" rx="2" transform="rotate(57 287 407)"/><rect x="534" y="213" width="13" height="11" rx="2" transform="rotate(32 534 213)"/><rect x="668" y="359" width="5" height="5" rx="2" transform="rotate(-30 668 359)"/><rect x="804" y="170" width="14" height="3" rx="2" transform="rotate(-53 804 170)"/><rect x="291" y="375" width="16" height="10" rx="2" transform="rotate(-25 291 375)"/><rect x="559" y="259" width="12" height="4" rx="2" transform="rotate(47 559 259)"/><rect x="216" y="546" width="21" height="3" rx="2" transform="rotate(-5 216 546)"/><rect x="887" y="540" width="12" height="6" rx="2" transform="rotate(-35 887 540)"/><rect x="1023" y="118" width="14" height="5" rx="2" transform="rotate(3 1023 118)"/><rect x="1031" y="74" width="19" height="9" rx="2" transform="rotate(46 1031 74)"/><rect x="761" y="129" width="20" height="8" rx="2" transform="rotate(-57 761 129)"/><rect x="4" y="274" width="12" height="6" rx="2" transform="rotate(-43 4 274)"/><rect x="372" y="176" width="19" height="3" rx="2" transform="rotate(30 372 176)"/><rect x="908" y="67" width="21" height="11" rx="2" transform="rotate(48 908 67)"/><rect x="314" y="208" width="11" height="14" rx="2" transform="rotate(11 314 208)"/><rect x="390" y="239" width="9" height="4" rx="2" transform="rotate(-48 390 239)"/><rect x="903" y="159" width="21" height="6" rx="2" transform="rotate(-28 903 159)"/><rect x="553" y="106" width="11" height="14" rx="2" transform="rotate(46 553 106)"/><rect x="879" y="352" width="20" height="13" rx="2" transform="rotate(6 879 352)"/><rect x="779" y="28" width="17" height="8" rx="2" transform="rotate(30 779 28)"/><rect x="697" y="160" width="5" height="13" rx="2" transform="rotate(-45 697 160)"/><rect x="511" y="192" width="9" height="11" rx="2" transform="rotate(57 511 192)"/><rect x="282" y="366" width="9" height="9" rx="2" transform="rotate(-13 282 366)"/><rect x="181" y="90" width="8" height="13" rx="2" transform="rotate(-0 181 90)"/><rect x="238" y="506" width="22" height="8" rx="2" transform="rotate(-43 238 506)"/><rect x="208" y="51" width="10" height="4" rx="2" transform="rotate(-31 208 51)"/><rect x="280" y="318" width="20" height="11" rx="2" transform="rotate(-10 280 318)"/><rect x="448" y="292" width="11" height="7" rx="2" transform="rotate(-53 448 292)"/><rect x="300" y="540" width="6" height="9" rx="2" transform="rotate(16 300 540)"/><rect x="934" y="121" width="9" height="6" rx="2" transform="rotate(-12 934 121)"/><rect x="482" y="532" width="19" height="13" rx="2" transform="rotate(-57 482 532)"/><rect x="35" y="396" width="20" height="8" rx="2" transform="rotate(10 35 396)"/><rect x="0" y="218" width="21" height="12" rx="2" transform="rotate(43 0 218)"/><rect x="1052" y="139" width="6" height="5" rx="2" transform="rotate(3 1052 139)"/><rect x="738" y="525" width="17" height="10" rx="2" transform="rotate(32 738 525)"/><rect x="495" y="308" width="5" height="12" rx="2" transform="rotate(-32 495 308)"/><rect x="995" y="360" width="9" height="4" rx="2" transform="rotate(-30 995 360)"/><rect x="688" y="390" width="6" height="4" rx="2" transform="rotate(3 688 390)"/><rect x="631" y="217" width="8" height="10" rx="2" transform="rotate(-59 631 217)"/><rect x="326" y="257" width="21" height="10" rx="2" transform="rotate(46 326 257)"/><rect x="514" y="131" width="8" height="14" rx="2" transform="rotate(25 514 131)"/><rect x="333" y="12" width="13" height="10" rx="2" transform="rotate(-10 333 12)"/><rect x="278" y="372" width="21" height="5" rx="2" transform="rotate(-56 278 372)"/><rect x="366" y="235" width="16" height="5" rx="2" transform="rotate(36 366 235)"/><rect x="800" y="282" width="8" height="14" rx="2" transform="rotate(-23 800 282)"/><rect x="887" y="129" width="8" height="11" rx="2" transform="rotate(-25 887 129)"/><rect x="1030" y="277" width="7" height="5" rx="2" transform="rotate(-10 1030 277)"/><rect x="720" y="529" width="7" height="7" rx="2" transform="rotate(-34 720 529)"/><rect x="1054" y="79" width="5" height="4" rx="2" transform="rotate(-13 1054 79)"/><rect x="972" y="493" width="17" height="14" rx="2" transform="rotate(52 972 493)"/><rect x="356" y="104" width="21" height="11" rx="2" transform="rotate(-56 356 104)"/><rect x="719" y="211" width="11" height="7" rx="2" transform="rotate(-40 719 211)"/><rect x="3" y="156" width="10" height="14" rx="2" transform="rotate(-45 3 156)"/><rect x="1043" y="116" width="10" height="12" rx="2" transform="rotate(39 1043 116)"/><rect x="468" y="27" width="13" height="7" rx="2" transform="rotate(50 468 27)"/><rect x="209" y="203" width="20" height="3" rx="2" transform="rotate(-11 209 203)"/><rect x="878" y="428" width="5" height="3" rx="2" transform="rotate(-52 878 428)"/><rect x="996" y="143" width="17" height="13" rx="2" transform="rotate(-19 996 143)"/><rect x="295" y="534" width="15" height="6" rx="2" transform="rotate(26 295 534)"/><rect x="342" y="154" width="4" height="11" rx="2" transform="rotate(50 342 154)"/><rect x="686" y="526" width="4" height="6" rx="2" transform="rotate(-3 686 526)"/><rect x="1035" y="532" width="11" height="6" rx="2" transform="rotate(-8 1035 532)"/><rect x="534" y="518" width="7" height="12" rx="2" transform="rotate(29 534 518)"/><rect x="890" y="431" width="15" height="7" rx="2" transform="rotate(-22 890 431)"/><rect x="392" y="436" width="5" height="5" rx="2" transform="rotate(30 392 436)"/><rect x="268" y="36" width="5" height="9" rx="2" transform="rotate(-21 268 36)"/><rect x="1061" y="493" width="22" height="6" rx="2" transform="rotate(-50 1061 493)"/><rect x="104" y="278" width="17" height="8" rx="2" transform="rotate(-32 104 278)"/><rect x="451" y="346" width="16" height="11" rx="2" transform="rotate(42 451 346)"/><rect x="719" y="68" width="19" height="6" rx="2" transform="rotate(8 719 68)"/><rect x="404" y="412" width="8" height="6" rx="2" transform="rotate(-31 404 412)"/><rect x="166" y="493" width="14" height="7" rx="2" transform="rotate(-12 166 493)"/><rect x="1074" y="283" width="8" height="12" rx="2" transform="rotate(18 1074 283)"/><rect x="1072" y="57" width="13" height="12" rx="2" transform="rotate(41 1072 57)"/><rect x="989" y="23" width="9" height="4" rx="2" transform="rotate(-37 989 23)"/><rect x="1053" y="325" width="21" height="7" rx="2" transform="rotate(44 1053 325)"/><rect x="486" y="145" width="18" height="13" rx="2" transform="rotate(-47 486 145)"/><rect x="645" y="346" width="8" height="7" rx="2" transform="rotate(-43 645 346)"/><rect x="221" y="142" width="15" height="10" rx="2" transform="rotate(-36 221 142)"/><rect x="12" y="183" width="16" height="5" rx="2" transform="rotate(-23 12 183)"/><rect x="220" y="444" width="14" height="4" rx="2" transform="rotate(-48 220 444)"/><rect x="428" y="307" width="16" height="4" rx="2" transform="rotate(-40 428 307)"/><rect x="752" y="229" width="9" height="6" rx="2" transform="rotate(54 752 229)"/><rect x="338" y="316" width="10" height="8" rx="2" transform="rotate(44 338 316)"/><rect x="1078" y="203" width="8" height="11" rx="2" transform="rotate(-36 1078 203)"/><rect x="6" y="503" width="12" height="12" rx="2" transform="rotate(-11 6 503)"/><rect x="955" y="257" width="7" height="3" rx="2" transform="rotate(6 955 257)"/><rect x="693" y="508" width="6" height="10" rx="2" transform="rotate(-15 693 508)"/><rect x="546" y="81" width="9" height="9" rx="2" transform="rotate(51 546 81)"/><rect x="118" y="274" width="18" height="14" rx="2" transform="rotate(-36 118 274)"/><rect x="137" y="526" width="22" height="8" rx="2" transform="rotate(-54 137 526)"/><rect x="1002" y="216" width="20" height="10" rx="2" transform="rotate(39 1002 216)"/><rect x="173" y="438" width="8" height="7" rx="2" transform="rotate(42 173 438)"/><rect x="897" y="102" width="8" height="7" rx="2" transform="rotate(2 897 102)"/><rect x="415" y="69" width="8" height="11" rx="2" transform="rotate(48 415 69)"/><rect x="44" y="314" width="18" height="3" rx="2" transform="rotate(41 44 314)"/><rect x="127" y="335" width="14" height="10" rx="2" transform="rotate(-23 127 335)"/><rect x="455" y="325" width="12" height="10" rx="2" transform="rotate(-6 455 325)"/><rect x="474" y="13" width="15" height="8" rx="2" transform="rotate(-32 474 13)"/><rect x="826" y="435" width="12" height="5" rx="2" transform="rotate(-3 826 435)"/><rect x="116" y="72" width="12" height="4" rx="2" transform="rotate(-7 116 72)"/><rect x="552" y="23" width="15" height="4" rx="2" transform="rotate(28 552 23)"/><rect x="841" y="285" width="5" height="9" rx="2" transform="rotate(-15 841 285)"/><rect x="1029" y="76" width="19" height="14" rx="2" transform="rotate(28 1029 76)"/><rect x="882" y="108" width="22" height="8" rx="2" transform="rotate(55 882 108)"/><rect x="991" y="92" width="18" height="13" rx="2" transform="rotate(-52 991 92)"/><rect x="380" y="422" width="7" height="13" rx="2" transform="rotate(-27 380 422)"/><rect x="883" y="80" width="13" height="13" rx="2" transform="rotate(-35 883 80)"/><rect x="284" y="282" width="10" height="3" rx="2" transform="rotate(-38 284 282)"/><rect x="174" y="523" width="16" height="13" rx="2" transform="rotate(-40 174 523)"/><rect x="849" y="64" width="14" height="10" rx="2" transform="rotate(-17 849 64)"/><rect x="945" y="310" width="14" height="13" rx="2" transform="rotate(-47 945 310)"/><rect x="1074" y="351" width="11" height="12" rx="2" transform="rotate(-28 1074 351)"/><rect x="1072" y="322" width="10" height="11" rx="2" transform="rotate(-7 1072 322)"/><rect x="191" y="415" width="5" height="12" rx="2" transform="rotate(-30 191 415)"/><rect x="692" y="549" width="15" height="10" rx="2" transform="rotate(-22 692 549)"/><rect x="2" y="19" width="7" height="10" rx="2" transform="rotate(-8 2 19)"/><rect x="555" y="500" width="6" height="5" rx="2" transform="rotate(18 555 500)"/><rect x="24" y="1" width="10" height="4" rx="2" transform="rotate(-17 24 1)"/><rect x="243" y="326" width="15" height="5" rx="2" transform="rotate(15 243 326)"/><rect x="514" y="75" width="21" height="6" rx="2" transform="rotate(-42 514 75)"/><rect x="104" y="356" width="20" height="12" rx="2" transform="rotate(-12 104 356)"/><rect x="286" y="6" width="16" height="9" rx="2" transform="rotate(-18 286 6)"/><rect x="699" y="248" width="21" height="11" rx="2" transform="rotate(-30 699 248)"/><rect x="978" y="25" width="14" height="7" rx="2" transform="rotate(-31 978 25)"/><rect x="63" y="435" width="4" height="9" rx="2" transform="rotate(53 63 435)"/><rect x="154" y="111" width="15" height="9" rx="2" transform="rotate(17 154 111)"/><rect x="880" y="97" width="10" height="6" rx="2" transform="rotate(-54 880 97)"/><rect x="962" y="437" width="17" height="3" rx="2" transform="rotate(41 962 437)"/><rect x="806" y="260" width="17" height="8" rx="2" transform="rotate(-33 806 260)"/><rect x="114" y="130" width="5" height="7" rx="2" transform="rotate(30 114 130)"/><rect x="752" y="472" width="17" height="6" rx="2" transform="rotate(6 752 472)"/><rect x="472" y="440" width="13" height="6" rx="2" transform="rotate(17 472 440)"/><rect x="1044" y="121" width="20" height="3" rx="2" transform="rotate(-29 1044 121)"/><rect x="255" y="415" width="21" height="11" rx="2" transform="rotate(-21 255 415)"/><rect x="952" y="183" width="8" height="13" rx="2" transform="rotate(16 952 183)"/><rect x="750" y="371" width="22" height="8" rx="2" transform="rotate(41 750 371)"/><rect x="755" y="478" width="12" height="11" rx="2" transform="rotate(8 755 478)"/><rect x="333" y="118" width="15" height="4" rx="2" transform="rotate(49 333 118)"/><rect x="156" y="15" width="6" height="13" rx="2" transform="rotate(-19 156 15)"/><rect x="153" y="16" width="5" height="11" rx="2" transform="rotate(16 153 16)"/><rect x="754" y="411" width="5" height="9" rx="2" transform="rotate(-16 754 411)"/><rect x="885" y="457" width="20" height="4" rx="2" transform="rotate(44 885 457)"/><rect x="989" y="527" width="6" height="5" rx="2" transform="rotate(-47 989 527)"/><rect x="37" y="473" width="19" height="10" rx="2" transform="rotate(39 37 473)"/><rect x="683" y="160" width="6" height="4" rx="2" transform="rotate(31 683 160)"/><rect x="222" y="178" width="12" height="3" rx="2" transform="rotate(-29 222 178)"/><rect x="306" y="399" width="11" height="7" rx="2" transform="rotate(56 306 399)"/><rect x="545" y="475" width="15" height="3" rx="2" transform="rotate(-10 545 475)"/><rect x="472" y="431" width="10" height="11" rx="2" transform="rotate(5 472 431)"/><rect x="234" y="481" width="6" height="12" rx="2" transform="rotate(-40 234 481)"/><rect x="1" y="113" width="18" height="14" rx="2" transform="rotate(-59 1 113)"/><rect x="531" y="274" width="18" height="5" rx="2" transform="rotate(-1 531 274)"/><rect x="376" y="464" width="9" height="13" rx="2" transform="rotate(-26 376 464)"/><rect x="232" y="390" width="13" height="4" rx="2" transform="rotate(16 232 390)"/><rect x="88" y="440" width="17" height="12" rx="2" transform="rotate(15 88 440)"/><rect x="385" y="224" width="11" height="13" rx="2" transform="rotate(-50 385 224)"/><rect x="961" y="14" width="8" height="6" rx="2" transform="rotate(48 961 14)"/><rect x="542" y="212" width="20" height="6" rx="2" transform="rotate(-5 542 212)"/><rect x="575" y="421" width="18" height="10" rx="2" transform="rotate(-18 575 421)"/><rect x="353" y="87" width="19" height="10" rx="2" transform="rotate(29 353 87)"/><rect x="183" y="245" width="18" height="9" rx="2" transform="rotate(-45 183 245)"/><rect x="500" y="494" width="8" height="5" rx="2" transform="rotate(-24 500 494)"/></g><g fill="#557a3a" opacity="0.35"><rect x="761" y="471" width="15" height="11" rx="4" transform="rotate(-30 761 471)"/><rect x="353" y="291" width="15" height="14" rx="4" transform="rotate(-37 353 291)"/><rect x="1055" y="407" width="13" height="24" rx="4" transform="rotate(-48 1055 407)"/><rect x="416" y="549" width="34" height="20" rx="4" transform="rotate(-8 416 549)"/><rect x="212" y="356" width="13" height="12" rx="4" transform="rotate(-13 212 356)"/><rect x="37" y="223" width="34" height="20" rx="4" transform="rotate(0 37 223)"/><rect x="684" y="259" width="14" height="18" rx="4" transform="rotate(-11 684 259)"/><rect x="802" y="507" width="23" height="18" rx="4" transform="rotate(30 802 507)"/><rect x="456" y="128" width="32" height="23" rx="4" transform="rotate(33 456 128)"/><rect x="757" y="476" width="30" height="19" rx="4" transform="rotate(-6 757 476)"/><rect x="339" y="351" width="13" height="15" rx="4" transform="rotate(34 339 351)"/><rect x="772" y="351" width="18" height="15" rx="4" transform="rotate(-5 772 351)"/><rect x="673" y="228" width="30" height="24" rx="4" transform="rotate(-38 673 228)"/><rect x="708" y="434" width="22" height="16" rx="4" transform="rotate(57 708 434)"/><rect x="41" y="303" width="15" height="21" rx="4" transform="rotate(53 41 303)"/><rect x="562" y="56" width="27" height="17" rx="4" transform="rotate(26 562 56)"/><rect x="554" y="357" width="35" height="17" rx="4" transform="rotate(-11 554 357)"/><rect x="1026" y="117" width="31" height="15" rx="4" transform="rotate(32 1026 117)"/><rect x="132" y="549" width="21" height="9" rx="4" transform="rotate(-27 132 549)"/><rect x="432" y="7" width="23" height="15" rx="4" transform="rotate(24 432 7)"/><rect x="381" y="148" width="17" height="21" rx="4" transform="rotate(53 381 148)"/><rect x="570" y="122" width="34" height="15" rx="4" transform="rotate(-35 570 122)"/><rect x="140" y="433" width="34" height="19" rx="4" transform="rotate(-4 140 433)"/><rect x="608" y="126" width="39" height="14" rx="4" transform="rotate(17 608 126)"/><rect x="886" y="455" width="24" height="13" rx="4" transform="rotate(6 886 455)"/><rect x="135" y="465" width="21" height="22" rx="4" transform="rotate(-28 135 465)"/><rect x="407" y="141" width="23" height="11" rx="4" transform="rotate(-60 407 141)"/><rect x="781" y="157" width="17" height="13" rx="4" transform="rotate(-2 781 157)"/><rect x="464" y="356" width="30" height="14" rx="4" transform="rotate(51 464 356)"/><rect x="925" y="32" width="35" height="23" rx="4" transform="rotate(34 925 32)"/><rect x="152" y="464" width="29" height="8" rx="4" transform="rotate(-59 152 464)"/><rect x="1030" y="366" width="18" height="10" rx="4" transform="rotate(-43 1030 366)"/><rect x="253" y="433" width="20" height="11" rx="4" transform="rotate(48 253 433)"/><rect x="857" y="94" width="37" height="18" rx="4" transform="rotate(34 857 94)"/><rect x="723" y="499" width="34" height="22" rx="4" transform="rotate(-36 723 499)"/><rect x="750" y="296" width="32" height="15" rx="4" transform="rotate(46 750 296)"/><rect x="601" y="148" width="17" height="10" rx="4" transform="rotate(-1 601 148)"/><rect x="63" y="261" width="14" height="16" rx="4" transform="rotate(-0 63 261)"/><rect x="584" y="481" width="10" height="22" rx="4" transform="rotate(-4 584 481)"/><rect x="609" y="371" width="35" height="14" rx="4" transform="rotate(-10 609 371)"/><rect x="1039" y="42" width="29" height="19" rx="4" transform="rotate(-57 1039 42)"/><rect x="660" y="381" width="38" height="14" rx="4" transform="rotate(58 660 381)"/><rect x="552" y="270" width="37" height="9" rx="4" transform="rotate(26 552 270)"/><rect x="677" y="189" width="36" height="14" rx="4" transform="rotate(-3 677 189)"/><rect x="569" y="430" width="16" height="15" rx="4" transform="rotate(-9 569 430)"/><rect x="599" y="461" width="19" height="22" rx="4" transform="rotate(-12 599 461)"/><rect x="545" y="152" width="25" height="25" rx="4" transform="rotate(19 545 152)"/><rect x="857" y="185" width="20" height="13" rx="4" transform="rotate(10 857 185)"/><rect x="687" y="438" width="11" height="20" rx="4" transform="rotate(46 687 438)"/><rect x="590" y="28" width="19" height="8" rx="4" transform="rotate(-37 590 28)"/><rect x="997" y="340" width="30" height="21" rx="4" transform="rotate(49 997 340)"/><rect x="662" y="344" width="29" height="20" rx="4" transform="rotate(12 662 344)"/><rect x="737" y="119" width="30" height="16" rx="4" transform="rotate(32 737 119)"/><rect x="110" y="101" width="11" height="21" rx="4" transform="rotate(50 110 101)"/><rect x="709" y="206" width="35" height="21" rx="4" transform="rotate(7 709 206)"/><rect x="279" y="169" width="23" height="13" rx="4" transform="rotate(-8 279 169)"/><rect x="694" y="521" width="12" height="18" rx="4" transform="rotate(-55 694 521)"/><rect x="129" y="452" width="27" height="24" rx="4" transform="rotate(-6 129 452)"/><rect x="15" y="216" width="28" height="24" rx="4" transform="rotate(58 15 216)"/><rect x="514" y="230" width="13" height="19" rx="4" transform="rotate(-35 514 230)"/></g><g fill="#50733a" opacity="0.55"><path d="M250.0 200.0 C255.0 190.0 288.3 185.0 300.0 190.0 C311.7 195.0 325.0 220.0 320.0 230.0 C315.0 240.0 281.7 255.0 270.0 250.0 C258.3 245.0 245.0 210.0 250.0 200.0Z"/><path d="M480.0 380.0 C483.3 366.7 510.0 353.3 520.0 360.0 C530.0 366.7 543.3 406.7 540.0 420.0 C536.7 433.3 510.0 446.7 500.0 440.0 C490.0 433.3 476.7 393.3 480.0 380.0Z"/><path d="M900.0 140.0 C913.3 131.7 983.3 138.3 1000.0 150.0 C1016.7 161.7 1013.3 201.7 1000.0 210.0 C986.7 218.3 936.7 211.7 920.0 200.0 C903.3 188.3 886.7 148.3 900.0 140.0Z"/></g><path fill="#3f5c2b" opacity="0.55" d="M540.0 95.0 C546.7 68.3 565.8 94.2 580.0 100.0 C594.2 105.8 615.0 118.3 625.0 130.0 C635.0 141.7 635.8 155.0 640.0 170.0 C644.2 185.0 650.0 201.7 650.0 220.0 C650.0 238.3 655.0 270.0 640.0 280.0 C625.0 290.0 576.7 283.3 560.0 280.0 C543.3 276.7 543.3 290.8 540.0 260.0 C536.7 229.2 533.3 121.7 540.0 95.0Z"/><g fill="#3c5829" opacity="0.8"><path d="M600.0 0.0 C608.3 -6.7 640.0 -6.7 650.0 0.0 C660.0 6.7 665.0 30.0 660.0 40.0 C655.0 50.0 630.0 60.0 620.0 60.0 C610.0 60.0 603.3 50.0 600.0 40.0 C596.7 30.0 591.7 6.7 600.0 0.0Z"/><path d="M175.0 68.0 C179.2 60.8 190.0 50.5 205.0 45.0 C220.0 39.5 254.2 29.2 265.0 35.0 C275.8 40.8 275.8 70.5 270.0 80.0 C264.2 89.5 245.0 90.7 230.0 92.0 C215.0 93.3 189.2 92.0 180.0 88.0 C170.8 84.0 170.8 75.2 175.0 68.0Z"/><path d="M385.0 115.0 C391.7 105.0 414.2 108.3 430.0 110.0 C445.8 111.7 471.7 112.5 480.0 125.0 C488.3 137.5 486.7 174.2 480.0 185.0 C473.3 195.8 455.0 192.5 440.0 190.0 C425.0 187.5 399.2 182.5 390.0 170.0 C380.8 157.5 378.3 125.0 385.0 115.0Z"/><path d="M400.0 15.0 C403.3 11.7 423.3 8.3 430.0 10.0 C436.7 11.7 443.3 21.7 440.0 25.0 C436.7 28.3 416.7 31.7 410.0 30.0 C403.3 28.3 396.7 18.3 400.0 15.0Z"/><path d="M500.0 120.0 C505.0 115.0 533.3 113.0 540.0 118.0 C546.7 123.0 545.0 145.0 540.0 150.0 C535.0 155.0 516.7 153.0 510.0 148.0 C503.3 143.0 495.0 125.0 500.0 120.0Z"/><path d="M690.0 185.0 C700.0 176.7 740.0 177.5 760.0 180.0 C780.0 182.5 801.7 188.3 810.0 200.0 C818.3 211.7 823.3 241.7 810.0 250.0 C796.7 258.3 748.3 253.3 730.0 250.0 C711.7 246.7 706.7 240.8 700.0 230.0 C693.3 219.2 680.0 193.3 690.0 185.0Z"/><path d="M600.0 130.0 C603.3 119.2 630.0 125.0 640.0 135.0 C650.0 145.0 663.3 179.2 660.0 190.0 C656.7 200.8 630.0 210.0 620.0 200.0 C610.0 190.0 596.7 140.8 600.0 130.0Z"/><path d="M855.0 60.0 C863.3 53.8 886.7 54.7 900.0 58.0 C913.3 61.3 929.2 71.3 935.0 80.0 C940.8 88.7 944.2 105.0 935.0 110.0 C925.8 115.0 894.2 112.5 880.0 110.0 C865.8 107.5 854.2 103.3 850.0 95.0 C845.8 86.7 846.7 66.2 855.0 60.0Z"/><path d="M845.0 105.0 C850.0 98.8 874.2 101.3 880.0 108.0 C885.8 114.7 885.0 138.8 880.0 145.0 C875.0 151.2 855.8 151.7 850.0 145.0 C844.2 138.3 840.0 111.2 845.0 105.0Z"/><path d="M812.0 62.0 C815.8 59.2 831.2 57.5 835.0 60.0 C838.8 62.5 838.8 74.2 835.0 77.0 C831.2 79.8 815.8 79.5 812.0 77.0 C808.2 74.5 808.2 64.8 812.0 62.0Z"/><path d="M0.0 330.0 C6.7 319.2 28.3 320.0 40.0 320.0 C51.7 320.0 65.8 321.7 70.0 330.0 C74.2 338.3 71.7 361.7 65.0 370.0 C58.3 378.3 40.8 377.5 30.0 380.0 C19.2 382.5 5.0 393.3 0.0 385.0 C-5.0 376.7 -6.7 340.8 0.0 330.0Z"/><path d="M545.0 290.0 C551.7 280.8 582.5 280.0 590.0 290.0 C597.5 300.0 596.7 340.8 590.0 350.0 C583.3 359.2 557.5 355.0 550.0 345.0 C542.5 335.0 538.3 299.2 545.0 290.0Z"/><path d="M590.0 370.0 C594.2 364.2 615.0 364.2 620.0 370.0 C625.0 375.8 624.2 399.2 620.0 405.0 C615.8 410.8 600.0 410.8 595.0 405.0 C590.0 399.2 585.8 375.8 590.0 370.0Z"/><path d="M720.0 420.0 C724.2 408.3 751.7 416.7 760.0 430.0 C768.3 443.3 774.2 488.3 770.0 500.0 C765.8 511.7 743.3 513.3 735.0 500.0 C726.7 486.7 715.8 431.7 720.0 420.0Z"/><path d="M250.0 350.0 C253.3 331.7 266.7 330.0 270.0 350.0 C273.3 370.0 273.3 451.7 270.0 470.0 C266.7 488.3 253.3 480.0 250.0 460.0 C246.7 440.0 246.7 368.3 250.0 350.0Z"/><path d="M0.0 180.0 C6.7 174.2 30.0 171.7 40.0 175.0 C50.0 178.3 63.3 193.3 60.0 200.0 C56.7 206.7 30.0 213.3 20.0 215.0 C10.0 216.7 3.3 215.8 0.0 210.0 C-3.3 204.2 -6.7 185.8 0.0 180.0Z"/><path d="M280.0 440.0 C290.0 434.2 323.3 438.3 330.0 445.0 C336.7 451.7 330.0 474.2 320.0 480.0 C310.0 485.8 276.7 486.7 270.0 480.0 C263.3 473.3 270.0 445.8 280.0 440.0Z"/></g><g fill="#21344b" stroke="#21344b" stroke-width="1" stroke-linejoin="round"><path d="M342 190 L350 176 L368 175 L378 190 L376 215 L360 222 L345 212Z"/><path d="M425 80 L445 74 L470 76 L490 80 L492 88 L470 88 L445 90 L425 90Z"/><path d="M88 134 L98 134 L100 145 L92 146Z"/><path d="M105 134 L113 135 L111 144 L105 143Z"/><path d="M123 149 L130 150 L130 157 L124 158Z"/><path d="M134 168 L144 167 L152 170 L150 178 L140 179 L134 176Z"/><path d="M144 185 L153 184 L154 191 L146 192Z"/><path d="M157 158 L166 157 L174 166 L176 184 L166 186 L158 176Z"/><path d="M154 181 L168 182 L185 202 L186 214 L172 214 L158 200Z"/><path d="M160 215 L176 213 L196 246 L194 262 L184 258 L166 232Z"/><path d="M178 214 L188 216 L208 248 L213 270 L204 270 L194 246Z"/><path d="M200 208 L214 206 L216 222 L203 224Z"/><path d="M223 221 L240 219 L244 235 L236 246 L224 243Z"/><path d="M254 244 L272 241 L276 262 L262 270 L252 258Z"/><path d="M246 266 L254 264 L256 276 L248 276Z"/><path d="M166 263 L176 261 L177 270 L167 272Z"/><path d="M116 287 L128 283 L140 300 L146 320 L134 324 L118 304Z"/><path d="M132 290 L142 288 L156 306 L152 318Z"/><path d="M150 310 L166 306 L180 312 L176 323 L158 324Z"/><path d="M46 288 L56 288 L54 296 L46 296Z"/><path d="M603 470 L618 472 L620 490 L606 488Z"/><path d="M270 248 L290 250 L285 272 L270 270Z"/><path d="M525 545 L540 545 L540 556 L525 556Z"/><path d="M582 28 L590 26 L592 36 L584 38Z"/><path d="M590 40 L596 40 L596 48 L590 48Z"/></g><g fill="none" stroke="#2a4434" stroke-width="2.2" stroke-linecap="round" stroke-linejoin="round"><path d="M500.0 95.0 C495.0 95.8 481.7 97.2 470.0 100.0 C458.3 102.8 441.7 107.3 430.0 112.0 C418.3 116.7 410.0 123.7 400.0 128.0 C390.0 132.3 377.5 134.3 370.0 138.0 C362.5 141.7 358.3 145.5 355.0 150.0 C351.7 154.5 352.5 159.2 350.0 165.0 C347.5 170.8 343.3 176.7 340.0 185.0 C336.7 193.3 334.2 205.8 330.0 215.0 C325.8 224.2 318.0 229.2 315.0 240.0 C312.0 250.8 314.5 268.3 312.0 280.0 C309.5 291.7 307.0 300.8 300.0 310.0 C293.0 319.2 280.0 328.3 270.0 335.0 C260.0 341.7 248.3 348.3 240.0 350.0 C231.7 351.7 228.3 347.3 220.0 345.0 C211.7 342.7 200.0 337.2 190.0 336.0 C180.0 334.8 168.8 336.8 160.0 338.0 C151.2 339.2 142.0 344.2 137.0 343.0 C132.0 341.8 136.2 333.7 130.0 331.0 C123.8 328.3 108.3 326.7 100.0 327.0 C91.7 327.3 85.0 330.0 80.0 333.0 C75.0 336.0 78.3 340.5 70.0 345.0 C61.7 349.5 41.7 352.5 30.0 360.0 C18.3 367.5 5.0 385.0 0.0 390.0"/><path d="M498.0 95.0 C497.0 99.2 489.2 111.5 492.0 120.0 C494.8 128.5 509.5 139.8 515.0 146.0 C520.5 152.2 520.2 151.2 525.0 157.0 C529.8 162.8 539.8 173.2 544.0 181.0 C548.2 188.8 545.2 197.5 550.0 204.0 C554.8 210.5 565.5 217.3 573.0 220.0 C580.5 222.7 589.5 216.5 595.0 220.0 C600.5 223.5 601.5 234.8 606.0 241.0 C610.5 247.2 618.7 249.5 622.0 257.0 C625.3 264.5 622.8 275.2 626.0 286.0 C629.2 296.8 638.5 316.0 641.0 322.0"/><path d="M579.0 105.0 C578.7 106.7 574.3 104.3 577.0 115.0 C579.7 125.7 587.5 158.0 595.0 169.0 C602.5 180.0 616.8 176.5 622.0 181.0 C627.2 185.5 627.7 191.8 626.0 196.0 C624.3 200.2 614.3 204.3 612.0 206.0"/><path d="M566.0 20.0 C570.0 19.7 582.7 17.2 590.0 18.0 C597.3 18.8 609.2 19.7 610.0 25.0 C610.8 30.3 598.3 41.7 595.0 50.0 C591.7 58.3 588.3 67.5 590.0 75.0 C591.7 82.5 606.7 89.2 605.0 95.0 C603.3 100.8 584.2 104.2 580.0 110.0 C575.8 115.8 578.3 123.3 580.0 130.0 C581.7 136.7 586.7 143.3 590.0 150.0 C593.3 156.7 595.0 163.3 600.0 170.0 C605.0 176.7 615.8 178.3 620.0 190.0 C624.2 201.7 623.3 225.0 625.0 240.0 C626.7 255.0 629.2 273.3 630.0 280.0"/><path d="M610.0 280.0 C614.2 284.2 629.2 295.8 635.0 305.0 C640.8 314.2 642.5 324.2 645.0 335.0 C647.5 345.8 645.8 359.2 650.0 370.0 C654.2 380.8 664.5 390.0 670.0 400.0 C675.5 410.0 681.7 420.0 683.0 430.0 C684.3 440.0 680.2 451.7 678.0 460.0 C675.8 468.3 674.7 474.2 670.0 480.0 C665.3 485.8 658.3 490.0 650.0 495.0 C641.7 500.0 630.0 507.0 620.0 510.0 C610.0 513.0 596.7 513.8 590.0 513.0 C583.3 512.2 585.0 507.2 580.0 505.0 C575.0 502.8 568.3 494.2 560.0 500.0 C551.7 505.8 536.7 530.7 530.0 540.0 C523.3 549.3 521.7 553.3 520.0 556.0"/><path d="M920.0 278.0 C922.5 282.5 930.8 298.8 935.0 305.0 C939.2 311.2 945.0 310.0 945.0 315.0 C945.0 320.0 941.7 331.7 935.0 335.0 C928.3 338.3 908.3 330.8 905.0 335.0 C901.7 339.2 915.0 349.2 915.0 360.0 C915.0 370.8 908.3 390.0 905.0 400.0 C901.7 410.0 894.5 412.5 895.0 420.0 C895.5 427.5 907.2 436.7 908.0 445.0 C908.8 453.3 898.0 464.5 900.0 470.0 C902.0 475.5 913.3 478.0 920.0 478.0 C926.7 478.0 936.7 471.3 940.0 470.0"/><path d="M38.0 358.0 C38.7 360.8 39.2 371.3 42.0 375.0 C44.8 378.7 51.2 380.8 55.0 380.0 C58.8 379.2 62.5 375.0 65.0 370.0 C67.5 365.0 69.2 353.3 70.0 350.0"/><path d="M215.0 530.0 C219.2 528.7 230.8 522.3 240.0 522.0 C249.2 521.7 258.3 525.0 270.0 528.0 C281.7 531.0 298.3 536.3 310.0 540.0 C321.7 543.7 335.0 548.3 340.0 550.0"/><path d="M517.0 0.0 C516.7 5.0 515.8 20.0 515.0 30.0 C514.2 40.0 512.5 55.0 512.0 60.0"/></g><g stroke-linecap="round"><path d="M429 391 L446 459" stroke="#5f8f45" stroke-width="9" opacity="0.8"/><path d="M417 437 L471 400" stroke="#5f8f45" stroke-width="8" opacity="0.8"/><path d="M429 391 L446 459 M417 437 L471 400" stroke="#86b86a" stroke-width="1.3" fill="none"/></g><g fill="none" stroke="#74a5ad" stroke-width="1.5" stroke-linecap="round" stroke-linejoin="round" opacity="0.9"><path d="M110.0 96.0 C117.5 92.3 139.2 82.0 155.0 74.0 C170.8 66.0 185.8 57.0 205.0 48.0 C224.2 39.0 248.3 26.3 270.0 20.0 C291.7 13.7 318.7 11.8 335.0 10.0 C351.3 8.2 357.8 10.7 368.0 9.0 C378.2 7.3 391.3 1.5 396.0 0.0"/><path d="M0.0 81.0 C6.7 82.2 28.3 85.7 40.0 88.0 C51.7 90.3 58.7 93.7 70.0 95.0 C81.3 96.3 93.0 93.0 108.0 96.0 C123.0 99.0 151.3 110.2 160.0 113.0"/><path d="M8.0 0.0 C8.0 2.3 1.8 10.3 8.0 14.0 C14.2 17.7 36.3 18.5 45.0 22.0 C53.7 25.5 55.0 30.8 60.0 35.0 C65.0 39.2 73.0 42.8 75.0 47.0 C77.0 51.2 77.0 53.7 72.0 60.0 C67.0 66.3 55.7 75.8 45.0 85.0 C34.3 94.2 15.5 109.2 8.0 115.0 C0.5 120.8 1.3 119.2 0.0 120.0"/><path d="M100.0 0.0 C99.5 2.3 95.0 7.3 97.0 14.0 C99.0 20.7 109.0 32.3 112.0 40.0 C115.0 47.7 115.0 53.3 115.0 60.0 C115.0 66.7 113.2 74.0 112.0 80.0 C110.8 86.0 108.7 93.3 108.0 96.0"/><path d="M80.0 163.0 C75.8 169.2 64.2 188.0 55.0 200.0 C45.8 212.0 34.2 224.7 25.0 235.0 C15.8 245.3 4.2 257.5 0.0 262.0"/><path d="M0.0 147.0 C4.2 145.0 18.3 138.5 25.0 135.0 C31.7 131.5 32.5 128.5 40.0 126.0 C47.5 123.5 65.0 121.0 70.0 120.0"/><path d="M134.0 204.0 C141.7 205.8 163.2 214.3 180.0 215.0 C196.8 215.7 222.0 208.8 235.0 208.0 C248.0 207.2 254.2 205.5 258.0 210.0 C261.8 214.5 260.2 227.5 258.0 235.0 C255.8 242.5 248.8 247.5 245.0 255.0 C241.2 262.5 237.5 272.5 235.0 280.0 C232.5 287.5 230.8 296.7 230.0 300.0"/><path d="M270.0 160.0 C268.3 161.3 261.3 163.0 260.0 168.0 C258.7 173.0 264.5 183.8 262.0 190.0 C259.5 196.2 247.8 202.5 245.0 205.0"/><path d="M158.0 74.0 C157.8 76.3 160.0 83.2 157.0 88.0 C154.0 92.8 142.8 100.5 140.0 103.0"/><path d="M368.0 9.0 C364.7 14.2 351.8 29.8 348.0 40.0 C344.2 50.2 346.3 61.7 345.0 70.0 C343.7 78.3 339.2 85.0 340.0 90.0 C340.8 95.0 348.0 95.0 350.0 100.0 C352.0 105.0 352.3 115.5 352.0 120.0 C351.7 124.5 346.3 124.8 348.0 127.0 C349.7 129.2 359.3 129.2 362.0 133.0 C364.7 136.8 364.0 144.7 364.0 150.0 C364.0 155.3 359.3 160.8 362.0 165.0 C364.7 169.2 372.0 170.8 380.0 175.0 C388.0 179.2 399.2 185.3 410.0 190.0 C420.8 194.7 435.0 200.5 445.0 203.0 C455.0 205.5 460.8 206.0 470.0 205.0 C479.2 204.0 488.3 198.2 500.0 197.0 C511.7 195.8 526.7 196.7 540.0 198.0 C553.3 199.3 567.8 203.8 580.0 205.0 C592.2 206.2 607.5 205.0 613.0 205.0"/><path d="M348.0 127.0 C343.3 127.5 328.0 128.3 320.0 130.0 C312.0 131.7 308.3 132.0 300.0 137.0 C291.7 142.0 275.0 156.2 270.0 160.0"/><path d="M281.0 28.0 C281.3 32.8 281.2 49.3 283.0 57.0 C284.8 64.7 288.0 66.8 292.0 74.0 C296.0 81.2 304.5 95.7 307.0 100.0"/><path d="M316.0 103.0 C316.2 105.5 312.0 114.0 317.0 118.0 C322.0 122.0 341.2 125.5 346.0 127.0"/><path d="M382.0 175.0 C382.5 180.8 383.2 198.3 385.0 210.0 C386.8 221.7 390.5 236.3 393.0 245.0 C395.5 253.7 400.5 256.2 400.0 262.0 C399.5 267.8 391.7 277.0 390.0 280.0"/><path d="M520.0 82.0 C523.3 77.5 533.3 62.0 540.0 55.0 C546.7 48.0 556.7 42.5 560.0 40.0"/><path d="M400.0 94.0 C401.7 90.0 400.0 75.3 410.0 70.0 C420.0 64.7 446.7 64.2 460.0 62.0 C473.3 59.8 476.7 57.8 490.0 57.0 C503.3 56.2 531.7 57.0 540.0 57.0"/><path d="M505.0 210.0 C510.8 214.2 530.0 226.7 540.0 235.0 C550.0 243.3 558.3 252.5 565.0 260.0 C571.7 267.5 577.5 276.7 580.0 280.0"/><path d="M620.0 10.0 C620.8 12.0 619.2 16.2 625.0 22.0 C630.8 27.8 645.8 35.3 655.0 45.0 C664.2 54.7 669.2 70.8 680.0 80.0 C690.8 89.2 710.0 95.0 720.0 100.0 C730.0 105.0 730.0 105.0 740.0 110.0 C750.0 115.0 768.3 122.5 780.0 130.0 C791.7 137.5 798.3 148.3 810.0 155.0 C821.7 161.7 843.3 167.5 850.0 170.0"/><path d="M720.0 167.0 C721.7 160.8 725.8 140.3 730.0 130.0 C734.2 119.7 737.5 112.0 745.0 105.0 C752.5 98.0 764.2 95.2 775.0 88.0 C785.8 80.8 799.5 68.0 810.0 62.0 C820.5 56.0 829.7 51.5 838.0 52.0 C846.3 52.5 849.7 62.0 860.0 65.0 C870.3 68.0 893.3 69.2 900.0 70.0"/><path d="M655.0 45.0 C653.3 46.2 647.5 47.0 645.0 52.0 C642.5 57.0 642.5 69.5 640.0 75.0 C637.5 80.5 632.0 80.0 630.0 85.0 C628.0 90.0 626.3 96.7 628.0 105.0 C629.7 113.3 638.0 130.0 640.0 135.0"/><path d="M613.0 205.0 C615.0 208.3 620.5 217.5 625.0 225.0 C629.5 232.5 634.2 240.8 640.0 250.0 C645.8 259.2 656.7 275.0 660.0 280.0"/><path d="M585.0 205.0 C585.8 210.0 587.5 225.8 590.0 235.0 C592.5 244.2 596.7 252.5 600.0 260.0 C603.3 267.5 608.3 276.7 610.0 280.0"/><path d="M810.0 103.0 C816.7 102.5 835.0 99.7 850.0 100.0 C865.0 100.3 885.0 102.3 900.0 105.0 C915.0 107.7 925.0 109.7 940.0 116.0 C955.0 122.3 976.7 135.7 990.0 143.0 C1003.3 150.3 1008.3 154.2 1020.0 160.0 C1031.7 165.8 1049.7 173.8 1060.0 178.0 C1070.3 182.2 1078.3 183.8 1082.0 185.0"/><path d="M852.0 101.0 C852.2 98.3 850.0 91.0 853.0 85.0 C856.0 79.0 863.0 71.2 870.0 65.0 C877.0 58.8 886.7 53.8 895.0 48.0 C903.3 42.2 915.8 33.0 920.0 30.0"/><path d="M910.0 0.0 C911.7 2.5 915.8 8.3 920.0 15.0 C924.2 21.7 930.0 33.3 935.0 40.0 C940.0 46.7 945.8 48.3 950.0 55.0 C954.2 61.7 955.0 71.7 960.0 80.0 C965.0 88.3 974.2 100.3 980.0 105.0 C985.8 109.7 993.3 103.8 995.0 108.0 C996.7 112.2 991.7 123.8 990.0 130.0 C988.3 136.2 988.3 141.7 985.0 145.0 C981.7 148.3 975.8 145.8 970.0 150.0 C964.2 154.2 956.7 163.3 950.0 170.0 C943.3 176.7 933.3 186.7 930.0 190.0"/><path d="M985.0 0.0 C985.0 3.3 986.7 15.0 985.0 20.0 C983.3 25.0 976.2 25.0 975.0 30.0 C973.8 35.0 981.3 45.5 978.0 50.0 C974.7 54.5 958.8 55.8 955.0 57.0"/><path d="M975.0 30.0 C979.2 32.5 989.2 39.7 1000.0 45.0 C1010.8 50.3 1030.0 56.5 1040.0 62.0 C1050.0 67.5 1053.0 72.5 1060.0 78.0 C1067.0 83.5 1078.3 92.2 1082.0 95.0"/><path d="M1068.0 0.0 C1066.3 3.0 1058.5 11.3 1058.0 18.0 C1057.5 24.7 1062.7 33.0 1065.0 40.0 C1067.3 47.0 1069.2 55.0 1072.0 60.0 C1074.8 65.0 1080.3 68.3 1082.0 70.0"/><path d="M855.0 205.0 C854.7 210.8 853.8 229.2 853.0 240.0 C852.2 250.8 850.8 260.0 850.0 270.0 C849.2 280.0 848.3 295.0 848.0 300.0"/><path d="M810.0 230.0 C812.5 229.7 821.3 230.5 825.0 228.0 C828.7 225.5 827.8 218.0 832.0 215.0 C836.2 212.0 847.0 210.8 850.0 210.0"/><path d="M968.0 243.0 C973.3 242.5 989.7 241.3 1000.0 240.0 C1010.3 238.7 1016.3 236.3 1030.0 235.0 C1043.7 233.7 1073.3 232.5 1082.0 232.0"/><path d="M0.0 281.0 C8.3 281.5 30.8 282.8 50.0 284.0 C69.2 285.2 100.8 288.7 115.0 288.0 C129.2 287.3 131.7 281.3 135.0 280.0"/><path d="M92.0 470.0 C100.0 467.5 126.2 459.2 140.0 455.0 C153.8 450.8 169.2 446.7 175.0 445.0"/><path d="M185.0 410.0 C192.5 409.2 219.2 408.3 230.0 405.0 C240.8 401.7 243.3 394.2 250.0 390.0 C256.7 385.8 261.7 384.7 270.0 380.0 C278.3 375.3 295.0 365.0 300.0 362.0"/><path d="M180.0 310.0 C183.3 306.7 191.7 295.0 200.0 290.0 C208.3 285.0 225.0 281.7 230.0 280.0"/><path d="M270.0 365.0 C273.3 363.3 280.0 364.2 290.0 355.0 C300.0 345.8 318.3 321.7 330.0 310.0 C341.7 298.3 353.0 290.3 360.0 285.0 C367.0 279.7 367.0 281.8 372.0 278.0 C377.0 274.2 387.0 264.7 390.0 262.0"/><path d="M270.0 485.0 C275.5 486.5 293.0 489.8 303.0 494.0 C313.0 498.2 319.7 507.0 330.0 510.0 C340.3 513.0 351.7 513.7 365.0 512.0 C378.3 510.3 395.8 502.0 410.0 500.0 C424.2 498.0 436.7 500.0 450.0 500.0 C463.3 500.0 475.0 500.0 490.0 500.0 C505.0 500.0 525.0 499.2 540.0 500.0 C555.0 500.8 573.3 504.2 580.0 505.0"/><path d="M270.0 430.0 C275.0 430.3 290.0 430.8 300.0 432.0 C310.0 433.2 319.2 436.8 330.0 437.0 C340.8 437.2 353.3 433.7 365.0 433.0 C376.7 432.3 390.8 431.0 400.0 433.0 C409.2 435.0 415.8 438.8 420.0 445.0 C424.2 451.2 423.8 461.7 425.0 470.0 C426.2 478.3 426.7 490.8 427.0 495.0"/><path d="M365.0 438.0 C364.5 445.0 363.7 466.3 362.0 480.0 C360.3 493.7 356.2 513.3 355.0 520.0"/><path d="M420.0 278.0 C422.0 281.7 428.7 288.8 432.0 300.0 C435.3 311.2 434.5 333.3 440.0 345.0 C445.5 356.7 458.3 360.8 465.0 370.0 C471.7 379.2 475.0 391.7 480.0 400.0 C485.0 408.3 492.5 416.7 495.0 420.0"/><path d="M465.0 370.0 C467.5 367.5 472.5 361.7 480.0 355.0 C487.5 348.3 500.0 338.3 510.0 330.0 C520.0 321.7 531.7 311.7 540.0 305.0 C548.3 298.3 556.7 292.5 560.0 290.0"/><path d="M465.0 370.0 C459.2 372.5 440.8 380.0 430.0 385.0 C419.2 390.0 410.0 393.3 400.0 400.0 C390.0 406.7 375.8 418.3 370.0 425.0 C364.2 431.7 365.8 437.5 365.0 440.0"/><path d="M560.0 278.0 C560.3 281.7 560.3 288.8 562.0 300.0 C563.7 311.2 569.8 330.8 570.0 345.0 C570.2 359.2 565.5 372.5 563.0 385.0 C560.5 397.5 558.0 407.5 555.0 420.0 C552.0 432.5 547.5 450.8 545.0 460.0 C542.5 469.2 540.8 472.5 540.0 475.0"/><path d="M615.0 278.0 C615.8 283.3 617.8 296.3 620.0 310.0 C622.2 323.7 627.2 345.0 628.0 360.0 C628.8 375.0 628.0 390.0 625.0 400.0 C622.0 410.0 612.2 414.2 610.0 420.0 C607.8 425.8 614.0 431.2 612.0 435.0 C610.0 438.8 601.7 438.0 598.0 443.0 C594.3 448.0 593.8 459.3 590.0 465.0 C586.2 470.7 583.3 474.2 575.0 477.0 C566.7 479.8 545.8 481.2 540.0 482.0"/><path d="M540.0 408.0 C543.3 409.2 551.7 409.7 560.0 415.0 C568.3 420.3 585.0 435.8 590.0 440.0"/><path d="M580.0 280.0 C588.3 281.3 610.0 287.2 630.0 288.0 C650.0 288.8 685.0 286.7 700.0 285.0 C715.0 283.3 716.7 279.2 720.0 278.0"/><path d="M640.0 330.0 C642.5 328.0 645.0 320.0 655.0 318.0 C665.0 316.0 687.5 317.2 700.0 318.0 C712.5 318.8 720.5 323.0 730.0 323.0 C739.5 323.0 752.0 322.7 757.0 318.0 C762.0 313.3 752.8 294.7 760.0 295.0 C767.2 295.3 791.7 313.3 800.0 320.0 C808.3 326.7 808.3 332.5 810.0 335.0"/><path d="M810.0 445.0 C806.7 446.7 797.5 450.0 790.0 455.0 C782.5 460.0 773.3 465.8 765.0 475.0 C756.7 484.2 745.8 500.8 740.0 510.0 C734.2 519.2 731.2 522.3 730.0 530.0 C728.8 537.7 732.5 551.7 733.0 556.0"/><path d="M730.0 545.0 C735.0 543.7 748.3 537.8 760.0 537.0 C771.7 536.2 791.7 538.7 800.0 540.0 C808.3 541.3 808.3 544.2 810.0 545.0"/><path d="M810.0 303.0 C815.0 306.7 830.8 313.0 840.0 325.0 C849.2 337.0 858.3 361.7 865.0 375.0 C871.7 388.3 875.5 395.8 880.0 405.0 C884.5 414.2 887.0 423.3 892.0 430.0 C897.0 436.7 903.3 442.5 910.0 445.0 C916.7 447.5 928.3 445.0 932.0 445.0"/><path d="M810.0 448.0 C814.2 445.8 821.3 437.5 835.0 435.0 C848.7 432.5 882.5 433.3 892.0 433.0"/><path d="M935.0 438.0 C939.2 439.7 948.3 445.2 960.0 448.0 C971.7 450.8 995.0 449.7 1005.0 455.0 C1015.0 460.3 1014.2 474.2 1020.0 480.0 C1025.8 485.8 1029.7 486.7 1040.0 490.0 C1050.3 493.3 1075.0 498.3 1082.0 500.0"/><path d="M975.0 368.0 C979.2 371.3 994.2 381.8 1000.0 388.0 C1005.8 394.2 1009.2 399.7 1010.0 405.0 C1010.8 410.3 1005.8 411.7 1005.0 420.0 C1004.2 428.3 1005.0 449.2 1005.0 455.0"/><path d="M1000.0 383.0 C1005.0 381.2 1020.3 374.2 1030.0 372.0 C1039.7 369.8 1053.8 374.5 1058.0 370.0 C1062.2 365.5 1056.0 351.7 1055.0 345.0 C1054.0 338.3 1056.2 332.0 1052.0 330.0 C1047.8 328.0 1036.2 334.7 1030.0 333.0 C1023.8 331.3 1020.8 322.5 1015.0 320.0 C1009.2 317.5 998.3 318.3 995.0 318.0"/><path d="M1048.0 296.0 L1050.0 330.0"/><path d="M960.0 278.0 C965.0 280.0 984.2 285.5 990.0 290.0 C995.8 294.5 995.8 300.3 995.0 305.0 C994.2 309.7 986.7 315.8 985.0 318.0"/><path d="M0.0 460.0 L12.0 465.0"/><path d="M810.0 160.0 C813.3 163.3 823.3 172.5 830.0 180.0 C836.7 187.5 846.7 200.8 850.0 205.0"/><path d="M540.0 235.0 C544.2 239.2 558.3 252.5 565.0 260.0 C571.7 267.5 577.5 276.7 580.0 280.0"/><path d="M816.0 51.0 C823.5 53.8 847.8 68.2 861.0 68.0 C874.2 67.8 889.3 53.0 895.0 50.0"/><path d="M895.0 48.0 C895.0 42.8 892.5 24.0 895.0 17.0 C897.5 10.0 906.7 8.8 910.0 6.0 C913.3 3.2 914.2 1.0 915.0 0.0"/><path d="M725.0 242.0 C734.5 242.0 765.5 244.5 782.0 242.0 C798.5 239.5 812.2 233.2 824.0 227.0 C835.8 220.8 848.2 208.7 853.0 205.0"/><path d="M611.0 205.0 C618.2 201.2 641.2 186.8 654.0 182.0 C666.8 177.2 676.2 177.8 688.0 176.0 C699.8 174.2 718.8 171.8 725.0 171.0"/><path d="M611.0 205.0 C620.5 207.8 651.3 216.8 668.0 222.0 C684.7 227.2 701.5 232.7 711.0 236.0 C720.5 239.3 722.7 241.0 725.0 242.0"/><path d="M560.0 110.0 C565.0 113.3 583.3 121.7 590.0 130.0 C596.7 138.3 596.5 147.5 600.0 160.0 C603.5 172.5 609.2 197.5 611.0 205.0"/><path d="M600.0 160.0 C605.0 158.3 620.0 150.0 630.0 150.0 C640.0 150.0 655.0 158.3 660.0 160.0"/><path d="M834.0 52.0 C836.5 49.5 844.3 42.0 849.0 37.0 C853.7 32.0 857.7 24.8 862.0 22.0 C866.3 19.2 869.8 20.0 875.0 20.0 C880.2 20.0 890.0 21.7 893.0 22.0"/><path d="M1058.0 78.0 C1058.0 79.5 1054.0 84.0 1058.0 87.0 C1062.0 90.0 1078.0 94.5 1082.0 96.0"/><path d="M1060.0 17.0 C1061.5 20.7 1067.2 32.0 1069.0 39.0 C1070.8 46.0 1070.7 55.7 1071.0 59.0"/><path d="M810.0 250.0 L851.0 259.0"/><path d="M680.0 80.0 C683.3 76.7 690.0 65.8 700.0 60.0 C710.0 54.2 725.0 50.0 740.0 45.0 C755.0 40.0 776.7 35.8 790.0 30.0 C803.3 24.2 815.0 13.3 820.0 10.0"/><path d="M760.0 130.0 C765.0 133.3 780.0 145.0 790.0 150.0 C800.0 155.0 815.0 158.3 820.0 160.0"/><path d="M700.0 300.0 C698.3 306.7 690.0 324.2 690.0 340.0 C690.0 355.8 698.3 385.8 700.0 395.0"/><path d="M860.0 300.0 C866.7 303.3 887.5 313.3 900.0 320.0 C912.5 326.7 929.2 336.7 935.0 340.0"/><path d="M650.0 400.0 C645.0 406.7 626.7 428.3 620.0 440.0 C613.3 451.7 611.7 465.0 610.0 470.0"/><path d="M760.0 480.0 C766.7 478.3 788.3 470.0 800.0 470.0 C811.7 470.0 818.3 475.0 830.0 480.0 C841.7 485.0 858.3 491.7 870.0 500.0 C881.7 508.3 891.7 520.7 900.0 530.0 C908.3 539.3 916.7 551.7 920.0 556.0"/><path d="M480.0 300.0 C486.7 298.3 506.7 290.0 520.0 290.0 C533.3 290.0 553.3 298.3 560.0 300.0"/><path d="M300.0 170.0 C305.0 175.0 321.7 190.0 330.0 200.0 C338.3 210.0 341.7 220.0 350.0 230.0 C358.3 240.0 375.0 255.0 380.0 260.0"/><path d="M200.0 130.0 C205.0 133.3 220.0 145.0 230.0 150.0 C240.0 155.0 255.0 158.3 260.0 160.0"/><path d="M20.0 300.0 C26.7 301.7 46.7 306.7 60.0 310.0 C73.3 313.3 93.3 318.3 100.0 320.0"/><path d="M60.0 400.0 C66.7 396.7 86.7 385.0 100.0 380.0 C113.3 375.0 133.3 371.7 140.0 370.0"/><path d="M200.0 520.0 C206.7 523.3 230.0 534.0 240.0 540.0 C250.0 546.0 256.7 553.3 260.0 556.0"/><path d="M70.0 95.0 C69.7 96.7 67.7 101.2 68.0 105.0 C68.3 108.8 70.8 113.8 72.0 118.0 C73.2 122.2 74.5 128.0 75.0 130.0"/><path d="M108.0 96.0 C108.5 98.0 110.8 103.7 111.0 108.0 C111.2 112.3 110.8 118.3 109.0 122.0 C107.2 125.7 101.5 128.7 100.0 130.0"/><path d="M40.0 126.0 C39.7 128.3 36.3 136.0 38.0 140.0 C39.7 144.0 48.0 148.3 50.0 150.0"/></g><g fill="none" stroke="#4f8083" stroke-width="3.3" stroke-linecap="round" stroke-linejoin="round" opacity="0.9"><path d="M0.0 122.0 C3.7 122.3 9.5 122.2 22.0 124.0 C34.5 125.8 60.5 131.8 75.0 133.0 C89.5 134.2 96.2 134.3 109.0 131.0 C121.8 127.7 137.5 118.5 152.0 113.0 C166.5 107.5 183.2 101.4 196.0 98.0 C208.8 94.6 216.7 93.2 229.0 92.5 C241.3 91.8 256.5 92.6 270.0 94.0 C283.5 95.4 297.0 100.2 310.0 101.0 C323.0 101.8 333.0 100.2 348.0 99.0 C363.0 97.8 383.0 95.7 400.0 94.0 C417.0 92.3 436.7 90.2 450.0 89.0 C463.3 87.8 470.0 86.5 480.0 87.0 C490.0 87.5 500.0 90.3 510.0 92.0 C520.0 93.7 535.0 96.2 540.0 97.0"/><path d="M448.0 0.0 C450.8 5.0 459.7 21.7 465.0 30.0 C470.3 38.3 470.8 41.3 480.0 50.0 C489.2 58.7 515.8 74.2 520.0 82.0 C524.2 89.8 510.8 91.5 505.0 97.0 C499.2 102.5 489.2 108.7 485.0 115.0 C480.8 121.3 479.2 127.5 480.0 135.0 C480.8 142.5 487.5 151.7 490.0 160.0 C492.5 168.3 493.8 179.2 495.0 185.0 C496.2 190.8 501.2 191.7 497.0 195.0 C492.8 198.3 477.8 200.8 470.0 205.0 C462.2 209.2 456.7 213.3 450.0 220.0 C443.3 226.7 435.8 236.7 430.0 245.0 C424.2 253.3 420.0 260.8 415.0 270.0 C410.0 279.2 405.0 286.7 400.0 300.0 C395.0 313.3 387.5 341.7 385.0 350.0"/><path d="M575.0 0.0 C573.3 4.2 569.2 17.5 565.0 25.0 C560.8 32.5 554.2 39.2 550.0 45.0 C545.8 50.8 545.0 53.8 540.0 60.0 C535.0 66.2 523.3 78.3 520.0 82.0"/><path d="M540.0 97.0 C545.0 97.5 560.0 97.0 570.0 100.0 C580.0 103.0 588.3 109.2 600.0 115.0 C611.7 120.8 626.7 128.3 640.0 135.0 C653.3 141.7 666.7 149.7 680.0 155.0 C693.3 160.3 706.7 164.8 720.0 167.0 C733.3 169.2 745.0 166.2 760.0 168.0 C775.0 169.8 795.0 171.8 810.0 178.0 C825.0 184.2 836.7 198.5 850.0 205.0 C863.3 211.5 876.7 212.8 890.0 217.0 C903.3 221.2 916.7 225.7 930.0 230.0 C943.3 234.3 956.7 238.3 970.0 243.0 C983.3 247.7 996.7 251.8 1010.0 258.0 C1023.3 264.2 1038.0 273.7 1050.0 280.0 C1062.0 286.3 1076.7 293.3 1082.0 296.0"/><path d="M849.0 0.0 C853.3 6.7 866.5 28.3 875.0 40.0 C883.5 51.7 890.8 61.3 900.0 70.0 C909.2 78.7 923.7 87.0 930.0 92.0 C936.3 97.0 938.3 94.5 938.0 100.0 C937.7 105.5 930.7 115.0 928.0 125.0 C925.3 135.0 923.0 150.0 922.0 160.0 C921.0 170.0 920.7 177.5 922.0 185.0 C923.3 192.5 925.7 197.2 930.0 205.0 C934.3 212.8 941.7 224.5 948.0 232.0 C954.3 239.5 957.7 244.0 968.0 250.0 C978.3 256.0 996.3 263.0 1010.0 268.0 C1023.7 273.0 1043.3 278.0 1050.0 280.0"/><path d="M720.0 167.0 C720.8 172.5 724.2 188.7 725.0 200.0 C725.8 211.3 725.8 225.0 725.0 235.0 C724.2 245.0 722.5 252.5 720.0 260.0 C717.5 267.5 713.3 273.3 710.0 280.0 C706.7 286.7 701.7 296.7 700.0 300.0"/><path d="M540.0 400.0 C535.8 402.5 521.7 408.3 515.0 415.0 C508.3 421.7 505.8 432.5 500.0 440.0 C494.2 447.5 487.5 453.3 480.0 460.0 C472.5 466.7 460.8 472.5 455.0 480.0 C449.2 487.5 449.2 492.3 445.0 505.0 C440.8 517.7 432.5 547.5 430.0 556.0"/><path d="M583.0 278.0 C584.2 281.7 588.3 291.3 590.0 300.0 C591.7 308.7 593.3 320.0 593.0 330.0 C592.7 340.0 591.0 352.0 588.0 360.0 C585.0 368.0 580.5 373.0 575.0 378.0 C569.5 383.0 560.8 386.3 555.0 390.0 C549.2 393.7 542.5 398.3 540.0 400.0"/><path d="M600.0 278.0 C602.5 280.8 608.3 290.5 615.0 295.0 C621.7 299.5 632.5 299.2 640.0 305.0 C647.5 310.8 653.3 320.8 660.0 330.0 C666.7 339.2 673.3 349.2 680.0 360.0 C686.7 370.8 691.7 383.3 700.0 395.0 C708.3 406.7 721.7 418.3 730.0 430.0 C738.3 441.7 743.3 454.2 750.0 465.0 C756.7 475.8 763.3 484.2 770.0 495.0 C776.7 505.8 783.3 519.8 790.0 530.0 C796.7 540.2 806.7 551.7 810.0 556.0"/><path d="M75.0 133.0 C74.7 135.8 72.2 145.0 73.0 150.0 C73.8 155.0 74.7 158.8 80.0 163.0 C85.3 167.2 97.5 170.5 105.0 175.0 C112.5 179.5 120.0 185.0 125.0 190.0 C130.0 195.0 131.2 198.7 135.0 205.0 C138.8 211.3 145.5 220.5 148.0 228.0 C150.5 235.5 151.3 243.0 150.0 250.0 C148.7 257.0 140.0 265.0 140.0 270.0 C140.0 275.0 143.3 273.3 150.0 280.0 C156.7 286.7 173.7 302.0 180.0 310.0 C186.3 318.0 187.5 321.7 188.0 328.0 C188.5 334.3 184.3 339.3 183.0 348.0 C181.7 356.7 179.7 372.2 180.0 380.0 C180.3 387.8 184.7 386.7 185.0 395.0 C185.3 403.3 183.3 420.8 182.0 430.0 C180.7 439.2 175.7 445.0 177.0 450.0 C178.3 455.0 182.8 456.7 190.0 460.0 C197.2 463.3 206.7 465.8 220.0 470.0 C233.3 474.2 261.7 482.5 270.0 485.0"/><path d="M55.0 477.0 C60.8 475.0 78.3 470.0 90.0 465.0 C101.7 460.0 110.0 452.2 125.0 447.0 C140.0 441.8 162.5 436.2 180.0 434.0 C197.5 431.8 217.0 434.7 230.0 434.0 C243.0 433.3 251.3 431.5 258.0 430.0 C264.7 428.5 263.0 428.3 270.0 425.0 C277.0 421.7 291.7 415.0 300.0 410.0 C308.3 405.0 312.5 400.3 320.0 395.0 C327.5 389.7 338.7 383.0 345.0 378.0 C351.3 373.0 351.3 369.7 358.0 365.0 C364.7 360.3 378.0 355.8 385.0 350.0 C392.0 344.2 395.8 338.3 400.0 330.0 C404.2 321.7 408.3 308.7 410.0 300.0 C411.7 291.3 409.0 284.7 410.0 278.0 C411.0 271.3 412.7 265.5 416.0 260.0 C419.3 254.5 427.7 247.5 430.0 245.0"/><path d="M358.0 365.0 C356.7 370.8 354.2 387.5 350.0 400.0 C345.8 412.5 338.8 425.0 333.0 440.0 C327.2 455.0 320.5 475.0 315.0 490.0 C309.5 505.0 305.0 519.0 300.0 530.0 C295.0 541.0 287.5 551.7 285.0 556.0"/><path d="M1082.0 282.0 C1078.3 283.3 1067.0 287.3 1060.0 290.0 C1053.0 292.7 1048.3 293.8 1040.0 298.0 C1031.7 302.2 1018.3 310.2 1010.0 315.0 C1001.7 319.8 995.3 321.2 990.0 327.0 C984.7 332.8 981.0 342.8 978.0 350.0 C975.0 357.2 974.5 365.0 972.0 370.0 C969.5 375.0 965.3 374.2 963.0 380.0 C960.7 385.8 961.0 398.7 958.0 405.0 C955.0 411.3 948.8 413.8 945.0 418.0 C941.2 422.2 937.2 425.5 935.0 430.0 C932.8 434.5 931.2 438.3 932.0 445.0 C932.8 451.7 935.3 461.7 940.0 470.0 C944.7 478.3 954.7 486.3 960.0 495.0 C965.3 503.7 968.7 513.7 972.0 522.0 C975.3 530.3 978.3 539.3 980.0 545.0 C981.7 550.7 981.7 554.2 982.0 556.0"/><path d="M497.0 197.0 C498.3 199.2 497.8 203.2 505.0 210.0 C512.2 216.8 530.0 229.3 540.0 238.0 C550.0 246.7 558.3 255.7 565.0 262.0 C571.7 268.3 572.8 273.7 580.0 276.0 C587.2 278.3 598.0 275.0 608.0 276.0 C618.0 277.0 634.7 281.0 640.0 282.0"/><path d="M613.0 205.0 C619.2 202.5 638.8 194.5 650.0 190.0 C661.2 185.5 668.3 181.8 680.0 178.0 C691.7 174.2 713.3 168.8 720.0 167.0"/><path d="M540.0 60.0 C541.3 62.5 546.0 69.2 548.0 75.0 C550.0 80.8 550.0 85.0 552.0 95.0 C554.0 105.0 557.0 122.5 560.0 135.0 C563.0 147.5 566.7 160.0 570.0 170.0 C573.3 180.0 577.5 189.2 580.0 195.0 C582.5 200.8 584.2 203.3 585.0 205.0"/></g><g fill="none" stroke="#7fadb8" stroke-width="2" stroke-linecap="round" stroke-linejoin="round"><path d="M0.0 122.0 C3.7 122.3 9.5 122.2 22.0 124.0 C34.5 125.8 60.5 131.8 75.0 133.0 C89.5 134.2 96.2 134.3 109.0 131.0 C121.8 127.7 137.5 118.5 152.0 113.0 C166.5 107.5 183.2 101.4 196.0 98.0 C208.8 94.6 216.7 93.2 229.0 92.5 C241.3 91.8 256.5 92.6 270.0 94.0 C283.5 95.4 297.0 100.2 310.0 101.0 C323.0 101.8 333.0 100.2 348.0 99.0 C363.0 97.8 383.0 95.7 400.0 94.0 C417.0 92.3 436.7 90.2 450.0 89.0 C463.3 87.8 470.0 86.5 480.0 87.0 C490.0 87.5 500.0 90.3 510.0 92.0 C520.0 93.7 535.0 96.2 540.0 97.0"/><path d="M448.0 0.0 C450.8 5.0 459.7 21.7 465.0 30.0 C470.3 38.3 470.8 41.3 480.0 50.0 C489.2 58.7 515.8 74.2 520.0 82.0 C524.2 89.8 510.8 91.5 505.0 97.0 C499.2 102.5 489.2 108.7 485.0 115.0 C480.8 121.3 479.2 127.5 480.0 135.0 C480.8 142.5 487.5 151.7 490.0 160.0 C492.5 168.3 493.8 179.2 495.0 185.0 C496.2 190.8 501.2 191.7 497.0 195.0 C492.8 198.3 477.8 200.8 470.0 205.0 C462.2 209.2 456.7 213.3 450.0 220.0 C443.3 226.7 435.8 236.7 430.0 245.0 C424.2 253.3 420.0 260.8 415.0 270.0 C410.0 279.2 405.0 286.7 400.0 300.0 C395.0 313.3 387.5 341.7 385.0 350.0"/><path d="M575.0 0.0 C573.3 4.2 569.2 17.5 565.0 25.0 C560.8 32.5 554.2 39.2 550.0 45.0 C545.8 50.8 545.0 53.8 540.0 60.0 C535.0 66.2 523.3 78.3 520.0 82.0"/><path d="M540.0 97.0 C545.0 97.5 560.0 97.0 570.0 100.0 C580.0 103.0 588.3 109.2 600.0 115.0 C611.7 120.8 626.7 128.3 640.0 135.0 C653.3 141.7 666.7 149.7 680.0 155.0 C693.3 160.3 706.7 164.8 720.0 167.0 C733.3 169.2 745.0 166.2 760.0 168.0 C775.0 169.8 795.0 171.8 810.0 178.0 C825.0 184.2 836.7 198.5 850.0 205.0 C863.3 211.5 876.7 212.8 890.0 217.0 C903.3 221.2 916.7 225.7 930.0 230.0 C943.3 234.3 956.7 238.3 970.0 243.0 C983.3 247.7 996.7 251.8 1010.0 258.0 C1023.3 264.2 1038.0 273.7 1050.0 280.0 C1062.0 286.3 1076.7 293.3 1082.0 296.0"/><path d="M849.0 0.0 C853.3 6.7 866.5 28.3 875.0 40.0 C883.5 51.7 890.8 61.3 900.0 70.0 C909.2 78.7 923.7 87.0 930.0 92.0 C936.3 97.0 938.3 94.5 938.0 100.0 C937.7 105.5 930.7 115.0 928.0 125.0 C925.3 135.0 923.0 150.0 922.0 160.0 C921.0 170.0 920.7 177.5 922.0 185.0 C923.3 192.5 925.7 197.2 930.0 205.0 C934.3 212.8 941.7 224.5 948.0 232.0 C954.3 239.5 957.7 244.0 968.0 250.0 C978.3 256.0 996.3 263.0 1010.0 268.0 C1023.7 273.0 1043.3 278.0 1050.0 280.0"/><path d="M720.0 167.0 C720.8 172.5 724.2 188.7 725.0 200.0 C725.8 211.3 725.8 225.0 725.0 235.0 C724.2 245.0 722.5 252.5 720.0 260.0 C717.5 267.5 713.3 273.3 710.0 280.0 C706.7 286.7 701.7 296.7 700.0 300.0"/><path d="M540.0 400.0 C535.8 402.5 521.7 408.3 515.0 415.0 C508.3 421.7 505.8 432.5 500.0 440.0 C494.2 447.5 487.5 453.3 480.0 460.0 C472.5 466.7 460.8 472.5 455.0 480.0 C449.2 487.5 449.2 492.3 445.0 505.0 C440.8 517.7 432.5 547.5 430.0 556.0"/><path d="M583.0 278.0 C584.2 281.7 588.3 291.3 590.0 300.0 C591.7 308.7 593.3 320.0 593.0 330.0 C592.7 340.0 591.0 352.0 588.0 360.0 C585.0 368.0 580.5 373.0 575.0 378.0 C569.5 383.0 560.8 386.3 555.0 390.0 C549.2 393.7 542.5 398.3 540.0 400.0"/><path d="M600.0 278.0 C602.5 280.8 608.3 290.5 615.0 295.0 C621.7 299.5 632.5 299.2 640.0 305.0 C647.5 310.8 653.3 320.8 660.0 330.0 C666.7 339.2 673.3 349.2 680.0 360.0 C686.7 370.8 691.7 383.3 700.0 395.0 C708.3 406.7 721.7 418.3 730.0 430.0 C738.3 441.7 743.3 454.2 750.0 465.0 C756.7 475.8 763.3 484.2 770.0 495.0 C776.7 505.8 783.3 519.8 790.0 530.0 C796.7 540.2 806.7 551.7 810.0 556.0"/><path d="M75.0 133.0 C74.7 135.8 72.2 145.0 73.0 150.0 C73.8 155.0 74.7 158.8 80.0 163.0 C85.3 167.2 97.5 170.5 105.0 175.0 C112.5 179.5 120.0 185.0 125.0 190.0 C130.0 195.0 131.2 198.7 135.0 205.0 C138.8 211.3 145.5 220.5 148.0 228.0 C150.5 235.5 151.3 243.0 150.0 250.0 C148.7 257.0 140.0 265.0 140.0 270.0 C140.0 275.0 143.3 273.3 150.0 280.0 C156.7 286.7 173.7 302.0 180.0 310.0 C186.3 318.0 187.5 321.7 188.0 328.0 C188.5 334.3 184.3 339.3 183.0 348.0 C181.7 356.7 179.7 372.2 180.0 380.0 C180.3 387.8 184.7 386.7 185.0 395.0 C185.3 403.3 183.3 420.8 182.0 430.0 C180.7 439.2 175.7 445.0 177.0 450.0 C178.3 455.0 182.8 456.7 190.0 460.0 C197.2 463.3 206.7 465.8 220.0 470.0 C233.3 474.2 261.7 482.5 270.0 485.0"/><path d="M55.0 477.0 C60.8 475.0 78.3 470.0 90.0 465.0 C101.7 460.0 110.0 452.2 125.0 447.0 C140.0 441.8 162.5 436.2 180.0 434.0 C197.5 431.8 217.0 434.7 230.0 434.0 C243.0 433.3 251.3 431.5 258.0 430.0 C264.7 428.5 263.0 428.3 270.0 425.0 C277.0 421.7 291.7 415.0 300.0 410.0 C308.3 405.0 312.5 400.3 320.0 395.0 C327.5 389.7 338.7 383.0 345.0 378.0 C351.3 373.0 351.3 369.7 358.0 365.0 C364.7 360.3 378.0 355.8 385.0 350.0 C392.0 344.2 395.8 338.3 400.0 330.0 C404.2 321.7 408.3 308.7 410.0 300.0 C411.7 291.3 409.0 284.7 410.0 278.0 C411.0 271.3 412.7 265.5 416.0 260.0 C419.3 254.5 427.7 247.5 430.0 245.0"/><path d="M358.0 365.0 C356.7 370.8 354.2 387.5 350.0 400.0 C345.8 412.5 338.8 425.0 333.0 440.0 C327.2 455.0 320.5 475.0 315.0 490.0 C309.5 505.0 305.0 519.0 300.0 530.0 C295.0 541.0 287.5 551.7 285.0 556.0"/><path d="M1082.0 282.0 C1078.3 283.3 1067.0 287.3 1060.0 290.0 C1053.0 292.7 1048.3 293.8 1040.0 298.0 C1031.7 302.2 1018.3 310.2 1010.0 315.0 C1001.7 319.8 995.3 321.2 990.0 327.0 C984.7 332.8 981.0 342.8 978.0 350.0 C975.0 357.2 974.5 365.0 972.0 370.0 C969.5 375.0 965.3 374.2 963.0 380.0 C960.7 385.8 961.0 398.7 958.0 405.0 C955.0 411.3 948.8 413.8 945.0 418.0 C941.2 422.2 937.2 425.5 935.0 430.0 C932.8 434.5 931.2 438.3 932.0 445.0 C932.8 451.7 935.3 461.7 940.0 470.0 C944.7 478.3 954.7 486.3 960.0 495.0 C965.3 503.7 968.7 513.7 972.0 522.0 C975.3 530.3 978.3 539.3 980.0 545.0 C981.7 550.7 981.7 554.2 982.0 556.0"/><path d="M497.0 197.0 C498.3 199.2 497.8 203.2 505.0 210.0 C512.2 216.8 530.0 229.3 540.0 238.0 C550.0 246.7 558.3 255.7 565.0 262.0 C571.7 268.3 572.8 273.7 580.0 276.0 C587.2 278.3 598.0 275.0 608.0 276.0 C618.0 277.0 634.7 281.0 640.0 282.0"/><path d="M613.0 205.0 C619.2 202.5 638.8 194.5 650.0 190.0 C661.2 185.5 668.3 181.8 680.0 178.0 C691.7 174.2 713.3 168.8 720.0 167.0"/><path d="M540.0 60.0 C541.3 62.5 546.0 69.2 548.0 75.0 C550.0 80.8 550.0 85.0 552.0 95.0 C554.0 105.0 557.0 122.5 560.0 135.0 C563.0 147.5 566.7 160.0 570.0 170.0 C573.3 180.0 577.5 189.2 580.0 195.0 C582.5 200.8 584.2 203.3 585.0 205.0"/></g><text x="487.0" y="18.0" class="ml" font-size="13" font-weight="normal" letter-spacing="0">Kidlington</text><text x="609.0" y="18.0" class="ml" font-size="12" font-weight="normal" letter-spacing="0">Islip</text><text x="655.0" y="38.0" class="ml" font-size="12" font-weight="normal" letter-spacing="0">Noke</text><text x="76.0" y="114.0" class="ml" font-size="14" font-weight="normal" letter-spacing="0">Witney</text><text x="442.0" y="138.0" class="ml" font-size="13" font-weight="normal" letter-spacing="0">Wytham</text><text x="384.0" y="256.0" class="ml" font-size="13" font-weight="normal" letter-spacing="0">Cumnor</text><text x="159.0" y="282.0" class="ml" font-size="13" font-weight="normal" letter-spacing="0">Standlake</text><text x="1010.0" y="236.0" class="ml" font-size="13" font-weight="normal" letter-spacing="0">Tiddington</text><text x="21.0" y="422.0" class="ml" font-size="13" font-weight="normal" letter-spacing="0">Hinton Waldrist</text><text x="485.0" y="375.0" class="ml" font-size="13" font-weight="normal" letter-spacing="0">Sunningwell</text><text x="621.0" y="431.0" class="ml" font-size="13" font-weight="normal" letter-spacing="0">Radley</text><text x="890.0" y="452.0" class="ml" font-size="13" font-weight="normal" letter-spacing="0">Stadhampton</text><text x="801.0" y="538.0" class="ml" font-size="13" font-weight="normal" letter-spacing="0">Berinsfield</text><text x="309.5" y="10.5" class="ml" font-size="13" text-anchor="middle">Long</text><text x="309.5" y="22" class="ml" font-size="13" text-anchor="middle">Hanborough</text><text x="615.0" y="149.0" class="ml" font-size="11" font-weight="normal" letter-spacing="1.6">NORTHWAY</text><text x="640.0" y="178.0" class="ml" font-size="11" font-weight="normal" letter-spacing="1.6">HEADINGTON</text><text x="691.0" y="203.0" class="ml" font-size="11" font-weight="normal" letter-spacing="1.8">WOOD</text><text x="695.0" y="217.0" class="ml" font-size="11" font-weight="normal" letter-spacing="1.8">FARM</text><text x="651.0" y="268.0" class="ml" font-size="11" font-weight="normal" letter-spacing="1.8">COWLEY</text><text x="624.0" y="301.0" class="ml" font-size="11" font-weight="normal" letter-spacing="1.8">LITTLEMORE</text><text x="466.0" y="207.0" class="ml" font-size="11" font-weight="normal" letter-spacing="1.8">BOTLEY</text><text x="495.0" y="486.0" class="ml" font-size="17" font-weight="normal" letter-spacing="0">Abingdon-</text><text x="493.0" y="505.0" class="ml" font-size="17" font-weight="normal" letter-spacing="0">on-Thames</text><text x="422.0" y="438.0" class="ml" font-size="13" font-weight="normal" letter-spacing="0">EGUD</text><path d="M438.5 410 V424 M430.5 416.5 L438.5 414 L446.5 416.5 M435 423 H442" stroke="#e8efe0" stroke-width="1.8" fill="none"/><text x="555.0" y="204.0" class="ml" font-size="17" font-weight="bold" letter-spacing="0">Oxford</text><g transform="translate(541.0 100.0)"><path d="M3.2 1 H24.3 Q27 1 27 3.7 V25 Q27 27.8 24 30.5 L13.8 38.8 L3.6 30.5 Q0.6 27.8 0.6 25 V3.7 Q0.6 1 3.2 1 Z" fill="#6ea4c8" stroke="#d6ece4" stroke-width="1.9"/><path d="M10.9 8.2 L16.8 8.2 L14.6 14.4 L18 15.9 L13.6 26.5 L13.4 19.2 L10.2 18.9 Z" fill="#fff"/></g><g transform="translate(574.0 129.0)"><path d="M3.2 1 H24.3 Q27 1 27 3.7 V25 Q27 27.8 24 30.5 L13.8 38.8 L3.6 30.5 Q0.6 27.8 0.6 25 V3.7 Q0.6 1 3.2 1 Z" fill="#6ea4c8" stroke="#d6ece4" stroke-width="1.9"/><path d="M10.9 8.2 L16.8 8.2 L14.6 14.4 L18 15.9 L13.6 26.5 L13.4 19.2 L10.2 18.9 Z" fill="#fff"/></g><g transform="translate(526.0 158.0)"><path d="M3.2 1 H24.3 Q27 1 27 3.7 V25 Q27 27.8 24 30.5 L13.8 38.8 L3.6 30.5 Q0.6 27.8 0.6 25 V3.7 Q0.6 1 3.2 1 Z" fill="#6ea4c8" stroke="#d6ece4" stroke-width="1.9"/><path d="M10.9 8.2 L16.8 8.2 L14.6 14.4 L18 15.9 L13.6 26.5 L13.4 19.2 L10.2 18.9 Z" fill="#fff"/></g><g transform="translate(567.0 165.0)"><path d="M3.2 1 H24.3 Q27 1 27 3.7 V25 Q27 27.8 24 30.5 L13.8 38.8 L3.6 30.5 Q0.6 27.8 0.6 25 V3.7 Q0.6 1 3.2 1 Z" fill="#6ea4c8" stroke="#d6ece4" stroke-width="1.9"/><path d="M10.9 8.2 L16.8 8.2 L14.6 14.4 L18 15.9 L13.6 26.5 L13.4 19.2 L10.2 18.9 Z" fill="#fff"/></g><g transform="translate(479.0 200.0)"><path d="M3.2 1 H24.3 Q27 1 27 3.7 V25 Q27 27.8 24 30.5 L13.8 38.8 L3.6 30.5 Q0.6 27.8 0.6 25 V3.7 Q0.6 1 3.2 1 Z" fill="#6ea4c8" stroke="#d6ece4" stroke-width="1.9"/><path d="M10.9 8.2 L16.8 8.2 L14.6 14.4 L18 15.9 L13.6 26.5 L13.4 19.2 L10.2 18.9 Z" fill="#fff"/></g><g transform="translate(493.0 402.0)"><path d="M3.2 1 H24.3 Q27 1 27 3.7 V25 Q27 27.8 24 30.5 L13.8 38.8 L3.6 30.5 Q0.6 27.8 0.6 25 V3.7 Q0.6 1 3.2 1 Z" fill="#6ea4c8" stroke="#d6ece4" stroke-width="1.9"/><path d="M10.9 8.2 L16.8 8.2 L14.6 14.4 L18 15.9 L13.6 26.5 L13.4 19.2 L10.2 18.9 Z" fill="#fff"/></g><g transform="translate(1039 438)"><rect x="0" y="0" width="33" height="96" rx="4" fill="#fff"/><line x1="2" y1="32.5" x2="31" y2="32.5" stroke="#ddd"/><line x1="2" y1="64" x2="31" y2="64" stroke="#ddd"/><path d="M16.5 10 V22 M10.5 16 H22.5" stroke="#333" stroke-width="2.6"/><path d="M10.5 48 H22.5" stroke="#333" stroke-width="2.6"/><path d="M16.5 72 L12.5 80 H20.5 Z" fill="#333"/><path d="M16.5 89 L12.5 81 H20.5 Z" fill="#ccc"/></g><rect x="786" y="545" width="296" height="13" fill="#ffffff" opacity="0.55"/><text x="790" y="558" font-size="13" fill="#333" class="ml2" xml:space="preserve">© Mapbox © OpenStreetMap  <tspan font-weight="bold">Improve this map</tspan></text><g transform="translate(1 459)"><circle cx="27.5" cy="27.5" r="27" fill="#6cbb4c" stroke="#e8f5e0" stroke-width="1.5"/><path d="M40 17 Q37 19 38 22 Q41 24 44 22 A17 17 0 1 1 36 13.5 Q35 17 40 17 Z" fill="none" stroke="#eaf6e2" stroke-width="1.4"/><circle cx="21" cy="22" r="3" fill="none" stroke="#eaf6e2" stroke-width="1.3"/><circle cx="23" cy="34" r="3" fill="none" stroke="#eaf6e2" stroke-width="1.3"/><circle cx="30" cy="27" r="1.8" fill="none" stroke="#eaf6e2" stroke-width="1.2"/><circle cx="32" cy="36" r="1.5" fill="#eaf6e2"/><circle cx="15" cy="29" r="1" fill="#eaf6e2"/></g><g transform="translate(9 538)"><circle cx="9.5" cy="9.5" r="8.5" fill="#fff" stroke="#333" stroke-width="0.8"/><path d="M6 13 L7 8 Q9 5 12 6 Q14 8 12 11 L7 13 Z" fill="#444"/><text x="22" y="16" font-size="17" font-weight="bold" fill="#fff" class="ml2" stroke="#333" stroke-width="0.4">mapbox</text></g></svg></div>

<div class="abs tx" style="left:1136.5px;top:162.99px;font-size:26px;line-height:26px;color:#fff;font-weight:bold;letter-spacing:-0.35px;">Substation Readings</div>
<div class="abs uline" style="left:1138px;top:192px;width:742px"></div>
<div class="abs" style="left:1861px;top:216px;width:7px;height:384px;background:#2f4556;border-radius:3px"></div>
<div class="abs" style="left:1861px;top:216px;width:7px;height:209px;background:#5c93a8;border-radius:3px"></div>
<div class="abs" style="left:1153px;top:263px;width:665px;height:337px;overflow:hidden">
<div class="abs" style="left:0;top:0.00px;width:665px;height:55.25px;background:#ececec"></div><div class="abs" style="left:13.799999999999955px;top:5.40px;width:44px;height:44px;border-radius:50%;background:#7d7fd4"></div><div class="abs tx" style="left:81.8px;top:18.81px;font-size:17px;line-height:17px;color:#111;font-weight:normal;letter-spacing:-0.05px;-webkit-text-stroke:0.45px #111;">OXFORD C2S0 AMPS</div><div class="abs tx" style="left:268.7px;top:17.96px;font-size:18px;line-height:18px;color:#1a1a1a;font-weight:normal;letter-spacing:0.05px;">LineCurrent</div><div class="abs tx" style="left:375.5px;top:18.39px;font-size:17.5px;line-height:17.5px;color:#164a73;font-weight:normal;letter-spacing:0px;-webkit-text-stroke:0.5px #164a73;">592 A</div><div class="abs tx" style="left:517.5px;top:17.79px;font-size:18.2px;line-height:18.2px;color:#1a1a1a;font-weight:normal;letter-spacing:0.0px;">08/08/2023 12:33</div><div class="abs" style="left:0;top:54.75px;width:665px;height:55.25px;background:#c9cbcd"></div><div class="abs" style="left:13.799999999999955px;top:60.15px;width:44px;height:44px;border-radius:50%;background:#f0112e"></div><div class="abs tx" style="left:81.8px;top:73.56px;font-size:17px;line-height:17px;color:#111;font-weight:normal;letter-spacing:-0.05px;-webkit-text-stroke:0.45px #111;">OXFORD C10L5 AMPS</div><div class="abs tx" style="left:268.7px;top:72.71px;font-size:18px;line-height:18px;color:#1a1a1a;font-weight:normal;letter-spacing:0.05px;">LineCurrent</div><div class="abs tx" style="left:375.5px;top:73.14px;font-size:17.5px;line-height:17.5px;color:#164a73;font-weight:normal;letter-spacing:0px;-webkit-text-stroke:0.5px #164a73;">7.6 A</div><div class="abs tx" style="left:517.5px;top:72.54px;font-size:18.2px;line-height:18.2px;color:#1a1a1a;font-weight:normal;letter-spacing:0.0px;">08/08/2023 12:33</div><div class="abs" style="left:0;top:109.50px;width:665px;height:55.25px;background:#ececec"></div><div class="abs" style="left:13.799999999999955px;top:114.90px;width:44px;height:44px;border-radius:50%;background:#7cc163"></div><div class="abs tx" style="left:81.8px;top:128.31px;font-size:17px;line-height:17px;color:#111;font-weight:normal;letter-spacing:-0.05px;-webkit-text-stroke:0.45px #111;">OXFORD C16L5 AMPS</div><div class="abs tx" style="left:268.7px;top:127.46px;font-size:18px;line-height:18px;color:#1a1a1a;font-weight:normal;letter-spacing:0.05px;">LineCurrent</div><div class="abs tx" style="left:375.5px;top:127.89px;font-size:17.5px;line-height:17.5px;color:#164a73;font-weight:normal;letter-spacing:0px;-webkit-text-stroke:0.5px #164a73;">80 A</div><div class="abs tx" style="left:517.5px;top:127.29px;font-size:18.2px;line-height:18.2px;color:#1a1a1a;font-weight:normal;letter-spacing:0.0px;">08/08/2023 12:33</div><div class="abs" style="left:0;top:164.25px;width:665px;height:55.25px;background:#c9cbcd"></div><div class="abs" style="left:13.799999999999955px;top:169.65px;width:44px;height:44px;border-radius:50%;background:#4aa6d8"></div><div class="abs tx" style="left:81.8px;top:183.06px;font-size:17px;line-height:17px;color:#111;font-weight:normal;letter-spacing:-0.05px;-webkit-text-stroke:0.45px #111;">OXFORD C12L5 AMPS</div><div class="abs tx" style="left:268.7px;top:182.21px;font-size:18px;line-height:18px;color:#1a1a1a;font-weight:normal;letter-spacing:0.05px;">LineCurrent</div><div class="abs tx" style="left:375.5px;top:182.64px;font-size:17.5px;line-height:17.5px;color:#164a73;font-weight:normal;letter-spacing:0px;-webkit-text-stroke:0.5px #164a73;">95.6 A</div><div class="abs tx" style="left:517.5px;top:182.04px;font-size:18.2px;line-height:18.2px;color:#1a1a1a;font-weight:normal;letter-spacing:0.0px;">08/08/2023 12:33</div><div class="abs" style="left:0;top:219.00px;width:665px;height:55.25px;background:#ececec"></div><div class="abs" style="left:13.799999999999955px;top:224.40px;width:44px;height:44px;border-radius:50%;background:#f27fc9"></div><div class="abs tx" style="left:81.8px;top:237.81px;font-size:17px;line-height:17px;color:#111;font-weight:normal;letter-spacing:-0.05px;-webkit-text-stroke:0.45px #111;">OXFORD C8L5 AMPS</div><div class="abs tx" style="left:268.7px;top:236.96px;font-size:18px;line-height:18px;color:#1a1a1a;font-weight:normal;letter-spacing:0.05px;">LineCurrent</div><div class="abs tx" style="left:375.5px;top:237.39px;font-size:17.5px;line-height:17.5px;color:#164a73;font-weight:normal;letter-spacing:0px;-webkit-text-stroke:0.5px #164a73;">151.6 A</div><div class="abs tx" style="left:517.5px;top:236.79px;font-size:18.2px;line-height:18.2px;color:#1a1a1a;font-weight:normal;letter-spacing:0.0px;">08/08/2023 12:33</div><div class="abs" style="left:0;top:273.75px;width:665px;height:55.25px;background:#c9cbcd"></div><div class="abs" style="left:13.799999999999955px;top:279.15px;width:44px;height:44px;border-radius:50%;background:#fd8008"></div><div class="abs tx" style="left:81.8px;top:292.56px;font-size:17px;line-height:17px;color:#111;font-weight:normal;letter-spacing:-0.05px;-webkit-text-stroke:0.45px #111;">OXFORD C1S0 AMPS</div><div class="abs tx" style="left:268.7px;top:291.71px;font-size:18px;line-height:18px;color:#1a1a1a;font-weight:normal;letter-spacing:0.05px;">LineCurrent</div><div class="abs tx" style="left:375.5px;top:292.14px;font-size:17.5px;line-height:17.5px;color:#164a73;font-weight:normal;letter-spacing:0px;-webkit-text-stroke:0.5px #164a73;">160 A</div><div class="abs tx" style="left:517.5px;top:291.54px;font-size:18.2px;line-height:18.2px;color:#1a1a1a;font-weight:normal;letter-spacing:0.0px;">08/08/2023 12:33</div><div class="abs" style="left:0;top:328.50px;width:665px;height:55.25px;background:#ececec"></div><div class="abs" style="left:13.799999999999955px;top:333.90px;width:44px;height:44px;border-radius:50%;background:#8e4b22"></div><div class="abs tx" style="left:81.8px;top:347.31px;font-size:17px;line-height:17px;color:#111;font-weight:normal;letter-spacing:-0.05px;-webkit-text-stroke:0.45px #111;">OXFORD C3S0 AMPS</div><div class="abs tx" style="left:268.7px;top:346.46px;font-size:18px;line-height:18px;color:#1a1a1a;font-weight:normal;letter-spacing:0.05px;">LineCurrent</div><div class="abs tx" style="left:375.5px;top:346.89px;font-size:17.5px;line-height:17.5px;color:#164a73;font-weight:normal;letter-spacing:0px;-webkit-text-stroke:0.5px #164a73;">58 A</div><div class="abs tx" style="left:517.5px;top:346.29px;font-size:18.2px;line-height:18.2px;color:#1a1a1a;font-weight:normal;letter-spacing:0.0px;">08/08/2023 12:33</div><div class="abs" style="left:75.5px;top:0;width:0;height:337px;border-left:2px dashed #5a5a5a"></div><div class="abs" style="left:262.6px;top:0;width:0;height:337px;border-left:2px dashed #5a5a5a"></div><div class="abs" style="left:368.5px;top:0;width:0;height:337px;border-left:2px dashed #5a5a5a"></div><div class="abs" style="left:510.5px;top:0;width:0;height:337px;border-left:2px dashed #5a5a5a"></div></div>
<div class="abs" style="left:1228.5px;top:216px;width:2px;height:46px;background:#6b7580"></div>
<div class="abs" style="left:1415.6px;top:216px;width:2px;height:46px;background:#6b7580"></div>
<div class="abs" style="left:1521.5px;top:216px;width:2px;height:46px;background:#6b7580"></div>
<div class="abs" style="left:1663.5px;top:216px;width:2px;height:46px;background:#6b7580"></div>
<svg class="abs" style="left:1159px;top:226px" width="50" height="26" viewBox="0 0 50 26"><path d="M3.5 19 C10 5.5 17 2.6 25 2.6 C33 2.6 40 5.5 46.5 18" fill="none" stroke="#fff" stroke-width="3.3" stroke-linecap="round"/><circle cx="25.4" cy="14.2" r="7" fill="none" stroke="#fff" stroke-width="3.3"/></svg>
<div class="abs tx" style="left:1235.0px;top:229.54px;font-size:18.5px;line-height:18.5px;color:#fff;font-weight:bold;letter-spacing:-0.4px;">Feeder</div>
<div class="abs sbtn" style="left:1298px;top:220px;width:30px;height:37px"></div><div class="abs" style="left:1307px;top:227.5px;line-height:0"><svg width="13" height="22" viewBox="0 0 13 22"><path d="M1.3 9.4 L6.3 3.4 L11.3 9.4 Z M1.3 13.2 L6.3 19 L11.3 13.2 Z" fill="none" stroke="#e8f2f6" stroke-width="1.9" stroke-linejoin="round"/></svg></div>
<div class="abs tx" style="left:1422.5px;top:229.54px;font-size:18.5px;line-height:18.5px;color:#fff;font-weight:bold;letter-spacing:-0.4px;">Type</div>
<div class="abs tx" style="left:1529.0px;top:229.54px;font-size:18.5px;line-height:18.5px;color:#fff;font-weight:bold;letter-spacing:-0.5px;">Value (unit)</div>
<div class="abs sbtn" style="left:1630px;top:220px;width:30px;height:37px"></div><div class="abs" style="left:1639px;top:227.5px;line-height:0"><svg width="13" height="22" viewBox="0 0 13 22"><path d="M1.3 9.4 L6.3 3.4 L11.3 9.4 Z M1.3 13.2 L6.3 19 L11.3 13.2 Z" fill="none" stroke="#e8f2f6" stroke-width="1.9" stroke-linejoin="round"/></svg></div>
<div class="abs tx" style="left:1670.5px;top:229.54px;font-size:18.5px;line-height:18.5px;color:#fff;font-weight:bold;letter-spacing:-0.5px;">Timestamp</div>
<div class="abs tx" style="left:1136.5px;top:663.99px;font-size:26px;line-height:26px;color:#fff;font-weight:bold;letter-spacing:-0.35px;">Substations</div>
<div class="abs uline" style="left:1138px;top:692px;width:742px"></div>
<div class="abs" style="left:1861px;top:716px;width:7px;height:385px;background:#2c4152;border-radius:3px"></div>
<div class="abs" style="left:1153px;top:762.30px;width:677px;height:48.30px;background:#ececec"></div>
<div class="abs tx" style="left:1158.6px;top:779.21px;font-size:18px;line-height:18px;color:#111;font-weight:normal;letter-spacing:0px;-webkit-text-stroke:0.45px #111;">Frenchay Road</div>
<div class="abs tx" style="left:1454.6px;top:778.79px;font-size:18.5px;line-height:18.5px;color:#222;font-weight:normal;letter-spacing:0px;">Primary</div>
<div class="abs tx" style="left:1615.2px;top:779.21px;font-size:18px;line-height:18px;color:#222;font-weight:normal;letter-spacing:0px;">4914</div>
<svg class="abs" style="left:1733px;top:775.25px" width="25" height="25" viewBox="0 0 25 25"><circle cx="12.5" cy="12.5" r="11.7" fill="#b57ccc" stroke="#eddcf3" stroke-width="1.3"/><path d="M5.2 16.5 A7.8 7.8 0 1 1 19.8 16.5" fill="none" stroke="#fff" stroke-width="1.7"/><path d="M12.5 14 L16.8 8" stroke="#fff" stroke-width="2.2" stroke-linecap="round"/></svg>
<div class="abs" style="left:1153px;top:810.20px;width:677px;height:47.70px;background:#c9cbcd"></div>
<div class="abs tx" style="left:1158.6px;top:826.81px;font-size:18px;line-height:18px;color:#111;font-weight:normal;letter-spacing:0px;-webkit-text-stroke:0.45px #111;">North Hinksey</div>
<div class="abs tx" style="left:1454.6px;top:826.39px;font-size:18.5px;line-height:18.5px;color:#222;font-weight:normal;letter-spacing:0px;">Primary</div>
<div class="abs tx" style="left:1615.2px;top:826.81px;font-size:18px;line-height:18px;color:#222;font-weight:normal;letter-spacing:0px;">4919</div>
<svg class="abs" style="left:1733px;top:822.85px" width="25" height="25" viewBox="0 0 25 25"><circle cx="12.5" cy="12.5" r="11.7" fill="#b57ccc" stroke="#eddcf3" stroke-width="1.3"/><path d="M5.2 16.5 A7.8 7.8 0 1 1 19.8 16.5" fill="none" stroke="#fff" stroke-width="1.7"/><path d="M12.5 14 L16.8 8" stroke="#fff" stroke-width="2.2" stroke-linecap="round"/></svg>
<div class="abs" style="left:1153px;top:857.50px;width:677px;height:47.50px;background:#ececec"></div>
<div class="abs tx" style="left:1158.6px;top:874.01px;font-size:18px;line-height:18px;color:#111;font-weight:normal;letter-spacing:0px;-webkit-text-stroke:0.45px #111;">Oxford</div>
<div class="abs tx" style="left:1454.6px;top:873.59px;font-size:18.5px;line-height:18.5px;color:#222;font-weight:normal;letter-spacing:0px;">Primary</div>
<div class="abs tx" style="left:1615.2px;top:874.01px;font-size:18px;line-height:18px;color:#222;font-weight:normal;letter-spacing:0px;">4902</div>
<svg class="abs" style="left:1733px;top:870.05px" width="25" height="25" viewBox="0 0 25 25"><circle cx="12.5" cy="12.5" r="11.7" fill="#b57ccc" stroke="#eddcf3" stroke-width="1.3"/><path d="M5.2 16.5 A7.8 7.8 0 1 1 19.8 16.5" fill="none" stroke="#fff" stroke-width="1.7"/><path d="M12.5 14 L16.8 8" stroke="#fff" stroke-width="2.2" stroke-linecap="round"/></svg>
<div class="abs" style="left:1153px;top:904.60px;width:677px;height:47.40px;background:#c9cbcd"></div>
<div class="abs tx" style="left:1158.6px;top:921.06px;font-size:18px;line-height:18px;color:#111;font-weight:normal;letter-spacing:0px;-webkit-text-stroke:0.45px #111;">St. Ebbes</div>
<div class="abs tx" style="left:1454.6px;top:920.64px;font-size:18.5px;line-height:18.5px;color:#222;font-weight:normal;letter-spacing:0px;">Primary</div>
<div class="abs tx" style="left:1615.2px;top:921.06px;font-size:18px;line-height:18px;color:#222;font-weight:normal;letter-spacing:0px;">4907</div>
<svg class="abs" style="left:1733px;top:917.10px" width="25" height="25" viewBox="0 0 25 25"><circle cx="12.5" cy="12.5" r="11.7" fill="#b57ccc" stroke="#eddcf3" stroke-width="1.3"/><path d="M5.2 16.5 A7.8 7.8 0 1 1 19.8 16.5" fill="none" stroke="#fff" stroke-width="1.7"/><path d="M12.5 14 L16.8 8" stroke="#fff" stroke-width="2.2" stroke-linecap="round"/></svg>
<div class="abs" style="left:1153px;top:951.60px;width:677px;height:47.50px;background:#ececec"></div>
<div class="abs tx" style="left:1158.6px;top:968.11px;font-size:18px;line-height:18px;color:#111;font-weight:normal;letter-spacing:0px;-webkit-text-stroke:0.45px #111;">University Parks</div>
<div class="abs tx" style="left:1454.6px;top:967.69px;font-size:18.5px;line-height:18.5px;color:#222;font-weight:normal;letter-spacing:0px;">Primary</div>
<div class="abs tx" style="left:1615.2px;top:968.11px;font-size:18px;line-height:18px;color:#222;font-weight:normal;letter-spacing:0px;">4910</div>
<svg class="abs" style="left:1733px;top:964.15px" width="25" height="25" viewBox="0 0 25 25"><circle cx="12.5" cy="12.5" r="11.7" fill="#b57ccc" stroke="#eddcf3" stroke-width="1.3"/><path d="M5.2 16.5 A7.8 7.8 0 1 1 19.8 16.5" fill="none" stroke="#fff" stroke-width="1.7"/><path d="M12.5 14 L16.8 8" stroke="#fff" stroke-width="2.2" stroke-linecap="round"/></svg>
<div class="abs" style="left:1153px;top:998.70px;width:677px;height:46.20px;background:#c9cbcd"></div>
<div class="abs tx" style="left:1158.6px;top:1014.56px;font-size:18px;line-height:18px;color:#111;font-weight:normal;letter-spacing:0px;-webkit-text-stroke:0.45px #111;">Wootton Road</div>
<div class="abs tx" style="left:1454.6px;top:1014.14px;font-size:18.5px;line-height:18.5px;color:#222;font-weight:normal;letter-spacing:0px;">Primary</div>
<div class="abs tx" style="left:1615.2px;top:1014.56px;font-size:18px;line-height:18px;color:#222;font-weight:normal;letter-spacing:0px;">4916</div>
<svg class="abs" style="left:1733px;top:1010.60px" width="25" height="25" viewBox="0 0 25 25"><circle cx="12.5" cy="12.5" r="11.7" fill="#b57ccc" stroke="#eddcf3" stroke-width="1.3"/><path d="M5.2 16.5 A7.8 7.8 0 1 1 19.8 16.5" fill="none" stroke="#fff" stroke-width="1.7"/><path d="M12.5 14 L16.8 8" stroke="#fff" stroke-width="2.2" stroke-linecap="round"/></svg>
<div class="abs" style="left:1448.4px;top:762.3px;width:0;height:282.3px;border-left:2px dashed #5a5a5a"></div>
<div class="abs" style="left:1448.4px;top:716.4px;width:2px;height:46px;background:#6b7580"></div>
<div class="abs" style="left:1608.4px;top:762.3px;width:0;height:282.3px;border-left:2px dashed #5a5a5a"></div>
<div class="abs" style="left:1608.4px;top:716.4px;width:2px;height:46px;background:#6b7580"></div>
<div class="abs" style="left:1717.2px;top:762.3px;width:0;height:282.3px;border-left:2px dashed #5a5a5a"></div>
<div class="abs" style="left:1717.2px;top:716.4px;width:2px;height:46px;background:#6b7580"></div>
<div class="abs tx" style="left:1158.0px;top:730.64px;font-size:18.5px;line-height:18.5px;color:#fff;font-weight:bold;letter-spacing:-0.4px;">Name</div>
<div class="abs sbtn" style="left:1212px;top:721px;width:31px;height:37px"></div><div class="abs" style="left:1221px;top:729px;line-height:0"><svg width="14" height="10" viewBox="0 0 14 10"><path d="M2 8 L7 2.5 L12 8 Z" fill="none" stroke="#e8f2f6" stroke-width="2" stroke-linejoin="round"/></svg></div>
<div class="abs tx" style="left:1455.0px;top:730.64px;font-size:18.5px;line-height:18.5px;color:#fff;font-weight:bold;letter-spacing:-0.4px;">Type</div>
<div class="abs tx" style="left:1615.0px;top:730.64px;font-size:18.5px;line-height:18.5px;color:#fff;font-weight:bold;letter-spacing:-0.4px;">NRN</div>
<div class="abs tx" style="left:1723.0px;top:730.64px;font-size:18.5px;line-height:18.5px;color:#fff;font-weight:bold;letter-spacing:-0.4px;">Dash</div>
</body></html>
